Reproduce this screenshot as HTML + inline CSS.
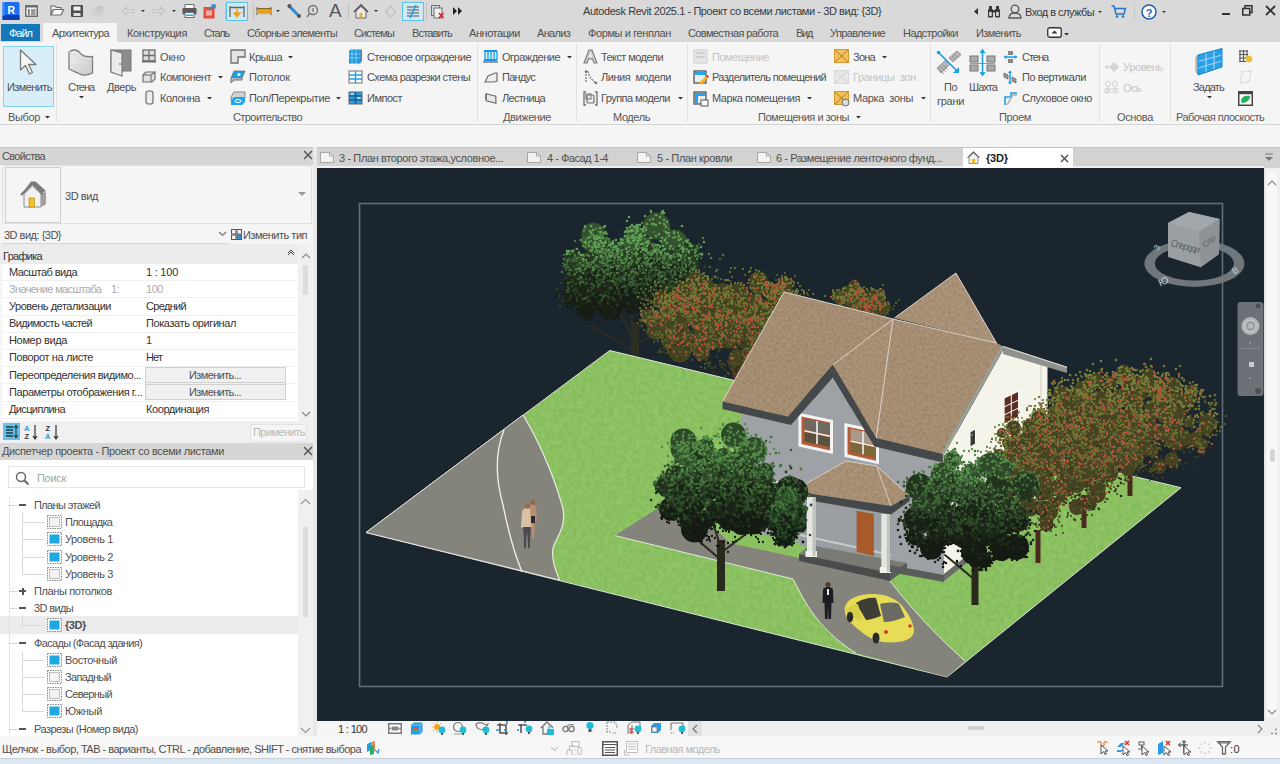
<!DOCTYPE html>
<html><head><meta charset="utf-8">
<style>
*{margin:0;padding:0;box-sizing:border-box}
html,body{width:1280px;height:764px;overflow:hidden;background:#f5f5f5;font-family:"Liberation Sans",sans-serif}
.a{position:absolute}
.t{position:absolute;white-space:pre;line-height:13px}
svg{position:absolute;overflow:visible}
</style></head><body>
<div class="a" style="left:0px;top:0px;width:1280px;height:23px;background:#d9d9d9;"></div>
<div class="a" style="left:0px;top:23px;width:1280px;height:19px;background:#d9d9d9;"></div>
<div class="a" style="left:0px;top:42px;width:1280px;height:82px;background:#f5f5f5;"></div>
<div class="a" style="left:0px;top:124px;width:1280px;height:1px;background:#d4d4d4;"></div>
<div class="a" style="left:0px;top:125px;width:1280px;height:23px;background:#f5f5f5;"></div>
<div class="t" style="left:583px;top:4.5px;font-size:11px;letter-spacing:-0.42px;color:#3a3a3a;font-weight:normal;">Autodesk Revit 2025.1 - Проект со всеми листами - 3D вид: {3D}</div>
<div class="t" style="left:1025px;top:5.5px;font-size:11px;letter-spacing:-0.54px;color:#3a3a3a;font-weight:normal;">Вход в службы</div>
<div class="a" style="left:1px;top:24px;width:39px;height:17px;background:#1278bb;"></div>
<div class="t" style="left:9px;top:26.5px;font-size:11px;letter-spacing:-1.01px;color:#ffffff;font-weight:normal;">Файл</div>
<div class="a" style="left:43px;top:23px;width:74px;height:19px;background:#f5f5f5;"></div>
<div class="t" style="left:52px;top:26.5px;font-size:11px;letter-spacing:-0.61px;color:#505050;font-weight:normal;">Архитектура</div>
<div class="t" style="left:127px;top:26.5px;font-size:11px;letter-spacing:-0.35px;color:#505050;font-weight:normal;">Конструкция</div>
<div class="t" style="left:204px;top:26.5px;font-size:11px;letter-spacing:-1.23px;color:#505050;font-weight:normal;">Сталь</div>
<div class="t" style="left:247px;top:26.5px;font-size:11px;letter-spacing:-0.64px;color:#505050;font-weight:normal;">Сборные элементы</div>
<div class="t" style="left:354px;top:26.5px;font-size:11px;letter-spacing:-0.87px;color:#505050;font-weight:normal;">Системы</div>
<div class="t" style="left:412px;top:26.5px;font-size:11px;letter-spacing:-0.83px;color:#505050;font-weight:normal;">Вставить</div>
<div class="t" style="left:469px;top:26.5px;font-size:11px;letter-spacing:-0.44px;color:#505050;font-weight:normal;">Аннотации</div>
<div class="t" style="left:537px;top:26.5px;font-size:11px;letter-spacing:-0.69px;color:#505050;font-weight:normal;">Анализ</div>
<div class="t" style="left:588px;top:26.5px;font-size:11px;letter-spacing:-0.39px;color:#505050;font-weight:normal;">Формы и генплан</div>
<div class="t" style="left:688px;top:26.5px;font-size:11px;letter-spacing:-0.63px;color:#505050;font-weight:normal;">Совместная работа</div>
<div class="t" style="left:796px;top:26.5px;font-size:11px;letter-spacing:-1.30px;color:#505050;font-weight:normal;">Вид</div>
<div class="t" style="left:830px;top:26.5px;font-size:11px;letter-spacing:-0.61px;color:#505050;font-weight:normal;">Управление</div>
<div class="t" style="left:903px;top:26.5px;font-size:11px;letter-spacing:-0.54px;color:#505050;font-weight:normal;">Надстройки</div>
<div class="t" style="left:976px;top:26.5px;font-size:11px;letter-spacing:-0.58px;color:#505050;font-weight:normal;">Изменить</div>
<div class="a" style="left:56px;top:44px;width:1px;height:78px;background:#e2e2e2;"></div>
<div class="a" style="left:477px;top:44px;width:1px;height:78px;background:#e2e2e2;"></div>
<div class="a" style="left:576px;top:44px;width:1px;height:78px;background:#e2e2e2;"></div>
<div class="a" style="left:687px;top:44px;width:1px;height:78px;background:#e2e2e2;"></div>
<div class="a" style="left:930px;top:44px;width:1px;height:78px;background:#e2e2e2;"></div>
<div class="a" style="left:1099px;top:44px;width:1px;height:78px;background:#e2e2e2;"></div>
<div class="a" style="left:1170px;top:44px;width:1px;height:78px;background:#e2e2e2;"></div>
<div class="a" style="left:3px;top:46px;width:51px;height:61px;background:#d8eef8;border:1px solid #86d3f0;"></div>
<div class="t" style="left:7px;top:80.5px;font-size:11px;letter-spacing:-0.58px;color:#505050;font-weight:normal;">Изменить</div>
<div class="t" style="left:8px;top:110.5px;font-size:11px;letter-spacing:-0.36px;color:#585858;font-weight:normal;">Выбор</div>
<div class="t" style="left:233px;top:110.5px;font-size:11px;letter-spacing:-0.58px;color:#585858;font-weight:normal;">Строительство</div>
<div class="t" style="left:503px;top:110.5px;font-size:11px;letter-spacing:-0.41px;color:#585858;font-weight:normal;">Движение</div>
<div class="t" style="left:613px;top:110.5px;font-size:11px;letter-spacing:-0.41px;color:#585858;font-weight:normal;">Модель</div>
<div class="t" style="left:758px;top:110.5px;font-size:11px;letter-spacing:-0.45px;color:#585858;font-weight:normal;">Помещения и зоны</div>
<div class="t" style="left:999px;top:110.5px;font-size:11px;letter-spacing:-0.36px;color:#585858;font-weight:normal;">Проем</div>
<div class="t" style="left:1117px;top:110.5px;font-size:11px;letter-spacing:-0.35px;color:#585858;font-weight:normal;">Основа</div>
<div class="t" style="left:1176px;top:110.5px;font-size:11px;letter-spacing:-0.56px;color:#585858;font-weight:normal;">Рабочая плоскость</div>
<div class="t" style="left:68px;top:80.5px;font-size:11px;letter-spacing:-1.03px;color:#505050;font-weight:normal;">Стена</div>
<div class="t" style="left:107px;top:80.5px;font-size:11px;letter-spacing:-0.43px;color:#505050;font-weight:normal;">Дверь</div>
<div class="t" style="left:944px;top:80.5px;font-size:11px;letter-spacing:-0.51px;color:#505050;font-weight:normal;">По</div>
<div class="t" style="left:937px;top:94.5px;font-size:11px;letter-spacing:-0.29px;color:#505050;font-weight:normal;">грани</div>
<div class="t" style="left:969px;top:80.5px;font-size:11px;letter-spacing:-0.92px;color:#505050;font-weight:normal;">Шахта</div>
<div class="t" style="left:1193px;top:80.5px;font-size:11px;letter-spacing:-0.80px;color:#505050;font-weight:normal;">Задать</div>
<div class="t" style="left:160px;top:50.5px;font-size:11px;letter-spacing:-0.14px;color:#505050;font-weight:normal;">Окно</div>
<div class="t" style="left:160px;top:70.5px;font-size:11px;letter-spacing:-0.50px;color:#505050;font-weight:normal;">Компонент</div>
<div class="t" style="left:160px;top:91.5px;font-size:11px;letter-spacing:-0.46px;color:#505050;font-weight:normal;">Колонна</div>
<div class="t" style="left:249px;top:50.5px;font-size:11px;letter-spacing:-0.47px;color:#505050;font-weight:normal;">Крыша</div>
<div class="t" style="left:249px;top:70.5px;font-size:11px;letter-spacing:-0.15px;color:#505050;font-weight:normal;">Потолок</div>
<div class="t" style="left:249px;top:91.5px;font-size:11px;letter-spacing:-0.33px;color:#505050;font-weight:normal;">Пол/Перекрытие</div>
<div class="t" style="left:367px;top:50.5px;font-size:11px;letter-spacing:-0.46px;color:#505050;font-weight:normal;">Стеновое ограждение</div>
<div class="t" style="left:367px;top:70.5px;font-size:11px;letter-spacing:-0.59px;color:#505050;font-weight:normal;">Схема разрезки стены</div>
<div class="t" style="left:367px;top:91.5px;font-size:11px;letter-spacing:-0.51px;color:#505050;font-weight:normal;">Импост</div>
<div class="t" style="left:502px;top:50.5px;font-size:11px;letter-spacing:-0.50px;color:#505050;font-weight:normal;">Ограждение</div>
<div class="t" style="left:502px;top:70.5px;font-size:11px;letter-spacing:-0.73px;color:#505050;font-weight:normal;">Пандус</div>
<div class="t" style="left:502px;top:91.5px;font-size:11px;letter-spacing:-0.69px;color:#505050;font-weight:normal;">Лестница</div>
<div class="t" style="left:601px;top:50.5px;font-size:11px;letter-spacing:-0.58px;color:#505050;font-weight:normal;">Текст модели</div>
<div class="t" style="left:601px;top:70.5px;font-size:11px;letter-spacing:-0.45px;color:#505050;font-weight:normal;">Линия  модели</div>
<div class="t" style="left:601px;top:91.5px;font-size:11px;letter-spacing:-0.55px;color:#505050;font-weight:normal;">Группа модели</div>
<div class="t" style="left:712px;top:70.5px;font-size:11px;letter-spacing:-0.64px;color:#505050;font-weight:normal;">Разделитель помещений</div>
<div class="t" style="left:712px;top:91.5px;font-size:11px;letter-spacing:-0.45px;color:#505050;font-weight:normal;">Марка помещения</div>
<div class="t" style="left:853px;top:50.5px;font-size:11px;letter-spacing:-0.74px;color:#505050;font-weight:normal;">Зона</div>
<div class="t" style="left:853px;top:91.5px;font-size:11px;letter-spacing:-0.35px;color:#505050;font-weight:normal;">Марка  зоны</div>
<div class="t" style="left:1022px;top:50.5px;font-size:11px;letter-spacing:-1.03px;color:#505050;font-weight:normal;">Стена</div>
<div class="t" style="left:1022px;top:70.5px;font-size:11px;letter-spacing:-0.48px;color:#505050;font-weight:normal;">По вертикали</div>
<div class="t" style="left:1022px;top:91.5px;font-size:11px;letter-spacing:-0.42px;color:#505050;font-weight:normal;">Слуховое окно</div>
<div class="t" style="left:712px;top:50.5px;font-size:11px;letter-spacing:-0.45px;color:#c4c4c4;font-weight:normal;">Помещение</div>
<div class="t" style="left:853px;top:70.5px;font-size:11px;letter-spacing:-0.35px;color:#c4c4c4;font-weight:normal;">Границы  зон</div>
<div class="t" style="left:1123px;top:60.5px;font-size:11px;letter-spacing:-0.34px;color:#c4c4c4;font-weight:normal;">Уровень</div>
<div class="t" style="left:1123px;top:81.5px;font-size:11px;letter-spacing:-0.60px;color:#c4c4c4;font-weight:normal;">Ось</div>
<svg style="left:44.5px;top:116px" width="5.0" height="2.5"><path d="M0 0H5.0L2.5 2.5Z" fill="#333"/></svg>
<svg style="left:217.5px;top:76px" width="5.0" height="2.5"><path d="M0 0H5.0L2.5 2.5Z" fill="#333"/></svg>
<svg style="left:206.5px;top:97px" width="5.0" height="2.5"><path d="M0 0H5.0L2.5 2.5Z" fill="#333"/></svg>
<svg style="left:287.5px;top:56px" width="5.0" height="2.5"><path d="M0 0H5.0L2.5 2.5Z" fill="#333"/></svg>
<svg style="left:335.5px;top:97px" width="5.0" height="2.5"><path d="M0 0H5.0L2.5 2.5Z" fill="#333"/></svg>
<svg style="left:566.5px;top:56px" width="5.0" height="2.5"><path d="M0 0H5.0L2.5 2.5Z" fill="#333"/></svg>
<svg style="left:677.5px;top:97px" width="5.0" height="2.5"><path d="M0 0H5.0L2.5 2.5Z" fill="#333"/></svg>
<svg style="left:806.5px;top:97px" width="5.0" height="2.5"><path d="M0 0H5.0L2.5 2.5Z" fill="#333"/></svg>
<svg style="left:855.5px;top:116px" width="5.0" height="2.5"><path d="M0 0H5.0L2.5 2.5Z" fill="#333"/></svg>
<svg style="left:881.5px;top:56px" width="5.0" height="2.5"><path d="M0 0H5.0L2.5 2.5Z" fill="#333"/></svg>
<svg style="left:920.5px;top:97px" width="5.0" height="2.5"><path d="M0 0H5.0L2.5 2.5Z" fill="#333"/></svg>
<svg style="left:78.5px;top:96px" width="5.0" height="2.5"><path d="M0 0H5.0L2.5 2.5Z" fill="#333"/></svg>
<svg style="left:1206.5px;top:96px" width="5.0" height="2.5"><path d="M0 0H5.0L2.5 2.5Z" fill="#333"/></svg>
<svg style="left:1098px;top:11px" width="4" height="2"><path d="M0 0H4L2 2Z" fill="#333"/></svg>
<svg style="left:1162px;top:11px" width="4" height="2"><path d="M0 0H4L2 2Z" fill="#333"/></svg>
<svg style="left:141px;top:10px" width="4" height="2"><path d="M0 0H4L2 2Z" fill="#333"/></svg>
<svg style="left:172px;top:10px" width="4" height="2"><path d="M0 0H4L2 2Z" fill="#333"/></svg>
<svg style="left:276px;top:10px" width="4" height="2"><path d="M0 0H4L2 2Z" fill="#333"/></svg>
<svg style="left:374px;top:10px" width="4" height="2"><path d="M0 0H4L2 2Z" fill="#333"/></svg>
<svg style="left:1063.5px;top:33px" width="5.0" height="2.5"><path d="M0 0H5.0L2.5 2.5Z" fill="#333"/></svg>
<div class="a" style="left:0px;top:147px;width:313px;height:18px;background:#d6d6d6;"></div>
<div class="a" style="left:0px;top:147px;width:313px;height:1px;background:#c8c8c8;"></div>
<div class="t" style="left:2px;top:149.5px;font-size:11px;letter-spacing:-0.66px;color:#505050;font-weight:normal;">Свойства</div>
<div class="a" style="left:313px;top:148px;width:4px;height:590px;background:#e8e8e8;"></div>
<div class="a" style="left:2px;top:165px;width:310px;height:59px;background:#f5f5f5;border:1px solid #e0e0e0;"></div>
<div class="a" style="left:5px;top:167px;width:56px;height:56px;background:#f5f5f5;border:1px solid #cfcfcf;"></div>
<div class="t" style="left:65px;top:189.5px;font-size:11px;letter-spacing:-0.42px;color:#505050;font-weight:normal;">3D вид</div>
<div class="t" style="left:4px;top:228.5px;font-size:11px;letter-spacing:-0.50px;color:#505050;font-weight:normal;">3D вид: {3D}</div>
<div class="t" style="left:243px;top:228.5px;font-size:11px;letter-spacing:-0.48px;color:#505050;font-weight:normal;">Изменить тип</div>
<div class="a" style="left:2px;top:243px;width:226px;height:1px;background:#d4d4d4;"></div>
<div class="a" style="left:0px;top:244px;width:298px;height:20px;background:#ececec;"></div>
<div class="t" style="left:3px;top:249.5px;font-size:11px;letter-spacing:-0.71px;color:#333;font-weight:normal;">Графика</div>
<div class="a" style="left:2px;top:264px;width:296px;height:157px;background:#ffffff;"></div>
<div class="a" style="left:2px;top:280px;width:296px;height:1px;background:#f0f0f0;"></div>
<div class="t" style="left:9px;top:265.5px;font-size:11px;letter-spacing:-0.55px;color:#333;font-weight:normal;">Масштаб вида</div>
<div class="t" style="left:146px;top:265.5px;font-size:11px;letter-spacing:-0.23px;color:#333;font-weight:normal;">1 : 100</div>
<div class="a" style="left:2px;top:297px;width:296px;height:1px;background:#f0f0f0;"></div>
<div class="t" style="left:9px;top:282.5px;font-size:11px;letter-spacing:-0.63px;color:#aaa;font-weight:normal;">Значение масштаба    1:</div>
<div class="t" style="left:146px;top:282.5px;font-size:11px;letter-spacing:-0.45px;color:#aaa;font-weight:normal;">100</div>
<div class="a" style="left:2px;top:315px;width:296px;height:1px;background:#f0f0f0;"></div>
<div class="t" style="left:9px;top:300.0px;font-size:11px;letter-spacing:-0.47px;color:#333;font-weight:normal;">Уровень детализации</div>
<div class="t" style="left:146px;top:300.0px;font-size:11px;letter-spacing:-0.67px;color:#333;font-weight:normal;">Средний</div>
<div class="a" style="left:2px;top:332px;width:296px;height:1px;background:#f0f0f0;"></div>
<div class="t" style="left:9px;top:317.0px;font-size:11px;letter-spacing:-0.66px;color:#333;font-weight:normal;">Видимость частей</div>
<div class="t" style="left:146px;top:317.0px;font-size:11px;letter-spacing:-0.41px;color:#333;font-weight:normal;">Показать оригинал</div>
<div class="a" style="left:2px;top:349px;width:296px;height:1px;background:#f0f0f0;"></div>
<div class="t" style="left:9px;top:334.0px;font-size:11px;letter-spacing:-0.34px;color:#333;font-weight:normal;">Номер вида</div>
<div class="t" style="left:146px;top:334.0px;font-size:11px;letter-spacing:-1.12px;color:#333;font-weight:normal;">1</div>
<div class="a" style="left:2px;top:366px;width:296px;height:1px;background:#f0f0f0;"></div>
<div class="t" style="left:9px;top:351.0px;font-size:11px;letter-spacing:-0.39px;color:#333;font-weight:normal;">Поворот на листе</div>
<div class="t" style="left:146px;top:351.0px;font-size:11px;letter-spacing:-0.91px;color:#333;font-weight:normal;">Нет</div>
<div class="a" style="left:2px;top:383px;width:296px;height:1px;background:#f0f0f0;"></div>
<div class="t" style="left:9px;top:368.5px;font-size:11px;letter-spacing:-0.47px;color:#333;font-weight:normal;">Переопределения видимо...</div>
<div class="a" style="left:2px;top:401px;width:296px;height:1px;background:#f0f0f0;"></div>
<div class="t" style="left:9px;top:386.0px;font-size:11px;letter-spacing:-0.41px;color:#333;font-weight:normal;">Параметры отображения г...</div>
<div class="a" style="left:2px;top:418px;width:296px;height:1px;background:#f0f0f0;"></div>
<div class="t" style="left:9px;top:403.0px;font-size:11px;letter-spacing:-0.63px;color:#333;font-weight:normal;">Дисциплина</div>
<div class="t" style="left:146px;top:403.0px;font-size:11px;letter-spacing:-0.42px;color:#333;font-weight:normal;">Координация</div>
<div class="a" style="left:145px;top:367px;width:141px;height:16px;background:#f0f0f0;border:1px solid #d0d0d0;"></div>
<div class="t" style="left:189px;top:368.5px;font-size:11px;letter-spacing:-0.62px;color:#505050;font-weight:normal;">Изменить...</div>
<div class="a" style="left:145px;top:384px;width:141px;height:16px;background:#f0f0f0;border:1px solid #d0d0d0;"></div>
<div class="t" style="left:189px;top:386.0px;font-size:11px;letter-spacing:-0.62px;color:#505050;font-weight:normal;">Изменить...</div>
<div class="a" style="left:298px;top:244px;width:14px;height:177px;background:#f0f0f0;"></div>
<div class="a" style="left:303px;top:265px;width:5px;height:30px;background:#dcdcdc;border-radius:2px;"></div>
<div class="a" style="left:0px;top:421px;width:313px;height:22px;background:#f0f0f0;"></div>
<div class="a" style="left:3px;top:423px;width:17px;height:17px;background:#5cc4ef;"></div>
<div class="a" style="left:250px;top:424px;width:57px;height:18px;background:#f5f5f5;border:1px solid #e3e3e3;"></div>
<div class="t" style="left:253px;top:425.5px;font-size:11px;letter-spacing:-0.54px;color:#b8b8b8;font-weight:normal;">Применить</div>
<div class="a" style="left:0px;top:443px;width:313px;height:17px;background:#d6d6d6;"></div>
<div class="t" style="left:2px;top:445.0px;font-size:11px;letter-spacing:-0.37px;color:#505050;font-weight:normal;">Диспетчер проекта - Проект со всеми листами</div>
<div class="a" style="left:0px;top:460px;width:313px;height:276px;background:#ffffff;"></div>
<div class="a" style="left:8px;top:466px;width:297px;height:22px;background:#ffffff;border:1px solid #e6e6e6;"></div>
<div class="t" style="left:37px;top:471.5px;font-size:11px;letter-spacing:-0.30px;color:#9aa8a8;font-weight:normal;">Поиск</div>
<div class="a" style="left:0px;top:616px;width:298px;height:18px;background:#ececec;"></div>
<div class="t" style="left:34px;top:499.0px;font-size:11px;letter-spacing:-0.63px;color:#505050;font-weight:normal;">Планы этажей</div>
<div class="t" style="left:65px;top:516.0px;font-size:11px;letter-spacing:-0.79px;color:#505050;font-weight:normal;">Площадка</div>
<div class="t" style="left:65px;top:533.0px;font-size:11px;letter-spacing:-0.39px;color:#505050;font-weight:normal;">Уровень 1</div>
<div class="t" style="left:65px;top:550.5px;font-size:11px;letter-spacing:-0.39px;color:#505050;font-weight:normal;">Уровень 2</div>
<div class="t" style="left:65px;top:567.5px;font-size:11px;letter-spacing:-0.39px;color:#505050;font-weight:normal;">Уровень 3</div>
<div class="t" style="left:34px;top:584.5px;font-size:11px;letter-spacing:-0.39px;color:#505050;font-weight:normal;">Планы потолков</div>
<div class="t" style="left:34px;top:601.5px;font-size:11px;letter-spacing:-0.63px;color:#505050;font-weight:normal;">3D виды</div>
<div class="t" style="left:65px;top:618.5px;font-size:11px;letter-spacing:-0.41px;color:#505050;font-weight:bold;">{3D}</div>
<div class="t" style="left:34px;top:636.5px;font-size:11px;letter-spacing:-0.66px;color:#505050;font-weight:normal;">Фасады (Фасад здания)</div>
<div class="t" style="left:65px;top:653.5px;font-size:11px;letter-spacing:-0.40px;color:#505050;font-weight:normal;">Восточный</div>
<div class="t" style="left:65px;top:670.5px;font-size:11px;letter-spacing:-0.67px;color:#505050;font-weight:normal;">Западный</div>
<div class="t" style="left:65px;top:687.5px;font-size:11px;letter-spacing:-0.64px;color:#505050;font-weight:normal;">Северный</div>
<div class="t" style="left:65px;top:704.5px;font-size:11px;letter-spacing:-0.32px;color:#505050;font-weight:normal;">Южный</div>
<div class="t" style="left:34px;top:722.5px;font-size:11px;letter-spacing:-0.54px;color:#505050;font-weight:normal;">Разрезы (Номер вида)</div>
<div class="a" style="left:298px;top:490px;width:15px;height:246px;background:#f0f0f0;"></div>
<div class="a" style="left:303px;top:527px;width:5px;height:90px;background:#dcdcdc;border-radius:2px;"></div>
<div class="a" style="left:317px;top:147px;width:963px;height:21px;background:#d2d2d2;"></div>
<div class="a" style="left:317px;top:147px;width:963px;height:1px;background:#c4c4c4;"></div>
<div class="a" style="left:317px;top:166px;width:947px;height:2px;background:#eeeeee;"></div>
<div class="t" style="left:339px;top:151.5px;font-size:11px;letter-spacing:-0.38px;color:#505050;font-weight:normal;">3 - План второго этажа,условное...</div>
<div class="t" style="left:547px;top:151.5px;font-size:11px;letter-spacing:-0.49px;color:#505050;font-weight:normal;">4 - Фасад 1-4</div>
<div class="t" style="left:657px;top:151.5px;font-size:11px;letter-spacing:-0.38px;color:#505050;font-weight:normal;">5 - План кровли</div>
<div class="t" style="left:776px;top:151.5px;font-size:11px;letter-spacing:-0.44px;color:#505050;font-weight:normal;">6 - Размещение ленточного фунд...</div>
<div class="a" style="left:963px;top:148px;width:110px;height:20px;background:#ffffff;"></div>
<div class="t" style="left:986px;top:151.5px;font-size:11px;letter-spacing:-0.16px;color:#222;font-weight:bold;">{3D}</div>
<div class="a" style="left:317px;top:168px;width:947px;height:553px;background:#1a252e;"></div>
<div class="a" style="left:1264px;top:168px;width:16px;height:553px;background:#f0f0f0;"></div>
<div class="a" style="left:317px;top:721px;width:963px;height:15px;background:#efefef;"></div>
<div class="a" style="left:317px;top:721px;width:371px;height:15px;background:#f5f5f5;"></div>
<div class="t" style="left:338px;top:722.5px;font-size:11px;letter-spacing:-0.66px;color:#333;font-weight:normal;">1 : 100</div>
<div class="a" style="left:0px;top:736px;width:1280px;height:23px;background:#f7f7f7;"></div>
<div class="a" style="left:0px;top:758px;width:1280px;height:1px;background:#c8d0d8;"></div>
<div class="a" style="left:0px;top:759px;width:1280px;height:5px;background:#dbe8f4;"></div>
<div class="t" style="left:2px;top:743.0px;font-size:11px;letter-spacing:-0.51px;color:#505050;font-weight:normal;">Щелчок - выбор, TAB - варианты, CTRL - добавление, SHIFT - снятие выбора</div>
<div class="t" style="left:645px;top:743.0px;font-size:11px;letter-spacing:-0.55px;color:#b8b8b8;font-weight:normal;">Главная модель</div>
<div class="t" style="left:1230px;top:743.0px;font-size:11px;letter-spacing:0.41px;color:#333;font-weight:normal;">:0</div>
<svg style="left:0;top:0" width="1280" height="764"><defs><clipPath id="vp"><rect x="317" y="168" width="947" height="553"/></clipPath><filter id="grain" x="0" y="0" width="100%" height="100%"><feTurbulence type="fractalNoise" baseFrequency="0.22" numOctaves="3" seed="3" result="n"/><feColorMatrix in="n" type="matrix" values="0.25 0 0 0 0.37  0.25 0 0 0 0.37  0.25 0 0 0 0.37  0 0 0 0 1" result="g"/><feBlend in="g" in2="SourceGraphic" mode="soft-light" result="b"/><feComposite in="b" in2="SourceGraphic" operator="in"/></filter><filter id="rough" x="0" y="0" width="100%" height="100%"><feTurbulence type="fractalNoise" baseFrequency="0.35" numOctaves="3" seed="5"/><feColorMatrix type="matrix" values="0 0 0 0 0.25  0 0 0 0 0.2  0 0 0 0 0.14  0 0 0 0.5 0"/><feComposite in2="SourceGraphic" operator="in"/><feBlend in2="SourceGraphic" mode="multiply"/></filter></defs><g clip-path="url(#vp)">
<rect x="359.5" y="203.5" width="863" height="483" fill="none" stroke="#5f6e76" stroke-width="1.6"/>
<path d="M635,381 L635,320" stroke="#2c2e22" stroke-width="8"/>
<path d="M635,352 L590,325 M636,345 L680,318 M634,340 L612,300 M635,335 L655,300" stroke="#2c2e22" stroke-width="2" fill="none" stroke-linecap="round"/>
<path d="M643 226a13 13 0 1 0 27 0a13 13 0 1 0 -27 0M582 238a12 12 0 1 0 23 0a12 12 0 1 0 -23 0M626 233a8 8 0 1 0 16 0a8 8 0 1 0 -16 0M593 245a8 8 0 1 0 17 0a8 8 0 1 0 -17 0M619 245a8 8 0 1 0 17 0a8 8 0 1 0 -17 0M634 245a9 9 0 1 0 18 0a9 9 0 1 0 -18 0M662 246a13 13 0 1 0 25 0a13 13 0 1 0 -25 0" fill="#34522e"/>
<path d="M598 251a11 11 0 1 0 22 0a11 11 0 1 0 -22 0M645 253a9 9 0 1 0 19 0a9 9 0 1 0 -19 0M563 262a10 10 0 1 0 21 0a10 10 0 1 0 -21 0M583 260a13 13 0 1 0 26 0a13 13 0 1 0 -26 0M589 257a13 13 0 1 0 25 0a13 13 0 1 0 -25 0M604 258a13 13 0 1 0 26 0a13 13 0 1 0 -26 0M620 265a11 11 0 1 0 22 0a11 11 0 1 0 -22 0M634 257a13 13 0 1 0 27 0a13 13 0 1 0 -27 0M647 263a13 13 0 1 0 25 0a13 13 0 1 0 -25 0M666 259a12 12 0 1 0 24 0a12 12 0 1 0 -24 0M674 258a13 13 0 1 0 25 0a13 13 0 1 0 -25 0M568 268a10 10 0 1 0 20 0a10 10 0 1 0 -20 0M580 269a13 13 0 1 0 26 0a13 13 0 1 0 -26 0M605 268a13 13 0 1 0 26 0a13 13 0 1 0 -26 0" fill="#263822"/>
<path d="M601 274a11 11 0 1 0 22 0a11 11 0 1 0 -22 0M626 278a11 11 0 1 0 23 0a11 11 0 1 0 -23 0M636 275a14 14 0 1 0 27 0a14 14 0 1 0 -27 0M647 273a13 13 0 1 0 26 0a13 13 0 1 0 -26 0M668 275a13 13 0 1 0 26 0a13 13 0 1 0 -26 0M563 286a11 11 0 1 0 22 0a11 11 0 1 0 -22 0M575 281a14 14 0 1 0 27 0a14 14 0 1 0 -27 0M594 287a12 12 0 1 0 24 0a12 12 0 1 0 -24 0M609 284a8 8 0 1 0 16 0a8 8 0 1 0 -16 0M623 280a11 11 0 1 0 21 0a11 11 0 1 0 -21 0M631 287a11 11 0 1 0 23 0a11 11 0 1 0 -23 0M654 283a9 9 0 1 0 19 0a9 9 0 1 0 -19 0M663 282a13 13 0 1 0 26 0a13 13 0 1 0 -26 0M691 287a10 10 0 1 0 20 0a10 10 0 1 0 -20 0M653 293a11 11 0 1 0 22 0a11 11 0 1 0 -22 0M689 294a11 11 0 1 0 23 0a11 11 0 1 0 -23 0" fill="#1b2619"/>
<path d="M564 298a8 8 0 1 0 17 0a8 8 0 1 0 -17 0M596 302a9 9 0 1 0 17 0a9 9 0 1 0 -17 0M606 295a10 10 0 1 0 20 0a10 10 0 1 0 -20 0M620 297a13 13 0 1 0 25 0a13 13 0 1 0 -25 0M643 297a8 8 0 1 0 16 0a8 8 0 1 0 -16 0M664 300a8 8 0 1 0 17 0a8 8 0 1 0 -17 0M578 307a9 9 0 1 0 17 0a9 9 0 1 0 -17 0M599 307a12 12 0 1 0 24 0a12 12 0 1 0 -24 0" fill="#171e15"/>
<path d="M676 300h0M657 264h0M616 284h0M647 290h0M585 315h0M626 311h0M581 314h0M578 309h0M604 314h0M667 314h0M657 287h0M671 310h0M579 313h0M647 298h0M663 270h0M589 307h0M589 311h0M640 286h0M593 303h0M614 288h0M665 304h0M592 312h0M656 294h0M589 311h0M567 299h0M696 280h0M609 298h0M615 288h0M612 308h0M596 303h0M648 291h0M684 270h0M708 303h0M674 292h0M612 309h0M621 291h0M693 301h0M672 292h0M668 288h0M558 296h0M689 298h0M659 274h0M658 285h0M567 311h0M621 285h0M639 317h0M572 307h0M670 275h0M685 307h0M664 302h0M577 314h0M581 303h0M572 298h0M652 273h0M601 315h0M598 308h0M638 289h0M610 308h0M636 290h0M641 289h0M694 284h0M614 305h0M615 289h0M642 280h0M647 291h0M628 280h0M583 314h0M620 283h0M658 305h0M578 291h0M614 319h0M625 288h0M567 294h0M660 291h0M613 309h0M679 297h0M570 289h0M670 292h0M647 300h0M632 307h0M617 295h0M653 290h0M616 296h0M613 290h0M661 281h0M704 301h0M590 274h0M604 315h0M578 291h0M592 311h0M649 300h0M586 289h0M677 315h0M604 312h0M619 294h0M596 305h0M673 303h0M582 306h0M637 288h0M617 294h0M590 317h0M575 299h0M647 289h0M669 290h0M671 309h0M647 289h0M587 320h0M657 291h0M615 288h0M600 298h0M612 276h0M604 300h0M702 288h0M636 299h0M640 299h0M643 300h0M633 278h0M647 304h0M592 287h0M610 294h0M623 295h0M583 313h0M638 278h0M609 300h0M664 284h0M667 299h0M601 311h0M675 307h0M611 315h0M679 283h0M590 283h0M675 306h0M607 288h0M680 303h0M626 302h0M682 289h0M655 304h0M618 298h0M628 283h0M580 307h0M590 312h0M612 292h0M667 296h0M583 305h0M600 299h0M646 305h0M585 309h0M576 302h0M644 282h0M608 284h0M612 310h0M682 280h0M585 309h0M652 329h0M660 281h0M643 295h0M614 295h0M600 293h0M625 295h0M607 309h0M593 292h0M606 304h0M649 299h0M653 286h0M675 316h0M616 307h0M646 286h0M654 303h0M622 320h0M582 298h0M619 316h0M610 322h0M623 301h0M617 302h0M608 296h0M702 302h0M661 284h0M656 300h0M644 293h0M653 306h0M570 307h0M589 314h0M593 314h0M602 312h0M570 308h0M586 311h0M679 296h0M649 305h0M651 305h0M660 285h0M584 306h0M618 294h0M626 298h0M638 291h0M676 278h0M606 289h0M630 292h0M691 292h0M575 317h0M622 298h0M576 290h0M662 282h0M698 285h0M686 316h0M572 306h0M581 314h0M637 283h0M606 298h0M612 284h0M591 299h0M582 305h0M713 297h0M692 298h0M626 283h0M608 294h0M573 296h0M598 303h0M623 297h0M577 289h0M568 304h0M652 301h0M654 326h0M566 300h0M663 292h0M687 296h0M704 292h0M657 298h0M681 304h0M652 294h0M664 304h0M601 305h0M572 292h0M658 289h0M709 292h0M628 294h0M677 319h0M579 302h0M669 304h0M684 288h0M589 312h0M670 288h0M618 315h0M675 278h0M652 296h0M599 309h0M604 280h0M593 299h0M624 303h0M580 311h0M612 309h0M709 300h0M610 289h0M565 299h0M579 309h0M613 304h0M593 297h0M611 310h0M570 275h0M604 296h0M603 312h0M660 282h0M594 310h0M565 295h0M667 288h0M562 292h0M675 303h0M571 296h0M618 288h0M663 299h0M638 321h0M592 306h0M577 289h0M612 301h0M587 316h0M610 305h0M580 314h0M613 290h0M667 303h0M676 292h0M599 275h0M674 292h0M687 273h0M612 304h0M676 273h0M711 286h0M691 281h0M576 304h0M558 293h0M582 324h0M670 306h0M665 285h0M613 317h0M591 315h0M567 294h0M699 293h0M601 311h0M637 292h0M711 290h0M595 303h0M705 289h0M625 306h0M581 310h0M598 321h0M573 293h0M638 281h0M692 297h0M628 299h0M633 286h0M695 306h0M639 298h0M663 294h0M604 297h0M569 306h0M605 298h0M580 296h0M599 293h0M578 305h0M582 300h0M672 296h0M687 296h0M605 305h0M623 303h0M619 286h0M653 293h0M601 316h0M663 301h0M650 295h0M566 289h0M628 268h0M666 293h0M576 303h0M601 309h0M594 299h0M703 300h0M610 294h0M624 295h0M620 319h0M568 290h0M592 278h0M691 288h0M573 300h0M621 327h0M706 291h0M611 298h0M647 293h0M607 290h0M588 303h0M573 271h0M572 300h0M577 309h0M647 299h0M664 306h0M556 296h0M663 303h0M689 298h0M570 291h0M685 269h0M645 285h0M605 307h0M594 307h0M674 294h0M610 297h0M626 330h0M636 291h0M605 297h0M670 308h0M607 292h0M605 320h0M582 303h0M660 287h0M641 306h0M610 300h0M647 287h0M598 307h0M607 293h0M643 298h0M563 294h0M580 303h0M667 301h0M657 277h0M667 296h0M669 300h0M599 310h0M661 291h0M584 291h0M638 281h0M615 298h0M646 302h0M620 310h0M654 288h0M577 315h0M638 280h0M635 321h0M611 289h0M662 294h0M589 324h0M648 289h0M628 285h0M591 320h0M586 311h0M617 290h0M613 299h0M693 284h0M669 289h0M615 320h0M642 299h0M642 297h0M604 304h0M701 288h0M654 281h0M674 301h0M567 307h0M605 304h0M669 310h0M594 286h0M608 301h0M617 306h0M578 311h0M610 300h0M602 309h0M588 300h0M664 293h0M701 291h0M582 276h0M684 284h0M654 299h0M562 301h0M679 296h0M653 319h0M646 321h0M624 326h0M646 292h0M671 309h0M568 289h0M591 310h0M607 309h0M652 294h0M633 317h0M634 286h0M635 286h0M578 305h0M582 320h0M665 301h0M619 287h0M639 294h0M668 286h0M650 285h0M638 306h0M596 296h0M676 280h0M617 277h0M594 304h0M615 292h0M626 307h0M613 297h0M594 300h0M657 289h0M584 308h0M706 287h0M662 289h0M611 303h0M657 287h0M610 312h0M616 269h0M678 306h0M620 290h0M609 293h0M632 281h0M578 299h0M614 300h0M626 301h0M568 306h0M601 297h0M579 306h0M630 305h0M594 309h0M633 318h0M688 292h0M665 299h0M636 320h0M622 300h0M581 289h0M618 311h0M598 299h0M701 286h0M639 281h0M597 324h0M614 316h0M629 306h0M620 309h0M620 284h0M647 300h0M619 319h0M621 273h0M577 285h0M580 299h0M682 301h0M598 314h0M612 296h0M615 302h0M705 283h0M666 304h0M578 276h0M609 289h0M566 288h0M634 298h0M693 286h0M635 312h0M641 296h0M678 298h0M587 291h0M573 270h0M667 296h0M613 306h0M598 287h0M577 323h0M622 277h0M639 298h0M564 302h0M623 307h0M608 317h0M651 285h0M583 311h0M573 300h0M677 309h0M610 309h0M606 296h0M640 283h0M606 292h0M603 304h0M681 289h0M601 305h0M605 297h0M583 277h0M628 297h0M608 303h0M579 295h0M584 310h0M655 301h0M623 289h0M611 278h0M621 296h0M613 313h0M614 318h0M597 307h0M573 290h0M649 305h0M586 320h0M646 305h0M661 283h0M613 286h0M623 298h0M685 317h0M694 306h0M577 306h0M647 300h0M626 283h0M618 317h0M611 287h0M615 283h0M659 300h0M627 275h0M582 279h0M614 287h0M656 280h0M696 287h0M593 293h0M703 301h0M674 299h0M663 291h0M613 287h0M639 293h0M609 286h0M611 304h0M677 291h0M709 295h0M583 306h0M640 307h0M622 289h0M607 320h0M570 303h0M579 296h0M651 304h0M639 292h0M572 273h0M646 282h0M584 316h0M594 311h0M675 297h0M703 285h0M579 303h0M699 301h0M655 308h0" stroke="#161c14" stroke-width="2.1" stroke-linecap="round"/>
<path d="M636 261h0M702 287h0M629 280h0M642 282h0M600 302h0M661 287h0M621 260h0M684 275h0M668 262h0M632 284h0M665 264h0M580 268h0M585 298h0M615 293h0M691 287h0M611 280h0M587 266h0M636 289h0M566 278h0M569 259h0M683 254h0M714 276h0M597 268h0M582 264h0M667 288h0M613 298h0M627 274h0M651 288h0M670 271h0M617 286h0M645 259h0M589 267h0M579 279h0M670 262h0M625 287h0M661 260h0M612 288h0M570 263h0M645 284h0M573 291h0M662 277h0M608 292h0M658 295h0M621 297h0M661 282h0M712 287h0M653 269h0M569 261h0M697 283h0M586 260h0M627 286h0M577 291h0M605 286h0M692 296h0M614 279h0M658 275h0M633 282h0M610 264h0M576 289h0M650 270h0M577 298h0M625 287h0M686 263h0M705 267h0M643 271h0M670 281h0M647 266h0M627 289h0M709 280h0M674 275h0M617 285h0M680 259h0M621 265h0M593 294h0M655 273h0M644 292h0M700 277h0M671 291h0M705 282h0M617 305h0M655 270h0M669 272h0M607 296h0M691 287h0M629 281h0M624 279h0M651 279h0M665 277h0M644 264h0M644 254h0M665 274h0M674 298h0M655 287h0M580 282h0M668 251h0M673 286h0M663 266h0M672 256h0M579 276h0M682 277h0M629 281h0M573 282h0M583 261h0M634 280h0M603 272h0M591 273h0M690 276h0M592 270h0M577 301h0M579 294h0M631 286h0M602 282h0M683 271h0M597 258h0M570 299h0M657 256h0M626 294h0M609 297h0M591 291h0M697 276h0M696 270h0M694 280h0M599 270h0M611 266h0M584 264h0M633 261h0M676 298h0M681 275h0M642 266h0M557 289h0M602 295h0M649 255h0M682 267h0M673 258h0M692 285h0M635 251h0M582 279h0M588 301h0M590 301h0M638 266h0M600 260h0M607 275h0M619 266h0M716 292h0M640 297h0M677 281h0M632 275h0M627 295h0M666 292h0M664 289h0M616 283h0M636 292h0M656 282h0M651 296h0M619 291h0M700 295h0M606 272h0M651 278h0M643 287h0M685 276h0M660 291h0M681 288h0M605 292h0M580 285h0M659 276h0M585 284h0M618 283h0M580 268h0M672 300h0M596 260h0M649 284h0M624 274h0M616 262h0M651 292h0M597 283h0M626 294h0M676 275h0M644 269h0M619 294h0M664 275h0M614 284h0M650 265h0M672 287h0M614 300h0M675 296h0M588 297h0M599 284h0M645 265h0M599 278h0M659 273h0M645 298h0M644 272h0M702 284h0M559 296h0M637 287h0M588 291h0M611 287h0M652 270h0M690 289h0M669 287h0M673 270h0M618 289h0M618 273h0M640 273h0M645 274h0M609 298h0M651 264h0M713 285h0M583 280h0M658 264h0M580 263h0M686 286h0M560 306h0M670 288h0M638 254h0M563 301h0M617 265h0M618 284h0M666 279h0M683 268h0M582 299h0M655 297h0M669 273h0M641 284h0M571 296h0M627 274h0M586 283h0M634 293h0M671 278h0M605 272h0M697 274h0M596 268h0M608 267h0M616 257h0M621 282h0M572 280h0M644 257h0M659 268h0M587 273h0M635 293h0M608 303h0M600 283h0M651 273h0M675 272h0M689 277h0M710 296h0M572 286h0M581 272h0M575 289h0M668 298h0M637 258h0M684 261h0M643 299h0M633 292h0M654 288h0M610 289h0M569 269h0M586 269h0M626 276h0M692 290h0M683 258h0M586 262h0M657 291h0M620 264h0M616 265h0M669 272h0M680 277h0M588 291h0M583 266h0M695 261h0M585 275h0M561 283h0M609 271h0M700 293h0M674 286h0M603 295h0M627 292h0M609 270h0M666 285h0M649 300h0M604 297h0M574 276h0M575 294h0M676 290h0M666 271h0M607 266h0M580 295h0M675 285h0" stroke="#2a4126" stroke-width="2.9" stroke-linecap="round"/>
<path d="M637 239h0M586 262h0M581 258h0M583 260h0M716 271h0M647 249h0M607 252h0M599 251h0M610 261h0M649 272h0M568 267h0M585 260h0M658 270h0M580 283h0M570 283h0M646 247h0M603 260h0M615 256h0M643 292h0M622 277h0M581 282h0M568 274h0M665 276h0M651 252h0M685 274h0M600 255h0M576 261h0M592 252h0M679 268h0M624 277h0M679 250h0M681 276h0M593 267h0M584 271h0M616 266h0M594 286h0M658 274h0M672 270h0M603 257h0M696 280h0M585 246h0M660 273h0M636 255h0M657 258h0M651 267h0M568 283h0M700 279h0M603 279h0M617 285h0M643 263h0M578 264h0M620 250h0M654 259h0M606 242h0M618 279h0M602 263h0M632 250h0M598 242h0M622 270h0M644 254h0M587 267h0M678 270h0M644 257h0M668 261h0M646 265h0M606 239h0M660 259h0M701 258h0M573 271h0M593 246h0M674 249h0M663 256h0M567 264h0M648 244h0M619 257h0M613 281h0M574 250h0M647 256h0M648 285h0M687 250h0M654 263h0M662 276h0M684 263h0M604 245h0M618 268h0M628 264h0M629 244h0M685 267h0M628 268h0M607 264h0M625 266h0M586 268h0M583 282h0M681 249h0M673 262h0M696 285h0M658 259h0M603 282h0M661 277h0M580 255h0M634 271h0M609 241h0M680 271h0M629 278h0M600 251h0M648 261h0M670 284h0M637 247h0M640 270h0M600 251h0M610 262h0M674 249h0M595 266h0M652 255h0M633 269h0M681 270h0M566 268h0M652 251h0M580 263h0M626 273h0M625 245h0M693 287h0M604 251h0M614 276h0M625 275h0M586 279h0M621 262h0M665 273h0M575 257h0M608 246h0M688 283h0M576 260h0M650 252h0M675 272h0M614 282h0M607 252h0M603 279h0M656 267h0M684 248h0M648 242h0M632 256h0M580 271h0M662 243h0M673 257h0M601 247h0M675 247h0M650 280h0M660 272h0M624 259h0M588 265h0M712 284h0M663 281h0M648 280h0M710 267h0M614 277h0M635 274h0M619 257h0M652 250h0M650 267h0M651 254h0M661 252h0M674 282h0M592 284h0M654 244h0M568 253h0M598 253h0M623 270h0M614 265h0M645 247h0M583 273h0M639 261h0M700 284h0M601 255h0M608 261h0M637 292h0M652 270h0M645 259h0M673 276h0M622 260h0M610 264h0M667 263h0M594 269h0M611 269h0M584 238h0M596 249h0M609 257h0M637 284h0M599 271h0M629 284h0M708 283h0M678 264h0M660 241h0M599 267h0M720 259h0M646 263h0M614 263h0M640 259h0M686 264h0M641 289h0M581 278h0M603 263h0M587 244h0M596 276h0M651 266h0M622 287h0M610 276h0M620 281h0M582 265h0M564 255h0M668 264h0M686 252h0M650 276h0M632 279h0M693 277h0M625 280h0M604 266h0M634 277h0M666 254h0M631 282h0M612 255h0M629 254h0M626 262h0M705 283h0M602 243h0M648 253h0M635 252h0M695 266h0M691 276h0M599 247h0M578 279h0M597 259h0M574 259h0M696 249h0M590 237h0M596 252h0M664 241h0M604 276h0M606 258h0M690 262h0M621 279h0M599 285h0M690 281h0M639 265h0M611 281h0M654 259h0M637 251h0M577 272h0M637 240h0M674 293h0M677 252h0M633 283h0M658 275h0M654 262h0M689 261h0M671 272h0M688 251h0M570 259h0M698 289h0M587 283h0M609 245h0M623 282h0M585 272h0M666 267h0M612 248h0M625 280h0M640 279h0M578 264h0M621 279h0" stroke="#3f6638" stroke-width="2.5" stroke-linecap="round"/>
<path d="M591 241h0M659 250h0M611 260h0M627 240h0M670 249h0M596 257h0M594 261h0M620 243h0M580 263h0M619 258h0M593 246h0M596 229h0M632 253h0M593 247h0M613 253h0M603 250h0M622 263h0M623 262h0M615 248h0M689 253h0M675 267h0M658 249h0M627 238h0M611 245h0M599 232h0M579 252h0M695 256h0M646 258h0M641 252h0M659 251h0M666 238h0M679 254h0M709 254h0M579 257h0M627 257h0M617 247h0M602 235h0M568 261h0M678 233h0M600 262h0M595 252h0M661 255h0M607 257h0M636 229h0M589 256h0M663 267h0M618 243h0M639 269h0M671 265h0M606 232h0M685 257h0M643 229h0M609 253h0M684 249h0M606 257h0M663 258h0M614 261h0M584 231h0M652 254h0M649 243h0M623 240h0M629 254h0M642 223h0M610 257h0M627 241h0M631 237h0M636 253h0M631 238h0M593 268h0M702 255h0M596 260h0M626 248h0M618 257h0M680 255h0M700 254h0M611 252h0M594 270h0M639 267h0M609 255h0M643 232h0M703 238h0M615 258h0M665 253h0M646 250h0M621 241h0M695 250h0M656 252h0M690 258h0M678 256h0M608 260h0M630 238h0M687 249h0M679 254h0M689 266h0M650 220h0M692 250h0M607 234h0M627 259h0M598 244h0M627 257h0M647 264h0M603 264h0M573 252h0M607 263h0M636 244h0M659 252h0M673 249h0M683 243h0M673 238h0M597 257h0M621 260h0M612 254h0M593 255h0M590 251h0M645 255h0M618 254h0M686 255h0M637 263h0M696 251h0M618 252h0M686 249h0M619 245h0M606 242h0M671 259h0M599 246h0M691 262h0M595 247h0M647 258h0M637 262h0M664 250h0M635 269h0M671 257h0M606 242h0M697 259h0M578 269h0M596 238h0M646 228h0M643 236h0M633 235h0M639 247h0M639 235h0M689 264h0M638 231h0M695 253h0M660 247h0M651 264h0M567 252h0M665 256h0M646 249h0M665 225h0M630 231h0M628 252h0M670 265h0M669 258h0M636 234h0M603 253h0M591 265h0M657 256h0M651 258h0M657 255h0M585 226h0M632 237h0M602 246h0M597 252h0M647 250h0M626 260h0M583 246h0M593 245h0M563 264h0M670 247h0M606 243h0M583 259h0M683 267h0M654 259h0M600 247h0M614 263h0M587 255h0M605 264h0M586 260h0M600 241h0M624 263h0" stroke="#548b4a" stroke-width="2.3" stroke-linecap="round"/>
<path d="M667 274h0M664 283h0M587 280h0M607 284h0M703 296h0M655 298h0M698 296h0M675 267h0M650 304h0M625 289h0M589 278h0M699 285h0M602 262h0M614 278h0M602 304h0M698 294h0M638 276h0M677 297h0M633 293h0M638 297h0M570 305h0M641 264h0M601 292h0M654 286h0M639 275h0M684 267h0M702 287h0M589 272h0M579 306h0M706 277h0M636 281h0M699 292h0M692 302h0M627 270h0M684 271h0M679 270h0M656 269h0M667 281h0M687 287h0M664 272h0M664 286h0M620 280h0M607 269h0M598 277h0M583 263h0M666 279h0M623 280h0M569 285h0M699 300h0M690 288h0M594 307h0M604 292h0M706 297h0M650 301h0M569 290h0M624 261h0M678 299h0M652 287h0M606 278h0M658 296h0M605 272h0M638 283h0M606 269h0M613 279h0M628 304h0M597 281h0M636 305h0M616 285h0M583 272h0M565 296h0M693 290h0M617 264h0M671 284h0M641 287h0M570 297h0M608 286h0M645 290h0M581 302h0M641 298h0M568 302h0M699 289h0M567 293h0M668 281h0M623 287h0M657 285h0M652 293h0M563 265h0M595 297h0M609 287h0M650 282h0M680 274h0M695 304h0M707 294h0M643 288h0M715 282h0M690 278h0M600 282h0M648 281h0M608 267h0M591 287h0M671 292h0M666 295h0M599 280h0M628 275h0M620 275h0M570 292h0M636 283h0M626 291h0M627 281h0M675 288h0M659 278h0M601 299h0M588 282h0M597 298h0M586 270h0M646 295h0M646 293h0M669 278h0M652 283h0M587 286h0M641 282h0M598 277h0M644 287h0M687 273h0M697 296h0M641 298h0M578 277h0M583 273h0M595 308h0M663 304h0M586 303h0M607 269h0M604 295h0M598 266h0M693 269h0M626 277h0M657 300h0M655 277h0M656 285h0M594 289h0M664 288h0M598 280h0M578 307h0M612 307h0M599 278h0M629 304h0M690 271h0M648 283h0M668 301h0M569 263h0M636 277h0M657 269h0M565 296h0M688 263h0M617 294h0M669 269h0M578 297h0M633 272h0M640 298h0M610 300h0M694 292h0M585 272h0M638 281h0M618 287h0M650 293h0M625 284h0M570 284h0M627 303h0M600 276h0M636 278h0M612 270h0M576 278h0M665 302h0M693 294h0M610 263h0M605 274h0M689 266h0M612 279h0M667 284h0M609 304h0M664 296h0M683 286h0M671 282h0M616 301h0M635 266h0M651 276h0M646 293h0M608 284h0M555 290h0M643 290h0M600 281h0M623 282h0M636 299h0M600 272h0M634 270h0M676 293h0M573 272h0M598 303h0M664 285h0M648 272h0M656 262h0M634 273h0M592 296h0M637 291h0M651 283h0M696 303h0M711 280h0M670 277h0M671 289h0M623 295h0M670 303h0M640 264h0M666 288h0M673 283h0M676 309h0M619 283h0M697 281h0M686 276h0M629 270h0M577 307h0M577 307h0M680 283h0M609 294h0M622 269h0M619 285h0M680 302h0M680 269h0M611 270h0M570 277h0M645 273h0M635 290h0M605 293h0M607 289h0M646 272h0M575 295h0M677 298h0M635 282h0M566 300h0M712 279h0M666 282h0M590 300h0M601 305h0M602 268h0M678 305h0M584 275h0M614 266h0M605 282h0M648 274h0M635 290h0M656 284h0M637 296h0M689 290h0M677 289h0M620 300h0M651 296h0M576 284h0M632 273h0M610 263h0M625 282h0M637 278h0M663 288h0M610 299h0M667 288h0M687 276h0M629 270h0M582 304h0M669 291h0M651 275h0M655 289h0M592 306h0M614 273h0M645 274h0M629 295h0M599 306h0M662 299h0M624 309h0M605 293h0M681 296h0M689 286h0M609 285h0M578 293h0M638 289h0M643 306h0M694 291h0M697 283h0M674 286h0M614 290h0" stroke="#202e1d" stroke-width="2.3" stroke-linecap="round"/>
<path d="M713 285h0M684 258h0M675 269h0M680 286h0M618 263h0M622 267h0M673 289h0M620 269h0M672 294h0M630 285h0M680 268h0M675 262h0M635 262h0M607 265h0M621 271h0M709 281h0M675 257h0M582 270h0M600 254h0M625 286h0M610 267h0M635 281h0M587 268h0M619 273h0M617 266h0M689 261h0M639 240h0M585 262h0M690 273h0M603 297h0M627 254h0M621 251h0M576 284h0M563 266h0M678 268h0M644 284h0M600 280h0M613 278h0M625 268h0M581 267h0M570 261h0M592 272h0M629 253h0M642 279h0M653 250h0M615 279h0M611 255h0M600 275h0M649 273h0M584 264h0M605 277h0M648 279h0M640 269h0M566 270h0M647 267h0M656 290h0M640 284h0M686 275h0M645 250h0M620 247h0M655 263h0M694 267h0M602 300h0M656 256h0M662 282h0M604 251h0M617 280h0M661 254h0M658 283h0M669 284h0M703 279h0M682 269h0M623 277h0M626 275h0M599 254h0M600 266h0M651 280h0M636 284h0M570 275h0M592 272h0M568 292h0M581 259h0M646 279h0M603 258h0M615 279h0M686 257h0M673 258h0M625 291h0M708 293h0M638 247h0M647 283h0M671 282h0M605 265h0M622 287h0M568 287h0M671 286h0M673 270h0M655 275h0M635 281h0M675 261h0M665 264h0M615 275h0M633 280h0M598 287h0M663 272h0M708 279h0M689 259h0M708 289h0M645 278h0M671 281h0M617 279h0M654 268h0M691 268h0M605 259h0M567 290h0M636 242h0M647 284h0M609 249h0M632 270h0M644 256h0M676 283h0M653 276h0M631 273h0M664 283h0M586 298h0M604 261h0M568 262h0M684 286h0M597 281h0M646 280h0M645 273h0M667 264h0M605 295h0M594 264h0M658 293h0M655 284h0M658 253h0M592 288h0M565 267h0M633 243h0M633 280h0M598 273h0M619 266h0M712 292h0M610 274h0M711 289h0M679 267h0M603 265h0M693 287h0M600 258h0M639 242h0M629 269h0M683 270h0M662 272h0M579 264h0M700 281h0M687 280h0M614 262h0M569 289h0M593 275h0M604 278h0M630 266h0M716 277h0M588 290h0M665 276h0M669 288h0M703 283h0M692 257h0M671 275h0M657 260h0M686 263h0M690 260h0M693 250h0M645 295h0M606 274h0M639 293h0M699 291h0M619 277h0M659 264h0M634 289h0M584 254h0M604 256h0M646 276h0M607 265h0M584 264h0M604 279h0M643 293h0M663 275h0M632 269h0M641 264h0M616 279h0M618 249h0M685 284h0M646 296h0M660 286h0M676 251h0M601 258h0M607 248h0M687 296h0M621 280h0M597 278h0M647 262h0M675 263h0M585 298h0M569 273h0M607 264h0M617 288h0M655 281h0M673 277h0M667 264h0M673 278h0M689 266h0M617 268h0M606 260h0M626 246h0M608 281h0M682 265h0M609 250h0M664 282h0M655 258h0M615 285h0M633 255h0M611 259h0M574 266h0M634 247h0M624 286h0M620 264h0M599 256h0M604 282h0M606 254h0M635 285h0M683 255h0M662 254h0M675 293h0M658 279h0M667 295h0M625 276h0M573 258h0M632 261h0M649 277h0M606 270h0M654 290h0M568 260h0M606 256h0M625 257h0M621 247h0M593 246h0M636 272h0M668 267h0M590 265h0M568 259h0M644 263h0M632 277h0M668 259h0M577 259h0M611 254h0M651 290h0M672 281h0M640 271h0M600 295h0M677 262h0M633 285h0M630 262h0M590 279h0M677 251h0M659 278h0M699 244h0M682 262h0M600 284h0M591 284h0M634 276h0M691 276h0M609 255h0M584 299h0M596 260h0M643 269h0M622 271h0M608 271h0M638 275h0M681 299h0M624 260h0M578 260h0M705 288h0M718 278h0M689 291h0M617 279h0M606 251h0M703 275h0M668 271h0M665 290h0M638 285h0M597 265h0M694 288h0M632 271h0M614 273h0M577 265h0M610 288h0M579 256h0M682 264h0M672 286h0M660 280h0M649 291h0" stroke="#35532f" stroke-width="2.4" stroke-linecap="round"/>
<path d="M628 233h0M634 249h0M606 265h0M692 269h0M664 231h0M612 243h0M623 250h0M664 260h0M646 243h0M723 255h0M621 254h0M669 256h0M692 273h0M711 258h0M605 253h0M652 263h0M598 250h0M675 274h0M661 254h0M636 256h0M634 272h0M593 270h0M617 273h0M665 241h0M674 254h0M683 246h0M604 253h0M610 254h0M631 272h0M602 237h0M650 255h0M601 243h0M694 278h0M633 271h0M583 273h0M652 246h0M617 255h0M608 252h0M644 248h0M584 230h0M580 268h0M636 237h0M583 242h0M581 255h0M634 243h0M617 266h0M575 241h0M693 270h0M685 260h0M567 261h0M686 265h0M650 266h0M650 252h0M568 253h0M637 227h0M565 265h0M631 264h0M584 266h0M603 259h0M628 266h0M629 251h0M604 272h0M681 257h0M570 254h0M664 256h0M697 255h0M658 259h0M694 268h0M597 238h0M635 240h0M586 240h0M645 239h0M657 248h0M661 276h0M609 245h0M621 250h0M593 249h0M589 263h0M606 255h0M597 266h0M684 269h0M657 261h0M564 259h0M594 268h0M616 249h0M598 244h0M641 235h0M651 265h0M617 269h0M591 232h0M577 258h0M620 251h0M660 272h0M625 259h0M689 243h0M602 251h0M573 261h0M634 254h0M602 258h0M596 245h0M654 232h0M678 238h0M594 262h0M604 271h0M697 246h0M629 232h0M598 275h0M584 256h0M587 263h0M589 264h0M649 241h0M602 246h0M562 272h0M656 270h0M696 277h0M611 267h0M675 257h0M585 247h0M602 262h0M680 276h0M601 262h0M698 248h0M690 259h0M580 271h0M645 255h0M602 250h0M592 235h0M589 245h0M657 253h0M643 243h0M632 262h0M637 273h0M717 270h0M681 273h0M593 234h0M620 257h0M634 238h0M613 256h0M707 276h0M632 260h0M619 266h0M603 257h0M601 237h0M666 263h0M602 248h0M634 249h0M624 279h0M655 249h0M643 273h0M638 242h0M576 269h0M627 255h0M686 271h0M662 262h0M598 250h0M606 240h0M665 258h0M629 275h0M613 255h0M583 261h0M677 254h0M646 270h0M608 269h0M617 252h0M616 254h0M606 251h0M607 258h0M644 245h0M579 268h0M664 268h0M645 255h0M638 245h0M648 261h0M686 267h0M618 260h0M686 249h0M640 258h0M596 250h0M597 253h0M608 266h0M611 273h0M652 244h0M595 259h0M665 258h0M613 241h0M647 261h0M663 263h0M583 265h0M602 269h0M625 236h0M663 258h0M642 239h0M609 255h0M590 267h0M654 247h0M649 264h0M654 248h0M694 263h0M673 256h0M668 265h0M681 259h0M644 262h0M698 256h0M642 266h0M635 234h0M608 274h0M581 277h0M575 274h0M596 259h0M600 234h0M628 231h0M624 269h0M629 263h0M669 268h0M646 263h0M621 252h0M644 232h0M654 245h0M568 251h0M609 239h0M592 263h0M605 249h0M665 279h0M584 256h0M686 255h0M607 250h0M609 242h0M613 267h0M593 248h0M654 246h0M619 259h0M660 258h0M649 259h0M675 267h0M607 238h0M596 243h0M641 235h0M698 280h0M600 247h0M592 262h0M622 253h0M586 247h0M570 270h0M629 241h0M587 266h0M682 247h0M650 238h0M611 247h0M575 255h0M621 244h0M669 229h0M580 269h0M585 269h0" stroke="#4a7841" stroke-width="2.5" stroke-linecap="round"/>
<path d="M612 243h0M637 230h0M600 238h0M687 242h0M567 251h0M579 253h0M662 212h0M613 250h0M633 238h0M610 256h0M689 251h0M661 241h0M644 249h0M654 252h0M661 253h0M591 250h0M627 252h0M641 234h0M572 251h0M663 211h0M638 243h0M664 220h0M660 223h0M599 238h0M604 246h0M683 252h0M592 250h0M591 233h0M669 236h0M641 244h0M616 240h0M671 256h0M667 233h0M639 237h0M617 251h0M595 245h0M638 241h0M704 242h0M669 233h0M674 233h0M652 224h0M595 246h0M681 256h0M641 237h0M601 232h0M593 230h0M590 231h0M596 239h0M666 227h0M631 230h0M648 244h0M648 253h0M639 238h0M586 243h0M631 231h0M638 249h0M623 243h0M605 242h0M597 236h0M633 241h0M637 254h0M664 224h0M652 254h0M626 231h0M640 235h0M599 245h0M583 255h0M674 232h0M629 217h0M622 255h0M665 240h0M629 247h0M701 247h0M630 231h0M664 213h0M643 250h0M647 224h0M627 221h0M661 252h0M646 242h0M667 222h0M656 245h0M628 231h0M611 244h0M628 239h0M598 247h0M636 232h0M628 236h0M634 227h0M601 241h0M626 249h0M646 230h0M627 228h0M651 211h0M577 249h0M636 226h0M661 253h0M683 250h0M569 251h0M651 238h0M654 224h0M645 235h0M647 242h0M630 258h0M638 228h0M656 215h0M618 249h0M637 232h0M605 233h0M594 236h0M667 254h0M614 247h0M604 243h0M643 244h0M682 248h0M641 236h0M601 256h0M660 223h0M595 242h0M631 243h0M659 234h0M591 226h0M638 259h0M621 243h0M602 243h0M658 245h0M617 251h0M645 216h0M616 246h0M686 241h0M667 243h0M604 227h0M681 239h0M628 231h0M692 246h0M613 244h0M621 239h0M632 236h0M583 259h0M596 247h0M637 244h0M663 250h0M679 246h0M604 246h0M682 226h0M600 228h0M611 256h0M629 241h0M671 246h0M679 236h0M641 229h0M643 230h0M632 225h0M630 227h0M665 249h0M688 240h0M662 238h0M638 238h0M675 237h0M690 246h0M663 246h0M679 240h0M639 225h0M647 246h0M609 245h0M628 242h0M625 236h0M599 237h0M604 233h0M656 236h0M585 227h0M656 250h0M638 231h0M666 232h0M679 260h0M680 245h0M585 242h0M589 246h0M600 252h0M609 250h0M651 212h0M656 225h0M592 247h0M581 240h0M637 228h0M702 254h0M656 245h0M648 241h0M590 237h0M594 238h0M690 244h0M594 243h0M668 254h0M689 258h0M588 238h0M605 226h0M581 255h0M642 248h0M660 246h0M603 238h0M633 231h0M653 219h0M644 227h0M596 239h0M635 237h0M646 251h0M660 217h0M599 244h0M637 225h0M589 242h0M635 240h0M636 246h0M637 227h0M633 230h0M597 239h0M628 241h0M640 225h0M613 242h0M602 249h0M662 213h0M621 244h0M595 239h0M654 251h0M567 254h0M643 231h0M636 248h0M625 232h0M640 240h0" stroke="#5f9e54" stroke-width="2.7" stroke-linecap="round"/>
<path d="M735,378 L735,350" stroke="#5a3222" stroke-width="5"/>
<path d="M685 283a11 11 0 1 0 22 0a11 11 0 1 0 -22 0M696 286a9 9 0 1 0 18 0a9 9 0 1 0 -18 0M750 283a9 9 0 1 0 17 0a9 9 0 1 0 -17 0M763 289a7 7 0 1 0 14 0a7 7 0 1 0 -14 0M777 286a8 8 0 1 0 16 0a8 8 0 1 0 -16 0M653 299a8 8 0 1 0 16 0a8 8 0 1 0 -16 0M667 299a9 9 0 1 0 18 0a9 9 0 1 0 -18 0M675 296a12 12 0 1 0 23 0a12 12 0 1 0 -23 0M691 302a12 12 0 1 0 23 0a12 12 0 1 0 -23 0M702 295a11 11 0 1 0 23 0a11 11 0 1 0 -23 0M715 295a9 9 0 1 0 17 0a9 9 0 1 0 -17 0M728 293a10 10 0 1 0 20 0a10 10 0 1 0 -20 0M750 302a7 7 0 1 0 14 0a7 7 0 1 0 -14 0M770 295a9 9 0 1 0 18 0a9 9 0 1 0 -18 0M658 306a10 10 0 1 0 21 0a10 10 0 1 0 -21 0M676 305a9 9 0 1 0 18 0a9 9 0 1 0 -18 0M684 308a10 10 0 1 0 19 0a10 10 0 1 0 -19 0M699 312a11 11 0 1 0 21 0a11 11 0 1 0 -21 0M710 309a11 11 0 1 0 22 0a11 11 0 1 0 -22 0M724 307a11 11 0 1 0 21 0a11 11 0 1 0 -21 0M736 304a11 11 0 1 0 23 0a11 11 0 1 0 -23 0M753 312a10 10 0 1 0 19 0a10 10 0 1 0 -19 0M766 307a9 9 0 1 0 17 0a9 9 0 1 0 -17 0M788 309a10 10 0 1 0 19 0a10 10 0 1 0 -19 0M641 317a8 8 0 1 0 17 0a8 8 0 1 0 -17 0M657 316a8 8 0 1 0 17 0a8 8 0 1 0 -17 0M666 321a12 12 0 1 0 23 0a12 12 0 1 0 -23 0M679 315a9 9 0 1 0 18 0a9 9 0 1 0 -18 0M691 320a8 8 0 1 0 16 0a8 8 0 1 0 -16 0M704 323a9 9 0 1 0 17 0a9 9 0 1 0 -17 0M717 316a8 8 0 1 0 16 0a8 8 0 1 0 -16 0M735 319a8 8 0 1 0 15 0a8 8 0 1 0 -15 0M744 320a8 8 0 1 0 16 0a8 8 0 1 0 -16 0M756 322a8 8 0 1 0 16 0a8 8 0 1 0 -16 0M767 321a10 10 0 1 0 20 0a10 10 0 1 0 -20 0M781 323a10 10 0 1 0 21 0a10 10 0 1 0 -21 0M647 327a10 10 0 1 0 19 0a10 10 0 1 0 -19 0M673 334a9 9 0 1 0 18 0a9 9 0 1 0 -18 0M693 333a7 7 0 1 0 15 0a7 7 0 1 0 -15 0M700 333a11 11 0 1 0 22 0a11 11 0 1 0 -22 0M712 331a9 9 0 1 0 18 0a9 9 0 1 0 -18 0M723 329a11 11 0 1 0 22 0a11 11 0 1 0 -22 0M733 327a12 12 0 1 0 24 0a12 12 0 1 0 -24 0M749 326a11 11 0 1 0 23 0a11 11 0 1 0 -23 0M767 329a8 8 0 1 0 17 0a8 8 0 1 0 -17 0M662 339a8 8 0 1 0 15 0a8 8 0 1 0 -15 0M680 342a9 9 0 1 0 18 0a9 9 0 1 0 -18 0M696 342a9 9 0 1 0 19 0a9 9 0 1 0 -19 0M711 340a9 9 0 1 0 18 0a9 9 0 1 0 -18 0M722 341a8 8 0 1 0 16 0a8 8 0 1 0 -16 0M737 340a10 10 0 1 0 21 0a10 10 0 1 0 -21 0M751 342a9 9 0 1 0 18 0a9 9 0 1 0 -18 0M771 337a7 7 0 1 0 14 0a7 7 0 1 0 -14 0M783 336a7 7 0 1 0 15 0a7 7 0 1 0 -15 0M668 347a12 12 0 1 0 23 0a12 12 0 1 0 -23 0M693 352a8 8 0 1 0 16 0a8 8 0 1 0 -16 0M745 353a8 8 0 1 0 16 0a8 8 0 1 0 -16 0M768 350a11 11 0 1 0 22 0a11 11 0 1 0 -22 0M729 361a9 9 0 1 0 17 0a9 9 0 1 0 -17 0M754 359a8 8 0 1 0 16 0a8 8 0 1 0 -16 0" fill="#434321"/>
<path d="M744 351h0M759 361h0M713 373h0M760 347h0M771 370h0M702 370h0M749 358h0M721 349h0M730 348h0M715 368h0M770 364h0M669 356h0M699 359h0M718 350h0M738 367h0M716 372h0M764 364h0M780 361h0M736 369h0M785 361h0M698 350h0M736 382h0M730 366h0M759 353h0M718 374h0M680 358h0M740 371h0M756 364h0M742 358h0M700 349h0M768 366h0M738 346h0M790 355h0M720 364h0M774 353h0M696 371h0M731 358h0M769 373h0M775 345h0M701 357h0M747 372h0M763 363h0M702 349h0M736 371h0M729 350h0M727 372h0M764 362h0M760 350h0" stroke="#2e2a18" stroke-width="2.5" stroke-linecap="round"/>
<path d="M713 340h0M776 340h0M699 350h0M772 361h0M656 333h0M745 358h0M764 331h0M674 343h0M696 349h0M705 347h0M772 359h0M767 357h0M792 342h0M708 352h0M740 341h0M761 329h0M772 359h0M680 358h0M743 343h0M681 340h0M681 341h0M708 340h0M767 364h0M785 339h0M676 345h0M771 367h0M704 347h0M711 333h0M702 348h0M755 338h0M690 351h0M755 326h0M707 358h0M771 327h0M718 336h0M736 364h0M751 356h0M710 344h0M751 345h0M769 345h0M771 356h0M707 352h0M731 345h0M722 344h0M696 345h0M747 364h0M725 345h0M680 331h0M739 367h0M686 363h0M765 356h0M731 367h0M790 343h0M715 345h0M792 348h0M724 333h0M698 339h0M782 350h0M710 345h0M709 352h0M764 365h0M687 347h0M741 361h0M757 346h0M663 348h0M743 349h0M665 337h0M733 345h0M788 347h0M683 340h0M739 340h0M724 345h0M729 340h0M745 356h0M777 364h0M766 345h0M670 346h0M673 351h0M690 350h0M701 361h0M800 333h0M742 344h0M725 337h0M724 369h0M767 355h0M698 354h0M755 348h0M784 341h0M674 345h0M744 337h0M763 355h0M786 337h0M751 353h0M792 341h0M740 338h0M747 345h0M718 341h0M734 342h0M668 345h0M724 343h0M721 344h0M763 353h0M727 340h0M761 330h0M712 331h0M712 340h0M670 350h0M693 342h0M780 328h0M672 358h0M745 341h0M670 346h0M683 345h0M690 349h0M729 361h0M649 333h0M746 347h0" stroke="#38361c" stroke-width="2.7" stroke-linecap="round"/>
<path d="M708 327h0M744 320h0M756 325h0M756 314h0M742 314h0M768 352h0M685 345h0M787 321h0M748 359h0M693 349h0M736 352h0M784 336h0M792 354h0M741 352h0M751 318h0M785 338h0M699 336h0M698 352h0M652 332h0M684 340h0M659 321h0M725 339h0M702 349h0M733 367h0M794 322h0M693 308h0M697 342h0M702 325h0M654 320h0M728 320h0M746 326h0M676 328h0M731 345h0M752 328h0M756 359h0M665 340h0M669 342h0M714 339h0M674 352h0M788 334h0M657 329h0M686 319h0M698 359h0M676 334h0M696 339h0M698 348h0M697 353h0M742 321h0M792 349h0M736 340h0M736 348h0M733 366h0M689 356h0M799 327h0M723 305h0M762 325h0M728 339h0M796 318h0M764 327h0M772 329h0M761 368h0M762 345h0M722 367h0M730 358h0M686 349h0M678 340h0M763 325h0M760 328h0M665 330h0M647 333h0M715 327h0M770 357h0M755 363h0M725 339h0M684 338h0M660 323h0M671 344h0M722 334h0M787 335h0M700 314h0M701 337h0M663 320h0M746 328h0M783 346h0M711 331h0M697 337h0M776 332h0M713 343h0M773 336h0M696 320h0M757 336h0M709 356h0M731 334h0M649 327h0M785 338h0M724 319h0M765 368h0M777 336h0M695 327h0M664 324h0M700 333h0M775 335h0M715 342h0M703 323h0M790 340h0M795 340h0M758 347h0M766 348h0M713 335h0M664 342h0M710 363h0M749 327h0M769 361h0M731 332h0M742 334h0M764 324h0M754 371h0M690 324h0M759 324h0M709 363h0M706 360h0M729 328h0M787 358h0M670 323h0M764 331h0M720 317h0M678 333h0M694 338h0M728 362h0M658 322h0M775 339h0M653 332h0M671 317h0M667 336h0M780 328h0M784 343h0M733 348h0M742 379h0M696 341h0M713 338h0M745 328h0M728 321h0M763 328h0M687 334h0M741 339h0M754 343h0M660 352h0M752 329h0M741 327h0M747 315h0M706 342h0M724 344h0M761 377h0M766 350h0M719 351h0M766 322h0M673 344h0M768 317h0M741 335h0M787 327h0M655 336h0M692 360h0M773 341h0M775 333h0M678 316h0M716 345h0M716 346h0M769 356h0M666 349h0M699 335h0M676 335h0M730 365h0M702 342h0M784 362h0M749 329h0M732 335h0M797 325h0M743 324h0M731 327h0M736 324h0M752 358h0M702 340h0M772 335h0M758 376h0M745 359h0M722 331h0M663 339h0M751 335h0M696 315h0M757 355h0M773 353h0M742 357h0M696 327h0M748 349h0M771 331h0M672 339h0M675 348h0M786 336h0M674 342h0M707 359h0M750 356h0M785 341h0M688 344h0M690 313h0M711 331h0M707 322h0M696 350h0M793 324h0M712 368h0M685 351h0M717 335h0M750 352h0M731 365h0M788 337h0M786 343h0M783 348h0M699 331h0M752 344h0M773 357h0M776 349h0M688 352h0M696 346h0M738 332h0M771 327h0M740 360h0M722 326h0M645 322h0M752 339h0M782 345h0M708 339h0M735 352h0M751 335h0M655 339h0M715 337h0M758 350h0M727 325h0M689 337h0M696 342h0M760 366h0M718 323h0M748 368h0M742 317h0" stroke="#424221" stroke-width="2.8" stroke-linecap="round"/>
<path d="M768 325h0M768 351h0M737 315h0M748 319h0M690 341h0M733 324h0M674 350h0M780 319h0M655 334h0M663 341h0M688 308h0M748 318h0M709 312h0M686 333h0M760 308h0M720 364h0M786 336h0M718 331h0M663 336h0M723 364h0M765 320h0M776 339h0M744 314h0M725 376h0M769 320h0M782 352h0M738 337h0M773 325h0M657 334h0M796 335h0M762 327h0M767 317h0M709 336h0M717 319h0M770 361h0M733 341h0M692 311h0M744 352h0M680 307h0M666 331h0M663 341h0M736 338h0M737 328h0M731 321h0M707 363h0M701 308h0M749 329h0M705 329h0M715 328h0M776 354h0M677 325h0M705 323h0M720 343h0M671 314h0M741 370h0M784 334h0M720 309h0M714 323h0M751 343h0M685 356h0M650 321h0M705 346h0M786 333h0M751 357h0M684 337h0M720 337h0M778 321h0M681 338h0M710 295h0M707 326h0M730 362h0M706 338h0M772 311h0M688 347h0M692 351h0M681 324h0M734 374h0M691 311h0M686 309h0M782 328h0M684 302h0M687 353h0M681 309h0M743 323h0M716 318h0M674 315h0M789 350h0M778 339h0M807 310h0M752 319h0M767 354h0M775 350h0M780 319h0M725 343h0M703 293h0M747 319h0M803 325h0M709 350h0M649 316h0M797 347h0M711 323h0M782 358h0M730 324h0M721 329h0M697 319h0M759 325h0M702 351h0M694 323h0M798 331h0M698 346h0M665 318h0M713 308h0M694 339h0M673 310h0M652 327h0M651 321h0M776 317h0M742 318h0M797 319h0M684 316h0M765 316h0M674 299h0M656 299h0M714 343h0M759 349h0M708 324h0M699 340h0M678 336h0M727 332h0M715 339h0M659 328h0M756 338h0M746 317h0M722 326h0M764 361h0M788 307h0M677 339h0M784 337h0M789 336h0M652 318h0M763 374h0M693 337h0M728 340h0M685 341h0M698 339h0M709 344h0M791 329h0M739 355h0M773 297h0M782 317h0M726 318h0M704 358h0M771 320h0M688 303h0M677 310h0M771 317h0M672 329h0M732 343h0M673 350h0M765 327h0M692 316h0M749 329h0M744 322h0M755 322h0M644 317h0M745 317h0M699 342h0M699 335h0M756 383h0M713 324h0M708 346h0M761 320h0M772 354h0M752 337h0M726 341h0M675 321h0M693 345h0M653 334h0M663 335h0M680 337h0M713 348h0M658 314h0M696 336h0M765 359h0M765 309h0M758 352h0M754 314h0M729 335h0M686 308h0M782 309h0M759 339h0M670 324h0M758 340h0M807 316h0M668 345h0M669 306h0M649 314h0M711 315h0M776 317h0M728 319h0M720 330h0M773 327h0M687 313h0M649 316h0M756 358h0M719 333h0M699 339h0M682 314h0M662 338h0M768 327h0M700 309h0M719 325h0M786 333h0M784 340h0M693 317h0M785 335h0M715 367h0M700 343h0M659 352h0M697 321h0M660 315h0M647 325h0M711 347h0M720 298h0M743 328h0M757 309h0M761 315h0M672 351h0M722 318h0M674 315h0M748 318h0M719 306h0M710 316h0M673 335h0M737 336h0M650 324h0M752 319h0M711 328h0M782 340h0M659 319h0M657 324h0M692 314h0M754 344h0M711 344h0M777 349h0M766 296h0M758 353h0M661 337h0M721 326h0M698 305h0M751 311h0M753 361h0M719 330h0M751 358h0M758 336h0M717 317h0M744 352h0M772 343h0M682 316h0M765 356h0M692 331h0M764 323h0M729 347h0M707 329h0M699 349h0M709 324h0M660 350h0M733 312h0M680 312h0M696 352h0M740 335h0M700 358h0M656 318h0M705 314h0M757 319h0M725 365h0M666 353h0M749 331h0M668 322h0M768 318h0M764 306h0M663 352h0M764 365h0M756 358h0M702 316h0M749 322h0M784 326h0M772 326h0M739 363h0M779 314h0M759 319h0M743 337h0M797 342h0M753 309h0M782 338h0M793 343h0M789 311h0M720 325h0M699 349h0M725 319h0M681 306h0M693 337h0M661 319h0M698 310h0M727 326h0M666 325h0M666 341h0M722 332h0M775 366h0M664 326h0M743 339h0M718 321h0M803 305h0M734 335h0M700 341h0M693 346h0M723 305h0M695 307h0M704 329h0M687 312h0M748 362h0M767 309h0M775 349h0M770 341h0M683 338h0M759 345h0M718 378h0M713 334h0M768 316h0M768 366h0M687 336h0M661 327h0M632 317h0M691 317h0M771 349h0M787 338h0M700 360h0M686 322h0M773 314h0M703 347h0M758 364h0M786 323h0M792 353h0M768 366h0M672 337h0M666 347h0M787 325h0M698 339h0M782 351h0M692 326h0M796 318h0M657 335h0M744 324h0M716 344h0M778 313h0M792 336h0M739 359h0M696 327h0M697 354h0M777 344h0M762 351h0M708 319h0M729 374h0M758 327h0M672 308h0M744 349h0M735 332h0M692 312h0M702 352h0M761 364h0M735 323h0M752 326h0M717 357h0M743 316h0M728 325h0M700 350h0M674 319h0" stroke="#4c4e25" stroke-width="2.1" stroke-linecap="round"/>
<path d="M671 317h0M756 337h0M673 332h0M710 314h0M690 352h0M680 302h0M785 328h0M788 291h0M644 311h0M709 349h0M706 356h0M641 321h0M759 362h0M674 310h0M688 343h0M703 328h0M779 338h0M669 309h0M662 342h0M699 336h0M729 302h0M742 331h0M681 312h0M715 321h0M791 328h0M728 311h0M672 340h0M668 345h0M740 317h0M707 349h0M696 346h0M754 331h0M728 373h0M732 300h0M781 324h0M783 319h0M799 306h0M701 367h0M666 320h0M712 333h0M777 286h0M787 330h0M762 364h0M687 316h0M727 311h0M808 295h0M711 347h0M746 322h0M746 351h0M766 346h0M729 344h0M760 322h0M723 334h0M731 301h0M743 324h0M785 359h0M790 319h0M766 342h0M779 345h0M694 308h0M666 296h0M769 356h0M688 344h0M648 332h0M743 321h0M705 293h0M769 336h0M676 307h0M660 334h0M733 320h0M711 341h0M657 312h0M794 305h0M754 285h0M711 315h0M654 296h0M779 345h0M791 337h0M706 317h0M733 296h0M765 344h0M674 332h0M767 305h0M717 304h0M717 308h0M739 317h0M687 301h0M788 303h0M761 336h0M746 314h0M775 344h0M667 337h0M761 347h0M657 311h0M711 306h0M800 299h0M696 309h0M744 359h0M672 302h0M742 323h0M704 337h0M674 328h0M752 332h0M792 334h0M654 323h0M683 300h0M747 291h0M679 330h0M703 327h0M743 327h0M737 327h0M756 317h0M716 295h0M782 328h0M751 346h0M792 312h0M662 341h0M660 337h0M764 290h0M694 310h0M699 343h0M783 303h0M703 332h0M714 296h0M713 334h0M676 306h0M677 301h0M691 344h0M667 318h0M677 294h0M790 317h0M779 321h0M774 354h0M694 320h0M712 288h0M754 303h0M786 337h0M767 343h0M787 335h0M726 326h0M694 328h0M727 331h0M715 307h0M703 314h0M651 316h0M737 319h0M768 339h0M762 327h0M784 334h0M690 343h0M695 347h0M764 318h0M654 319h0M771 304h0M663 336h0M781 292h0M679 308h0M704 339h0M771 297h0M748 325h0M708 301h0M703 320h0M760 365h0M720 330h0M727 314h0M747 349h0M784 323h0M706 307h0M666 327h0M740 326h0M760 354h0M696 296h0M732 337h0M642 312h0M680 344h0M708 353h0M739 313h0M771 336h0M745 314h0M767 323h0M799 313h0M762 312h0M718 296h0M738 311h0M721 305h0M662 304h0M785 341h0M746 361h0M658 341h0M708 336h0M783 330h0M690 305h0M746 321h0M778 311h0M773 313h0M771 307h0M752 340h0M698 310h0M712 320h0M648 301h0M763 284h0M700 334h0M705 364h0M761 325h0M763 308h0M757 292h0M756 350h0M705 368h0M753 306h0M757 362h0M695 348h0M671 339h0M746 339h0M734 321h0M750 286h0M731 303h0M728 326h0M748 362h0M684 339h0M666 333h0M763 318h0M781 302h0M708 317h0M762 327h0M785 336h0M717 346h0M765 320h0M707 319h0M713 335h0M711 307h0M756 297h0M668 352h0M748 327h0M757 319h0M710 330h0M666 320h0M719 304h0M732 327h0M781 328h0M743 355h0M725 292h0M698 326h0M699 290h0M738 353h0M752 307h0M683 312h0M648 299h0M655 326h0M692 350h0M739 322h0M753 358h0M722 317h0M654 342h0M699 290h0M756 345h0M766 358h0M736 306h0M736 364h0M670 310h0M764 351h0M651 318h0M754 306h0M714 335h0M789 334h0M737 315h0M657 338h0M793 331h0M732 303h0M660 332h0M761 352h0M716 324h0M804 294h0M746 357h0M708 316h0M769 310h0M714 296h0M778 346h0M721 332h0M743 361h0M750 305h0M719 315h0M695 346h0M715 340h0M718 323h0M794 324h0M761 356h0M766 287h0M644 304h0M715 347h0M770 338h0M670 308h0M779 341h0M775 361h0M758 347h0M722 342h0M722 335h0M800 307h0M779 359h0M785 315h0M674 319h0M774 289h0M734 363h0M697 296h0M670 318h0M689 324h0M692 293h0M700 336h0M694 294h0M708 320h0M791 320h0M782 344h0M754 291h0M749 334h0M772 321h0M745 295h0M709 366h0M788 303h0M760 350h0M691 315h0M662 308h0M754 349h0M769 365h0M700 349h0M746 351h0M645 305h0M739 303h0M740 304h0M724 331h0M701 356h0M756 291h0M731 319h0M667 335h0M790 328h0M657 315h0M741 312h0M672 303h0M652 332h0M666 303h0M748 361h0M722 297h0M687 291h0M685 313h0M710 343h0M654 301h0M794 344h0M732 302h0M781 333h0M709 347h0M705 299h0M758 353h0M659 331h0M791 291h0M800 314h0M711 330h0M799 336h0M764 306h0M670 317h0M756 322h0M727 310h0M665 303h0M713 347h0M670 301h0M684 305h0M712 328h0M785 295h0M713 323h0M790 329h0M771 334h0M727 333h0M762 289h0M737 332h0M770 343h0M743 351h0M691 300h0M693 351h0M764 336h0M716 324h0M638 323h0M749 314h0M739 321h0M641 311h0M776 322h0M758 327h0M776 328h0M780 348h0M796 300h0M658 312h0M777 302h0M755 303h0M706 310h0M783 285h0M733 298h0M739 311h0M729 343h0M771 326h0M671 293h0M737 347h0M750 312h0M652 311h0M653 302h0M772 361h0M789 297h0M677 357h0M683 325h0M710 295h0M699 298h0M784 290h0M682 342h0M717 296h0M676 301h0M738 326h0M666 346h0M704 286h0M773 296h0M715 321h0M760 302h0M685 323h0M761 361h0M765 333h0M712 336h0M680 329h0M710 307h0M736 306h0M703 303h0M737 318h0M772 325h0M656 286h0M755 318h0M745 319h0M715 313h0M654 305h0M774 292h0M778 326h0M753 337h0M680 304h0M729 343h0M701 327h0M722 343h0M747 371h0M771 322h0M756 312h0M785 344h0M792 329h0M730 294h0M722 342h0M720 361h0M729 330h0M767 358h0M758 350h0M708 288h0M721 312h0M740 336h0M715 348h0M691 303h0M772 367h0M745 318h0M674 337h0M763 323h0M740 324h0M724 305h0M698 346h0M712 331h0M675 343h0M779 345h0" stroke="#575b2a" stroke-width="2.2" stroke-linecap="round"/>
<path d="M715 326h0M672 293h0M705 325h0M791 334h0M704 289h0M795 303h0M758 355h0M676 324h0M723 332h0M779 281h0M773 312h0M771 329h0M666 340h0M692 320h0M774 311h0M760 292h0M718 307h0M689 343h0M787 333h0M682 342h0M750 298h0M699 340h0M734 342h0M714 296h0M778 286h0M727 309h0M743 354h0M734 336h0M711 338h0M767 330h0M678 308h0M767 349h0M676 322h0M795 308h0M768 296h0M675 307h0M668 300h0M752 307h0M676 296h0M665 298h0M782 334h0M747 290h0M735 334h0M758 323h0M753 324h0M718 339h0M708 339h0M787 340h0M767 314h0M774 337h0M757 297h0M748 320h0M667 297h0M694 291h0M698 308h0M680 352h0M683 304h0M720 293h0M697 289h0M797 289h0M757 319h0M707 288h0M662 338h0M660 302h0M722 318h0M754 346h0M686 339h0M772 326h0M652 318h0M682 300h0M778 291h0M719 343h0M715 298h0M667 302h0M784 332h0M691 349h0M754 308h0M690 317h0M719 325h0M742 307h0M790 314h0M782 288h0M757 300h0M706 334h0M706 335h0M774 337h0M757 288h0M683 306h0M698 305h0M697 355h0M757 283h0M697 298h0M798 324h0M800 316h0M672 337h0M796 290h0M739 342h0M721 316h0M784 325h0M704 320h0M766 286h0M735 317h0M661 298h0M807 293h0M795 308h0M708 302h0M742 322h0M713 339h0M771 347h0M790 322h0M708 287h0M782 322h0M752 337h0M774 344h0M709 295h0M682 312h0M712 279h0M741 318h0M692 317h0M769 317h0M785 287h0M787 312h0M706 333h0M688 307h0M805 304h0M687 290h0M768 327h0M703 284h0M764 352h0M713 297h0M743 288h0M758 322h0M766 289h0M759 319h0M786 323h0M750 304h0M800 321h0M785 331h0M794 314h0M777 275h0M801 320h0M758 298h0M709 305h0M770 328h0M771 311h0M768 327h0M757 333h0M723 312h0M791 329h0M763 308h0M773 325h0M674 336h0M755 292h0M766 284h0M733 318h0M769 324h0M754 316h0M759 342h0M734 331h0M683 309h0M678 340h0M642 326h0M762 290h0M667 279h0M695 316h0M670 345h0M739 344h0M714 292h0M750 328h0M711 336h0M675 292h0M731 298h0M668 306h0M707 321h0M784 323h0M735 341h0M751 313h0M703 303h0M658 307h0M749 320h0M714 344h0M758 322h0M714 300h0M723 292h0M687 313h0M811 310h0M779 306h0M717 309h0M792 315h0M690 286h0M741 331h0M686 317h0M790 292h0M693 289h0M704 320h0M731 329h0M752 317h0M767 309h0M738 341h0M700 297h0M697 328h0M677 338h0M734 322h0M784 331h0M777 335h0M655 335h0M784 320h0M775 292h0M701 324h0M686 311h0M776 311h0M755 335h0M774 333h0M696 313h0M731 354h0M681 296h0M690 292h0M785 273h0M759 350h0M672 316h0M662 313h0M759 339h0M790 336h0M703 339h0M740 319h0M786 343h0M783 339h0M666 346h0M775 304h0M723 320h0M776 301h0M759 317h0M663 317h0M736 335h0M749 332h0M747 327h0M674 340h0M788 347h0M757 351h0M683 311h0M696 338h0M708 347h0M709 297h0M661 322h0M751 356h0M745 315h0M667 345h0M711 306h0M784 342h0M779 282h0M754 302h0M770 325h0M801 300h0M705 333h0M731 345h0M792 309h0M803 305h0M708 343h0M694 285h0M716 336h0M658 297h0M666 308h0M744 318h0M756 336h0M746 293h0M767 353h0M794 284h0M644 330h0M691 294h0M690 319h0M735 303h0M782 292h0M747 357h0M666 314h0M707 325h0M694 307h0M760 324h0M769 300h0M669 347h0M667 329h0M678 291h0M785 333h0M740 324h0M794 332h0M783 337h0M662 314h0M791 294h0M747 316h0M754 350h0M662 326h0M752 319h0M760 334h0M755 350h0M666 313h0M808 315h0M642 299h0M754 311h0M766 344h0M699 328h0M654 316h0M758 301h0M640 320h0M705 301h0M707 320h0M751 344h0M776 297h0M656 323h0M682 324h0M690 322h0M722 322h0M688 330h0M726 331h0M671 320h0M728 294h0M777 335h0M707 345h0M658 335h0M667 305h0M773 297h0M688 343h0M750 288h0M644 305h0M692 286h0M807 306h0M773 297h0M787 335h0M768 327h0M776 280h0M716 340h0M651 325h0M704 315h0M787 293h0M738 326h0M794 311h0M774 312h0M748 321h0M745 314h0M776 306h0M695 303h0M696 297h0M691 303h0M669 293h0M656 319h0M666 304h0M764 308h0M769 313h0M699 324h0M716 285h0M646 314h0M689 302h0M658 334h0M772 288h0M765 326h0M750 313h0M664 313h0M753 338h0M670 333h0M677 310h0M709 316h0M717 310h0M789 324h0M656 332h0M757 276h0M797 309h0M654 314h0M691 346h0M743 298h0M745 275h0M734 317h0M775 294h0M719 299h0M742 322h0M816 305h0M711 327h0M795 292h0M707 347h0M772 295h0M703 352h0M671 313h0M730 281h0M707 334h0M719 318h0M702 354h0M642 310h0M721 320h0M782 276h0M778 294h0M808 305h0M685 311h0M647 317h0M743 313h0M792 307h0M657 317h0M764 293h0M769 289h0M655 306h0M766 345h0M802 305h0M770 341h0M728 308h0M732 302h0M651 303h0M717 311h0M772 285h0M774 336h0M712 291h0M691 334h0M686 355h0M738 305h0M683 337h0M764 356h0M772 352h0M768 327h0M693 305h0M682 289h0M756 274h0M755 312h0M784 294h0M673 311h0M762 288h0M781 311h0M806 313h0M675 312h0M790 306h0M735 294h0M669 330h0M739 314h0M773 330h0M766 321h0M797 294h0M722 315h0M719 304h0M667 332h0M648 320h0M666 321h0M792 310h0M760 340h0M758 306h0M653 318h0M748 326h0M671 311h0M693 335h0M641 303h0M745 349h0M789 310h0M741 283h0M696 343h0M703 326h0M745 294h0M755 343h0M685 311h0M693 327h0M751 283h0M780 328h0M760 317h0M790 301h0M732 324h0M747 348h0M759 343h0M720 314h0M649 329h0M684 346h0M708 284h0M714 345h0M746 298h0M643 319h0M743 303h0M727 291h0M759 336h0M709 302h0M738 295h0M756 332h0M686 326h0M765 337h0M753 327h0M760 330h0M772 297h0M668 349h0M775 325h0M662 308h0M699 285h0M698 282h0M682 310h0M667 290h0M696 294h0M665 323h0M778 328h0M749 349h0M756 310h0" stroke="#61672e" stroke-width="2.2" stroke-linecap="round"/>
<path d="M662 313h0M796 327h0M646 322h0M656 313h0M771 326h0M692 295h0M710 314h0M738 296h0M793 339h0M797 319h0M739 306h0M710 337h0M659 302h0M669 312h0M785 285h0M783 282h0M767 324h0M708 284h0M685 334h0M665 299h0M790 306h0M771 318h0M774 342h0M700 334h0M666 332h0M748 320h0M714 298h0M675 294h0M685 334h0M718 327h0M710 325h0M804 317h0M773 291h0M793 313h0M762 287h0M666 296h0M789 335h0M757 309h0M688 320h0M771 291h0M662 321h0M767 292h0M730 311h0M729 311h0M677 301h0M676 339h0M753 281h0M795 337h0M680 325h0M754 345h0M785 286h0M804 310h0M719 316h0M698 299h0M694 314h0M693 313h0M755 317h0M763 304h0M761 323h0M741 332h0M788 317h0M727 333h0M794 282h0M679 292h0M684 306h0M671 312h0M690 298h0M746 325h0M761 323h0M646 313h0M774 322h0M674 335h0M686 306h0M661 318h0M671 332h0M754 275h0M741 292h0M729 310h0M656 306h0M763 322h0M662 312h0M777 287h0M767 334h0M719 321h0M686 314h0M677 311h0M757 311h0M738 336h0M699 295h0M690 316h0M691 322h0M706 294h0M807 302h0M741 285h0M687 286h0M743 328h0M699 276h0M671 295h0M739 337h0M711 289h0M670 296h0M741 283h0M769 319h0M663 309h0M699 270h0M668 301h0M789 312h0M701 319h0M721 316h0M771 332h0M808 307h0M738 335h0M664 306h0M665 302h0M810 304h0M765 296h0M723 336h0M694 311h0M756 311h0M675 300h0M695 285h0M707 327h0M743 300h0M742 311h0M741 316h0M775 313h0M763 324h0M693 313h0M722 337h0M717 294h0M657 315h0M792 327h0M643 320h0M791 283h0M767 285h0M720 319h0M673 297h0M741 331h0M784 283h0M790 283h0M669 330h0M771 309h0M697 316h0M756 309h0M748 337h0M755 339h0M752 318h0M682 303h0M726 292h0M696 279h0M745 320h0M732 277h0M768 320h0M789 334h0M705 327h0M761 322h0M795 313h0M669 336h0M718 316h0M736 317h0M755 327h0M696 290h0M650 318h0M790 300h0M785 331h0M762 324h0M656 294h0M719 322h0M662 298h0M687 281h0M702 289h0M674 331h0M695 295h0M679 285h0M672 311h0M691 322h0M721 335h0M710 328h0M669 309h0M772 289h0M771 284h0M762 304h0M701 320h0M694 286h0M792 329h0M736 305h0M688 314h0M747 313h0M746 319h0M754 306h0M728 340h0M666 303h0M652 321h0M759 337h0M721 279h0M671 334h0M735 317h0M784 339h0M705 328h0M695 326h0M770 294h0M700 319h0M761 319h0M698 279h0M696 319h0M673 299h0M785 333h0M655 317h0M745 308h0M710 297h0M650 312h0M747 294h0M785 298h0M726 294h0M739 302h0M809 290h0M673 314h0M666 315h0M685 332h0M722 302h0M778 322h0M658 316h0M734 331h0M724 335h0M654 303h0M717 324h0M723 309h0M668 305h0M752 307h0M788 316h0M704 320h0M785 291h0M699 330h0M697 340h0M702 274h0M695 296h0M808 314h0M732 310h0M710 332h0M725 336h0M726 292h0M684 286h0M742 294h0M642 316h0M725 311h0M646 289h0M649 323h0M695 307h0M744 321h0M785 322h0M741 313h0M697 329h0M708 318h0M757 321h0M712 330h0M765 334h0M766 323h0M685 335h0M807 312h0M757 275h0M698 280h0M738 315h0M710 293h0M674 302h0M690 285h0M718 314h0M671 302h0M664 310h0M751 339h0M770 319h0M717 294h0M686 307h0M738 304h0M661 290h0M761 324h0M734 319h0M679 286h0M714 301h0M742 335h0M749 300h0M681 311h0M781 289h0M710 299h0M803 319h0M676 288h0M739 303h0M656 285h0M729 292h0M717 302h0M740 318h0M654 316h0M736 327h0M748 344h0M793 305h0M784 301h0M800 295h0M720 339h0M780 330h0M646 300h0M761 320h0M656 316h0M747 313h0M735 336h0M708 280h0M763 307h0M705 301h0M715 285h0M768 284h0M765 277h0M648 304h0M710 321h0M798 316h0M767 297h0M696 291h0M785 287h0M716 317h0M687 290h0M785 338h0M662 335h0M765 313h0M772 310h0M766 306h0M804 310h0M671 301h0M666 330h0M792 336h0M725 307h0M775 301h0M675 330h0M707 286h0M706 316h0M743 300h0M717 304h0M764 314h0M655 313h0M687 293h0M651 301h0M668 295h0M767 289h0M729 295h0M641 315h0M779 285h0M697 311h0M688 317h0M663 305h0M658 318h0M694 284h0M737 298h0M723 318h0M696 280h0M784 335h0M731 268h0M661 297h0M711 317h0M666 316h0M702 293h0M774 292h0M695 290h0M795 276h0M733 301h0M740 332h0M755 319h0M736 325h0M760 277h0M721 339h0M695 313h0M698 282h0M683 316h0M732 317h0M748 329h0M693 298h0M753 283h0M671 331h0M654 312h0M697 321h0M724 309h0M685 332h0M661 301h0M697 321h0M741 293h0M732 341h0M761 302h0M652 321h0M695 314h0M769 303h0M753 319h0M778 306h0M695 296h0M768 313h0M694 326h0M786 279h0M704 319h0M798 301h0M698 302h0M659 282h0M766 313h0M767 290h0M717 318h0M728 316h0M688 335h0M747 303h0M744 306h0M765 285h0M754 288h0M666 303h0M717 313h0M672 311h0M754 325h0M794 333h0M805 301h0M646 320h0M699 295h0M688 305h0M673 305h0M755 304h0M768 298h0M783 306h0" stroke="#6b7333" stroke-width="2.1" stroke-linecap="round"/>
<path d="M749 280h0M792 281h0M738 301h0M669 305h0M772 312h0M667 287h0M732 290h0M768 318h0M683 290h0M715 299h0M695 300h0M793 291h0M783 288h0M673 303h0M676 279h0M699 311h0M698 326h0M756 298h0M758 295h0M750 271h0M675 298h0M807 309h0M753 309h0M732 290h0M771 304h0M716 314h0M768 319h0M792 293h0M654 321h0M784 296h0M685 314h0M743 288h0M725 280h0M731 286h0M732 303h0M800 286h0M699 300h0M699 278h0M709 289h0M683 283h0M705 276h0M813 294h0M726 318h0M777 307h0M689 299h0M782 280h0M764 285h0M760 283h0M789 329h0M660 301h0M665 297h0M684 300h0M775 295h0M681 292h0M732 293h0M762 283h0M656 311h0M697 307h0M728 291h0M788 279h0M760 304h0M695 299h0M701 288h0M769 282h0M731 284h0M731 301h0M703 278h0M767 306h0M661 286h0M780 287h0M774 293h0M713 293h0M741 298h0M705 276h0M729 296h0M768 319h0M664 315h0M683 294h0M651 307h0M777 287h0M683 298h0M726 326h0M798 298h0M735 268h0M763 323h0M653 294h0M688 302h0M665 316h0M721 297h0M728 294h0M761 311h0M678 301h0M777 308h0M687 298h0M694 288h0M680 281h0M726 324h0M724 295h0M743 269h0M708 277h0M786 293h0M674 313h0M674 296h0M658 294h0M690 305h0M745 303h0M738 283h0M700 306h0M731 310h0M793 291h0M732 304h0M663 307h0M706 306h0M798 283h0M655 282h0M680 308h0M725 326h0M710 303h0M762 274h0M783 284h0M666 288h0M673 291h0M764 279h0M699 298h0M670 304h0M779 279h0M758 316h0M715 294h0M804 293h0M795 293h0M766 284h0M756 305h0M728 280h0M686 285h0M715 290h0M669 314h0M755 314h0M699 284h0M757 318h0M743 320h0M749 272h0M677 290h0M797 300h0M716 296h0M781 296h0M795 293h0M804 307h0M799 312h0M760 297h0M779 282h0M704 300h0M795 329h0M638 297h0M783 283h0M673 291h0M786 314h0M709 319h0M674 288h0M777 306h0M718 295h0M723 293h0M792 300h0M694 301h0M776 289h0M774 290h0M775 285h0M706 283h0M779 291h0M786 278h0M703 302h0M670 299h0M687 280h0M684 294h0M772 283h0M723 300h0M719 289h0M802 304h0M779 298h0M691 304h0M783 287h0M777 291h0M789 328h0M768 295h0M735 283h0M749 280h0M798 291h0M744 298h0M697 300h0M706 288h0M640 308h0M661 300h0M696 299h0M667 295h0M733 290h0M755 278h0M807 311h0M804 291h0M694 296h0M713 301h0M793 286h0M785 284h0M685 301h0M675 318h0M788 307h0M768 296h0M705 294h0M658 313h0M763 292h0M681 303h0M701 290h0M756 270h0M762 283h0M789 283h0M674 310h0M686 298h0M699 285h0M720 293h0M719 288h0M673 320h0M748 292h0M740 306h0M724 315h0M700 290h0M683 282h0M766 307h0M741 300h0M755 316h0M769 283h0M730 272h0M756 305h0M786 302h0M773 292h0M673 302h0M661 311h0M677 294h0M725 296h0M797 293h0M708 278h0M653 308h0M793 304h0M715 277h0M669 301h0M661 309h0M728 304h0M685 295h0M749 312h0M711 305h0M771 292h0M689 279h0M761 300h0M682 287h0M670 298h0M729 296h0M767 297h0M670 301h0M796 291h0M706 286h0M716 316h0M767 305h0M785 277h0M682 310h0M760 300h0M699 272h0M740 316h0M677 290h0M809 309h0M803 300h0M707 297h0M751 268h0M709 293h0M717 330h0M684 295h0M789 290h0M670 301h0M803 307h0M783 291h0M725 288h0M695 293h0M700 284h0M682 298h0M791 308h0M740 302h0M793 306h0M665 294h0M694 284h0M691 315h0M764 295h0M776 290h0M693 283h0M682 283h0M670 298h0M772 321h0M666 297h0M649 317h0M669 296h0M716 288h0M701 294h0M696 270h0M728 298h0M745 303h0M673 294h0M665 301h0M768 288h0M673 318h0M771 292h0M762 287h0M748 283h0M758 284h0M733 317h0M678 287h0M675 326h0M666 303h0M727 280h0M786 280h0M785 314h0M696 272h0M713 318h0M777 326h0M698 308h0M714 291h0M771 299h0M721 299h0M656 293h0M778 307h0M732 311h0M722 302h0M737 294h0M719 333h0M763 306h0M782 284h0M775 297h0M693 292h0M726 293h0M730 288h0M697 279h0M641 311h0M707 327h0M786 277h0M662 303h0M750 310h0M698 280h0M781 329h0M724 305h0M726 322h0M747 305h0M677 282h0M763 277h0M710 295h0M802 290h0M696 288h0M770 285h0M790 293h0M653 310h0M759 271h0M695 312h0M768 303h0M714 288h0M692 281h0M718 307h0M773 285h0M680 310h0M694 304h0M728 314h0M704 292h0M716 323h0M690 271h0M688 307h0M762 288h0M704 273h0M799 319h0M780 302h0M765 285h0M769 312h0M705 293h0M770 297h0M756 295h0M784 321h0M706 282h0M662 297h0M760 303h0M655 299h0M687 279h0M709 300h0M724 289h0M719 292h0M709 293h0M722 320h0M754 277h0M766 284h0M777 284h0M726 296h0M686 300h0M728 286h0M682 309h0M763 293h0M703 331h0M762 303h0M667 304h0M778 299h0M766 282h0M727 312h0M692 296h0M780 303h0M693 287h0M779 303h0M700 312h0M692 298h0M763 306h0M659 306h0M782 290h0M753 317h0M779 294h0M774 303h0M690 296h0M699 278h0M754 317h0M651 287h0M761 280h0M664 303h0M802 298h0M708 279h0M695 289h0M666 307h0M735 283h0M725 295h0M691 284h0M759 333h0M684 294h0M729 318h0M740 289h0M706 285h0M775 298h0M799 297h0M758 283h0M719 303h0M658 293h0M709 320h0M687 286h0M757 308h0M739 313h0M676 315h0M781 293h0M802 300h0M780 330h0M761 314h0M752 288h0" stroke="#768038" stroke-width="2.2" stroke-linecap="round"/>
<path d="M776 287h0M744 323h0M721 297h0M718 328h0M697 298h0M755 327h0M770 322h0M664 308h0M756 277h0M750 331h0M756 346h0M751 361h0M759 302h0M702 345h0M758 317h0M766 334h0M739 316h0M780 321h0M771 338h0M718 317h0M768 286h0M657 315h0M767 292h0M761 299h0M703 284h0M764 326h0M716 329h0M748 292h0M747 335h0M674 306h0M651 321h0M751 318h0M701 351h0M650 325h0M773 327h0M722 334h0M788 304h0M753 332h0M687 312h0M757 357h0M692 280h0M679 296h0M749 319h0M689 312h0M729 313h0M738 301h0M736 320h0M756 300h0M700 340h0M768 323h0M727 288h0M795 326h0M681 343h0M699 328h0M750 339h0M713 304h0M737 332h0M675 306h0M765 283h0M768 325h0M744 285h0M707 354h0M731 298h0M722 328h0M694 354h0M673 298h0M774 337h0M684 301h0M707 351h0M775 330h0M705 339h0M674 338h0M678 299h0M725 298h0M787 284h0M723 334h0M781 288h0M691 289h0M761 302h0M674 337h0M731 313h0M672 343h0M722 336h0M712 291h0M710 318h0M679 325h0M781 325h0M749 324h0M772 326h0M697 344h0M753 360h0M707 316h0M694 311h0M756 307h0M646 308h0M732 359h0M744 311h0M751 320h0M770 336h0M674 297h0M712 307h0M699 349h0M733 295h0M755 289h0M662 308h0M706 317h0M769 341h0M740 338h0M739 296h0M696 341h0M731 340h0M752 341h0M772 324h0M713 347h0M721 325h0M716 325h0M747 288h0M731 358h0M687 345h0M674 314h0M768 307h0M710 300h0M652 333h0M760 296h0M780 334h0M684 307h0M695 320h0M689 287h0M694 298h0M700 348h0M662 325h0M704 306h0M704 340h0M801 328h0M693 309h0M669 316h0M752 334h0M723 317h0M753 341h0M800 308h0M742 317h0M679 304h0M782 305h0M667 316h0M791 316h0M712 347h0M669 318h0M644 321h0M776 336h0M714 289h0M706 319h0M679 291h0M691 338h0M796 326h0M765 295h0M703 323h0M704 316h0M795 309h0M681 299h0M721 323h0M786 352h0M751 294h0M710 296h0M727 316h0M695 276h0M730 321h0M718 327h0M720 311h0M782 278h0M751 356h0M754 316h0M674 352h0M696 328h0M709 307h0M749 352h0M765 356h0M680 298h0M683 341h0M731 333h0M734 340h0M683 342h0M703 326h0M778 289h0M678 308h0M748 323h0M705 289h0M780 302h0M782 304h0M749 300h0M689 325h0M774 336h0M739 326h0M688 298h0M682 327h0M767 360h0M694 344h0M694 308h0M713 348h0M763 318h0M670 338h0M734 315h0M684 300h0M704 281h0M782 283h0M678 345h0M709 314h0M697 310h0M703 331h0M769 328h0M758 280h0M674 292h0M791 279h0M770 330h0M771 331h0M759 334h0M665 292h0M737 320h0M705 344h0M726 338h0M762 363h0M672 309h0M703 287h0M772 291h0M699 360h0M776 301h0M746 309h0M758 327h0M652 326h0M776 342h0M660 324h0M705 333h0M802 303h0M658 293h0M766 335h0M755 361h0M744 304h0M772 299h0M697 326h0M774 299h0M678 339h0M759 302h0M657 317h0M686 311h0M697 303h0M702 315h0M670 307h0M684 308h0M756 299h0M659 303h0M773 307h0M733 358h0M693 297h0M787 324h0M747 355h0M763 319h0M774 286h0M710 306h0M669 336h0M719 311h0M771 350h0M767 282h0M718 325h0M778 284h0M778 316h0M663 320h0M713 349h0M714 294h0M662 296h0M667 301h0M790 338h0M767 285h0M740 322h0M708 290h0M752 321h0M645 321h0M715 321h0M701 340h0M781 286h0M698 328h0M758 288h0M686 352h0M770 285h0M760 348h0M735 347h0M709 312h0M763 279h0M719 341h0M756 345h0M679 309h0M755 320h0M767 287h0M685 304h0M764 335h0M774 333h0M764 344h0M770 339h0M746 320h0M776 293h0M780 312h0M678 289h0M726 330h0M699 355h0M750 298h0M677 297h0M654 312h0M676 333h0M677 297h0M679 331h0M667 316h0M702 320h0M752 344h0M681 328h0M714 332h0M713 343h0M779 282h0M684 312h0M765 331h0M721 347h0M705 329h0M766 303h0M807 315h0M741 328h0M787 310h0M709 298h0M727 324h0M704 294h0M775 332h0M780 331h0M771 294h0M688 304h0M692 307h0M674 314h0M737 322h0M773 287h0M750 338h0M721 344h0M641 314h0M701 302h0M759 320h0M658 298h0M696 291h0M776 292h0M734 331h0M706 338h0M739 317h0M775 291h0M701 294h0M677 310h0M670 304h0M738 329h0M777 332h0M755 316h0M752 327h0M739 341h0M784 287h0M682 305h0M688 344h0M677 295h0M709 345h0M685 296h0M720 315h0M685 337h0M695 337h0M751 307h0M660 317h0M692 324h0M698 307h0M798 312h0M705 284h0M699 301h0M716 314h0M753 350h0M750 323h0M754 316h0M783 325h0M788 326h0M684 334h0M745 312h0M727 319h0M712 295h0M784 324h0M702 337h0M763 315h0M788 290h0M745 357h0M670 331h0M670 347h0M706 332h0M765 304h0M657 314h0" stroke="#b4503c" stroke-width="2.3" stroke-linecap="round"/>
<path d="M880,320 L880,320" stroke="#5a3222" stroke-width="3"/>
<polygon points="839,298 854,291 875,294 882,304 877,313 851,309" fill="#454322"/>
<path d="M849 288a6 6 0 1 0 11 0a6 6 0 1 0 -11 0M832 296a6 6 0 1 0 13 0a6 6 0 1 0 -13 0M841 295a7 7 0 1 0 13 0a7 7 0 1 0 -13 0M848 295a5 5 0 1 0 11 0a5 5 0 1 0 -11 0M856 293a4 4 0 1 0 9 0a4 4 0 1 0 -9 0M865 296a6 6 0 1 0 12 0a6 6 0 1 0 -12 0M871 295a6 6 0 1 0 12 0a6 6 0 1 0 -12 0M835 301a4 4 0 1 0 9 0a4 4 0 1 0 -9 0M843 299a5 5 0 1 0 9 0a5 5 0 1 0 -9 0M848 298a7 7 0 1 0 14 0a7 7 0 1 0 -14 0M859 302a4 4 0 1 0 8 0a4 4 0 1 0 -8 0M864 302a6 6 0 1 0 12 0a6 6 0 1 0 -12 0M871 300a7 7 0 1 0 14 0a7 7 0 1 0 -14 0M848 309a6 6 0 1 0 12 0a6 6 0 1 0 -12 0M855 308a6 6 0 1 0 13 0a6 6 0 1 0 -13 0M862 306a6 6 0 1 0 12 0a6 6 0 1 0 -12 0M869 306a6 6 0 1 0 12 0a6 6 0 1 0 -12 0M880 308a5 5 0 1 0 11 0a5 5 0 1 0 -11 0M852 312a5 5 0 1 0 10 0a5 5 0 1 0 -10 0M861 312a6 6 0 1 0 11 0a6 6 0 1 0 -11 0M870 314a6 6 0 1 0 12 0a6 6 0 1 0 -12 0M873 312a7 7 0 1 0 14 0a7 7 0 1 0 -14 0" fill="#454322"/>
<path d="M874 315h0M886 312h0M869 315h0M866 313h0M876 325h0M878 320h0M865 316h0M862 324h0M872 315h0M861 314h0M882 315h0M861 314h0M847 317h0M887 321h0" stroke="#302a19" stroke-width="2.1" stroke-linecap="round"/>
<path d="M856 312h0M898 313h0M870 317h0M872 312h0M874 308h0M864 306h0M888 309h0M852 321h0M872 313h0M870 310h0M878 309h0M862 310h0M876 306h0M886 311h0M831 311h0M879 307h0M879 310h0M881 324h0M866 318h0M880 309h0M849 308h0M871 312h0M889 309h0M850 320h0M856 307h0" stroke="#3a361d" stroke-width="2.0" stroke-linecap="round"/>
<path d="M868 312h0M884 317h0M846 311h0M863 313h0M859 310h0M880 306h0M875 303h0M845 303h0M882 310h0M897 316h0M858 310h0M876 308h0M868 312h0M867 305h0M872 312h0M870 312h0M878 316h0M859 309h0M850 309h0M873 308h0M866 301h0M862 314h0M833 299h0M870 305h0M834 301h0M885 309h0M874 306h0M868 314h0M860 310h0M863 306h0M868 312h0M874 318h0M861 305h0M875 315h0M875 309h0M868 303h0M882 309h0M868 310h0M859 308h0M862 306h0M859 311h0M880 314h0M859 308h0M887 310h0M861 316h0M856 301h0M877 307h0M882 306h0M870 306h0M857 310h0M852 309h0" stroke="#444221" stroke-width="1.9" stroke-linecap="round"/>
<path d="M867 302h0M883 309h0M871 303h0M879 307h0M865 308h0M861 309h0M875 304h0M836 299h0M862 315h0M865 304h0M876 308h0M869 311h0M876 307h0M867 310h0M879 321h0M876 302h0M866 305h0M838 306h0M849 310h0M871 312h0M848 298h0M854 315h0M867 305h0M868 312h0M856 304h0M886 312h0M881 314h0M860 314h0M864 301h0M877 310h0M859 304h0M885 316h0M867 307h0M839 305h0M849 313h0M858 313h0M871 311h0M843 306h0M854 296h0M858 306h0M847 298h0M851 311h0M855 302h0M865 305h0M884 299h0M851 298h0M888 314h0M853 304h0M866 303h0M854 309h0M840 306h0M886 318h0M852 304h0M865 306h0M839 303h0M834 299h0M870 301h0M852 295h0M856 301h0M888 305h0M877 303h0M856 303h0M872 312h0M855 294h0M862 316h0M864 309h0M874 304h0M868 317h0M870 312h0M862 314h0M859 307h0" stroke="#4e4e26" stroke-width="2.1" stroke-linecap="round"/>
<path d="M885 301h0M881 296h0M863 313h0M871 296h0M877 315h0M859 306h0M870 300h0M848 296h0M855 301h0M836 298h0M852 291h0M856 307h0M870 302h0M872 303h0M854 302h0M894 306h0M842 304h0M859 314h0M840 296h0M851 313h0M878 294h0M840 296h0M856 307h0M863 306h0M881 308h0M862 292h0M849 310h0M849 309h0M844 300h0M882 313h0M842 319h0M870 306h0M893 309h0M869 311h0M868 305h0M841 301h0M887 313h0M872 308h0M877 295h0M833 295h0M863 301h0M870 305h0M874 299h0M883 296h0M868 308h0M863 307h0M885 306h0M859 304h0M855 306h0M863 304h0M864 298h0M865 307h0M861 295h0M862 300h0M850 291h0M856 298h0M885 296h0M871 298h0M858 309h0M860 313h0M878 296h0M875 318h0M865 304h0M864 293h0M899 300h0M842 296h0M876 313h0M852 313h0M848 298h0M874 308h0M848 314h0M862 294h0M861 308h0M864 311h0M873 299h0M862 307h0M874 305h0M871 303h0M848 297h0M857 298h0M865 302h0M837 309h0M864 296h0M852 295h0" stroke="#585a2a" stroke-width="2.0" stroke-linecap="round"/>
<path d="M877 301h0M848 302h0M872 300h0M841 298h0M873 297h0M858 297h0M874 309h0M854 310h0M858 304h0M829 308h0M863 290h0M843 296h0M881 305h0M867 309h0M866 305h0M878 291h0M862 301h0M841 305h0M868 299h0M839 290h0M855 306h0M860 307h0M876 309h0M833 306h0M860 304h0M861 300h0M854 305h0M840 304h0M878 302h0M859 302h0M864 303h0M870 305h0M888 310h0M844 301h0M847 300h0M854 300h0M866 304h0M854 309h0M860 292h0M886 304h0M856 292h0M842 297h0M873 310h0M871 301h0M865 295h0M841 299h0M872 302h0M864 307h0M853 306h0M864 299h0M863 296h0M844 299h0M855 294h0M877 301h0M849 293h0M852 302h0M867 289h0M838 296h0M865 300h0M841 304h0M851 290h0M859 292h0M834 295h0M850 290h0M843 311h0M868 301h0" stroke="#62662f" stroke-width="2.3" stroke-linecap="round"/>
<path d="M856 308h0M880 301h0M857 298h0M845 300h0M851 286h0M867 290h0M851 300h0M880 307h0M896 303h0M859 287h0M865 304h0M876 296h0M855 284h0M843 297h0M865 306h0M862 302h0M860 299h0M867 305h0M860 302h0M875 290h0M876 299h0M868 300h0M879 305h0M857 306h0M840 293h0M851 298h0M857 297h0M875 298h0M877 301h0M867 307h0M859 287h0M868 298h0M855 294h0M837 290h0M837 298h0M850 292h0M884 306h0M875 299h0M849 296h0M873 297h0M856 287h0M844 300h0M856 294h0M861 303h0M872 305h0M834 293h0M861 295h0M841 297h0M833 299h0M848 296h0M854 301h0M856 299h0M844 303h0M866 295h0M845 297h0M848 295h0M883 285h0M843 301h0" stroke="#6c7233" stroke-width="2.1" stroke-linecap="round"/>
<path d="M874 295h0M845 288h0M857 295h0M848 300h0M860 288h0M842 297h0M859 293h0M857 295h0M871 288h0M870 294h0M876 299h0M861 291h0M880 295h0M885 297h0M889 304h0M862 289h0M852 286h0M875 297h0M859 291h0M885 298h0M882 294h0M881 293h0M850 290h0M853 291h0M858 298h0M846 294h0M834 295h0M844 288h0M851 289h0M833 292h0M863 291h0M883 295h0M837 297h0M838 298h0M854 291h0M840 297h0M850 294h0M850 286h0M888 302h0M850 285h0M858 285h0M872 290h0M865 298h0M850 285h0M851 290h0M858 284h0M852 298h0M859 290h0M874 296h0M878 294h0M861 292h0M881 289h0M885 305h0M873 289h0M843 292h0M857 296h0M884 292h0M853 289h0M864 287h0M834 297h0M851 295h0M880 289h0M883 299h0M850 298h0M854 294h0M856 295h0M844 299h0M843 289h0M861 288h0M850 290h0M825 296h0M860 299h0M860 295h0M846 293h0M833 290h0M842 299h0M864 291h0M855 293h0M877 303h0M849 294h0M884 294h0" stroke="#767e38" stroke-width="2.1" stroke-linecap="round"/>
<path d="M870 308h0M872 305h0M861 306h0M858 289h0M868 307h0M847 308h0M869 311h0M867 304h0M860 299h0M865 294h0M880 309h0M873 320h0M867 310h0M865 308h0M867 299h0M857 308h0M865 300h0M884 318h0M863 298h0M862 290h0M880 310h0M872 315h0M866 311h0M857 314h0M882 307h0M859 293h0M856 292h0M881 304h0M831 297h0M856 294h0M875 299h0M842 303h0M875 300h0M860 304h0M874 306h0M863 290h0M866 306h0M852 310h0M853 307h0M862 316h0M850 298h0M863 291h0M853 296h0M862 301h0M872 299h0M873 313h0M874 297h0M855 281h0M856 284h0M851 301h0M869 302h0M851 312h0M846 295h0M856 317h0M876 306h0M885 303h0M866 309h0M866 309h0M883 291h0M877 298h0M856 291h0M876 296h0M872 302h0M877 292h0M865 306h0M876 307h0M857 292h0M838 299h0M857 295h0M870 306h0M879 303h0M874 296h0" stroke="#b4503c" stroke-width="2.3" stroke-linecap="round"/>
<polygon points="366.0,532.5 609.7,350.5 1181.0,487.7 947.0,677.0" fill="#8bc160" filter="url(#grain)"/>
<polygon points="366.0,532.5 609.7,350.5 1181.0,487.7 947.0,677.0" fill="none" stroke="#d9e6d2" stroke-width="1" />
<path d="M366,532.5 L523,415 C536,436 552,470 562,505 C568,525 556,538 553,548 C551,560 556,572 559.5,580 Z" fill="#85847c" />
<path d="M366,532.5 L523,415 M366,532.5 L559.5,580" fill="none" stroke="#e0e0dc" stroke-width="1" />
<path d="M523,415 C536,436 552,470 562,505 C568,525 556,538 553,548 C551,560 556,572 559.5,580" fill="none" stroke="#e6eee0" stroke-width="1.2" />
<path d="M504,430 C494,455 496,480 503,505 C508,530 515,555 522,572" fill="none" stroke="#f2f2ee" stroke-width="1.3" />
<path d="M615,535.6 L680,494 L690,505 L730,543 L800,558 L907,564 L890,581 C905,600 925,625 965,661 L947,677 L856,653 C835,640 812,620 800,590 L793,579 Z" fill="#85847c" />
<path d="M615,535.6 L793,579 C812,620 835,640 856,653 M890,581 C905,600 925,625 965,661" fill="none" stroke="#e2e8dc" stroke-width="1" />
<polygon points="690.0,505.0 742.0,470.0 742.0,530.0 800.0,545.0 800.0,558.0 730.0,543.0" fill="#8bc160" />
<polygon points="1003.0,350.0 1047.5,361.0 1047.5,492.0 944.0,574.0 944.0,455.0" fill="#f4f4ea" />
<line x1="1041" y1="360" x2="1041" y2="440" stroke="#d8d8cc" stroke-width="1.5"/>
<polygon points="1003.0,346.4 1067.0,367.3 1067.0,373.0 1003.0,354.0" fill="#8e918e" />
<polygon points="1003.0,346.4 1067.0,367.3" fill="none" stroke="#d0d0c8" stroke-width="1" />
<polygon points="1004.0,398.0 1018.7,391.0 1018.7,417.0 1004.0,424.0" fill="#5a2e22" stroke="#ffffff" stroke-width="1.2" />
<path d="M1011.3,395 L1011.3,420 M1004,407 L1018.7,400 M1004,415 L1018.7,408" stroke="#ffffff" stroke-width="1"/>
<polygon points="970.0,432.0 975.5,429.0 975.5,444.0 970.0,447.0" fill="#3a3a3a" stroke="#ffffff" stroke-width="1" />
<polygon points="741.0,409.0 791.0,425.0 832.8,377.0 874.4,446.6 942.8,462.5 944.0,575.0 890.0,565.0 800.0,543.0 741.0,529.0" fill="#9ea2a6" />
<polygon points="771.0,480.0 792.0,485.0 792.0,505.0 771.0,500.0" fill="#ffffff" />
<polygon points="774.0,483.0 789.0,487.0 789.0,502.0 774.0,498.0" fill="#b86a3a" />
<polygon points="800.0,495.0 891.0,514.0 891.0,560.0 800.0,545.0" fill="#9a9ea2" />
<line x1="800" y1="535" x2="891" y2="555" stroke="#c8ccc8" stroke-width="2"/>
<polygon points="798.4,412.8 833.0,420.0 833.0,454.0 798.4,446.6" fill="#f4f4f4" />
<polygon points="801.5,416.5 830.0,422.5 830.0,450.5 801.5,444.0" fill="#b35a38" />
<polygon points="804.5,418.5 830.0,424.0 830.0,435.0 804.5,429.5" fill="#6e6a62" />
<polygon points="804.5,432.0 830.0,437.5 830.0,447.0 804.5,441.5" fill="#58523e" />
<path d="M817,421 L817,444 M804.5,430.8 L830,436.3" stroke="#f0f0f0" stroke-width="1.6"/>
<polygon points="844.4,423.0 879.0,430.2 879.0,464.2 844.4,456.8" fill="#f4f4f4" />
<polygon points="847.5,426.7 876.0,432.7 876.0,460.7 847.5,454.2" fill="#b35a38" />
<polygon points="850.5,428.7 876.0,434.2 876.0,445.2 850.5,439.7" fill="#a89a86" />
<polygon points="850.5,442.2 876.0,447.7 876.0,457.2 850.5,451.7" fill="#7a6838" />
<path d="M863,431.2 L863,454.2 M850.5,441.0 L876,446.5" stroke="#f0f0f0" stroke-width="1.6"/>
<polygon points="894.4,318.0 955.9,273.0 996.5,343.0" fill="#b8a084" filter="url(#rough)"/>
<polygon points="784.0,292.0 722.6,401.4 788.0,416.6 832.8,365.0 893.0,319.0" fill="#b59c80" filter="url(#rough)"/>
<polygon points="832.8,365.0 893.0,319.0 876.3,438.0" fill="#b79e82" filter="url(#rough)"/>
<polygon points="893.0,319.0 996.5,343.0 1003.0,346.4 942.8,454.0 876.3,438.0" fill="#b59c80" filter="url(#rough)"/>
<path d="M722.6,401.4 L784,292 L893,319 L996.5,343 M894.4,318 L955.9,273 L996.5,343 M893,319 L876.3,438 M832.8,365 L893,319" fill="none" stroke="#e8e0d6" stroke-width="0.9" />
<path d="M1003,346.4 L942.8,454" fill="none" stroke="#9aa098" stroke-width="3" />
<polygon points="722.5,401.6 788.0,416.6 832.8,365.0 876.3,438.0 942.8,454.0 942.8,462.5 874.4,446.6 832.8,377.2 791.0,425.0 722.5,409.0" fill="#45484a" />
<polygon points="846.0,461.0 876.6,466.0 909.6,496.0 891.0,506.0 793.0,491.0" fill="#b79e82" filter="url(#rough)"/>
<path d="M793,491 L846,461 L876.6,466 L909.6,496 M876.6,466 L891,506" fill="none" stroke="#e6ddd2" stroke-width="0.8" />
<polygon points="793.0,491.0 891.0,506.0 909.6,496.0 909.6,501.0 891.0,514.5 793.0,497.5" fill="#45484a" />
<polygon points="856.6,510.7 873.8,514.0 873.8,556.0 856.6,552.0" fill="#a95a2a" />
<polygon points="799.0,554.0 810.0,545.0 907.0,563.0 890.0,580.0" fill="#7a7a74" />
<polygon points="799.0,554.0 890.0,573.0 890.0,581.0 799.0,561.0" fill="#4a4c4c" />
<polygon points="890.0,573.0 907.0,563.0 907.0,568.0 890.0,581.0" fill="#5a5c5c" />
<rect x="807" y="497" width="8.5" height="59" fill="#e4e6e0"/>
<rect x="805.5" y="551" width="11.5" height="6" fill="#f0f0ea"/>
<rect x="812.5" y="497" width="3" height="59" fill="#c0c4be"/>
<rect x="881.3" y="514" width="8.5" height="58" fill="#e4e6e0"/>
<rect x="879.8" y="567" width="11.5" height="6" fill="#f0f0ea"/>
<rect x="886.8" y="514" width="3" height="58" fill="#c0c4be"/>
<polygon points="912.0,495.0 925.0,498.0 925.0,520.0 912.0,517.0" fill="#ffffff" />
<polygon points="944.0,574.0 1047.5,492.0 1047.5,498.0 944.0,581.0" fill="#6a6c6c" />
<polygon points="890.0,565.0 944.0,575.0 944.0,582.0 890.0,572.0" fill="#5a5c5c" />
<path d="M1130,496 L1130,470" stroke="#4a2a1e" stroke-width="5"/>
<path d="M1117 374a7 7 0 1 0 13 0a7 7 0 1 0 -13 0M1142 375a7 7 0 1 0 14 0a7 7 0 1 0 -14 0M1085 380a5 5 0 1 0 10 0a5 5 0 1 0 -10 0M1088 381a8 8 0 1 0 16 0a8 8 0 1 0 -16 0M1105 382a6 6 0 1 0 12 0a6 6 0 1 0 -12 0M1122 383a5 5 0 1 0 10 0a5 5 0 1 0 -10 0M1134 385a6 6 0 1 0 11 0a6 6 0 1 0 -11 0M1142 386a8 8 0 1 0 16 0a8 8 0 1 0 -16 0M1154 387a6 6 0 1 0 13 0a6 6 0 1 0 -13 0M1163 385a8 8 0 1 0 17 0a8 8 0 1 0 -17 0M1053 393a8 8 0 1 0 16 0a8 8 0 1 0 -16 0M1075 391a7 7 0 1 0 13 0a7 7 0 1 0 -13 0M1082 394a6 6 0 1 0 11 0a6 6 0 1 0 -11 0M1096 397a6 6 0 1 0 12 0a6 6 0 1 0 -12 0M1112 396a7 7 0 1 0 15 0a7 7 0 1 0 -15 0M1120 395a7 7 0 1 0 14 0a7 7 0 1 0 -14 0M1131 392a8 8 0 1 0 15 0a8 8 0 1 0 -15 0M1149 394a5 5 0 1 0 10 0a5 5 0 1 0 -10 0M1160 392a8 8 0 1 0 16 0a8 8 0 1 0 -16 0M1170 398a7 7 0 1 0 14 0a7 7 0 1 0 -14 0M1185 391a6 6 0 1 0 13 0a6 6 0 1 0 -13 0M1054 406a6 6 0 1 0 13 0a6 6 0 1 0 -13 0M1068 401a7 7 0 1 0 13 0a7 7 0 1 0 -13 0M1083 405a7 7 0 1 0 13 0a7 7 0 1 0 -13 0M1091 408a8 8 0 1 0 16 0a8 8 0 1 0 -16 0M1109 404a7 7 0 1 0 14 0a7 7 0 1 0 -14 0M1121 402a6 6 0 1 0 12 0a6 6 0 1 0 -12 0M1131 408a6 6 0 1 0 12 0a6 6 0 1 0 -12 0M1144 407a7 7 0 1 0 14 0a7 7 0 1 0 -14 0M1156 402a6 6 0 1 0 11 0a6 6 0 1 0 -11 0M1169 407a5 5 0 1 0 10 0a5 5 0 1 0 -10 0M1182 401a6 6 0 1 0 13 0a6 6 0 1 0 -13 0M1048 411a6 6 0 1 0 12 0a6 6 0 1 0 -12 0M1059 412a5 5 0 1 0 10 0a5 5 0 1 0 -10 0M1074 414a6 6 0 1 0 12 0a6 6 0 1 0 -12 0M1081 419a5 5 0 1 0 11 0a5 5 0 1 0 -11 0M1102 419a5 5 0 1 0 10 0a5 5 0 1 0 -10 0M1110 412a6 6 0 1 0 13 0a6 6 0 1 0 -13 0M1122 416a8 8 0 1 0 16 0a8 8 0 1 0 -16 0M1137 416a5 5 0 1 0 11 0a5 5 0 1 0 -11 0M1144 418a6 6 0 1 0 13 0a6 6 0 1 0 -13 0M1157 416a8 8 0 1 0 16 0a8 8 0 1 0 -16 0M1171 414a7 7 0 1 0 15 0a7 7 0 1 0 -15 0M1202 419a6 6 0 1 0 12 0a6 6 0 1 0 -12 0M1049 426a6 6 0 1 0 13 0a6 6 0 1 0 -13 0M1054 424a8 8 0 1 0 16 0a8 8 0 1 0 -16 0M1073 425a6 6 0 1 0 12 0a6 6 0 1 0 -12 0M1085 425a8 8 0 1 0 16 0a8 8 0 1 0 -16 0M1097 430a7 7 0 1 0 14 0a7 7 0 1 0 -14 0M1107 427a8 8 0 1 0 17 0a8 8 0 1 0 -17 0M1123 425a8 8 0 1 0 16 0a8 8 0 1 0 -16 0M1136 425a5 5 0 1 0 10 0a5 5 0 1 0 -10 0M1146 430a7 7 0 1 0 15 0a7 7 0 1 0 -15 0M1162 424a7 7 0 1 0 14 0a7 7 0 1 0 -14 0M1169 427a7 7 0 1 0 14 0a7 7 0 1 0 -14 0M1184 422a5 5 0 1 0 11 0a5 5 0 1 0 -11 0M1199 424a8 8 0 1 0 15 0a8 8 0 1 0 -15 0M1040 434a8 8 0 1 0 17 0a8 8 0 1 0 -17 0M1052 435a7 7 0 1 0 14 0a7 7 0 1 0 -14 0M1073 439a8 8 0 1 0 16 0a8 8 0 1 0 -16 0M1088 438a7 7 0 1 0 14 0a7 7 0 1 0 -14 0M1102 440a5 5 0 1 0 10 0a5 5 0 1 0 -10 0M1119 433a8 8 0 1 0 15 0a8 8 0 1 0 -15 0M1132 441a7 7 0 1 0 13 0a7 7 0 1 0 -13 0M1140 437a7 7 0 1 0 14 0a7 7 0 1 0 -14 0M1157 434a7 7 0 1 0 15 0a7 7 0 1 0 -15 0M1165 439a6 6 0 1 0 11 0a6 6 0 1 0 -11 0M1175 438a8 8 0 1 0 17 0a8 8 0 1 0 -17 0M1188 439a7 7 0 1 0 14 0a7 7 0 1 0 -14 0M1051 448a8 8 0 1 0 16 0a8 8 0 1 0 -16 0M1067 450a6 6 0 1 0 12 0a6 6 0 1 0 -12 0M1100 444a8 8 0 1 0 17 0a8 8 0 1 0 -17 0M1117 447a8 8 0 1 0 15 0a8 8 0 1 0 -15 0M1129 448a8 8 0 1 0 16 0a8 8 0 1 0 -16 0M1145 450a7 7 0 1 0 14 0a7 7 0 1 0 -14 0M1172 444a6 6 0 1 0 12 0a6 6 0 1 0 -12 0M1196 444a6 6 0 1 0 12 0a6 6 0 1 0 -12 0M1075 455a7 7 0 1 0 14 0a7 7 0 1 0 -14 0M1087 458a8 8 0 1 0 16 0a8 8 0 1 0 -16 0M1096 460a8 8 0 1 0 15 0a8 8 0 1 0 -15 0M1110 454a7 7 0 1 0 13 0a7 7 0 1 0 -13 0M1127 457a6 6 0 1 0 12 0a6 6 0 1 0 -12 0M1164 460a7 7 0 1 0 15 0a7 7 0 1 0 -15 0M1101 468a5 5 0 1 0 11 0a5 5 0 1 0 -11 0M1108 467a5 5 0 1 0 10 0a5 5 0 1 0 -10 0M1152 467a7 7 0 1 0 14 0a7 7 0 1 0 -14 0" fill="#454322"/>
<path d="M1091 468h0M1079 455h0M1117 468h0M1088 468h0M1151 456h0M1147 461h0M1134 463h0M1130 474h0M1101 458h0M1141 452h0M1085 446h0M1101 469h0M1100 473h0M1188 448h0M1111 475h0M1108 469h0M1149 473h0M1108 460h0M1067 460h0M1192 446h0M1158 462h0M1154 458h0M1172 466h0M1081 452h0M1103 473h0M1196 447h0M1180 464h0M1102 459h0M1096 463h0M1169 448h0M1173 469h0M1110 458h0M1106 467h0M1102 464h0M1161 471h0M1093 461h0M1118 472h0M1114 472h0M1112 462h0M1168 469h0M1128 451h0M1193 448h0M1102 477h0M1168 465h0M1180 462h0M1061 460h0M1121 468h0M1155 472h0M1153 447h0M1120 464h0M1172 471h0M1157 471h0M1187 448h0M1122 459h0M1149 468h0M1134 465h0M1169 456h0M1115 455h0M1173 470h0M1150 471h0M1165 475h0M1077 452h0M1141 469h0M1128 470h0M1154 467h0M1144 459h0M1156 471h0M1132 469h0M1111 472h0M1057 461h0M1150 466h0M1125 456h0M1153 477h0M1163 468h0" stroke="#302a19" stroke-width="1.9" stroke-linecap="round"/>
<path d="M1108 460h0M1161 458h0M1080 454h0M1187 443h0M1144 459h0M1061 436h0M1161 456h0M1100 454h0M1062 453h0M1095 466h0M1097 464h0M1146 455h0M1082 431h0M1067 442h0M1054 461h0M1065 437h0M1104 424h0M1143 440h0M1096 460h0M1082 460h0M1138 438h0M1179 439h0M1160 449h0M1111 467h0M1163 435h0M1098 450h0M1174 428h0M1065 447h0M1107 477h0M1196 439h0M1173 440h0M1101 459h0M1137 450h0M1133 466h0M1210 435h0M1039 437h0M1179 428h0M1110 451h0M1103 444h0M1074 453h0M1084 464h0M1100 451h0M1109 436h0M1080 455h0M1131 456h0M1043 447h0M1119 452h0M1057 451h0M1145 438h0M1150 480h0M1206 452h0M1113 451h0M1091 462h0M1108 465h0M1094 440h0M1139 457h0M1093 458h0M1077 446h0M1073 461h0M1114 470h0M1111 465h0M1188 444h0M1148 421h0M1186 447h0M1135 421h0M1078 430h0M1070 465h0M1171 442h0M1081 446h0M1128 432h0M1136 445h0M1093 471h0M1189 447h0M1176 468h0M1122 453h0M1157 427h0M1082 450h0M1150 472h0M1087 462h0M1118 444h0M1108 466h0M1160 442h0M1127 446h0M1140 461h0M1108 463h0M1183 469h0M1183 448h0M1105 445h0M1119 467h0M1206 443h0M1067 459h0M1113 467h0M1172 462h0M1056 446h0M1092 445h0M1213 429h0M1105 437h0M1194 469h0M1067 449h0M1114 465h0M1085 430h0M1126 458h0M1216 427h0M1176 453h0M1165 458h0M1099 443h0M1084 466h0M1157 452h0M1093 460h0M1111 443h0M1103 451h0M1074 462h0M1147 455h0M1177 469h0M1056 445h0M1168 443h0M1112 436h0M1104 460h0M1106 469h0M1164 442h0M1073 455h0M1075 458h0M1112 445h0M1054 435h0M1140 459h0M1057 454h0M1113 457h0M1123 467h0M1162 460h0M1102 461h0" stroke="#3a361d" stroke-width="2.0" stroke-linecap="round"/>
<path d="M1091 462h0M1202 428h0M1141 462h0M1087 419h0M1089 447h0M1123 420h0M1089 450h0M1202 434h0M1160 445h0M1061 428h0M1050 441h0M1194 442h0M1113 465h0M1175 452h0M1133 446h0M1077 430h0M1161 468h0M1184 453h0M1114 445h0M1178 422h0M1072 452h0M1114 419h0M1113 472h0M1102 434h0M1174 425h0M1162 445h0M1113 423h0M1131 451h0M1198 457h0M1113 447h0M1067 438h0M1036 446h0M1117 471h0M1089 428h0M1153 475h0M1099 464h0M1080 466h0M1056 442h0M1183 429h0M1174 454h0M1125 436h0M1045 424h0M1162 460h0M1110 439h0M1069 432h0M1196 447h0M1047 416h0M1057 424h0M1110 427h0M1109 430h0M1146 445h0M1122 419h0M1117 461h0M1082 422h0M1060 429h0M1180 464h0M1083 422h0M1184 451h0M1054 457h0M1148 428h0M1116 464h0M1097 468h0M1127 455h0M1216 419h0M1080 410h0M1174 406h0M1174 444h0M1053 433h0M1186 463h0M1073 454h0M1142 434h0M1191 426h0M1083 458h0M1051 421h0M1046 446h0M1068 455h0M1114 446h0M1058 453h0M1057 430h0M1098 452h0M1194 409h0M1053 444h0M1068 412h0M1192 429h0M1065 418h0M1099 430h0M1124 411h0M1153 471h0M1210 448h0M1151 433h0M1109 449h0M1113 470h0M1098 472h0M1141 452h0M1183 435h0M1185 437h0M1092 417h0M1126 474h0M1149 462h0M1051 419h0M1064 436h0M1216 428h0M1050 440h0M1073 441h0M1120 450h0M1104 423h0M1142 435h0M1060 429h0M1198 452h0M1161 463h0M1203 440h0M1159 464h0M1124 450h0M1082 428h0M1071 432h0M1121 426h0M1119 441h0M1126 450h0M1146 417h0M1128 453h0M1166 464h0M1088 461h0M1145 426h0M1095 446h0M1132 417h0M1171 443h0M1094 459h0M1173 444h0M1106 473h0M1087 431h0M1080 458h0M1173 451h0M1114 434h0M1122 406h0M1152 441h0M1146 446h0M1081 431h0M1130 444h0M1186 423h0M1107 470h0M1131 462h0M1124 428h0M1088 460h0M1135 420h0M1157 478h0M1215 426h0M1097 438h0M1084 465h0M1099 464h0M1108 447h0M1195 446h0M1151 472h0M1154 431h0M1181 450h0M1146 430h0M1199 448h0M1202 436h0M1077 458h0M1165 468h0M1126 453h0M1204 454h0M1129 431h0M1171 448h0M1195 457h0M1153 470h0M1110 442h0" stroke="#444221" stroke-width="2.1" stroke-linecap="round"/>
<path d="M1127 402h0M1083 422h0M1095 410h0M1185 424h0M1109 411h0M1120 417h0M1125 436h0M1147 421h0M1107 406h0M1161 403h0M1043 424h0M1200 433h0M1152 401h0M1155 431h0M1071 407h0M1199 432h0M1081 448h0M1130 407h0M1113 406h0M1169 446h0M1054 411h0M1147 425h0M1186 414h0M1042 444h0M1146 437h0M1170 447h0M1103 467h0M1124 484h0M1125 417h0M1081 419h0M1123 434h0M1070 431h0M1153 395h0M1090 457h0M1152 471h0M1118 407h0M1068 450h0M1162 426h0M1109 450h0M1163 478h0M1047 424h0M1152 438h0M1122 428h0M1156 463h0M1208 435h0M1055 439h0M1055 412h0M1171 398h0M1121 461h0M1164 403h0M1172 427h0M1134 426h0M1178 415h0M1115 408h0M1087 408h0M1062 445h0M1118 404h0M1039 435h0M1211 413h0M1130 411h0M1171 417h0M1034 424h0M1108 470h0M1158 396h0M1117 467h0M1141 441h0M1143 454h0M1093 438h0M1146 456h0M1148 391h0M1058 449h0M1167 402h0M1135 455h0M1210 430h0M1169 442h0M1064 409h0M1107 422h0M1130 442h0M1206 441h0M1111 465h0M1064 457h0M1188 412h0M1091 412h0M1222 405h0M1119 401h0M1127 410h0M1146 437h0M1138 455h0M1119 433h0M1215 420h0M1070 402h0M1152 433h0M1158 432h0M1119 451h0M1105 472h0M1098 469h0M1148 426h0M1171 423h0M1147 425h0M1098 420h0M1156 408h0M1110 469h0M1193 401h0M1068 458h0M1105 418h0M1162 469h0M1103 441h0M1147 454h0M1146 420h0M1179 427h0M1122 435h0M1106 453h0M1170 465h0M1053 418h0M1173 448h0M1187 431h0M1108 398h0M1120 465h0M1123 450h0M1115 438h0M1043 400h0M1182 404h0M1116 421h0M1161 450h0M1097 443h0M1144 415h0M1073 458h0M1108 441h0M1067 423h0M1206 426h0M1174 415h0M1140 437h0M1162 432h0M1085 458h0M1058 427h0M1056 449h0M1093 476h0M1190 452h0M1189 442h0M1158 428h0M1132 431h0M1152 397h0M1110 420h0M1058 437h0M1080 426h0M1129 449h0M1159 418h0M1095 433h0M1139 407h0M1193 443h0M1148 395h0M1127 448h0M1095 475h0M1183 430h0M1081 410h0M1162 408h0M1162 440h0M1107 455h0M1097 450h0M1166 425h0M1106 443h0M1071 449h0M1062 408h0M1074 436h0M1043 403h0M1142 433h0M1171 453h0M1078 456h0M1148 422h0M1214 428h0M1064 451h0M1182 438h0M1047 438h0M1104 454h0M1082 454h0M1069 459h0M1140 418h0M1049 440h0M1049 435h0M1061 454h0M1086 426h0M1046 411h0M1188 443h0M1147 432h0M1174 417h0M1149 471h0M1165 445h0M1113 458h0M1079 404h0M1055 422h0M1122 447h0M1162 435h0M1169 436h0M1102 460h0M1210 407h0M1090 443h0M1139 394h0M1144 430h0M1070 406h0M1210 416h0M1118 426h0M1089 431h0M1163 421h0M1058 445h0M1140 431h0M1160 415h0M1102 468h0M1069 444h0M1110 439h0M1147 397h0M1136 450h0M1147 426h0M1156 397h0M1080 429h0M1203 432h0M1125 422h0M1174 455h0M1171 445h0M1053 421h0M1094 415h0M1126 435h0M1130 447h0M1162 409h0M1100 438h0M1082 457h0M1159 411h0M1099 433h0M1093 391h0M1166 408h0M1090 415h0M1177 407h0M1061 416h0M1185 408h0M1199 400h0M1201 439h0M1204 417h0M1210 415h0M1124 438h0M1141 417h0M1187 448h0M1089 447h0M1052 421h0M1156 469h0M1059 442h0M1207 428h0M1216 405h0M1112 427h0M1201 424h0M1057 451h0M1173 458h0M1169 458h0M1097 471h0M1053 429h0M1112 405h0M1156 424h0M1097 434h0M1154 456h0M1090 453h0M1167 403h0M1131 429h0M1157 440h0M1165 431h0M1113 444h0M1081 421h0M1067 437h0M1113 461h0M1053 432h0M1087 465h0M1131 431h0M1155 442h0M1163 432h0M1067 408h0M1171 444h0M1208 436h0M1127 453h0M1153 399h0M1082 420h0M1038 421h0M1201 451h0M1090 459h0M1201 453h0M1133 419h0M1058 431h0M1172 417h0M1077 409h0M1053 412h0M1068 403h0M1095 443h0M1123 410h0M1170 433h0M1158 459h0M1131 443h0M1205 400h0M1057 432h0" stroke="#4e4e26" stroke-width="1.9" stroke-linecap="round"/>
<path d="M1156 463h0M1050 455h0M1205 442h0M1112 460h0M1109 417h0M1197 422h0M1078 442h0M1071 401h0M1144 411h0M1068 454h0M1210 415h0M1112 447h0M1063 439h0M1115 402h0M1183 418h0M1177 437h0M1051 446h0M1141 440h0M1163 396h0M1156 415h0M1143 421h0M1100 414h0M1138 423h0M1140 444h0M1097 430h0M1225 424h0M1060 454h0M1126 458h0M1165 406h0M1096 449h0M1193 446h0M1086 437h0M1117 405h0M1052 408h0M1146 441h0M1154 394h0M1139 415h0M1058 445h0M1168 409h0M1065 397h0M1132 428h0M1160 438h0M1091 398h0M1077 435h0M1166 407h0M1118 419h0M1138 435h0M1092 408h0M1157 457h0M1134 379h0M1067 408h0M1080 422h0M1059 419h0M1167 443h0M1200 434h0M1181 423h0M1068 443h0M1203 412h0M1034 409h0M1136 413h0M1131 396h0M1216 424h0M1160 397h0M1121 405h0M1175 431h0M1199 439h0M1166 393h0M1057 387h0M1113 440h0M1131 385h0M1220 431h0M1210 423h0M1169 439h0M1092 437h0M1147 446h0M1139 434h0M1125 412h0M1156 439h0M1109 401h0M1076 422h0M1074 461h0M1117 466h0M1214 425h0M1076 391h0M1100 423h0M1208 435h0M1059 459h0M1189 417h0M1054 445h0M1133 411h0M1053 400h0M1058 385h0M1109 461h0M1082 402h0M1115 454h0M1179 460h0M1161 417h0M1155 396h0M1071 403h0M1194 388h0M1171 402h0M1162 397h0M1111 410h0M1175 440h0M1168 446h0M1107 436h0M1077 416h0M1086 452h0M1110 387h0M1165 427h0M1147 392h0M1140 409h0M1053 403h0M1056 416h0M1158 408h0M1176 400h0M1054 427h0M1119 407h0M1176 409h0M1072 398h0M1203 451h0M1152 448h0M1170 446h0M1167 427h0M1159 431h0M1077 443h0M1040 446h0M1204 442h0M1148 441h0M1127 409h0M1115 446h0M1214 415h0M1172 444h0M1034 435h0M1144 388h0M1064 447h0M1080 462h0M1102 397h0M1160 448h0M1104 437h0M1168 407h0M1127 429h0M1087 435h0M1068 401h0M1081 423h0M1149 441h0M1099 435h0M1084 407h0M1052 441h0M1085 439h0M1085 423h0M1200 447h0M1137 425h0M1171 406h0M1128 430h0M1116 421h0M1148 450h0M1040 427h0M1142 403h0M1049 446h0M1075 388h0M1108 462h0M1131 410h0M1131 457h0M1096 398h0M1079 458h0M1211 405h0M1097 438h0M1082 421h0M1125 393h0M1090 426h0M1202 452h0M1086 408h0M1084 465h0M1086 430h0M1127 448h0M1129 420h0M1226 416h0M1187 406h0M1215 400h0M1090 415h0M1083 449h0M1095 473h0M1185 433h0M1172 419h0M1216 435h0M1177 467h0M1212 424h0M1218 422h0M1158 448h0M1142 431h0M1074 396h0M1097 434h0M1105 459h0M1210 412h0M1096 433h0M1119 434h0M1103 433h0M1093 429h0M1211 429h0M1174 437h0M1113 460h0M1201 396h0M1170 404h0M1133 403h0M1169 447h0M1209 442h0M1086 455h0M1177 465h0M1084 406h0M1039 425h0M1148 417h0M1043 430h0M1053 402h0M1096 392h0M1099 441h0M1123 422h0M1085 386h0M1059 404h0M1102 443h0M1077 407h0M1162 387h0M1109 447h0M1139 425h0M1099 435h0M1111 421h0M1193 449h0M1144 436h0M1094 459h0M1140 384h0M1212 418h0M1141 391h0M1079 398h0M1062 412h0M1146 388h0M1072 429h0M1168 431h0M1180 424h0M1158 400h0M1051 430h0M1143 427h0M1152 415h0M1132 445h0M1138 397h0M1190 409h0M1071 431h0M1217 431h0M1103 466h0M1093 427h0M1057 417h0M1112 414h0M1132 457h0M1209 404h0M1072 460h0M1053 403h0M1047 416h0M1062 436h0M1188 417h0M1193 392h0M1082 395h0M1092 385h0M1105 467h0M1043 443h0M1085 401h0M1200 449h0M1142 464h0M1050 445h0M1174 409h0M1050 421h0M1086 399h0M1206 435h0M1083 388h0M1104 388h0M1092 407h0M1105 423h0M1043 439h0M1115 451h0M1215 409h0M1176 408h0M1173 403h0M1173 437h0M1144 426h0M1186 426h0M1190 408h0M1104 433h0M1176 434h0M1179 381h0M1123 434h0M1109 443h0M1074 451h0M1107 461h0M1169 433h0M1157 443h0M1126 393h0M1109 447h0M1159 417h0M1174 411h0M1206 442h0M1059 444h0M1136 421h0M1152 457h0M1184 407h0M1198 441h0M1034 410h0M1200 443h0M1146 441h0M1059 437h0M1196 392h0M1110 422h0M1103 395h0M1165 446h0M1037 430h0M1126 471h0M1068 416h0M1172 396h0M1141 393h0M1102 416h0M1059 408h0M1127 442h0M1159 431h0M1056 451h0M1212 424h0M1102 396h0M1044 424h0M1089 442h0M1176 426h0M1078 384h0M1204 451h0M1157 426h0M1106 449h0M1142 426h0M1108 464h0M1115 405h0M1165 418h0M1148 396h0M1076 411h0" stroke="#585a2a" stroke-width="2.4" stroke-linecap="round"/>
<path d="M1160 392h0M1080 421h0M1119 403h0M1179 377h0M1139 376h0M1069 420h0M1126 433h0M1101 402h0M1078 379h0M1129 416h0M1131 442h0M1162 380h0M1104 419h0M1123 404h0M1096 380h0M1118 411h0M1136 434h0M1193 406h0M1057 437h0M1073 416h0M1119 399h0M1173 435h0M1149 424h0M1129 446h0M1162 396h0M1042 414h0M1040 436h0M1172 430h0M1190 446h0M1196 438h0M1158 413h0M1125 400h0M1139 399h0M1169 417h0M1091 429h0M1138 424h0M1100 394h0M1192 394h0M1179 443h0M1158 378h0M1046 431h0M1216 422h0M1087 391h0M1098 440h0M1085 397h0M1090 392h0M1067 427h0M1081 434h0M1156 452h0M1103 445h0M1086 434h0M1130 369h0M1119 395h0M1155 437h0M1065 438h0M1097 448h0M1071 445h0M1158 425h0M1107 386h0M1127 386h0M1083 419h0M1101 450h0M1185 394h0M1186 420h0M1199 444h0M1085 419h0M1084 404h0M1072 393h0M1092 377h0M1084 431h0M1149 415h0M1076 420h0M1189 397h0M1201 445h0M1070 428h0M1058 414h0M1171 436h0M1103 453h0M1127 396h0M1081 433h0M1137 370h0M1117 383h0M1079 433h0M1166 392h0M1140 372h0M1119 442h0M1180 403h0M1106 416h0M1060 431h0M1096 424h0M1084 403h0M1186 388h0M1170 394h0M1137 431h0M1137 418h0M1131 405h0M1171 399h0M1184 437h0M1115 393h0M1221 427h0M1129 379h0M1143 424h0M1114 446h0M1117 395h0M1105 435h0M1089 411h0M1070 445h0M1132 384h0M1156 413h0M1141 382h0M1135 429h0M1112 413h0M1201 424h0M1160 387h0M1091 381h0M1133 379h0M1136 413h0M1112 416h0M1101 370h0M1140 431h0M1160 409h0M1153 410h0M1102 453h0M1040 410h0M1123 434h0M1122 442h0M1097 400h0M1162 391h0M1109 400h0M1058 417h0M1180 402h0M1154 396h0M1176 443h0M1145 389h0M1094 383h0M1153 400h0M1082 377h0M1115 413h0M1118 414h0M1198 429h0M1081 433h0M1144 417h0M1120 383h0M1119 396h0M1190 416h0M1167 408h0M1133 388h0M1073 407h0M1116 440h0M1086 388h0M1177 402h0M1058 415h0M1119 380h0M1188 391h0M1084 391h0M1086 381h0M1201 448h0M1183 424h0M1120 407h0M1174 395h0M1094 383h0M1133 410h0M1085 393h0M1134 446h0M1068 433h0M1062 414h0M1171 410h0M1134 413h0M1117 378h0M1197 443h0M1174 406h0M1122 440h0M1125 442h0M1096 432h0M1146 381h0M1128 451h0M1121 380h0M1177 433h0M1168 401h0M1058 418h0M1112 439h0M1093 435h0M1121 414h0M1177 380h0M1160 401h0M1127 397h0M1207 429h0M1136 386h0M1058 413h0M1205 397h0M1189 419h0M1123 406h0M1143 390h0M1196 442h0M1151 391h0M1094 420h0M1126 411h0M1123 405h0M1093 453h0M1147 435h0M1141 426h0M1180 383h0M1166 434h0M1131 428h0M1099 400h0M1129 380h0M1196 432h0M1090 387h0M1122 425h0M1146 429h0M1056 406h0M1193 400h0M1147 411h0M1181 435h0M1081 443h0M1200 392h0M1114 421h0M1109 379h0M1099 418h0M1122 411h0M1092 455h0M1144 417h0M1060 420h0M1076 435h0M1112 434h0M1056 419h0M1087 382h0M1136 419h0M1138 421h0M1186 411h0M1210 437h0M1179 443h0M1097 394h0M1122 419h0M1138 430h0M1095 381h0M1102 420h0M1053 397h0M1146 379h0M1143 370h0M1107 379h0M1068 429h0M1154 399h0M1081 376h0M1088 376h0M1083 428h0M1044 409h0M1100 426h0M1142 427h0M1057 409h0M1201 414h0M1155 405h0M1139 392h0M1161 435h0M1058 422h0M1095 396h0M1200 425h0M1134 404h0M1033 419h0M1074 425h0M1164 390h0M1165 394h0M1055 436h0M1133 444h0M1138 420h0M1164 425h0M1098 424h0M1187 433h0M1052 401h0M1123 395h0M1081 429h0M1166 377h0M1070 425h0M1158 397h0M1196 399h0M1102 439h0M1120 396h0M1105 404h0M1130 415h0M1168 430h0M1135 416h0M1195 427h0M1054 420h0M1096 393h0M1188 394h0M1094 384h0M1184 381h0M1084 382h0M1098 455h0M1158 377h0M1193 382h0M1049 390h0M1134 430h0M1139 433h0M1070 406h0M1068 419h0M1123 395h0M1135 430h0M1094 436h0M1105 379h0M1154 398h0M1166 376h0M1120 392h0M1143 403h0M1072 423h0M1102 419h0M1093 434h0M1205 402h0M1119 439h0M1141 420h0M1195 401h0M1177 382h0M1113 435h0M1132 434h0M1180 423h0M1173 440h0M1165 393h0M1165 435h0M1161 417h0M1145 415h0M1133 399h0M1101 438h0M1135 390h0M1190 404h0M1166 413h0M1107 389h0M1175 411h0M1136 419h0M1077 432h0M1136 415h0M1152 402h0M1167 435h0M1196 396h0M1077 417h0M1134 441h0M1132 389h0M1166 400h0M1216 426h0M1160 392h0M1189 447h0M1106 413h0M1096 445h0M1070 390h0M1171 400h0M1077 434h0M1180 389h0M1121 403h0M1133 424h0M1081 406h0M1066 443h0M1100 439h0M1135 409h0M1066 438h0M1174 399h0" stroke="#62662f" stroke-width="2.4" stroke-linecap="round"/>
<path d="M1069 429h0M1140 418h0M1127 371h0M1095 380h0M1149 417h0M1195 385h0M1087 376h0M1096 427h0M1209 422h0M1099 430h0M1100 381h0M1157 415h0M1155 427h0M1160 383h0M1058 398h0M1193 423h0M1154 401h0M1200 428h0M1182 395h0M1190 383h0M1154 376h0M1078 391h0M1130 418h0M1129 405h0M1110 421h0M1120 406h0M1145 385h0M1065 421h0M1078 404h0M1163 401h0M1130 435h0M1212 409h0M1201 413h0M1171 402h0M1174 404h0M1182 421h0M1198 402h0M1088 402h0M1097 397h0M1112 380h0M1057 408h0M1071 386h0M1146 415h0M1145 444h0M1215 405h0M1138 415h0M1111 388h0M1186 401h0M1061 433h0M1203 397h0M1130 406h0M1062 378h0M1056 391h0M1062 407h0M1107 376h0M1079 400h0M1192 393h0M1095 389h0M1135 403h0M1157 399h0M1202 415h0M1161 434h0M1068 408h0M1149 386h0M1123 394h0M1073 380h0M1167 386h0M1184 380h0M1157 402h0M1212 403h0M1101 409h0M1197 391h0M1052 383h0M1215 395h0M1072 390h0M1065 447h0M1129 429h0M1083 395h0M1215 413h0M1098 385h0M1170 422h0M1147 431h0M1066 398h0M1176 430h0M1089 378h0M1110 392h0M1115 414h0M1104 437h0M1092 387h0M1164 392h0M1064 426h0M1113 421h0M1044 414h0M1070 391h0M1082 417h0M1191 397h0M1131 384h0M1172 399h0M1086 415h0M1133 384h0M1175 433h0M1171 413h0M1118 382h0M1134 418h0M1135 435h0M1173 390h0M1080 393h0M1110 422h0M1165 410h0M1114 399h0M1125 415h0M1170 397h0M1073 431h0M1145 434h0M1141 422h0M1082 409h0M1049 400h0M1168 413h0M1166 431h0M1162 391h0M1179 420h0M1059 413h0M1132 387h0M1159 392h0M1148 379h0M1096 448h0M1181 424h0M1052 399h0M1185 397h0M1106 397h0M1126 436h0M1078 419h0M1208 427h0M1133 412h0M1047 428h0M1170 388h0M1149 382h0M1052 421h0M1182 393h0M1177 396h0M1150 417h0M1132 390h0M1166 418h0M1170 400h0M1141 392h0M1103 377h0M1123 437h0M1118 381h0M1170 402h0M1093 364h0M1128 377h0M1146 428h0M1157 381h0M1091 424h0M1117 382h0M1095 382h0M1133 382h0M1163 401h0M1181 432h0M1085 374h0M1051 416h0M1113 427h0M1107 406h0M1124 397h0M1061 404h0M1182 386h0M1149 388h0M1176 387h0M1054 438h0M1084 405h0M1167 378h0M1131 412h0M1187 390h0M1081 429h0M1050 421h0M1132 410h0M1078 381h0M1179 422h0M1195 417h0M1142 383h0M1199 406h0M1142 388h0M1116 439h0M1114 420h0M1216 403h0M1170 419h0M1089 448h0M1083 382h0M1141 394h0M1137 419h0M1163 389h0M1141 388h0M1089 389h0M1170 425h0M1175 406h0M1075 409h0M1121 427h0M1196 393h0M1160 425h0M1055 388h0M1123 387h0M1115 390h0M1160 401h0M1062 386h0M1199 402h0M1165 425h0M1142 422h0M1173 434h0M1047 432h0M1097 419h0M1082 393h0M1157 416h0M1158 401h0M1092 402h0M1084 385h0M1174 409h0M1092 390h0M1120 403h0M1150 430h0M1151 387h0M1132 377h0M1163 374h0M1149 403h0M1059 383h0M1125 421h0M1159 391h0M1142 419h0M1091 400h0M1215 428h0M1142 415h0M1067 388h0M1113 421h0M1102 438h0M1180 403h0M1169 375h0M1083 396h0M1159 444h0M1132 420h0M1180 402h0M1194 420h0M1176 433h0M1078 418h0M1183 386h0M1171 390h0M1091 397h0M1196 409h0M1047 408h0M1138 385h0M1144 444h0M1134 378h0M1182 406h0M1147 411h0M1080 417h0M1135 406h0M1172 415h0M1092 378h0M1213 409h0M1194 427h0M1142 399h0M1137 421h0M1079 423h0M1179 401h0M1199 409h0M1062 424h0M1158 388h0M1123 394h0M1076 397h0M1168 373h0M1173 399h0M1052 401h0M1182 420h0M1147 428h0M1088 446h0M1128 431h0M1146 425h0M1154 398h0M1209 403h0M1182 403h0M1101 425h0M1081 394h0M1142 426h0M1047 423h0M1095 395h0M1079 418h0M1123 434h0M1164 386h0M1078 419h0M1108 389h0M1041 404h0M1093 399h0M1112 433h0M1180 366h0" stroke="#6c7233" stroke-width="2.6" stroke-linecap="round"/>
<path d="M1092 391h0M1082 410h0M1132 378h0M1142 412h0M1085 388h0M1203 390h0M1085 386h0M1190 405h0M1092 391h0M1150 392h0M1056 417h0M1191 390h0M1094 386h0M1088 411h0M1129 392h0M1142 380h0M1161 394h0M1107 373h0M1186 386h0M1147 378h0M1150 391h0M1148 370h0M1133 389h0M1141 415h0M1074 398h0M1120 371h0M1094 394h0M1067 405h0M1076 408h0M1101 361h0M1107 382h0M1139 431h0M1088 399h0M1166 373h0M1129 375h0M1109 400h0M1151 366h0M1138 416h0M1115 388h0M1085 395h0M1150 395h0M1057 409h0M1073 383h0M1179 401h0M1090 371h0M1065 393h0M1127 368h0M1079 396h0M1165 388h0M1155 376h0M1169 407h0M1181 389h0M1130 372h0M1087 370h0M1153 390h0M1160 398h0M1148 427h0M1126 409h0M1217 414h0M1192 406h0M1142 377h0M1132 384h0M1122 385h0M1137 418h0M1112 395h0M1076 375h0M1124 393h0M1123 398h0M1119 419h0M1195 395h0M1140 377h0M1050 390h0M1122 418h0M1128 371h0M1072 387h0M1059 400h0M1138 383h0M1197 385h0M1145 364h0M1144 383h0M1107 376h0M1147 371h0M1061 382h0M1162 395h0M1091 384h0M1054 398h0M1163 412h0M1147 391h0M1135 370h0M1110 398h0M1155 381h0M1075 400h0M1143 375h0M1135 376h0M1156 388h0M1178 388h0M1086 375h0M1166 375h0M1181 385h0M1094 378h0M1052 425h0M1142 405h0M1110 394h0M1051 395h0M1081 392h0M1109 381h0M1124 397h0M1076 393h0M1090 371h0M1155 389h0M1064 398h0M1199 399h0M1111 395h0M1087 397h0M1108 390h0M1089 375h0M1070 375h0M1170 406h0M1168 395h0M1091 385h0M1214 416h0M1131 375h0M1159 400h0M1148 402h0M1141 406h0M1092 391h0M1120 396h0M1042 413h0M1096 385h0M1057 388h0M1151 359h0M1137 388h0M1148 379h0M1125 374h0M1135 383h0M1104 384h0M1137 375h0M1127 388h0M1176 369h0M1124 389h0M1094 404h0M1141 371h0M1100 388h0M1077 407h0M1091 382h0M1086 416h0M1107 402h0M1112 388h0M1165 422h0M1110 402h0M1054 381h0M1159 387h0M1119 383h0M1125 389h0M1122 367h0M1064 409h0M1120 378h0M1167 402h0M1164 384h0M1164 418h0M1115 374h0M1077 390h0M1139 397h0M1166 422h0M1122 400h0M1194 401h0M1116 373h0M1035 406h0M1105 396h0M1085 412h0M1105 402h0M1210 411h0M1144 384h0M1145 425h0M1125 403h0M1115 398h0M1145 379h0M1133 381h0M1146 425h0M1147 419h0M1078 379h0M1088 382h0M1129 379h0M1193 391h0M1140 377h0M1039 397h0M1137 418h0M1121 367h0M1082 411h0M1068 380h0M1140 387h0M1050 393h0M1113 375h0M1105 375h0M1048 393h0M1047 400h0M1104 407h0M1084 410h0M1146 377h0M1184 406h0M1156 386h0M1142 418h0M1079 394h0M1157 396h0M1127 385h0M1113 372h0M1148 384h0M1156 387h0M1112 401h0M1160 379h0M1090 382h0M1084 385h0M1179 374h0M1094 378h0M1077 391h0M1160 381h0M1087 394h0M1159 399h0M1057 392h0M1119 368h0M1127 408h0M1084 398h0M1091 375h0M1185 398h0M1168 380h0M1127 389h0M1181 389h0M1120 407h0M1050 403h0M1182 378h0M1094 373h0M1130 372h0M1196 388h0M1099 373h0M1162 376h0M1210 396h0M1122 380h0M1133 369h0M1053 405h0M1148 411h0M1110 391h0M1046 405h0M1088 397h0M1156 377h0M1154 414h0M1155 388h0M1189 406h0M1086 376h0M1057 400h0M1156 377h0M1127 371h0M1065 380h0M1084 405h0M1053 384h0M1040 412h0M1068 401h0M1108 398h0M1176 391h0M1121 382h0M1132 433h0M1073 389h0M1058 396h0M1122 375h0M1118 375h0M1103 385h0M1115 403h0M1118 397h0M1186 392h0M1091 417h0M1077 417h0M1188 393h0M1126 379h0M1146 410h0M1126 415h0M1095 377h0M1159 410h0M1180 402h0M1198 417h0M1197 415h0M1062 393h0M1087 390h0M1159 389h0M1062 381h0M1120 375h0M1163 397h0M1146 418h0M1052 417h0M1200 394h0M1116 360h0M1092 395h0M1157 382h0M1079 390h0M1147 381h0M1102 369h0M1158 373h0M1160 382h0M1135 383h0M1057 405h0M1164 366h0M1159 391h0M1183 407h0M1157 411h0M1138 402h0M1106 411h0M1099 414h0M1158 404h0M1113 414h0M1202 391h0M1116 375h0M1080 372h0M1128 402h0M1146 367h0M1181 405h0M1209 414h0M1128 389h0M1080 390h0M1185 389h0M1121 384h0M1168 407h0M1132 399h0M1136 424h0M1124 379h0M1083 405h0M1159 396h0M1145 382h0M1134 381h0M1068 390h0M1133 390h0M1178 391h0M1188 417h0M1132 368h0M1155 384h0M1202 423h0M1117 386h0M1133 374h0M1049 395h0M1201 393h0M1072 402h0M1145 379h0M1088 391h0M1135 380h0M1195 389h0M1121 400h0M1123 383h0M1110 393h0M1170 381h0M1141 410h0M1065 411h0M1158 385h0M1126 369h0M1145 417h0M1110 385h0M1132 388h0M1121 406h0" stroke="#767e38" stroke-width="2.6" stroke-linecap="round"/>
<path d="M1105 408h0M1084 388h0M1168 431h0M1133 370h0M1154 421h0M1086 402h0M1155 407h0M1171 467h0M1132 416h0M1133 435h0M1127 401h0M1111 415h0M1132 398h0M1073 457h0M1062 403h0M1148 414h0M1105 375h0M1127 380h0M1148 416h0M1050 452h0M1174 449h0M1199 451h0M1159 393h0M1076 394h0M1180 445h0M1135 418h0M1204 424h0M1167 427h0M1172 418h0M1172 423h0M1146 414h0M1083 432h0M1128 428h0M1157 410h0M1119 431h0M1199 398h0M1119 420h0M1157 398h0M1089 385h0M1169 391h0M1172 379h0M1185 397h0M1085 419h0M1104 470h0M1141 443h0M1080 437h0M1131 408h0M1070 413h0M1140 406h0M1190 392h0M1080 438h0M1121 437h0M1144 424h0M1121 464h0M1086 421h0M1184 414h0M1105 387h0M1128 439h0M1088 464h0M1111 404h0M1108 470h0M1127 377h0M1212 444h0M1058 452h0M1110 414h0M1195 416h0M1144 391h0M1064 451h0M1149 449h0M1118 401h0M1092 438h0M1084 396h0M1135 442h0M1124 379h0M1088 398h0M1056 424h0M1203 452h0M1175 420h0M1190 400h0M1165 399h0M1147 420h0M1088 434h0M1143 443h0M1111 469h0M1055 383h0M1098 438h0M1156 427h0M1156 415h0M1059 403h0M1060 433h0M1172 438h0M1084 398h0M1107 424h0M1056 409h0M1155 443h0M1062 417h0M1152 367h0M1100 419h0M1111 384h0M1054 414h0M1174 440h0M1087 420h0M1090 383h0M1139 435h0M1165 409h0M1124 394h0M1164 427h0M1132 434h0M1109 434h0M1060 445h0M1115 415h0M1182 391h0M1161 414h0M1123 454h0M1157 381h0M1099 400h0M1108 450h0M1085 418h0M1103 443h0M1162 464h0M1181 446h0M1168 383h0M1091 459h0M1138 383h0M1111 428h0M1166 409h0M1124 461h0M1107 433h0M1079 446h0M1129 394h0M1100 421h0M1109 382h0M1115 405h0M1097 432h0M1119 406h0M1102 421h0M1172 458h0M1141 402h0M1142 417h0M1159 434h0M1131 379h0M1092 459h0M1089 383h0M1109 440h0M1099 442h0M1165 401h0M1088 459h0M1113 377h0M1057 404h0M1070 418h0M1161 393h0M1158 390h0M1163 441h0M1161 397h0M1175 405h0M1055 456h0M1154 391h0M1122 377h0M1160 378h0M1163 465h0M1136 464h0M1086 413h0M1100 454h0M1085 418h0M1155 374h0M1067 405h0M1200 452h0M1068 418h0M1155 435h0M1165 386h0M1134 443h0M1162 382h0M1053 427h0M1136 447h0M1188 410h0M1074 417h0M1089 407h0M1182 429h0M1137 425h0M1123 433h0M1137 418h0M1086 423h0M1159 464h0M1112 472h0M1137 442h0M1163 382h0M1141 398h0M1125 443h0M1153 388h0M1159 399h0M1109 469h0M1148 387h0M1091 398h0M1097 393h0M1101 405h0M1121 410h0M1102 465h0M1054 419h0M1123 441h0M1121 401h0M1099 464h0M1213 435h0M1150 462h0M1109 424h0M1116 430h0M1084 416h0M1047 440h0M1064 393h0M1140 417h0M1158 439h0M1160 388h0M1154 372h0M1151 425h0M1053 435h0M1058 409h0M1087 394h0M1126 460h0M1112 463h0M1073 400h0M1081 451h0M1161 390h0M1061 406h0M1097 403h0M1121 413h0M1170 420h0M1204 423h0M1157 425h0M1179 375h0M1156 410h0M1148 426h0M1197 431h0M1056 425h0M1102 372h0M1093 462h0M1138 433h0M1070 444h0M1080 429h0M1121 420h0M1122 386h0M1144 449h0M1127 410h0M1192 446h0M1103 439h0M1072 435h0M1194 439h0M1082 432h0M1201 390h0M1110 446h0M1074 427h0M1114 374h0M1056 461h0M1047 434h0M1067 406h0M1104 458h0M1138 441h0M1169 429h0M1118 407h0M1063 435h0M1190 400h0M1156 430h0M1130 450h0M1156 457h0M1166 398h0M1158 390h0M1120 402h0M1156 437h0M1122 389h0M1132 390h0M1173 421h0M1166 430h0M1146 451h0M1105 417h0M1177 423h0M1134 416h0M1137 425h0M1059 437h0M1144 364h0M1114 419h0M1122 435h0M1166 379h0M1098 430h0M1133 425h0M1102 431h0M1106 409h0M1172 439h0M1158 394h0M1160 393h0M1165 387h0M1115 377h0M1180 460h0M1165 378h0M1161 401h0M1140 454h0M1200 431h0M1111 437h0M1178 422h0M1160 387h0M1160 469h0M1095 453h0M1192 387h0M1123 380h0M1136 437h0M1124 462h0M1127 456h0M1111 380h0M1140 422h0M1125 380h0M1154 429h0M1210 414h0M1136 399h0M1102 381h0M1089 382h0M1170 395h0M1142 444h0M1139 381h0M1165 419h0M1140 419h0M1203 448h0M1134 427h0M1089 441h0" stroke="#b4503c" stroke-width="2.3" stroke-linecap="round"/>
<path d="M1084,528 L1084,495" stroke="#4a2a1e" stroke-width="5"/>
<path d="M1096 399a7 7 0 1 0 13 0a7 7 0 1 0 -13 0M1064 402a8 8 0 1 0 15 0a8 8 0 1 0 -15 0M1104 406a5 5 0 1 0 11 0a5 5 0 1 0 -11 0M1031 418a7 7 0 1 0 14 0a7 7 0 1 0 -14 0M1048 416a6 6 0 1 0 13 0a6 6 0 1 0 -13 0M1060 419a5 5 0 1 0 11 0a5 5 0 1 0 -11 0M1073 416a6 6 0 1 0 11 0a6 6 0 1 0 -11 0M1084 413a6 6 0 1 0 12 0a6 6 0 1 0 -12 0M1095 419a8 8 0 1 0 17 0a8 8 0 1 0 -17 0M1111 419a7 7 0 1 0 14 0a7 7 0 1 0 -14 0M1122 416a6 6 0 1 0 12 0a6 6 0 1 0 -12 0M1029 428a6 6 0 1 0 13 0a6 6 0 1 0 -13 0M1045 431a6 6 0 1 0 12 0a6 6 0 1 0 -12 0M1059 426a6 6 0 1 0 12 0a6 6 0 1 0 -12 0M1064 427a8 8 0 1 0 15 0a8 8 0 1 0 -15 0M1086 428a6 6 0 1 0 11 0a6 6 0 1 0 -11 0M1093 424a8 8 0 1 0 16 0a8 8 0 1 0 -16 0M1102 431a7 7 0 1 0 15 0a7 7 0 1 0 -15 0M1117 431a5 5 0 1 0 10 0a5 5 0 1 0 -10 0M1131 424a5 5 0 1 0 10 0a5 5 0 1 0 -10 0M1018 440a7 7 0 1 0 14 0a7 7 0 1 0 -14 0M1029 439a8 8 0 1 0 17 0a8 8 0 1 0 -17 0M1048 441a5 5 0 1 0 11 0a5 5 0 1 0 -11 0M1054 435a6 6 0 1 0 12 0a6 6 0 1 0 -12 0M1073 436a6 6 0 1 0 11 0a6 6 0 1 0 -11 0M1078 440a8 8 0 1 0 16 0a8 8 0 1 0 -16 0M1093 436a6 6 0 1 0 11 0a6 6 0 1 0 -11 0M1112 439a6 6 0 1 0 12 0a6 6 0 1 0 -12 0M1124 440a5 5 0 1 0 10 0a5 5 0 1 0 -10 0M1130 441a6 6 0 1 0 11 0a6 6 0 1 0 -11 0M1011 450a6 6 0 1 0 11 0a6 6 0 1 0 -11 0M1037 453a7 7 0 1 0 14 0a7 7 0 1 0 -14 0M1051 453a6 6 0 1 0 11 0a6 6 0 1 0 -11 0M1065 453a6 6 0 1 0 12 0a6 6 0 1 0 -12 0M1071 448a6 6 0 1 0 12 0a6 6 0 1 0 -12 0M1088 449a5 5 0 1 0 10 0a5 5 0 1 0 -10 0M1101 453a6 6 0 1 0 12 0a6 6 0 1 0 -12 0M1116 452a6 6 0 1 0 12 0a6 6 0 1 0 -12 0M1124 451a6 6 0 1 0 11 0a6 6 0 1 0 -11 0M1133 445a8 8 0 1 0 16 0a8 8 0 1 0 -16 0M1016 461a7 7 0 1 0 13 0a7 7 0 1 0 -13 0M1026 463a8 8 0 1 0 16 0a8 8 0 1 0 -16 0M1049 459a7 7 0 1 0 13 0a7 7 0 1 0 -13 0M1064 464a8 8 0 1 0 16 0a8 8 0 1 0 -16 0M1082 463a5 5 0 1 0 10 0a5 5 0 1 0 -10 0M1093 456a5 5 0 1 0 11 0a5 5 0 1 0 -11 0M1105 462a6 6 0 1 0 11 0a6 6 0 1 0 -11 0M1114 459a6 6 0 1 0 11 0a6 6 0 1 0 -11 0M1128 458a7 7 0 1 0 13 0a7 7 0 1 0 -13 0M1019 468a7 7 0 1 0 13 0a7 7 0 1 0 -13 0M1032 466a7 7 0 1 0 14 0a7 7 0 1 0 -14 0M1043 470a7 7 0 1 0 14 0a7 7 0 1 0 -14 0M1056 473a8 8 0 1 0 16 0a8 8 0 1 0 -16 0M1068 467a8 8 0 1 0 16 0a8 8 0 1 0 -16 0M1085 471a5 5 0 1 0 11 0a5 5 0 1 0 -11 0M1093 470a8 8 0 1 0 17 0a8 8 0 1 0 -17 0M1102 474a8 8 0 1 0 16 0a8 8 0 1 0 -16 0M1120 468a8 8 0 1 0 16 0a8 8 0 1 0 -16 0M1067 481a5 5 0 1 0 11 0a5 5 0 1 0 -11 0M1078 477a8 8 0 1 0 15 0a8 8 0 1 0 -15 0M1098 478a5 5 0 1 0 10 0a5 5 0 1 0 -10 0M1063 491a5 5 0 1 0 11 0a5 5 0 1 0 -11 0" fill="#454322"/>
<path d="M1129 492h0M1088 482h0M1100 465h0M1073 482h0M1085 469h0M1070 492h0M1090 489h0M1022 483h0M1079 495h0M1043 492h0M1059 481h0M1056 492h0M1105 485h0M1091 496h0M1024 479h0M1110 481h0M1024 479h0M1079 499h0M1072 490h0M1090 479h0M1137 473h0M1066 479h0M1034 472h0M1050 480h0M1083 476h0M1095 482h0M1113 471h0M1130 481h0M1108 467h0M1066 492h0M1064 472h0M1065 480h0M1051 475h0M1115 491h0M1033 473h0M1095 479h0M1060 494h0M1058 481h0M1057 470h0M1040 493h0M1114 464h0M1121 483h0M1092 495h0M1088 493h0M1077 495h0M1063 490h0M1103 480h0M1014 469h0M1027 471h0M1086 490h0M1121 496h0M1118 486h0M1104 485h0" stroke="#302a19" stroke-width="2.6" stroke-linecap="round"/>
<path d="M1074 453h0M1063 482h0M1064 480h0M1071 486h0M1102 486h0M1101 485h0M1140 472h0M1096 478h0M1017 472h0M1032 476h0M1084 462h0M1107 484h0M1047 467h0M1080 494h0M1076 465h0M1086 470h0M1019 465h0M1081 468h0M1076 460h0M1019 484h0M1035 474h0M1067 470h0M1084 465h0M1091 470h0M1039 469h0M1082 472h0M1021 458h0M1050 464h0M1015 462h0M1115 454h0M1069 475h0M1098 464h0M1098 485h0M1108 481h0M1087 486h0M1081 475h0M1026 473h0M1075 484h0M1143 471h0M1068 489h0M1051 455h0M1076 488h0M1070 476h0M1061 475h0M1079 482h0M1061 456h0M1073 491h0M1079 474h0M1103 467h0M1094 466h0M1039 455h0M1078 477h0M1025 469h0M1036 475h0M1023 472h0M1127 458h0M1034 474h0M1092 462h0M1054 462h0M1084 472h0M1121 479h0M1045 470h0M1125 480h0M1131 486h0M1030 485h0M1067 500h0M1106 474h0M1103 478h0M1098 479h0M1090 487h0M1068 486h0M1091 467h0M1143 456h0M1119 478h0M1034 492h0M1133 464h0M1067 480h0M1134 472h0M1045 449h0M1103 482h0M1105 494h0M1086 463h0M1098 476h0M1096 461h0M1024 459h0M1085 477h0M1048 461h0M1040 487h0M1062 485h0M1036 477h0" stroke="#3a361d" stroke-width="2.4" stroke-linecap="round"/>
<path d="M1054 457h0M1018 470h0M1077 477h0M1073 500h0M1102 464h0M1125 461h0M1036 467h0M1086 457h0M1067 462h0M1063 471h0M1045 455h0M1129 479h0M1136 460h0M1082 502h0M1064 456h0M1068 450h0M1052 455h0M1088 453h0M1121 443h0M1099 492h0M1127 454h0M1136 476h0M1131 472h0M1105 459h0M1126 457h0M1046 440h0M1065 428h0M1070 484h0M1098 469h0M1143 462h0M1100 480h0M1104 485h0M1089 432h0M1026 461h0M1029 466h0M1107 466h0M1095 443h0M1076 472h0M1057 479h0M1125 446h0M1125 458h0M1042 457h0M1104 455h0M1038 466h0M1032 458h0M1099 449h0M1146 469h0M1110 478h0M1061 462h0M1083 482h0M1048 460h0M1096 491h0M1128 481h0M1045 436h0M1152 460h0M1030 470h0M1126 478h0M1112 480h0M1140 457h0M1070 452h0M1146 448h0M1100 440h0M1065 456h0M1092 450h0M1038 439h0M1064 484h0M1047 479h0M1099 436h0M1046 467h0M1028 474h0M1097 480h0M1083 474h0M1112 444h0M1080 459h0M1075 468h0M1104 437h0M1040 475h0M1126 451h0M1067 487h0M1106 437h0M1040 487h0M1119 464h0M1069 458h0M1108 473h0M1016 455h0M1142 459h0M1062 427h0M1012 463h0M1033 427h0M1095 434h0M1093 463h0M1078 476h0M1073 477h0M1107 483h0M1087 488h0M1044 465h0M1152 456h0M1072 497h0M1069 487h0M1107 456h0M1071 470h0M1107 471h0M1052 446h0M1139 446h0M1020 458h0M1089 436h0M1031 477h0M1102 458h0M1092 474h0M1106 456h0M1129 457h0M1028 451h0M1107 432h0M1050 463h0M1073 455h0M1079 459h0M1072 481h0M1043 471h0M1075 490h0M1059 501h0M1132 459h0M1071 498h0M1075 472h0M1062 465h0M1132 430h0M1097 444h0M1147 446h0M1066 465h0M1149 451h0M1073 494h0M1142 429h0M1047 465h0M1016 452h0M1033 450h0M1095 473h0M1047 463h0M1014 467h0M1038 460h0M1133 445h0M1118 464h0M1034 447h0M1037 462h0M1049 476h0M1068 472h0M1063 491h0M1122 442h0M1076 475h0M1139 459h0M1122 466h0M1066 495h0M1110 459h0M1045 467h0M1113 478h0M1101 452h0M1129 463h0M1019 454h0M1074 457h0M1077 478h0M1080 470h0M1125 456h0M1043 455h0M1073 478h0M1036 467h0M1117 457h0M1052 439h0M1111 456h0M1112 467h0M1039 472h0M1054 480h0M1145 452h0M1070 484h0M1098 454h0M1122 463h0M1078 474h0M1057 447h0M1083 478h0M1032 465h0M1087 455h0M1093 464h0M1028 446h0M1090 467h0M1066 487h0M1037 471h0M1090 448h0M1141 457h0M1073 494h0M1131 468h0M1090 489h0M1114 468h0M1087 466h0M1082 474h0M1133 440h0M1119 466h0M1141 468h0M1016 458h0M1080 453h0M1082 462h0M1143 460h0M1133 443h0M1076 487h0M1108 431h0M1103 461h0M1129 458h0M1091 432h0M1115 454h0M1100 449h0M1126 440h0M1132 466h0M1102 479h0M1116 446h0M1076 474h0M1108 470h0M1045 463h0M1114 487h0M1082 465h0M1039 485h0M1066 428h0M1066 458h0" stroke="#444221" stroke-width="1.8" stroke-linecap="round"/>
<path d="M1058 465h0M1075 496h0M1104 436h0M1026 457h0M1118 439h0M1084 439h0M1034 465h0M1101 437h0M1029 471h0M1123 443h0M1047 462h0M1129 453h0M1128 434h0M1018 469h0M1074 453h0M1000 440h0M1056 472h0M1048 467h0M1146 440h0M1038 430h0M1096 448h0M1065 433h0M1071 445h0M1064 447h0M1130 455h0M1065 462h0M1124 455h0M1127 458h0M1115 451h0M1084 439h0M1097 433h0M1095 418h0M1073 480h0M1017 469h0M1127 434h0M1039 497h0M1113 463h0M1127 453h0M1023 454h0M1079 448h0M1075 447h0M1073 419h0M1112 461h0M1095 451h0M1020 451h0M1109 449h0M1054 457h0M1107 458h0M1136 449h0M1099 465h0M1030 437h0M1090 454h0M1031 473h0M1051 451h0M1048 448h0M1091 438h0M1049 482h0M1055 453h0M1138 438h0M1134 455h0M1019 476h0M1030 443h0M1067 415h0M1106 485h0M1086 445h0M1090 467h0M1022 469h0M1114 461h0M1146 465h0M1025 468h0M1127 448h0M1039 452h0M1060 427h0M1138 470h0M1032 493h0M1104 486h0M1013 440h0M1099 479h0M1066 460h0M1082 465h0M1036 468h0M1077 453h0M1089 483h0M1089 420h0M1111 467h0M1104 454h0M1135 449h0M1108 477h0M1066 481h0M1093 452h0M1062 495h0M1078 463h0M1051 435h0M1060 446h0M1111 459h0M1075 432h0M1104 454h0M1116 489h0M1099 433h0M1031 466h0M1113 426h0M1087 480h0M1106 471h0M1009 452h0M1097 477h0M1105 487h0M1062 465h0M1134 450h0M1041 473h0M1030 448h0M1109 441h0M1145 436h0M1141 447h0M1014 466h0M1077 473h0M1080 454h0M1110 445h0M1113 428h0M1110 471h0M1038 433h0M1099 434h0M1055 469h0M1083 457h0M1105 458h0M1076 437h0M1152 445h0M1089 471h0M1058 463h0M1018 481h0M1090 430h0M1093 476h0M1088 470h0M1125 430h0M1058 444h0M1036 463h0M1055 425h0M1072 488h0M1133 427h0M1022 466h0M1110 481h0M1076 477h0M1088 451h0M1030 480h0M1026 485h0M1129 446h0M1123 461h0M1065 453h0M1085 449h0M1120 436h0M1015 471h0M1066 483h0M1127 447h0M1023 451h0M1120 455h0M1029 444h0M1018 443h0M1144 466h0M1057 457h0M1017 451h0M1123 436h0M1105 469h0M1039 445h0M1123 453h0M1083 482h0M1041 455h0M1078 434h0M1104 442h0M1069 479h0M1022 472h0M1124 444h0M1050 468h0M1046 431h0M1076 460h0M1053 431h0M1107 433h0M1021 436h0M1086 444h0M1013 459h0M1087 434h0M1040 429h0M1047 457h0M1107 460h0M1147 444h0M1102 456h0M1076 444h0M1050 430h0M1033 464h0M1048 442h0M1085 452h0M1079 455h0M1126 420h0M1151 469h0M1131 456h0M1025 452h0M1077 458h0M1026 439h0M1130 459h0M1111 456h0M1080 443h0M1028 468h0M1111 455h0M1088 456h0M1130 426h0M1036 443h0M1057 473h0M1052 460h0M1040 488h0M1038 469h0M1101 455h0M1095 465h0M1139 448h0M1066 462h0M1038 467h0M1093 450h0M1010 451h0M1039 467h0M1110 434h0M1068 474h0M1106 433h0M1071 439h0M1063 462h0M1087 463h0M1067 475h0M1055 495h0M1030 440h0M1048 461h0M1014 443h0M1126 435h0M1103 462h0M1104 437h0M1040 460h0M1090 431h0M1127 481h0M1124 453h0M1053 455h0M1057 419h0M1037 438h0M1113 461h0M1043 463h0M1099 437h0M1037 477h0M1136 466h0M1094 448h0M1067 478h0M1146 440h0M1097 476h0M1089 456h0M1071 455h0M1124 443h0M1072 434h0M1067 474h0M1048 462h0M1123 436h0M1078 477h0M1123 458h0M1028 472h0M1032 463h0M1074 446h0M1060 472h0M1075 471h0M1048 460h0M1099 439h0M1070 488h0M1026 465h0M1127 448h0M1110 451h0M1077 438h0M1083 468h0M1096 430h0M1045 432h0M1124 455h0M1110 422h0M1073 437h0M1073 429h0M1042 466h0M1138 451h0M1037 464h0M1112 483h0M1074 453h0M1134 448h0M1125 440h0M1131 421h0M1100 428h0M1140 438h0M1067 428h0M1081 469h0M1094 430h0M1111 429h0M1128 458h0M1041 450h0M1097 452h0" stroke="#4e4e26" stroke-width="2.4" stroke-linecap="round"/>
<path d="M1092 442h0M1133 432h0M1128 430h0M1128 459h0M1051 448h0M1101 433h0M1085 452h0M1075 473h0M1011 479h0M1141 461h0M1078 420h0M1064 493h0M1070 420h0M1097 411h0M1063 421h0M1114 466h0M1058 426h0M1076 406h0M1032 460h0M1112 447h0M1118 468h0M1015 458h0M1084 474h0M1105 465h0M1104 450h0M1123 448h0M1073 402h0M1070 448h0M1110 488h0M1027 465h0M1072 434h0M1036 452h0M1081 440h0M1046 415h0M1124 439h0M1100 474h0M1098 427h0M1044 489h0M1106 482h0M1117 435h0M1117 441h0M1081 440h0M1036 437h0M1115 457h0M1055 432h0M1137 428h0M1097 475h0M1102 431h0M1104 437h0M1028 423h0M1124 417h0M1101 414h0M1015 449h0M1124 436h0M1120 457h0M1024 465h0M1081 482h0M1040 426h0M1106 466h0M1097 477h0M1074 428h0M1129 435h0M1094 476h0M1027 410h0M1088 466h0M1039 434h0M1094 443h0M1090 468h0M1125 476h0M1098 456h0M1008 437h0M1129 435h0M1044 432h0M1118 448h0M1066 486h0M1078 458h0M1144 454h0M1097 443h0M1093 405h0M1014 442h0M1103 409h0M1088 469h0M1114 457h0M1036 474h0M1075 443h0M1084 476h0M1095 477h0M1135 436h0M1055 442h0M1115 433h0M1090 435h0M1073 490h0M1149 441h0M1088 431h0M1095 463h0M1117 458h0M1095 474h0M1108 409h0M1088 444h0M1133 445h0M1114 433h0M1051 436h0M1042 424h0M1056 413h0M1070 477h0M1087 419h0M1094 426h0M1007 435h0M1105 448h0M1140 461h0M1092 464h0M1098 407h0M1077 451h0M1048 432h0M1100 470h0M1053 451h0M1121 413h0M1103 433h0M1103 451h0M1126 459h0M1102 473h0M1138 455h0M1086 444h0M1088 447h0M1053 435h0M1083 437h0M1034 479h0M1017 467h0M1106 463h0M1020 459h0M1097 427h0M1022 430h0M1051 469h0M1151 437h0M1055 453h0M1098 424h0M1050 446h0M1144 441h0M1017 479h0M1058 454h0M1146 418h0M1019 451h0M1097 430h0M1052 450h0M1140 468h0M1039 472h0M1069 473h0M1117 441h0M1053 478h0M1105 456h0M1050 412h0M1055 413h0M1136 454h0M1136 454h0M1081 436h0M1085 462h0M1091 434h0M1031 435h0M1055 413h0M1099 428h0M1068 445h0M1127 453h0M1119 452h0M1083 473h0M1095 437h0M1063 425h0M1105 468h0M1095 424h0M1107 431h0M1095 413h0M1064 466h0M1059 466h0M1065 457h0M1062 488h0M1068 431h0M1079 436h0M1091 438h0M1017 483h0M1100 424h0M1133 440h0M1063 442h0M1122 411h0M1135 446h0M1065 491h0M1107 473h0M1131 444h0M1117 494h0M1107 456h0M1034 490h0M1033 457h0M1065 464h0M1112 459h0M1054 447h0M1037 474h0M1019 427h0M1026 469h0M1092 442h0M1037 461h0M1029 469h0M1124 463h0M1100 456h0M1120 403h0M1107 462h0M1048 465h0M1080 453h0M1025 442h0M1097 432h0M1037 432h0M1103 465h0M1101 470h0M1142 461h0M1082 464h0M1017 480h0M1099 475h0M1102 460h0M1115 447h0M1110 419h0M1090 465h0M1087 422h0M1082 443h0M1056 442h0M1056 454h0M1140 418h0M1128 447h0M1060 450h0M1012 463h0M1047 443h0M1043 465h0M1089 458h0M1098 449h0M1136 464h0M1118 420h0M1048 456h0M1117 434h0M1140 437h0M1117 459h0M1040 462h0M1134 440h0M1111 445h0M1034 444h0M1065 428h0M1047 422h0M1132 464h0M1029 464h0M1093 458h0M1131 444h0M1129 443h0M1119 437h0M1131 423h0M1124 455h0M1060 434h0M1129 441h0M1048 462h0M1049 453h0M1045 441h0M1033 476h0M1045 414h0M1040 431h0M1090 435h0M1123 448h0M1107 469h0M1069 426h0M1073 476h0M1050 448h0M1091 421h0M1086 417h0M1082 432h0M1072 412h0M1030 446h0M1044 428h0M1035 432h0M1107 475h0M1063 422h0M1045 477h0M1018 465h0M1073 453h0M1107 456h0M1077 422h0M1049 440h0M1134 446h0M1124 443h0M1106 431h0M1118 426h0M1135 430h0M1115 413h0M1104 480h0M1106 412h0M1142 467h0M1051 419h0M1094 449h0M1041 457h0M1136 467h0M1061 431h0M1029 463h0M1103 436h0M1107 413h0M1030 469h0M1044 431h0M1038 418h0M1130 452h0M1087 428h0M1038 470h0M1101 456h0M1063 472h0M1108 459h0M1094 417h0M1095 447h0M1063 467h0M1044 419h0M1110 419h0" stroke="#585a2a" stroke-width="2.3" stroke-linecap="round"/>
<path d="M1094 453h0M1095 439h0M1034 429h0M1079 437h0M1049 463h0M1148 448h0M1017 435h0M1143 458h0M1098 408h0M1139 462h0M1016 444h0M1141 438h0M1074 433h0M1105 429h0M1131 449h0M1043 427h0M1069 432h0M1087 471h0M1089 421h0M1057 423h0M1115 432h0M1085 446h0M1107 403h0M1113 434h0M1082 420h0M1020 444h0M1112 401h0M1083 442h0M1072 414h0M1133 440h0M1141 431h0M1110 441h0M1118 406h0M1017 443h0M1137 419h0M1104 429h0M1110 446h0M1099 455h0M1071 441h0M1036 411h0M1046 460h0M1132 447h0M1120 465h0M1081 426h0M1131 413h0M1081 436h0M1053 410h0M1102 431h0M1034 435h0M1062 434h0M1117 458h0M1134 452h0M1059 410h0M1042 465h0M1132 450h0M1110 463h0M1063 419h0M1058 448h0M1128 438h0M1059 468h0M1121 450h0M1128 448h0M1108 421h0M1115 420h0M1070 455h0M1028 433h0M1056 455h0M1094 428h0M1104 473h0M1137 431h0M1040 454h0M1073 466h0M1126 446h0M1104 471h0M1102 451h0M1133 447h0M1126 455h0M1051 450h0M1091 420h0M1127 439h0M1085 455h0M1111 469h0M1150 454h0M1055 466h0M1106 453h0M1110 458h0M1131 439h0M1029 461h0M1019 456h0M1122 443h0M1081 417h0M1104 471h0M1068 447h0M1032 467h0M1051 466h0M1107 470h0M1016 472h0M1058 419h0M1024 442h0M1023 463h0M1053 408h0M1103 405h0M1061 445h0M1085 415h0M1135 418h0M1131 433h0M1106 448h0M1073 482h0M1055 437h0M1068 428h0M999 432h0M1072 422h0M1088 418h0M1087 401h0M1035 399h0M1033 431h0M1068 451h0M1065 434h0M1112 454h0M1084 408h0M1120 472h0M1099 431h0M1056 462h0M1123 443h0M1054 472h0M1035 420h0M1055 456h0M1036 456h0M1102 431h0M1120 462h0M1088 457h0M1112 430h0M1029 421h0M1123 423h0M1112 421h0M1095 449h0M1038 429h0M1071 463h0M1085 465h0M1067 440h0M1056 452h0M1079 407h0M1085 443h0M1063 468h0M1111 476h0M1012 449h0M1125 436h0M1090 438h0M1040 456h0M1108 408h0M1079 475h0M1143 416h0M1058 463h0M1110 433h0M1058 469h0M1059 434h0M1093 445h0M1064 455h0M1113 462h0M1061 456h0M1111 452h0M1062 453h0M1055 443h0M1041 472h0M1130 443h0M1087 467h0M1047 436h0M1060 444h0M1075 445h0M1021 459h0M1133 415h0M1136 396h0M1117 452h0M1027 433h0M1100 436h0M1070 447h0M1088 426h0M1102 435h0M1055 433h0M1124 444h0M1095 466h0M1026 430h0M1124 425h0M1035 420h0M1082 446h0M1035 410h0M1106 400h0M1026 465h0M1014 454h0M1107 444h0M1046 411h0M1139 462h0M1081 467h0M1092 422h0M1138 416h0M1053 446h0M1035 419h0M1087 474h0M1084 413h0M1058 402h0M1136 422h0M1074 465h0M1119 423h0M1073 434h0M1122 467h0M1104 444h0M1032 459h0M1127 458h0M1032 424h0M1015 453h0M1118 421h0M1075 429h0M1134 434h0M1097 433h0M1077 406h0M1102 473h0M1091 457h0M1132 440h0M1099 471h0M1083 473h0M1082 397h0M1075 418h0M1047 462h0M1081 432h0M1117 457h0M1133 422h0M1091 441h0M1078 403h0M1025 431h0M1059 411h0M1097 470h0M1014 456h0M1034 420h0M1072 441h0M1066 437h0M1114 411h0M1083 456h0M1150 441h0M1093 429h0M1097 452h0M1084 461h0M1027 450h0M1059 425h0M1069 470h0M1050 425h0M1076 458h0M1069 398h0M1097 414h0M1027 442h0M1126 446h0M1094 461h0M1078 429h0M1088 456h0M1107 470h0M1123 474h0M1030 446h0M1096 437h0M1042 446h0M1090 457h0M1108 449h0M1062 443h0M1104 432h0M1112 402h0M1157 437h0M1012 423h0M1071 450h0M1022 466h0M1093 443h0M1118 452h0M1125 433h0M1114 411h0M1024 437h0M1077 418h0M1085 402h0M1061 440h0M1018 454h0M1117 430h0M1082 443h0M1142 421h0M1125 447h0M1088 434h0M1051 429h0M1079 428h0M1075 457h0M1052 470h0M1050 454h0M1069 413h0M1102 436h0M1067 453h0M1095 452h0M1039 470h0M1092 476h0M1015 472h0M1136 427h0M1124 417h0M1062 418h0M1038 458h0M1041 454h0M1087 427h0M1071 463h0M1041 408h0M1117 456h0M1136 475h0M1143 466h0M1105 451h0M1132 422h0M1110 403h0M1061 398h0" stroke="#62662f" stroke-width="1.9" stroke-linecap="round"/>
<path d="M1121 411h0M1018 444h0M1096 412h0M1113 456h0M1126 453h0M1038 459h0M1136 447h0M1099 447h0M1101 399h0M1041 453h0M1110 428h0M1041 447h0M1034 461h0M1012 452h0M1055 423h0M1010 452h0M1093 452h0M1084 464h0M1100 415h0M1122 445h0M1099 403h0M1104 445h0M1126 417h0M1064 450h0M1023 458h0M1119 418h0M1069 428h0M1006 443h0M1110 425h0M1100 430h0M1071 393h0M1049 454h0M1092 447h0M1107 423h0M1102 457h0M1040 448h0M1095 414h0M1114 393h0M1136 450h0M1118 419h0M1052 417h0M1029 459h0M1104 422h0M1009 449h0M1127 417h0M1022 438h0M1026 458h0M1142 426h0M1084 444h0M1100 412h0M1049 455h0M1080 417h0M1124 435h0M1123 433h0M1117 440h0M1032 422h0M1147 441h0M1018 421h0M1067 431h0M1077 422h0M1093 413h0M1067 469h0M1037 455h0M1023 437h0M1136 443h0M1041 407h0M1127 418h0M1111 430h0M1018 453h0M1064 451h0M1120 417h0M1131 433h0M1061 453h0M1136 460h0M1061 419h0M1072 421h0M1118 431h0M1046 411h0M1040 464h0M1077 436h0M1087 426h0M1037 459h0M1048 439h0M1115 447h0M1135 459h0M1033 450h0M1105 461h0M1054 435h0M1066 428h0M1125 433h0M1028 456h0M1045 447h0M1032 431h0M1138 437h0M1151 446h0M1086 402h0M1059 418h0M1049 416h0M1133 443h0M1026 431h0M1093 453h0M1042 457h0M1128 428h0M1102 389h0M1063 412h0M1034 450h0M1049 443h0M1018 433h0M1032 428h0M1127 406h0M1060 415h0M1018 446h0M1057 403h0M1052 422h0M1046 458h0M1064 457h0M1116 411h0M1107 414h0M1111 412h0M1097 419h0M1037 456h0M1058 434h0M1041 431h0M1054 433h0M1096 426h0M1103 424h0M1125 431h0M1136 457h0M1089 452h0M1109 426h0M1123 428h0M1086 465h0M1036 435h0M1009 443h0M1019 446h0M1056 433h0M1083 434h0M1059 420h0M1128 443h0M1103 461h0M1128 420h0M1052 434h0M1044 417h0M1113 407h0M1110 427h0M1120 439h0M1078 393h0M1093 447h0M1100 403h0M1104 432h0M1027 455h0M1075 397h0M1066 390h0M1046 442h0M1091 443h0M1080 452h0M1061 423h0M1096 407h0M1101 424h0M1033 426h0M1062 423h0M1112 411h0M1036 420h0M1041 410h0M1048 442h0M1114 438h0M1042 406h0M1079 418h0M1131 456h0M1067 399h0M1015 456h0M1058 411h0M1075 449h0M1042 434h0M1141 455h0M1121 453h0M1101 431h0M1061 401h0M1105 437h0M1051 449h0M1104 420h0M1122 452h0M1079 423h0M1112 409h0M1037 413h0M1110 414h0M1151 452h0M1083 414h0M1140 440h0M1035 415h0M1077 394h0M1095 439h0M1112 459h0M1115 402h0M1109 420h0M1106 425h0M1033 460h0M1087 454h0M1039 428h0M1110 439h0M1067 434h0M1120 436h0M1022 450h0M1070 451h0M1099 427h0M1111 460h0M1138 441h0M1106 424h0M1041 411h0M1072 430h0M1136 440h0M1110 407h0M1062 427h0M1120 450h0M1050 441h0M1077 420h0M1091 425h0M1049 421h0M1077 396h0M1084 429h0M1128 444h0M1082 459h0M1129 454h0M1138 449h0M1015 452h0M1085 403h0M1086 418h0M1094 415h0M1083 434h0M1024 448h0M1095 448h0M1098 443h0M1076 412h0M1073 450h0M1087 410h0M1134 437h0M1085 438h0M1121 420h0M1056 426h0M1056 398h0M1122 443h0M1077 448h0M1059 427h0M1088 435h0M1129 421h0M1056 411h0M1136 444h0M1113 436h0M1087 434h0M1073 418h0M1018 413h0M1142 451h0M1121 442h0M1061 424h0M1049 440h0M1061 418h0" stroke="#6c7233" stroke-width="1.8" stroke-linecap="round"/>
<path d="M1083 409h0M1093 411h0M1068 414h0M1100 444h0M1075 407h0M1131 405h0M1107 434h0M1096 411h0M1026 431h0M1053 415h0M1075 411h0M1127 427h0M1080 430h0M1083 394h0M1108 405h0M1140 406h0M1059 395h0M1036 438h0M1101 413h0M1092 408h0M1041 417h0M1120 402h0M1093 422h0M1072 413h0M1036 434h0M1132 406h0M1053 430h0M1126 408h0M1038 409h0M1071 415h0M1071 428h0M1112 406h0M1113 394h0M1035 440h0M1106 395h0M1135 421h0M1070 391h0M1066 417h0M1078 417h0M1130 441h0M1111 400h0M1030 415h0M1056 444h0M1066 427h0M1141 418h0M1076 439h0M1099 408h0M1095 399h0M1108 422h0M1056 429h0M1059 422h0M1124 412h0M1110 401h0M1091 422h0M1078 399h0M1095 422h0M1071 420h0M1072 426h0M1107 393h0M1057 427h0M1110 396h0M1118 416h0M1071 441h0M1044 413h0M1070 410h0M1025 449h0M1058 420h0M1093 422h0M1045 417h0M1074 396h0M1101 427h0M1090 407h0M1135 411h0M1059 435h0M1102 390h0M1092 432h0M1074 419h0M1128 444h0M1034 446h0M1117 429h0M1123 433h0M1102 437h0M1017 438h0M1111 437h0M1099 415h0M1134 395h0M1071 395h0M1050 452h0M1142 419h0M1109 399h0M1069 400h0M1073 391h0M1052 428h0M1056 424h0M1131 409h0M1064 416h0M1039 431h0M1104 432h0M1075 400h0M1055 422h0M1108 396h0M1055 410h0M1121 420h0M1091 413h0M1055 401h0M1021 444h0M1083 407h0M1108 407h0M1048 421h0M1104 413h0M1044 425h0M1087 444h0M1086 455h0M1091 419h0M1069 421h0M1114 401h0M1099 414h0M1079 436h0M1069 407h0M1101 403h0M1096 394h0M1059 396h0M1071 414h0M1023 438h0M1058 430h0M1138 447h0M1111 396h0M1054 426h0M1099 457h0M1063 420h0M1035 421h0M1094 426h0M1080 394h0M1120 426h0M1055 422h0M1103 405h0M1066 422h0M1141 419h0M1123 406h0M1045 455h0M1096 406h0M1066 429h0M1054 439h0M1093 444h0M1144 432h0M1024 425h0M1120 405h0M1037 414h0M1059 415h0M1104 399h0M1108 392h0M1115 427h0M1068 429h0M1103 406h0M1061 426h0M1130 434h0M1111 453h0M1096 419h0M1109 408h0M1062 395h0M1031 432h0M1097 411h0M1109 402h0M1065 414h0M1101 400h0M1113 412h0M1109 401h0M1077 456h0M1112 409h0M1061 415h0M1071 447h0M1100 424h0M1056 430h0M1039 409h0M1063 417h0M1133 453h0M1108 400h0M1103 391h0M1063 397h0M1122 438h0M1110 395h0M1078 426h0M1074 434h0M1075 438h0M1066 397h0M1057 425h0M1071 445h0M1047 425h0M1121 425h0M1109 408h0M1129 423h0M1113 401h0M1058 416h0M1117 409h0M1076 448h0M1096 441h0M1052 425h0M1096 416h0M1032 414h0M1137 412h0M1035 409h0M1068 429h0M1086 430h0M1100 439h0M1059 414h0M1115 435h0M1091 409h0M1123 444h0M1100 420h0M1124 438h0M1079 408h0M1069 407h0M1123 412h0M1101 429h0M1116 425h0M1090 426h0M1124 413h0M1073 399h0M1123 424h0M1102 403h0M1130 425h0M1128 447h0M1033 435h0M1103 410h0M1067 420h0M1061 412h0M1044 430h0M1033 424h0M1089 412h0M1103 426h0M1104 399h0M1045 423h0M1061 420h0M1083 398h0M1126 421h0M1073 418h0M1120 430h0M1154 441h0M1107 396h0M1040 428h0M1067 399h0M1092 433h0M1049 410h0M1128 427h0M1047 415h0M1109 410h0M1144 437h0M1086 444h0M1035 445h0M1050 424h0M1091 422h0M1091 411h0M1117 422h0M1086 395h0M1097 420h0M1115 410h0M1088 406h0M1047 421h0M1140 420h0M1062 431h0M1020 434h0M1135 441h0M1092 450h0M1103 414h0M1120 422h0M1030 431h0M1105 408h0M1052 434h0M1086 414h0M1132 444h0M1059 425h0M1050 435h0M1019 434h0M1133 410h0" stroke="#767e38" stroke-width="1.9" stroke-linecap="round"/>
<path d="M1070 412h0M1126 465h0M1086 467h0M1070 456h0M1089 425h0M1091 446h0M1072 418h0M1093 419h0M1129 425h0M1081 444h0M1113 447h0M1020 467h0M1142 457h0M1075 474h0M1060 436h0M1031 464h0M1148 435h0M1134 414h0M1074 412h0M1076 437h0M1083 412h0M1135 436h0M1070 466h0M1129 462h0M1052 450h0M1120 436h0M1125 443h0M1070 415h0M1036 475h0M1068 426h0M1105 455h0M1122 416h0M1083 408h0M1079 423h0M1127 456h0M1092 469h0M1096 427h0M1084 428h0M1090 418h0M1071 448h0M1122 441h0M1033 471h0M1091 488h0M1129 433h0M1120 466h0M1040 449h0M1107 433h0M1017 451h0M1018 443h0M1043 467h0M1069 463h0M1089 470h0M1102 435h0M1057 442h0M1101 455h0M1122 411h0M1097 462h0M1029 469h0M1103 428h0M1104 424h0M1037 418h0M1082 488h0M1109 403h0M1082 404h0M1079 411h0M1120 448h0M1030 474h0M1104 408h0M1014 455h0M1065 478h0M1037 434h0M1072 449h0M1121 411h0M1143 438h0M1102 450h0M1028 453h0M1133 458h0M1086 458h0M1008 448h0M1045 432h0M1102 471h0M1046 429h0M1065 413h0M1118 442h0M1059 461h0M1071 471h0M1055 433h0M1070 424h0M1109 467h0M1113 452h0M1099 439h0M1071 413h0M1030 423h0M1024 456h0M1134 440h0M1069 451h0M1069 475h0M1107 435h0M1125 427h0M1122 467h0M1094 463h0M1095 470h0M1051 468h0M1097 451h0M1073 487h0M1065 462h0M1118 450h0M1067 428h0M1069 397h0M1055 416h0M1097 408h0M1104 406h0M1056 427h0M1127 453h0M1060 454h0M1058 474h0M1078 453h0M1095 442h0M1091 422h0M1030 469h0M1060 425h0M1139 422h0M1027 458h0M1096 441h0M1106 464h0M1071 417h0M1135 455h0M1066 410h0M1013 453h0M1049 415h0M1123 468h0M1079 484h0M1133 420h0M1028 431h0M1127 464h0M1140 430h0M1066 417h0M1111 479h0M1055 443h0M1033 433h0M1056 408h0M1024 461h0M1059 426h0M1028 464h0M1034 452h0M1048 435h0M1019 436h0M1112 422h0M1073 484h0M1095 460h0M1101 407h0M1045 460h0M1137 459h0M1028 428h0M1021 463h0M1112 437h0M1118 467h0M1072 454h0M1025 438h0M1074 443h0M1100 401h0M1074 451h0M1125 433h0M1095 451h0M1092 456h0M1111 393h0M1111 486h0M1128 421h0M1069 475h0M1051 440h0M1130 425h0M1103 461h0M1139 425h0M1138 447h0M1030 467h0M1091 452h0M1056 460h0M1076 443h0M1065 428h0M1128 461h0M1099 479h0M1086 437h0M1061 445h0M1045 440h0M1045 438h0M1056 466h0M1113 451h0M1142 445h0M1035 467h0M1104 410h0M1127 415h0M1062 493h0M1076 446h0M1091 458h0M1058 455h0M1063 420h0M1129 480h0M1123 442h0M1035 449h0M1055 475h0M1077 471h0M1101 470h0M1016 449h0M1044 477h0M1042 459h0M1107 444h0M1088 461h0M1127 444h0M1113 456h0M1110 425h0M1125 421h0M1121 460h0M1127 433h0M1036 452h0M1021 464h0M1107 469h0M1057 428h0M1098 422h0M1079 432h0M1117 460h0M1107 460h0M1055 422h0M1044 423h0M1114 424h0M1064 428h0M1054 429h0M1073 465h0M1133 446h0M1026 459h0M1067 427h0M1101 472h0M1120 416h0M1112 414h0M1066 398h0M1036 456h0M1109 457h0M1111 405h0M1098 436h0M1068 431h0M1104 461h0M1035 415h0M1110 443h0M1080 478h0M1126 458h0M1046 470h0M1027 461h0M1085 427h0M1103 405h0M1043 470h0M1045 451h0M1131 445h0M1051 450h0M1116 439h0M1107 479h0M1073 417h0M1069 483h0M1061 436h0M1087 480h0M1091 434h0M1030 438h0M1055 433h0M1115 456h0M1075 446h0M1086 437h0M1063 470h0M1043 471h0M1123 435h0M1058 428h0M1026 463h0M1042 422h0M1069 416h0M1091 410h0M1111 410h0M1071 414h0M1071 418h0M1025 467h0M1058 439h0M1048 444h0M1030 458h0M1038 454h0M1064 452h0M1066 464h0M1081 480h0M1035 473h0M1020 462h0M1104 421h0M1068 474h0M1123 411h0" stroke="#b4503c" stroke-width="2.3" stroke-linecap="round"/>
<path d="M1038,563 L1038,530" stroke="#4a2a1e" stroke-width="5"/>
<path d="M1032 418a6 6 0 1 0 13 0a6 6 0 1 0 -13 0M1043 424a5 5 0 1 0 11 0a5 5 0 1 0 -11 0M1059 419a6 6 0 1 0 13 0a6 6 0 1 0 -13 0M1068 421a6 6 0 1 0 12 0a6 6 0 1 0 -12 0M1079 424a5 5 0 1 0 10 0a5 5 0 1 0 -10 0M997 433a5 5 0 1 0 10 0a5 5 0 1 0 -10 0M1006 428a7 7 0 1 0 15 0a7 7 0 1 0 -15 0M1023 429a8 8 0 1 0 15 0a8 8 0 1 0 -15 0M1033 429a7 7 0 1 0 13 0a7 7 0 1 0 -13 0M1047 431a6 6 0 1 0 13 0a6 6 0 1 0 -13 0M1059 433a6 6 0 1 0 12 0a6 6 0 1 0 -12 0M1075 428a6 6 0 1 0 12 0a6 6 0 1 0 -12 0M1085 433a7 7 0 1 0 13 0a7 7 0 1 0 -13 0M1002 443a6 6 0 1 0 13 0a6 6 0 1 0 -13 0M1008 445a8 8 0 1 0 15 0a8 8 0 1 0 -15 0M1023 438a8 8 0 1 0 15 0a8 8 0 1 0 -15 0M1038 439a6 6 0 1 0 11 0a6 6 0 1 0 -11 0M1046 443a5 5 0 1 0 11 0a5 5 0 1 0 -11 0M1062 445a5 5 0 1 0 11 0a5 5 0 1 0 -11 0M1070 445a5 5 0 1 0 11 0a5 5 0 1 0 -11 0M1086 440a7 7 0 1 0 14 0a7 7 0 1 0 -14 0M993 455a6 6 0 1 0 12 0a6 6 0 1 0 -12 0M1006 448a7 7 0 1 0 14 0a7 7 0 1 0 -14 0M1024 451a5 5 0 1 0 10 0a5 5 0 1 0 -10 0M1031 451a6 6 0 1 0 11 0a6 6 0 1 0 -11 0M1041 456a6 6 0 1 0 12 0a6 6 0 1 0 -12 0M1052 448a5 5 0 1 0 10 0a5 5 0 1 0 -10 0M1066 452a7 7 0 1 0 15 0a7 7 0 1 0 -15 0M1003 458a7 7 0 1 0 14 0a7 7 0 1 0 -14 0M1017 459a5 5 0 1 0 10 0a5 5 0 1 0 -10 0M1023 466a5 5 0 1 0 11 0a5 5 0 1 0 -11 0M1035 463a8 8 0 1 0 15 0a8 8 0 1 0 -15 0M1052 461a5 5 0 1 0 10 0a5 5 0 1 0 -10 0M1065 461a6 6 0 1 0 13 0a6 6 0 1 0 -13 0M1075 460a5 5 0 1 0 10 0a5 5 0 1 0 -10 0M1096 460a5 5 0 1 0 10 0a5 5 0 1 0 -10 0M991 476a5 5 0 1 0 10 0a5 5 0 1 0 -10 0M1003 476a6 6 0 1 0 12 0a6 6 0 1 0 -12 0M1013 472a7 7 0 1 0 14 0a7 7 0 1 0 -14 0M1027 472a7 7 0 1 0 15 0a7 7 0 1 0 -15 0M1041 469a6 6 0 1 0 12 0a6 6 0 1 0 -12 0M1054 469a5 5 0 1 0 10 0a5 5 0 1 0 -10 0M1067 471a5 5 0 1 0 10 0a5 5 0 1 0 -10 0M1078 469a8 8 0 1 0 15 0a8 8 0 1 0 -15 0M1087 471a7 7 0 1 0 15 0a7 7 0 1 0 -15 0M1102 470a6 6 0 1 0 11 0a6 6 0 1 0 -11 0M990 479a5 5 0 1 0 10 0a5 5 0 1 0 -10 0M1003 479a7 7 0 1 0 13 0a7 7 0 1 0 -13 0M1009 484a8 8 0 1 0 15 0a8 8 0 1 0 -15 0M1029 487a6 6 0 1 0 13 0a6 6 0 1 0 -13 0M1036 480a8 8 0 1 0 16 0a8 8 0 1 0 -16 0M1050 486a6 6 0 1 0 12 0a6 6 0 1 0 -12 0M1060 487a7 7 0 1 0 14 0a7 7 0 1 0 -14 0M1069 485a8 8 0 1 0 16 0a8 8 0 1 0 -16 0M988 493a5 5 0 1 0 10 0a5 5 0 1 0 -10 0M998 497a8 8 0 1 0 16 0a8 8 0 1 0 -16 0M1021 489a6 6 0 1 0 12 0a6 6 0 1 0 -12 0M1035 491a7 7 0 1 0 13 0a7 7 0 1 0 -13 0M1040 493a7 7 0 1 0 14 0a7 7 0 1 0 -14 0M1056 497a5 5 0 1 0 10 0a5 5 0 1 0 -10 0M1090 492a8 8 0 1 0 15 0a8 8 0 1 0 -15 0M999 505a7 7 0 1 0 15 0a7 7 0 1 0 -15 0M1014 504a8 8 0 1 0 15 0a8 8 0 1 0 -15 0M1024 507a7 7 0 1 0 13 0a7 7 0 1 0 -13 0M1039 507a6 6 0 1 0 13 0a6 6 0 1 0 -13 0M1049 503a5 5 0 1 0 11 0a5 5 0 1 0 -11 0M1069 507a8 8 0 1 0 16 0a8 8 0 1 0 -16 0M1085 502a6 6 0 1 0 11 0a6 6 0 1 0 -11 0M997 516a7 7 0 1 0 15 0a7 7 0 1 0 -15 0M1001 515a7 7 0 1 0 15 0a7 7 0 1 0 -15 0M1033 510a5 5 0 1 0 10 0a5 5 0 1 0 -10 0M1045 513a6 6 0 1 0 13 0a6 6 0 1 0 -13 0M1040 522a7 7 0 1 0 13 0a7 7 0 1 0 -13 0" fill="#454322"/>
<path d="M1005 515h0M1089 506h0M1002 506h0M992 519h0M1020 512h0M1087 515h0M1077 492h0M1051 522h0M1049 511h0M1011 515h0M1045 510h0M1041 530h0M1053 512h0M1039 525h0M1025 511h0M1068 515h0M1028 516h0M1020 493h0M1007 513h0M994 498h0M1036 525h0M1034 524h0M1039 520h0M1038 513h0M1033 496h0M1083 506h0M1052 527h0M1040 515h0M1051 531h0M1013 515h0M1069 495h0M1051 528h0M996 488h0M1035 513h0M1054 495h0M997 513h0M1054 499h0M1043 516h0M1000 523h0M1051 511h0M1007 521h0M1009 527h0M995 516h0M1059 517h0M1025 506h0M993 501h0M993 505h0" stroke="#302a19" stroke-width="1.9" stroke-linecap="round"/>
<path d="M1020 516h0M1060 492h0M1024 499h0M1066 499h0M1084 511h0M1029 506h0M1004 505h0M1062 493h0M1085 496h0M1075 497h0M1010 502h0M1038 487h0M1077 489h0M1039 503h0M1046 531h0M1049 526h0M1003 524h0M992 489h0M1028 512h0M1042 505h0M1109 492h0M1102 475h0M993 510h0M1064 491h0M1052 502h0M1019 521h0M1045 503h0M1066 503h0M1005 507h0M1054 501h0M1005 504h0M1006 523h0M1015 477h0M1018 499h0M1006 518h0M1037 504h0M1049 509h0M1064 502h0M1082 496h0M1042 517h0M998 511h0M1064 490h0M1092 509h0M1059 497h0M1090 509h0M1043 499h0M1094 509h0M982 492h0M1097 499h0M1026 519h0M1057 499h0M1008 518h0M1039 514h0M1031 523h0M1023 493h0M1015 518h0M1015 495h0M1075 520h0M1003 497h0M1099 509h0M1070 468h0M1075 471h0M1043 522h0M989 486h0M1034 505h0M1093 494h0M1093 483h0M1068 491h0M1094 506h0M1016 508h0M1054 525h0M1070 503h0M1079 504h0M984 499h0M1087 503h0M986 508h0M1008 485h0M1049 492h0M1009 507h0M991 486h0M1108 486h0M1053 514h0M1031 489h0M1023 498h0M1020 515h0M1002 519h0M1010 468h0M1073 489h0M1013 501h0M1057 510h0M1086 502h0M1037 494h0M1027 497h0M1006 529h0M1051 499h0M1051 527h0M1092 503h0M1041 515h0M1026 490h0M988 500h0M1033 484h0" stroke="#3a361d" stroke-width="2.6" stroke-linecap="round"/>
<path d="M1016 524h0M1107 472h0M1095 485h0M1053 471h0M1000 515h0M1024 505h0M1016 486h0M1015 475h0M1050 498h0M1062 526h0M1057 502h0M1005 509h0M1032 471h0M1012 507h0M1001 475h0M1049 482h0M1031 473h0M1051 508h0M1089 507h0M1003 481h0M1016 465h0M997 494h0M995 521h0M1082 475h0M1007 494h0M980 508h0M1060 451h0M1074 477h0M1032 523h0M1098 502h0M1047 515h0M1035 470h0M993 485h0M1074 519h0M1066 470h0M996 463h0M1078 465h0M1052 512h0M1024 511h0M1029 507h0M1030 488h0M1038 499h0M1019 511h0M1101 461h0M1111 489h0M1030 468h0M1056 489h0M1052 473h0M1040 515h0M1053 493h0M990 498h0M995 487h0M1044 517h0M1069 495h0M1048 499h0M1000 491h0M1044 479h0M1074 482h0M1091 482h0M1019 484h0M1066 485h0M1059 522h0M1078 474h0M1005 498h0M995 497h0M1088 490h0M1058 478h0M1045 505h0M1007 451h0M1059 488h0M1039 484h0M1035 500h0M1083 503h0M1106 466h0M1099 468h0M1092 515h0M1056 506h0M1103 491h0M1032 472h0M1052 487h0M1013 472h0M1105 502h0M1082 506h0M1094 491h0M1017 465h0M1067 517h0M1073 472h0M1049 503h0M990 510h0M1014 515h0M1003 504h0M986 498h0M1061 501h0M1063 533h0M1037 506h0M1044 521h0M1063 466h0M999 514h0M1013 472h0M998 500h0M1040 502h0M991 502h0M1044 480h0M994 472h0M1041 509h0M1010 530h0M1049 482h0M1034 505h0M997 486h0M1024 493h0M1093 468h0M997 494h0M1020 517h0M1028 493h0M1071 516h0M1036 502h0M1100 463h0M1000 508h0M1071 480h0M1070 477h0M1081 519h0M1001 474h0M1076 463h0M1057 480h0M1062 500h0M1032 523h0M1044 506h0M1107 471h0M1010 517h0M1014 512h0M1063 505h0M1050 498h0M1090 480h0M1006 505h0M1051 511h0M976 480h0M1060 490h0M1033 505h0M1103 485h0M1026 485h0M1079 500h0M1048 492h0M1077 476h0M1074 502h0M1008 475h0M1027 487h0M1048 497h0M1056 535h0M1082 463h0M994 476h0M1060 468h0M1096 505h0" stroke="#444221" stroke-width="2.1" stroke-linecap="round"/>
<path d="M1107 462h0M1029 474h0M1060 464h0M1005 473h0M1021 466h0M1020 478h0M992 497h0M1000 477h0M1055 504h0M1071 437h0M1103 460h0M989 455h0M1055 527h0M1051 516h0M1026 460h0M1104 465h0M1050 514h0M1009 477h0M1050 459h0M1016 508h0M992 498h0M994 460h0M1087 480h0M1012 490h0M1068 463h0M1036 503h0M1041 521h0M1082 512h0M1037 512h0M1049 499h0M1090 475h0M1049 461h0M1039 512h0M1048 449h0M1042 490h0M1030 481h0M1027 451h0M1000 488h0M1028 440h0M1015 524h0M1015 523h0M1087 491h0M1003 522h0M1057 488h0M1003 454h0M1084 457h0M994 489h0M1021 505h0M1057 451h0M1036 453h0M1091 509h0M1108 499h0M1011 482h0M1034 470h0M1101 466h0M1057 490h0M1013 453h0M1072 504h0M1060 468h0M1088 466h0M1037 502h0M1078 475h0M1068 464h0M1042 470h0M997 452h0M1056 443h0M1021 487h0M1108 479h0M1106 476h0M1026 482h0M998 513h0M1022 455h0M1049 496h0M1043 475h0M1048 483h0M1058 455h0M1003 497h0M992 490h0M1013 517h0M1038 503h0M1016 499h0M1020 512h0M1000 494h0M1055 512h0M1039 504h0M996 491h0M1092 475h0M1092 497h0M1076 464h0M1094 496h0M1059 469h0M1010 468h0M1060 471h0M1010 505h0M997 501h0M1000 516h0M1039 501h0M1036 480h0M1059 505h0M1042 441h0M1074 453h0M1001 486h0M1036 524h0M1041 509h0M1044 455h0M1079 446h0M1004 452h0M1067 466h0M1008 507h0M1037 463h0M1025 472h0M1036 444h0M1071 455h0M1008 523h0M1061 494h0M998 459h0M994 460h0M1035 512h0M1110 465h0M1054 495h0M999 476h0M1098 508h0M1024 472h0M1036 499h0M1028 496h0M1098 496h0M1104 452h0M1052 498h0M1050 510h0M1051 477h0M1032 503h0M1009 486h0M1101 481h0M1058 491h0M1045 460h0M1014 471h0M1051 525h0M1085 503h0M1064 438h0M1077 480h0M1047 486h0M1018 508h0M1076 464h0M1038 486h0M1075 475h0M1074 471h0M1002 509h0M1034 440h0M1066 490h0M1006 497h0M1053 498h0M1044 466h0M1016 453h0M1015 477h0M1006 501h0M1087 462h0M1036 523h0M1032 484h0M1034 507h0M1063 451h0M1049 515h0M1054 488h0M1062 461h0M1114 464h0M1053 495h0M1030 484h0M1030 459h0M992 485h0M1057 504h0M1018 479h0M1080 497h0M1051 452h0M1032 489h0M1075 446h0M1080 454h0M1025 451h0M1017 507h0M1075 453h0M1020 525h0M1021 464h0M1030 507h0M1058 492h0M1000 472h0M1016 483h0M1010 469h0M996 457h0M1109 463h0M1089 469h0M1048 499h0M1049 446h0M1057 494h0M1028 450h0M1042 481h0M1057 507h0M1074 457h0M1041 483h0M1093 469h0M1051 508h0M1004 479h0M999 511h0M1083 460h0M1018 484h0M1034 469h0M1028 499h0M1029 515h0M1003 510h0M1002 509h0M995 491h0M1012 513h0M1000 507h0M1059 489h0M1051 505h0M1004 475h0M1023 476h0M1058 469h0M1097 463h0M996 500h0M1041 509h0M1096 465h0M1037 527h0M1015 500h0M1038 518h0M1061 503h0M1053 494h0M1008 439h0M1046 514h0M1033 494h0M1060 516h0M1007 498h0M1063 470h0M1049 453h0M1035 483h0M1031 437h0M1027 464h0M1056 527h0" stroke="#4e4e26" stroke-width="1.9" stroke-linecap="round"/>
<path d="M1051 460h0M1000 443h0M1024 469h0M1052 468h0M1058 477h0M984 471h0M1003 489h0M1084 433h0M1072 465h0M1105 468h0M1020 460h0M997 506h0M989 482h0M1065 466h0M1110 474h0M1035 501h0M1079 465h0M1059 477h0M1086 511h0M1097 483h0M1087 462h0M998 493h0M996 462h0M1076 427h0M1013 448h0M1053 509h0M1067 500h0M1029 482h0M1038 492h0M1052 513h0M1048 436h0M1008 448h0M1039 502h0M1046 474h0M1095 461h0M1074 509h0M1063 446h0M1079 472h0M1038 432h0M1105 452h0M1051 498h0M1060 461h0M1037 467h0M999 476h0M1038 442h0M991 454h0M1100 435h0M1045 432h0M1054 427h0M1051 503h0M1063 466h0M1106 465h0M1044 505h0M1051 494h0M1006 452h0M1082 468h0M1089 510h0M1037 475h0M1063 483h0M1028 442h0M1015 479h0M1008 475h0M1031 481h0M1064 505h0M1032 496h0M1093 461h0M1033 490h0M1029 474h0M995 450h0M1017 449h0M1008 459h0M994 490h0M1010 490h0M1032 474h0M1009 476h0M1049 505h0M1006 442h0M1060 425h0M1090 504h0M1009 485h0M1081 479h0M994 514h0M1066 491h0M1077 495h0M1040 497h0M993 515h0M1041 490h0M999 500h0M1036 441h0M1013 459h0M1000 472h0M1068 457h0M1042 429h0M1061 464h0M1100 435h0M1028 445h0M992 439h0M1053 519h0M1060 511h0M1059 432h0M999 512h0M1014 504h0M1055 440h0M1006 483h0M1058 520h0M1019 471h0M1006 445h0M1050 428h0M1025 451h0M1082 446h0M1101 479h0M1001 446h0M1027 471h0M1080 498h0M1043 468h0M1099 499h0M1052 458h0M1055 455h0M991 491h0M1063 465h0M999 453h0M1097 448h0M995 514h0M1038 455h0M1074 430h0M1055 431h0M1020 429h0M1069 467h0M1023 467h0M1059 478h0M1082 508h0M1029 492h0M1004 513h0M1036 513h0M1049 501h0M1014 521h0M1076 452h0M1063 433h0M992 477h0M1012 477h0M1043 446h0M1044 495h0M1050 432h0M1081 434h0M1098 459h0M1007 478h0M1004 459h0M1087 448h0M1087 456h0M1084 438h0M1027 497h0M993 468h0M1010 447h0M1103 491h0M1062 494h0M1103 447h0M1046 451h0M1105 462h0M1066 440h0M1042 425h0M1014 490h0M1077 491h0M1049 511h0M1041 514h0M1017 462h0M985 501h0M1032 455h0M1017 449h0M1106 499h0M1027 459h0M1020 440h0M1037 507h0M1027 508h0M1020 463h0M1083 481h0M1047 440h0M1102 451h0M1009 489h0M1037 467h0M998 500h0M1066 471h0M996 478h0M1082 459h0M1007 431h0M1002 508h0M1088 502h0M1029 464h0M1038 448h0M1052 460h0M1066 479h0M1093 497h0M1002 429h0M1006 459h0M993 454h0M1068 513h0M1073 459h0M1074 432h0M1092 462h0M1026 450h0M1047 516h0M1055 442h0M1082 439h0M991 472h0M1051 502h0M1018 438h0M1069 476h0M998 435h0M1060 489h0M1040 424h0M1101 461h0M1027 457h0M1029 487h0M1099 482h0M1037 424h0M1105 488h0M1053 458h0M1058 509h0M1058 460h0M992 499h0M1089 493h0M1045 489h0M1049 487h0M1060 496h0M1107 499h0M1014 469h0M998 513h0M1089 483h0M1030 468h0M1055 456h0M1031 456h0M1028 486h0M1056 444h0M1009 504h0M1060 492h0M1049 483h0M1107 479h0M1070 449h0M1041 476h0M1025 432h0M989 495h0M1040 459h0M1059 446h0M1038 438h0M989 459h0M1043 521h0M1018 495h0M1026 457h0M988 493h0M1074 439h0M1059 509h0M1117 470h0M1014 466h0M1057 460h0M1007 485h0M1041 445h0M1083 459h0M1064 483h0M1040 461h0M1045 489h0M1005 439h0M1068 424h0M998 487h0M1012 453h0M990 490h0M999 498h0M1037 456h0M1084 429h0" stroke="#585a2a" stroke-width="2.3" stroke-linecap="round"/>
<path d="M1066 484h0M1045 447h0M1045 412h0M1096 472h0M1083 472h0M1052 466h0M977 500h0M1042 433h0M1054 452h0M1065 472h0M1048 443h0M1024 447h0M996 438h0M1082 481h0M1007 476h0M1090 494h0M1055 504h0M1098 436h0M1088 492h0M1079 430h0M1015 478h0M1052 437h0M1077 487h0M1039 421h0M1097 497h0M1055 474h0M1050 434h0M1060 475h0M1065 485h0M1117 471h0M1106 466h0M1056 490h0M1001 440h0M1082 419h0M988 452h0M1037 465h0M1081 435h0M1017 444h0M1092 440h0M995 496h0M991 442h0M1022 454h0M1092 459h0M1082 456h0M1069 467h0M1017 486h0M1063 460h0M1014 476h0M1098 492h0M1013 425h0M1001 476h0M1035 450h0M995 489h0M1085 432h0M1052 467h0M1075 431h0M1106 468h0M1099 470h0M1067 450h0M1058 445h0M1053 464h0M1045 421h0M1066 425h0M1072 441h0M1070 429h0M1103 438h0M1067 434h0M1101 463h0M1059 486h0M1078 462h0M1119 467h0M997 480h0M1031 478h0M1031 471h0M1104 461h0M1051 408h0M1035 429h0M1035 480h0M1000 456h0M994 490h0M1068 438h0M1018 439h0M1004 445h0M1011 471h0M1048 423h0M1068 446h0M1066 487h0M1106 472h0M997 495h0M1005 489h0M1022 506h0M1043 474h0M985 488h0M1062 435h0M1004 460h0M1092 478h0M1051 478h0M1052 448h0M1012 496h0M1102 468h0M1106 461h0M1062 482h0M1070 482h0M996 492h0M1072 429h0M1069 449h0M1010 444h0M1014 478h0M1114 478h0M1017 464h0M998 473h0M1091 445h0M1080 429h0M1105 473h0M1005 450h0M1044 475h0M996 494h0M1028 488h0M993 483h0M1085 435h0M990 459h0M1003 443h0M1099 439h0M1057 481h0M1094 440h0M1107 467h0M1042 463h0M1072 427h0M1034 471h0M994 486h0M1030 485h0M1067 450h0M1027 477h0M1006 454h0M1036 470h0M1080 480h0M1022 434h0M1103 477h0M1007 479h0M1087 467h0M1073 465h0M1081 473h0M1006 487h0M1025 428h0M1106 457h0M1058 443h0M1030 416h0M1014 457h0M998 471h0M1033 498h0M1008 435h0M1048 467h0M1048 436h0M1073 444h0M1041 463h0M1066 468h0M1115 472h0M1067 431h0M1088 502h0M1016 457h0M1074 422h0M1077 440h0M1028 493h0M1064 455h0M1009 506h0M1002 486h0M1002 470h0M1041 472h0M1051 471h0M1098 480h0M1015 431h0M1030 444h0M1105 460h0M1019 487h0M1082 464h0M1046 459h0M1034 491h0M1067 493h0M988 476h0M1090 478h0M1099 458h0M1015 453h0M1079 469h0M1000 439h0M1017 487h0M1000 443h0M978 482h0M1050 460h0M1109 468h0M998 475h0M1030 463h0M1017 465h0M1074 424h0M1006 438h0M1048 434h0M1042 445h0M1039 439h0M1086 433h0M1003 477h0M1067 496h0M1072 479h0M1078 451h0M1039 475h0M1053 487h0M1000 507h0M999 425h0M1062 494h0M1085 433h0M1066 500h0M1020 456h0M1076 434h0M1038 482h0M1053 471h0M989 457h0M1081 510h0M1106 462h0M1034 465h0M1051 432h0M1100 458h0M1078 481h0M1004 458h0M1054 466h0M1040 459h0M1093 431h0M1017 443h0M1034 486h0M1076 446h0M1037 416h0M1001 499h0M994 449h0M1062 451h0M1033 496h0M1038 448h0M1100 432h0M1081 446h0M1020 461h0M1072 477h0M1083 443h0M1050 478h0M1067 461h0M1002 472h0M1083 418h0M1072 418h0M1074 477h0M1010 483h0M1019 465h0M1016 461h0M1083 458h0M1063 459h0M995 482h0M1064 438h0M1066 494h0M1069 440h0M1068 452h0M998 510h0M1031 458h0M1048 486h0M1080 458h0" stroke="#62662f" stroke-width="2.1" stroke-linecap="round"/>
<path d="M1075 470h0M1094 448h0M995 427h0M1064 451h0M1055 425h0M1004 474h0M1087 426h0M1051 466h0M990 477h0M1074 454h0M1088 459h0M1080 471h0M1045 443h0M1092 446h0M1089 431h0M1057 444h0M1032 455h0M1068 414h0M1022 479h0M1092 468h0M1079 429h0M1019 476h0M988 475h0M1092 484h0M1035 464h0M1074 462h0M1024 421h0M1056 453h0M990 453h0M1097 459h0M1007 434h0M1057 417h0M1116 467h0M1075 467h0M997 434h0M1098 474h0M1001 481h0M1043 459h0M1098 449h0M1036 490h0M1057 410h0M1040 454h0M1013 499h0M1034 464h0M1030 445h0M1050 440h0M1023 423h0M1061 489h0M1000 470h0M1098 474h0M1054 467h0M1051 464h0M1038 477h0M1076 469h0M1039 446h0M1027 462h0M1110 459h0M1021 454h0M1040 405h0M1037 423h0M1081 434h0M1081 477h0M1106 485h0M1075 427h0M1009 429h0M1024 452h0M1023 438h0M1069 456h0M1009 432h0M1065 475h0M1037 483h0M1079 427h0M1058 426h0M1027 408h0M1025 482h0M1082 460h0M1045 432h0M1031 406h0M1038 415h0M1020 456h0M1042 429h0M1035 423h0M1010 434h0M1054 468h0M1048 426h0M1005 441h0M1031 419h0M1072 445h0M1092 470h0M1035 488h0M1080 456h0M1086 440h0M1027 439h0M1018 467h0M1013 466h0M1025 439h0M1070 451h0M1091 437h0M1075 458h0M1042 409h0M1108 459h0M1047 440h0M1076 453h0M1080 455h0M1105 470h0M1063 439h0M1053 470h0M1029 498h0M1052 461h0M1084 456h0M1030 432h0M1038 433h0M1082 472h0M1054 437h0M1000 491h0M1084 412h0M1006 417h0M1020 432h0M1011 453h0M993 463h0M1026 463h0M1053 419h0M1063 443h0M1078 453h0M1084 417h0M1015 464h0M1036 464h0M1035 443h0M1088 458h0M1007 447h0M1024 431h0M1030 453h0M1091 465h0M1043 431h0M1044 440h0M1090 420h0M1025 451h0M1049 431h0M1108 475h0M1019 460h0M1016 466h0M1094 455h0M1058 409h0M1032 461h0M1062 482h0M1062 442h0M1024 466h0M1035 449h0M1084 437h0M1056 444h0M1066 449h0M1043 434h0M1039 411h0M1032 430h0M1039 431h0M1042 430h0M1064 456h0M1004 443h0M1071 448h0M1038 428h0M1045 471h0M1104 466h0M1014 462h0M1005 439h0M1076 445h0M1078 456h0M1083 427h0M1005 448h0M1005 437h0M1071 439h0M1069 441h0M1014 465h0M1042 452h0M1003 483h0M1024 430h0M1078 432h0M1039 419h0M1087 493h0M1080 475h0M1016 464h0M1055 472h0M1052 424h0M1046 430h0M1005 433h0M1014 476h0M1074 458h0M1020 427h0M1037 437h0M1009 478h0M1062 416h0M1020 471h0M1091 447h0M1028 480h0M1103 474h0M1051 424h0M1064 421h0M1027 463h0M1075 418h0M1098 464h0M1085 473h0M1101 473h0M1063 467h0M1030 439h0M1010 497h0M1010 473h0M1034 477h0M1028 456h0M1013 454h0M1069 441h0M1027 453h0M1045 430h0M999 451h0M1039 403h0M1055 451h0M1021 467h0M1077 437h0M1049 416h0M1038 409h0M1098 438h0M1042 439h0M995 456h0M1059 454h0M1053 453h0M1098 467h0M1058 444h0M1014 448h0M1054 437h0M1019 468h0M1009 476h0M1009 431h0M1064 423h0M1003 443h0M1087 429h0M1060 411h0M1035 453h0M1018 418h0M1087 426h0" stroke="#6c7233" stroke-width="2.2" stroke-linecap="round"/>
<path d="M1026 421h0M1069 436h0M1070 413h0M1005 435h0M1042 420h0M1053 424h0M1010 441h0M1052 440h0M1076 418h0M1051 433h0M1071 413h0M1092 423h0M1076 417h0M1007 431h0M1086 430h0M1038 420h0M1037 440h0M1026 430h0M1090 441h0M1071 460h0M1007 452h0M1005 451h0M1089 424h0M1015 425h0M1005 426h0M1055 467h0M1033 427h0M1106 461h0M1088 426h0M1053 431h0M1037 421h0M1070 425h0M1034 454h0M1016 429h0M1083 448h0M1070 420h0M1068 435h0M1082 421h0M1085 438h0M1048 422h0M1059 423h0M1032 447h0M1030 421h0M1101 414h0M1047 429h0M1065 443h0M1063 428h0M1065 421h0M1042 417h0M990 448h0M1040 419h0M1003 456h0M1086 440h0M1095 454h0M1046 439h0M1077 467h0M1094 435h0M1011 450h0M1036 448h0M1036 431h0M1018 439h0M1053 430h0M1073 456h0M1055 449h0M1043 434h0M1038 435h0M1052 465h0M1028 424h0M1050 432h0M1007 439h0M1027 419h0M1034 432h0M996 440h0M1058 443h0M1022 418h0M1019 451h0M1015 447h0M1044 410h0M1041 422h0M1013 430h0M1094 468h0M1063 407h0M1109 461h0M1044 424h0M1029 448h0M1090 448h0M1062 425h0M1010 440h0M1041 417h0M1006 431h0M1064 463h0M1041 425h0M1068 447h0M1065 418h0M1045 425h0M1073 432h0M986 451h0M1044 429h0M1045 461h0M1022 428h0M1003 424h0M1050 414h0M1011 439h0M1043 464h0M1052 441h0M1025 476h0M1066 446h0M1007 425h0M1079 445h0M996 446h0M1049 416h0M993 467h0M1082 422h0M1022 445h0M1045 420h0M1073 420h0M1014 437h0M1079 420h0M1088 423h0M1072 428h0M1082 428h0M1037 460h0M1046 431h0M1045 436h0M1038 410h0M1003 435h0M1084 431h0M1024 446h0M1051 469h0M1054 441h0M1076 429h0M1023 461h0M1033 421h0M1039 413h0M998 436h0M1048 434h0M1017 437h0M1063 430h0M1084 456h0M1024 449h0M1036 427h0M1008 417h0M1034 426h0M1066 436h0M1062 460h0M1047 427h0M1039 427h0M1079 430h0M1007 422h0M1038 465h0M1068 441h0M1041 466h0M1017 437h0M1052 442h0M1025 428h0M1062 441h0M1072 460h0M1030 443h0M1088 460h0M1005 422h0M1040 420h0M1073 452h0M1039 467h0M1054 440h0M1082 432h0M1099 451h0M1047 445h0M1025 449h0M1070 450h0M1033 453h0M1013 426h0M1007 439h0M994 457h0M1079 454h0M1049 442h0M1040 416h0M1017 443h0M1065 416h0M1062 416h0M1087 421h0M998 442h0M1076 435h0M1015 436h0M1014 418h0M1019 412h0M1034 419h0M1064 422h0M1101 432h0M1055 437h0M1062 430h0M1008 450h0M1024 454h0M1067 439h0M1042 467h0M1072 425h0M1039 424h0M1077 421h0M1051 437h0M1033 412h0M1043 411h0M1014 440h0M1043 412h0M1013 426h0M1074 436h0M1011 437h0M1079 417h0M1003 425h0M1073 456h0M1042 409h0M1072 424h0M1100 469h0M1012 421h0M1038 454h0M1033 445h0M1061 442h0M1087 423h0M1092 466h0M1074 426h0M1006 442h0M1008 469h0M995 434h0M1047 465h0M1030 429h0M1029 448h0M1045 429h0M1007 429h0M1068 466h0M1063 415h0M1000 433h0M1069 453h0M1057 429h0M1038 423h0M1096 449h0M1013 419h0M1027 476h0M1082 442h0M1022 422h0M1049 447h0M1059 425h0M1069 442h0M1009 438h0M1077 420h0M1028 464h0M1018 434h0M1046 423h0M1011 438h0M1083 415h0M1045 440h0M1052 453h0M1058 441h0M1057 413h0M1082 414h0M1086 463h0M1037 430h0M1005 427h0M1006 447h0M1017 439h0M1005 443h0M1052 452h0M999 443h0M1082 438h0M1070 438h0M1020 439h0M1088 429h0M1030 427h0M1011 469h0M1062 461h0M1076 426h0M1006 445h0M1078 420h0M1035 460h0M1105 437h0M1026 442h0M1044 438h0M1034 417h0M1096 439h0M1097 426h0M989 452h0M1044 412h0M1038 441h0M1001 430h0M1088 422h0M1078 416h0M1024 457h0M1086 444h0M1032 426h0M1081 423h0M1078 430h0M1006 434h0M1079 426h0M1043 424h0M1024 426h0M1036 422h0M1059 476h0M1060 410h0M1031 459h0M1029 406h0M1063 442h0M1037 429h0M1045 420h0M1048 438h0M1024 448h0M1075 414h0" stroke="#767e38" stroke-width="2.0" stroke-linecap="round"/>
<path d="M1079 467h0M1001 481h0M1052 453h0M1019 436h0M1050 438h0M1019 520h0M1042 462h0M1099 460h0M1023 509h0M1091 442h0M1035 438h0M1048 420h0M1036 489h0M1040 497h0M1068 461h0M1040 416h0M1085 418h0M1010 434h0M1059 431h0M1050 432h0M1091 465h0M1062 427h0M1058 485h0M1097 467h0M1098 440h0M1081 458h0M1041 444h0M1033 463h0M1071 440h0M1083 499h0M1047 478h0M1036 454h0M1036 468h0M1047 462h0M1023 491h0M1009 432h0M1082 428h0M1043 468h0M1067 462h0M1062 488h0M1024 463h0M1098 498h0M1102 476h0M1013 519h0M1038 428h0M1051 444h0M1090 428h0M1049 469h0M996 498h0M1029 461h0M1068 453h0M1084 428h0M1077 450h0M1067 461h0M1026 480h0M1037 483h0M1011 417h0M1074 422h0M1085 503h0M1041 425h0M1058 470h0M1061 481h0M1093 484h0M1001 482h0M1070 425h0M1041 419h0M1029 474h0M1088 480h0M1021 445h0M1073 448h0M1061 461h0M1037 489h0M1062 415h0M992 472h0M1115 469h0M1063 466h0M1032 430h0M1071 493h0M1047 510h0M1073 418h0M1019 451h0M1038 428h0M1000 482h0M1059 471h0M1044 430h0M1014 491h0M1085 509h0M1018 441h0M1045 431h0M997 517h0M1077 434h0M1017 461h0M1049 521h0M1051 517h0M1011 451h0M1048 481h0M1049 446h0M1020 483h0M1056 430h0M1015 500h0M1026 459h0M1066 497h0M1064 442h0M1085 480h0M1007 467h0M1072 427h0M1085 467h0M1034 495h0M1080 419h0M1058 446h0M1053 500h0M1012 440h0M1039 415h0M1081 464h0M1064 463h0M1006 457h0M1027 433h0M1017 458h0M1046 432h0M1025 493h0M1083 424h0M1050 455h0M1019 447h0M1009 458h0M1003 494h0M1010 469h0M1050 427h0M1002 440h0M1065 432h0M1009 480h0M1090 447h0M1081 420h0M1030 443h0M1037 509h0M1002 522h0M1104 464h0M1011 498h0M1019 519h0M1032 462h0M1037 478h0M1010 510h0M1052 469h0M1030 453h0M1003 507h0M1106 462h0M1092 482h0M1044 409h0M1105 475h0M1055 474h0M1063 493h0M1003 463h0M1028 448h0M1036 427h0M1016 458h0M1039 486h0M1000 479h0M1079 454h0M1043 420h0M1059 490h0M1006 457h0M1087 439h0M1004 476h0M1047 467h0M1063 453h0M1037 417h0M1071 440h0M1029 448h0M1051 451h0M1101 466h0M988 490h0M1000 503h0M1112 462h0M1045 447h0M1094 479h0M1047 430h0M1002 520h0M1104 457h0M1058 508h0M1036 458h0M1040 435h0M1013 507h0M1077 427h0M1057 493h0M1039 412h0M1046 436h0M1015 507h0M1004 475h0M1038 506h0M1058 502h0M1065 413h0M1050 433h0M1046 507h0M1084 457h0M1029 472h0M998 456h0M1098 499h0M1017 455h0M1106 493h0M1005 432h0M1040 436h0M1022 448h0M1055 463h0M992 461h0M1045 483h0M1005 519h0M1065 423h0M1069 506h0M1054 474h0M997 490h0M1034 460h0M1043 512h0M1034 511h0M1065 485h0M1025 490h0M1045 445h0M1009 453h0M1046 418h0M1021 482h0M1064 491h0M1039 483h0M1076 425h0M1008 484h0M1007 481h0M1062 458h0M1097 467h0M1015 438h0M1070 450h0M1074 473h0M1066 429h0M1000 431h0M1054 487h0M1001 492h0M1031 446h0M986 497h0M1000 464h0M1102 462h0M992 484h0M1048 527h0M1007 478h0M1044 528h0M1088 480h0M1077 477h0M994 510h0M1085 464h0M1037 481h0M1068 440h0M1050 441h0M1052 452h0M1087 499h0M1079 463h0M1003 431h0M1031 419h0M1080 439h0M1001 450h0M1061 504h0M1032 466h0" stroke="#b4503c" stroke-width="2.3" stroke-linecap="round"/>
<path d="M721,591 L721,540" stroke="#2a2a1c" stroke-width="8"/>
<path d="M721,560 L680,525 M722,552 L762,522 M721,548 L712,520 M700,540 L660,505" stroke="#2a2a1c" stroke-width="2" fill="none" stroke-linecap="round"/>
<path d="M721 435a12 12 0 1 0 25 0a12 12 0 1 0 -25 0M671 445a13 13 0 1 0 25 0a13 13 0 1 0 -25 0M679 451a11 11 0 1 0 22 0a11 11 0 1 0 -22 0M698 446a8 8 0 1 0 16 0a8 8 0 1 0 -16 0M742 449a12 12 0 1 0 24 0a12 12 0 1 0 -24 0M676 457a8 8 0 1 0 16 0a8 8 0 1 0 -16 0M698 461a11 11 0 1 0 23 0a11 11 0 1 0 -23 0M715 460a9 9 0 1 0 17 0a9 9 0 1 0 -17 0M737 454a12 12 0 1 0 25 0a12 12 0 1 0 -25 0" fill="#2e4928"/>
<path d="M686 463a11 11 0 1 0 21 0a11 11 0 1 0 -21 0M724 463a11 11 0 1 0 22 0a11 11 0 1 0 -22 0M665 475a10 10 0 1 0 20 0a10 10 0 1 0 -20 0M678 474a8 8 0 1 0 16 0a8 8 0 1 0 -16 0M693 473a13 13 0 1 0 25 0a13 13 0 1 0 -25 0M702 468a10 10 0 1 0 20 0a10 10 0 1 0 -20 0M715 466a13 13 0 1 0 26 0a13 13 0 1 0 -26 0M741 473a9 9 0 1 0 18 0a9 9 0 1 0 -18 0M757 471a8 8 0 1 0 16 0a8 8 0 1 0 -16 0M656 486a11 11 0 1 0 22 0a11 11 0 1 0 -22 0M667 486a12 12 0 1 0 23 0a12 12 0 1 0 -23 0M688 478a11 11 0 1 0 23 0a11 11 0 1 0 -23 0M703 484a10 10 0 1 0 20 0a10 10 0 1 0 -20 0M720 487a8 8 0 1 0 16 0a8 8 0 1 0 -16 0M725 478a8 8 0 1 0 17 0a8 8 0 1 0 -17 0M745 484a11 11 0 1 0 22 0a11 11 0 1 0 -22 0M756 483a9 9 0 1 0 17 0a9 9 0 1 0 -17 0" fill="#21321d"/>
<path d="M667 495a12 12 0 1 0 24 0a12 12 0 1 0 -24 0M684 497a12 12 0 1 0 24 0a12 12 0 1 0 -24 0M702 490a9 9 0 1 0 19 0a9 9 0 1 0 -19 0M721 493a11 11 0 1 0 22 0a11 11 0 1 0 -22 0M736 491a11 11 0 1 0 21 0a11 11 0 1 0 -21 0M747 500a12 12 0 1 0 24 0a12 12 0 1 0 -24 0M759 496a12 12 0 1 0 25 0a12 12 0 1 0 -25 0M776 494a14 14 0 1 0 27 0a14 14 0 1 0 -27 0M783 491a12 12 0 1 0 25 0a12 12 0 1 0 -25 0M659 509a11 11 0 1 0 23 0a11 11 0 1 0 -23 0M675 507a10 10 0 1 0 20 0a10 10 0 1 0 -20 0M688 503a9 9 0 1 0 18 0a9 9 0 1 0 -18 0M706 511a10 10 0 1 0 21 0a10 10 0 1 0 -21 0M714 506a11 11 0 1 0 23 0a11 11 0 1 0 -23 0M737 503a11 11 0 1 0 21 0a11 11 0 1 0 -21 0M748 511a11 11 0 1 0 23 0a11 11 0 1 0 -23 0M775 509a13 13 0 1 0 26 0a13 13 0 1 0 -26 0" fill="#182216"/>
<path d="M679 518a10 10 0 1 0 20 0a10 10 0 1 0 -20 0M696 520a9 9 0 1 0 19 0a9 9 0 1 0 -19 0M719 522a8 8 0 1 0 17 0a8 8 0 1 0 -17 0M732 522a10 10 0 1 0 19 0a10 10 0 1 0 -19 0M740 521a13 13 0 1 0 27 0a13 13 0 1 0 -27 0M766 521a11 11 0 1 0 22 0a11 11 0 1 0 -22 0M681 529a13 13 0 1 0 27 0a13 13 0 1 0 -27 0M773 530a12 12 0 1 0 25 0a12 12 0 1 0 -25 0" fill="#151c13"/>
<path d="M776 541h0M756 500h0M791 520h0M662 519h0M732 518h0M744 511h0M761 518h0M743 532h0M662 517h0M794 540h0M691 497h0M701 510h0M752 497h0M790 539h0M685 507h0M695 510h0M796 524h0M704 527h0M741 511h0M794 543h0M706 522h0M732 530h0M794 520h0M701 491h0M791 542h0M718 494h0M773 535h0M785 520h0M770 510h0M778 521h0M726 528h0M755 519h0M744 520h0M685 515h0M796 517h0M735 520h0M787 516h0M752 519h0M728 519h0M699 521h0M723 492h0M701 510h0M764 499h0M731 517h0M746 510h0M683 516h0M692 516h0M728 515h0M700 512h0M685 520h0M696 511h0M759 499h0M745 528h0M705 501h0M662 495h0M699 524h0M793 506h0M688 519h0M805 495h0M696 509h0M674 504h0M734 490h0M679 512h0M732 520h0M719 516h0M726 531h0M740 499h0M690 525h0M722 495h0M759 509h0M745 535h0M683 519h0M718 493h0M726 529h0M773 521h0M690 507h0M717 519h0M743 525h0M699 491h0M666 511h0M759 542h0M766 513h0M721 518h0M683 520h0M682 505h0M761 506h0M688 520h0M749 520h0M676 506h0M685 528h0M751 526h0M712 536h0M746 506h0M749 509h0M754 499h0M742 518h0M797 538h0M724 499h0M769 513h0M734 516h0M714 489h0M702 490h0M706 518h0M746 528h0M763 542h0M674 520h0M663 495h0M782 537h0M687 524h0M796 501h0M710 501h0M759 508h0M717 520h0M728 500h0M719 546h0M742 516h0M671 508h0M776 513h0M706 518h0M759 524h0M662 517h0M711 524h0M792 533h0M750 512h0M725 517h0M740 495h0M693 501h0M738 514h0M789 523h0M699 536h0M782 514h0M702 538h0M790 537h0M661 518h0M789 541h0M703 497h0M774 530h0M732 525h0M714 520h0M758 522h0M724 518h0M766 516h0M736 487h0M702 527h0M796 519h0M710 518h0M770 514h0M737 499h0M670 509h0M726 518h0M728 519h0M701 524h0M782 504h0M765 506h0M692 531h0M773 538h0M741 497h0M721 499h0M688 519h0M733 521h0M686 492h0M709 539h0M794 523h0M683 534h0M759 491h0M750 497h0M721 508h0M699 530h0M702 525h0M735 517h0M682 519h0M736 499h0M670 509h0M662 516h0M758 505h0M688 516h0M704 506h0M799 530h0M727 499h0M712 529h0M691 529h0M760 511h0M762 524h0M745 488h0M781 494h0M733 499h0M778 517h0M783 530h0M751 518h0M715 538h0M723 542h0M771 506h0M767 513h0M678 522h0M736 524h0M796 522h0M776 501h0M761 507h0M733 514h0M791 511h0M703 495h0M794 532h0M684 505h0M735 509h0M753 520h0M739 530h0M780 527h0M748 528h0M710 541h0M687 500h0M661 505h0M729 530h0M718 521h0M715 527h0M750 508h0M684 522h0M734 494h0M682 503h0M751 535h0M740 505h0M687 497h0M683 515h0M717 546h0M759 504h0M719 498h0M759 530h0M681 507h0M682 514h0M669 511h0M733 524h0M748 533h0M751 515h0M780 540h0M728 552h0M711 522h0M729 500h0M675 505h0M663 516h0M693 526h0M706 501h0M668 498h0M673 511h0M733 524h0M689 506h0M748 496h0M746 496h0M729 502h0M753 519h0M714 519h0M761 522h0M767 510h0M693 539h0M756 505h0M758 512h0M788 544h0M772 528h0M711 529h0M775 507h0M782 526h0M788 518h0M754 522h0M708 507h0M702 528h0M765 521h0M740 492h0M686 524h0M758 539h0M723 525h0M751 529h0M756 537h0M702 523h0M683 521h0M747 530h0M777 532h0M747 529h0M718 532h0M784 499h0M756 529h0M793 496h0M789 523h0M719 523h0M733 542h0M779 522h0M746 506h0M772 514h0M695 503h0M704 526h0M760 523h0M765 517h0M736 529h0M702 508h0M762 512h0M766 515h0M776 524h0M683 504h0M758 487h0M697 503h0M749 505h0M779 520h0M692 517h0M755 498h0M723 509h0M692 517h0M685 506h0M671 519h0M705 529h0M709 527h0M800 512h0M720 528h0M757 522h0M689 507h0M796 507h0M749 516h0M742 509h0M749 494h0M696 509h0M712 513h0M729 532h0M774 540h0M741 518h0M724 525h0M766 525h0M688 523h0M682 515h0M696 510h0M779 510h0M764 504h0M710 521h0M761 510h0M786 530h0M705 534h0M778 531h0M750 527h0M707 540h0M671 510h0M727 528h0M747 523h0M724 502h0M668 499h0M781 509h0M697 517h0M765 504h0M774 522h0M700 521h0M699 516h0M676 508h0M750 496h0M698 510h0M792 522h0M715 526h0M669 498h0M697 507h0M764 521h0M759 533h0M694 523h0M656 493h0M798 523h0M697 519h0M770 515h0M764 531h0M698 525h0M699 509h0M786 537h0M695 505h0M704 523h0M751 489h0M695 511h0M767 520h0M748 525h0M725 526h0M760 531h0M697 532h0M780 519h0M699 534h0M801 506h0M775 532h0M769 510h0M673 497h0M788 531h0M751 501h0M667 495h0M718 494h0M676 508h0M727 513h0M657 492h0M678 516h0M747 530h0M752 527h0M743 514h0M694 515h0M740 513h0M718 499h0M764 507h0M693 513h0M675 485h0M771 529h0M791 501h0M699 513h0M790 508h0M695 532h0M674 501h0M669 520h0M741 500h0M681 521h0M724 517h0M742 524h0M746 511h0M796 504h0M781 519h0M760 496h0M762 528h0M735 524h0M786 525h0M730 528h0M684 523h0M719 523h0M742 531h0M719 504h0M684 522h0M784 521h0M800 513h0M704 511h0M664 516h0M793 530h0M676 515h0M675 508h0M667 507h0M716 510h0M707 536h0M721 497h0M669 489h0M767 519h0M762 512h0M688 527h0M699 522h0M700 541h0M744 519h0M703 497h0M755 514h0M687 522h0M712 522h0M735 518h0M694 511h0M729 492h0M761 508h0M752 509h0M683 498h0M793 506h0M723 521h0M687 523h0M666 499h0M668 519h0M750 504h0M736 541h0M693 507h0M773 534h0M700 503h0M749 519h0M720 499h0M685 519h0M787 536h0M778 534h0M686 531h0M735 537h0M755 497h0M736 524h0M669 523h0M686 531h0M791 500h0M708 509h0M776 526h0M795 523h0M702 530h0M766 492h0M682 501h0M723 531h0M732 519h0M783 527h0M729 524h0M758 519h0M765 529h0M733 513h0M712 519h0M789 541h0M785 502h0M746 526h0M684 521h0M697 492h0M673 493h0M782 533h0M702 544h0M720 514h0M702 500h0M781 534h0M733 530h0M693 526h0M721 489h0M766 499h0M694 514h0M787 509h0M706 500h0M699 490h0M761 534h0M735 492h0M751 531h0M688 517h0M699 529h0M699 533h0M789 532h0M695 514h0M698 523h0M702 541h0M688 504h0M761 523h0M767 479h0M703 530h0M717 520h0M700 499h0M666 500h0M748 517h0M749 528h0M683 501h0M782 517h0M690 507h0M790 528h0M779 537h0M794 535h0M708 509h0M801 517h0M747 524h0M751 501h0M728 543h0M685 505h0M706 530h0M667 519h0M684 533h0M696 520h0M763 503h0M695 526h0M689 526h0M743 519h0M785 527h0M748 512h0M681 525h0M742 527h0M744 513h0M722 513h0M804 520h0M698 523h0M720 516h0M740 528h0M720 516h0M748 522h0M720 495h0M709 510h0M717 522h0M679 516h0M667 522h0M746 526h0M709 537h0M745 506h0M701 524h0M767 527h0M684 527h0M724 527h0M751 522h0M757 513h0M748 529h0" stroke="#141a12" stroke-width="2.3" stroke-linecap="round"/>
<path d="M757 513h0M743 478h0M745 502h0M786 472h0M725 473h0M699 513h0M738 483h0M759 482h0M673 485h0M695 488h0M688 516h0M681 504h0M755 511h0M692 503h0M790 487h0M764 486h0M684 466h0M747 496h0M714 482h0M707 493h0M785 521h0M680 518h0M694 471h0M706 490h0M697 464h0M799 526h0M713 464h0M734 487h0M715 493h0M693 490h0M690 477h0M792 502h0M719 473h0M703 489h0M719 517h0M743 486h0M792 485h0M726 492h0M684 517h0M798 485h0M760 490h0M718 491h0M774 481h0M674 482h0M742 483h0M763 493h0M760 508h0M684 506h0M764 476h0M735 493h0M729 467h0M770 507h0M785 510h0M678 476h0M768 487h0M710 505h0M677 507h0M785 495h0M742 497h0M685 476h0M718 490h0M692 474h0M760 509h0M691 499h0M678 499h0M685 473h0M789 482h0M661 476h0M765 519h0M766 472h0M709 464h0M753 485h0M669 493h0M677 481h0M778 494h0M794 496h0M762 502h0M726 504h0M762 500h0M754 487h0M740 495h0M765 481h0M716 491h0M727 479h0M695 516h0M681 461h0M755 489h0M733 487h0M768 477h0M716 475h0M752 496h0M765 470h0M713 493h0M764 489h0M681 492h0M696 510h0M690 495h0M700 472h0M703 491h0M771 514h0M784 509h0M736 474h0M665 490h0M760 490h0M771 475h0M685 489h0M789 505h0M790 494h0M717 479h0M759 473h0M714 502h0M668 501h0M684 470h0M715 479h0M757 497h0M723 517h0M674 503h0M749 526h0M731 490h0M730 500h0M739 464h0M696 474h0M716 486h0M728 513h0M745 495h0M744 507h0M736 480h0M704 489h0M771 476h0M678 494h0M690 490h0M740 483h0M688 477h0M664 494h0M725 470h0M740 491h0M764 473h0M677 509h0M673 478h0M687 491h0M748 519h0M738 517h0M762 482h0M704 493h0M707 467h0M769 491h0M705 486h0M732 494h0M683 506h0M738 474h0M708 500h0M759 490h0M781 501h0M753 481h0M691 478h0M751 464h0M748 521h0M674 485h0M687 486h0M679 511h0M759 491h0M734 497h0M756 487h0M675 483h0M692 479h0M735 481h0M688 470h0M717 507h0M741 484h0M687 507h0M724 488h0M763 484h0M738 501h0M673 493h0M753 494h0M769 493h0M764 476h0M750 482h0M765 518h0M724 476h0M675 502h0M783 481h0M705 485h0M700 472h0M713 513h0M747 510h0M808 494h0M767 516h0M672 514h0M698 470h0M782 499h0M691 523h0M709 478h0M769 521h0M769 507h0M720 510h0M709 489h0M709 515h0M759 517h0M758 478h0M723 484h0M675 496h0M670 483h0M788 520h0M675 514h0M735 490h0M787 505h0M678 489h0M709 484h0M706 464h0M744 484h0M800 513h0M728 502h0M730 468h0M722 514h0M805 490h0M697 472h0M697 502h0M731 521h0M709 487h0M753 495h0M692 496h0M721 505h0M726 465h0M672 498h0M690 471h0M722 487h0M686 519h0M673 475h0M664 479h0M661 477h0M683 477h0M735 467h0M726 494h0M744 471h0M770 517h0M799 488h0M663 495h0M691 499h0M678 514h0M759 488h0M714 516h0M773 490h0M693 481h0M692 477h0M757 493h0M730 485h0M807 493h0M687 499h0M767 479h0M733 473h0M701 471h0M784 517h0M788 516h0M701 517h0M706 491h0M701 491h0M711 477h0M729 494h0M757 482h0M687 481h0M792 503h0M734 477h0M671 472h0M691 499h0M772 507h0M689 520h0M673 506h0M709 474h0M767 479h0M722 487h0M721 492h0M746 511h0M764 490h0M704 498h0M721 494h0M676 498h0M684 493h0M755 508h0M712 502h0M684 519h0M692 494h0M785 491h0M744 510h0M736 509h0M758 516h0M682 503h0M767 511h0M689 498h0M710 493h0M674 485h0M759 472h0M758 462h0M782 490h0M754 497h0M710 518h0M665 505h0M775 499h0M699 513h0M782 502h0M728 500h0M763 497h0M696 485h0M727 468h0M697 484h0M777 506h0M719 475h0M795 497h0M668 472h0M723 470h0M795 489h0M759 499h0M793 509h0M667 474h0M739 515h0M799 490h0M764 488h0M748 479h0M672 500h0M767 475h0M725 469h0M715 465h0M715 490h0M718 510h0M732 520h0M729 473h0M797 525h0M670 504h0M730 501h0M806 496h0M727 494h0M762 493h0M704 492h0M675 507h0M709 513h0M757 485h0M685 516h0M766 492h0M775 502h0M695 475h0M720 509h0M750 496h0M703 521h0M768 475h0M742 485h0M733 513h0M690 510h0M695 491h0M787 495h0M771 493h0M726 491h0M681 512h0M716 522h0M658 505h0M753 517h0M768 501h0" stroke="#253a21" stroke-width="2.8" stroke-linecap="round"/>
<path d="M786 491h0M715 482h0M747 464h0M674 489h0M662 476h0M752 490h0M682 502h0M704 482h0M715 465h0M676 478h0M765 470h0M781 491h0M683 453h0M761 497h0M684 497h0M744 479h0M733 491h0M735 458h0M702 494h0M725 456h0M686 481h0M752 444h0M730 496h0M769 486h0M721 460h0M681 473h0M717 458h0M775 485h0M765 475h0M681 450h0M733 486h0M721 485h0M756 476h0M716 490h0M807 495h0M667 481h0M713 456h0M684 492h0M742 447h0M744 479h0M771 471h0M711 500h0M666 495h0M699 488h0M777 494h0M683 464h0M667 499h0M727 445h0M675 457h0M700 494h0M698 484h0M741 458h0M751 474h0M736 484h0M707 458h0M747 493h0M694 476h0M710 460h0M668 505h0M743 472h0M689 458h0M766 470h0M725 479h0M702 462h0M722 461h0M759 466h0M732 463h0M722 488h0M681 479h0M758 474h0M711 485h0M679 454h0M662 478h0M743 474h0M717 497h0M804 494h0M769 465h0M683 464h0M723 463h0M703 450h0M767 503h0M764 481h0M697 479h0M691 472h0M718 463h0M744 495h0M677 461h0M699 452h0M754 494h0M701 472h0M701 487h0M677 462h0M724 473h0M692 497h0M783 488h0M797 480h0M672 485h0M746 497h0M682 477h0M713 474h0M765 475h0M806 490h0M710 481h0M696 466h0M692 461h0M717 495h0M722 463h0M686 449h0M718 491h0M706 500h0M794 480h0M723 490h0M677 499h0M696 464h0M805 488h0M738 486h0M691 489h0M687 500h0M749 466h0M735 451h0M723 465h0M678 472h0M706 473h0M717 503h0M735 463h0M702 471h0M784 489h0M692 469h0M738 456h0M752 492h0M745 490h0M772 483h0M726 459h0M751 509h0M668 485h0M720 480h0M730 498h0M766 441h0M806 488h0M711 489h0M768 496h0M764 488h0M711 486h0M734 501h0M671 470h0M673 485h0M754 470h0M732 455h0M747 488h0M736 468h0M695 497h0M746 459h0M709 469h0M762 485h0M756 481h0M716 480h0M710 454h0M680 472h0M676 490h0M748 484h0M713 473h0M740 462h0M757 459h0M727 484h0M676 490h0M759 486h0M763 487h0M706 465h0M717 498h0M680 452h0M754 468h0M693 464h0M764 469h0M691 482h0M694 474h0M706 492h0M675 505h0M798 489h0M747 456h0M774 480h0M728 473h0M786 479h0M698 476h0M780 490h0M701 496h0M700 453h0M741 463h0M720 503h0M769 500h0M735 488h0M685 490h0M768 491h0M730 459h0M693 467h0M711 456h0M683 460h0M666 479h0M749 463h0M674 477h0M795 496h0M691 465h0M715 472h0M674 503h0M681 464h0M715 481h0M661 504h0M699 499h0M676 499h0M710 451h0M686 456h0M680 446h0M790 466h0M747 500h0M785 493h0M709 476h0M707 458h0M759 476h0M723 461h0M769 492h0M697 468h0M731 493h0M672 478h0M683 453h0M761 472h0M695 496h0M720 488h0M669 494h0M748 464h0M766 454h0M759 492h0M715 491h0M665 466h0M758 461h0M683 454h0M743 479h0M677 478h0M742 453h0M734 472h0M703 473h0M768 474h0M687 508h0M680 461h0M712 480h0M754 499h0M742 440h0M691 467h0M726 467h0M739 486h0M692 491h0M716 476h0M743 457h0M702 454h0M707 463h0M761 473h0M693 452h0M691 461h0M748 477h0M748 506h0M700 467h0M791 493h0M738 495h0M702 469h0M675 463h0M696 468h0M749 496h0M704 459h0M707 463h0M755 455h0M675 490h0M680 453h0M759 487h0M706 486h0M682 510h0M693 468h0M730 467h0M764 457h0M704 482h0M698 476h0M682 495h0M791 450h0M722 460h0M779 492h0M682 472h0M733 497h0M765 492h0M742 480h0M738 480h0M739 462h0M703 455h0M758 449h0M793 478h0M694 484h0M700 462h0M724 497h0M665 480h0M753 492h0M735 490h0M700 480h0M681 477h0M726 499h0M732 484h0M705 463h0M754 487h0M674 496h0M710 479h0M689 471h0M656 490h0M712 500h0M724 493h0M738 483h0M743 476h0M712 472h0M684 462h0M701 480h0M688 484h0M724 483h0M756 493h0M682 455h0M790 494h0M798 490h0M741 500h0M730 463h0M727 469h0M719 464h0M706 480h0M710 484h0M729 482h0M687 475h0M760 493h0" stroke="#375a30" stroke-width="2.5" stroke-linecap="round"/>
<path d="M721 456h0M788 481h0M766 475h0M686 452h0M761 465h0M750 448h0M735 480h0M702 468h0M727 468h0M698 449h0M705 463h0M766 451h0M683 456h0M751 449h0M738 461h0M756 474h0M703 472h0M730 456h0M737 468h0M658 478h0M672 479h0M731 461h0M684 460h0M735 468h0M702 479h0M712 445h0M713 462h0M704 438h0M755 446h0M704 477h0M746 444h0M766 465h0M680 449h0M674 439h0M677 445h0M763 462h0M771 477h0M780 466h0M743 473h0M728 468h0M711 469h0M759 454h0M703 454h0M704 437h0M724 479h0M685 452h0M743 461h0M735 440h0M755 448h0M705 470h0M704 462h0M716 478h0M766 471h0M714 467h0M687 457h0M683 435h0M763 459h0M741 465h0M801 469h0M693 443h0M698 463h0M687 452h0M691 470h0M718 462h0M727 476h0M689 448h0M746 456h0M708 473h0M735 481h0M664 475h0M726 481h0M754 476h0M724 459h0M709 472h0M768 468h0M760 468h0M712 453h0M698 468h0M729 437h0M719 462h0M662 475h0M682 448h0M744 438h0M739 465h0M719 470h0M674 465h0M708 456h0M717 464h0M684 460h0M682 456h0M709 463h0M739 450h0M741 445h0M769 474h0M689 459h0M689 438h0M697 445h0M707 465h0M680 457h0M721 457h0M764 459h0M719 457h0M788 481h0M672 446h0M702 468h0M704 470h0M678 448h0M747 470h0M750 476h0M695 459h0M691 480h0M760 459h0M766 487h0M710 476h0M732 476h0M693 464h0M709 470h0M736 461h0M738 470h0M754 465h0M672 446h0M663 475h0M763 469h0M718 458h0M784 484h0M721 461h0M748 457h0M700 450h0M704 482h0M769 472h0M716 455h0M726 464h0M761 447h0M704 453h0M763 475h0M686 474h0M742 444h0M740 474h0M766 474h0M755 443h0M729 447h0M752 471h0M681 471h0M718 455h0M756 467h0M715 459h0M695 443h0M774 474h0M771 474h0M711 454h0M690 467h0M687 474h0M723 457h0M693 456h0M692 482h0M752 477h0M717 466h0M769 475h0M698 461h0M759 461h0M731 453h0M761 450h0M704 455h0M685 443h0M689 443h0M754 455h0M732 465h0M682 442h0M687 468h0M766 448h0M729 454h0M689 458h0M702 464h0M699 441h0M749 442h0M756 435h0M697 446h0M694 460h0M767 478h0M695 450h0M754 473h0M715 471h0M754 443h0" stroke="#497a40" stroke-width="3.0" stroke-linecap="round"/>
<path d="M788 523h0M743 526h0M710 523h0M720 476h0M692 500h0M723 491h0M724 487h0M709 495h0M710 508h0M683 526h0M684 482h0M767 480h0M773 522h0M671 490h0M762 529h0M682 524h0M696 497h0M720 491h0M678 522h0M778 504h0M730 481h0M694 487h0M730 497h0M788 501h0M707 516h0M765 517h0M793 494h0M742 498h0M778 491h0M683 512h0M691 510h0M675 514h0M683 483h0M720 497h0M796 490h0M714 514h0M721 515h0M681 507h0M686 490h0M807 508h0M674 502h0M794 491h0M692 522h0M739 496h0M668 488h0M766 504h0M692 511h0M724 515h0M691 495h0M705 501h0M772 501h0M748 489h0M667 515h0M791 486h0M685 506h0M679 525h0M706 498h0M702 488h0M802 485h0M671 506h0M706 497h0M660 485h0M679 492h0M761 513h0M732 499h0M716 494h0M666 512h0M735 496h0M795 496h0M728 505h0M713 480h0M777 519h0M790 523h0M739 526h0M722 502h0M807 495h0M804 501h0M774 503h0M739 499h0M788 519h0M792 527h0M719 485h0M689 524h0M767 485h0M762 492h0M690 506h0M781 505h0M717 499h0M747 520h0M751 492h0M755 496h0M735 525h0M714 524h0M695 503h0M682 513h0M677 484h0M686 526h0M710 510h0M692 505h0M755 504h0M722 515h0M689 532h0M722 493h0M793 506h0M763 476h0M748 478h0M739 510h0M752 477h0M730 475h0M778 531h0M762 511h0M760 476h0M762 505h0M728 482h0M722 485h0M781 526h0M700 493h0M678 488h0M705 513h0M767 475h0M769 508h0M704 500h0M797 497h0M742 480h0M787 532h0M691 521h0M722 483h0M710 527h0M719 495h0M700 478h0M677 479h0M719 488h0M696 485h0M697 480h0M708 518h0M673 501h0M691 515h0M687 522h0M783 526h0M701 516h0M802 487h0M759 489h0M701 513h0M717 489h0M756 509h0M724 489h0M753 492h0M702 472h0M739 495h0M732 484h0M769 517h0M705 491h0M726 516h0M772 484h0M716 517h0M718 506h0M692 499h0M779 519h0M651 500h0M789 486h0M675 496h0M691 518h0M726 480h0M704 501h0M712 499h0M783 503h0M762 505h0M756 518h0M686 489h0M754 506h0M775 520h0M749 531h0M710 501h0M708 491h0M777 518h0M772 505h0M741 502h0M728 528h0M703 477h0M656 507h0M716 495h0M733 523h0M765 528h0M750 495h0M777 515h0M732 520h0M695 482h0M744 493h0M676 486h0M804 492h0M773 498h0M784 494h0M675 502h0M732 514h0M698 516h0M656 488h0M772 519h0M727 513h0M710 487h0M765 477h0M702 513h0M706 488h0M749 481h0M790 492h0M746 509h0M720 477h0M697 494h0M801 498h0M687 491h0M728 500h0M688 506h0M698 525h0M739 499h0M683 480h0M713 494h0M732 502h0M785 484h0M740 482h0M748 481h0M729 482h0M790 488h0M757 507h0M699 501h0M666 498h0M743 510h0M704 529h0M709 472h0M745 482h0M677 505h0M724 486h0M689 485h0M735 484h0M800 529h0M715 506h0M755 493h0M759 485h0M704 487h0M764 482h0M733 515h0M764 494h0M702 490h0M741 523h0M680 506h0M724 478h0M760 490h0M777 528h0M689 502h0M735 501h0M769 475h0M791 518h0M777 510h0M751 514h0M752 525h0M714 489h0M707 470h0M762 499h0M715 492h0M735 497h0M714 484h0M734 494h0M759 504h0M714 514h0M796 505h0M788 503h0M794 513h0M725 488h0M756 485h0M694 516h0M675 489h0M724 489h0M758 509h0M761 497h0M691 492h0M765 494h0M784 522h0M752 508h0M663 488h0M678 497h0M698 509h0M784 519h0M755 508h0M696 512h0M721 485h0M794 526h0M752 503h0M720 473h0M764 494h0M721 510h0M782 511h0M799 497h0M677 504h0M778 501h0M720 492h0M796 488h0M665 517h0M680 484h0M771 502h0M780 524h0M736 512h0M686 497h0M786 503h0M736 527h0M720 485h0M712 502h0M759 513h0M778 499h0M690 496h0" stroke="#1c2a19" stroke-width="2.6" stroke-linecap="round"/>
<path d="M768 475h0M730 488h0M706 508h0M717 459h0M669 475h0M781 489h0M702 512h0M734 476h0M691 456h0M759 469h0M749 483h0M682 483h0M755 481h0M705 478h0M748 496h0M777 488h0M777 499h0M741 496h0M766 513h0M686 459h0M728 470h0M681 478h0M736 479h0M755 505h0M681 504h0M748 504h0M656 487h0M680 470h0M762 492h0M733 489h0M748 477h0M774 493h0M690 506h0M691 485h0M731 483h0M694 475h0M707 499h0M669 492h0M744 490h0M705 487h0M693 459h0M738 471h0M690 462h0M728 469h0M708 477h0M752 465h0M748 457h0M750 457h0M677 479h0M769 493h0M668 501h0M676 461h0M800 483h0M669 485h0M744 486h0M746 480h0M721 456h0M721 492h0M710 473h0M739 486h0M749 498h0M716 473h0M767 479h0M696 495h0M685 473h0M763 496h0M787 512h0M756 488h0M764 507h0M705 506h0M690 463h0M725 477h0M756 468h0M686 485h0M720 466h0M774 513h0M682 497h0M717 472h0M723 488h0M674 480h0M703 453h0M764 490h0M670 500h0M686 518h0M742 483h0M752 498h0M770 476h0M728 461h0M736 462h0M662 490h0M735 491h0M759 480h0M729 463h0M776 500h0M673 501h0M761 474h0M704 495h0M670 484h0M721 489h0M763 475h0M750 510h0M768 488h0M677 491h0M722 494h0M734 499h0M684 462h0M702 467h0M707 512h0M776 484h0M740 494h0M686 492h0M758 512h0M747 502h0M684 502h0M663 472h0M689 470h0M718 468h0M711 454h0M706 474h0M791 487h0M788 497h0M752 494h0M688 497h0M690 504h0M770 487h0M722 465h0M748 495h0M786 509h0M789 500h0M772 476h0M702 501h0M721 490h0M728 464h0M712 472h0M689 464h0M713 484h0M733 476h0M728 470h0M690 506h0M705 503h0M735 515h0M724 482h0M685 481h0M758 482h0M682 502h0M709 503h0M703 470h0M714 458h0M730 470h0M738 505h0M744 483h0M705 492h0M780 504h0M710 465h0M679 498h0M763 474h0M739 478h0M694 500h0M684 477h0M716 463h0M675 475h0M715 474h0M761 513h0M704 464h0M743 512h0M716 475h0M763 507h0M673 499h0M693 501h0M655 482h0M763 473h0M790 493h0M684 460h0M679 472h0M655 485h0M707 500h0M722 495h0M758 484h0M791 468h0M688 484h0M764 455h0M716 463h0M728 475h0M671 484h0M754 509h0M736 468h0M712 477h0M759 503h0M667 495h0M704 476h0M725 499h0M758 491h0M667 485h0M794 505h0M709 499h0M741 506h0M701 454h0M713 489h0M710 502h0M791 493h0M760 501h0M678 503h0M746 509h0M670 473h0M784 514h0M773 473h0M708 473h0M782 504h0M678 480h0M782 480h0M682 504h0M809 495h0M668 495h0M683 502h0M690 507h0M693 498h0M744 502h0M751 478h0M750 460h0M789 503h0M771 474h0M742 480h0M740 446h0M758 498h0M687 491h0M679 501h0M753 501h0M755 464h0M752 492h0M669 490h0M704 472h0M769 476h0M659 508h0M726 505h0M728 476h0M688 462h0M700 490h0M681 460h0M711 489h0M697 498h0M680 511h0M717 457h0M763 475h0M733 470h0M668 465h0M693 475h0M728 495h0M739 478h0M777 500h0M731 478h0M686 485h0M672 496h0M695 507h0M681 497h0M685 488h0M726 512h0M737 506h0M684 515h0M679 478h0M794 484h0M689 486h0M758 473h0M746 502h0M714 474h0M728 469h0M708 472h0M680 479h0M678 509h0M733 488h0M698 504h0M759 465h0M760 467h0M725 460h0M707 505h0M673 482h0M756 471h0M796 521h0M707 479h0M801 511h0M705 464h0M784 502h0M789 477h0M719 498h0M731 470h0M672 490h0M668 507h0M722 487h0M671 497h0M712 487h0M770 512h0M749 508h0M678 485h0M708 505h0M729 480h0M726 469h0M718 478h0M724 480h0M703 519h0M712 488h0M716 461h0M750 499h0M749 501h0M725 465h0M713 479h0M678 496h0M765 484h0M706 474h0M668 476h0M670 498h0M694 493h0M680 508h0M755 500h0M703 503h0M750 500h0M746 506h0M713 495h0M757 474h0M800 497h0M760 474h0M782 504h0M708 465h0M790 481h0M725 477h0M678 490h0M742 459h0M747 473h0M755 458h0M718 505h0M747 509h0M721 477h0M788 491h0M663 510h0M706 486h0M760 478h0M721 485h0M727 470h0" stroke="#2e4a29" stroke-width="3.0" stroke-linecap="round"/>
<path d="M692 442h0M682 462h0M685 465h0M683 470h0M785 479h0M707 456h0M718 451h0M773 480h0M691 470h0M722 457h0M781 488h0M754 466h0M751 477h0M688 466h0M762 491h0M733 457h0M739 444h0M694 471h0M720 455h0M745 467h0M675 460h0M740 451h0M741 484h0M757 444h0M751 491h0M673 480h0M760 486h0M765 486h0M757 478h0M664 477h0M768 477h0M691 464h0M749 469h0M771 472h0M696 457h0M675 477h0M791 494h0M707 448h0M712 480h0M740 448h0M701 446h0M670 497h0M677 454h0M758 484h0M689 475h0M716 458h0M722 462h0M709 455h0M774 466h0M677 488h0M680 475h0M702 485h0M761 485h0M739 464h0M752 492h0M728 474h0M723 469h0M783 486h0M680 458h0M700 470h0M717 485h0M688 452h0M720 463h0M708 468h0M753 470h0M707 469h0M724 483h0M734 456h0M743 489h0M693 438h0M719 468h0M757 472h0M773 463h0M768 466h0M760 475h0M747 445h0M746 492h0M738 485h0M745 455h0M752 501h0M759 478h0M755 439h0M689 451h0M707 481h0M696 495h0M760 452h0M725 495h0M730 433h0M735 449h0M776 453h0M684 472h0M796 482h0M682 459h0M725 480h0M703 484h0M743 480h0M734 481h0M708 475h0M773 481h0M703 481h0M755 472h0M772 464h0M745 460h0M731 446h0M755 490h0M730 460h0M749 482h0M702 477h0M654 484h0M710 480h0M690 486h0M727 465h0M677 442h0M690 454h0M680 477h0M721 481h0M729 461h0M698 476h0M790 476h0M689 452h0M664 474h0M716 436h0M783 487h0M756 484h0M668 476h0M730 477h0M671 480h0M769 475h0M745 486h0M734 456h0M686 474h0M689 456h0M787 494h0M692 457h0M701 482h0M728 464h0M688 445h0M728 480h0M680 446h0M703 441h0M681 450h0M739 465h0M674 455h0M761 466h0M723 484h0M693 478h0M727 480h0M702 470h0M759 486h0M678 478h0M746 488h0M744 462h0M656 482h0M684 466h0M746 482h0M781 465h0M714 454h0M721 487h0M733 468h0M759 487h0M751 482h0M674 469h0M712 452h0M708 468h0M686 482h0M700 484h0M672 462h0M734 475h0M756 474h0M742 461h0M718 463h0M725 481h0M760 447h0M683 449h0M671 447h0M681 472h0M685 463h0M672 485h0M679 465h0M733 467h0M700 466h0M675 473h0M723 454h0M773 467h0M725 489h0M719 460h0M658 487h0M681 474h0M740 446h0M757 473h0M679 449h0M708 486h0M687 460h0M703 460h0M672 476h0M713 460h0M768 479h0M694 455h0M720 443h0M775 481h0M715 449h0M711 478h0M697 488h0M734 467h0M740 471h0M750 443h0M700 453h0M714 467h0M696 484h0M747 484h0M700 443h0M690 460h0M688 485h0M701 460h0M722 450h0M739 472h0M780 496h0M675 483h0M690 484h0M705 464h0M769 487h0M699 491h0M691 477h0M685 463h0M720 453h0M670 490h0M714 452h0M750 476h0M747 458h0M795 489h0M741 465h0M670 486h0M703 470h0M730 475h0M750 489h0M760 491h0M746 464h0M692 487h0M726 480h0M757 473h0M680 473h0M762 460h0M759 476h0M679 459h0M739 455h0M750 473h0M695 463h0M750 489h0M762 481h0M754 487h0M701 486h0M710 478h0M771 437h0M760 472h0M674 476h0M702 472h0M758 487h0M687 472h0M745 485h0M663 483h0M732 488h0M785 479h0M704 447h0M682 446h0M690 455h0M704 463h0M734 484h0M737 470h0M678 459h0M702 447h0M744 468h0M737 461h0" stroke="#406a38" stroke-width="2.6" stroke-linecap="round"/>
<path d="M684 432h0M714 436h0M736 449h0M735 440h0M723 425h0M770 442h0M707 447h0M678 451h0M756 441h0M662 447h0M704 459h0M715 452h0M746 444h0M707 438h0M758 455h0M744 442h0M692 435h0M700 444h0M733 460h0M732 455h0M695 451h0M707 444h0M720 459h0M762 472h0M721 458h0M718 467h0M744 439h0M698 442h0M675 448h0M767 476h0M743 459h0M695 465h0M761 452h0M712 439h0M772 466h0M680 451h0M693 445h0M721 452h0M682 471h0M704 438h0M689 435h0M684 457h0M683 440h0M729 452h0M750 466h0M725 440h0M745 432h0M738 422h0M670 466h0M747 446h0M699 453h0M755 453h0M742 470h0M699 453h0M693 447h0M687 446h0M708 448h0M703 449h0M744 444h0M736 456h0M748 442h0M741 437h0M748 433h0M696 447h0M690 460h0M683 437h0M708 449h0M705 461h0M748 443h0M728 457h0M738 431h0M712 458h0M745 424h0M684 447h0M698 442h0M729 441h0M688 442h0M669 472h0M693 444h0M732 471h0M706 439h0M755 464h0M673 434h0M761 438h0M726 456h0M709 459h0M705 454h0M677 442h0M674 436h0M702 447h0M740 436h0M713 455h0M691 460h0M753 454h0M699 441h0M682 450h0M682 443h0M738 455h0M740 461h0M754 447h0M742 450h0M731 428h0M770 454h0M710 463h0M705 464h0M708 438h0M686 456h0M690 438h0M695 465h0M696 446h0M747 429h0M724 447h0M749 461h0M747 437h0M671 468h0M684 443h0M686 450h0M706 450h0M753 456h0M725 465h0M700 461h0M683 448h0M702 446h0M712 461h0M746 440h0M765 455h0M743 432h0M737 433h0M684 456h0M724 441h0M741 459h0M703 468h0M668 443h0M685 451h0M734 435h0M731 432h0M699 444h0M677 435h0M707 446h0M701 443h0M698 443h0M774 449h0M746 434h0M670 468h0M694 448h0M727 455h0M730 427h0M707 436h0M736 465h0M728 431h0M762 448h0M728 440h0M762 441h0M699 470h0M751 457h0M747 445h0M695 471h0M711 446h0M740 472h0M728 461h0M681 449h0M737 452h0M762 444h0M682 469h0M719 459h0M692 453h0M709 438h0M716 453h0M709 449h0M735 443h0M687 449h0M738 423h0M736 454h0M718 434h0M759 459h0M678 445h0M740 447h0M699 443h0M779 453h0M730 460h0M704 445h0M725 437h0M679 451h0M746 450h0M688 455h0M701 465h0M685 445h0M680 445h0M683 448h0M723 424h0M701 450h0M709 440h0M705 454h0M765 446h0M720 429h0M729 453h0M755 458h0M704 453h0M724 438h0M756 455h0M681 451h0M741 464h0M698 463h0M688 449h0M744 445h0M701 454h0M759 452h0M736 454h0M744 438h0M728 451h0M725 457h0M753 449h0M687 470h0M729 468h0M711 475h0M693 452h0M741 443h0M671 447h0M735 446h0M700 451h0M758 453h0M747 455h0M765 443h0M718 461h0M753 455h0M701 428h0M697 449h0M748 455h0M679 476h0M708 447h0M719 437h0M751 436h0M730 438h0M720 460h0M707 437h0M728 448h0M699 462h0M681 442h0M705 461h0M734 455h0M716 452h0M725 460h0M716 460h0M668 456h0M696 438h0M670 468h0M718 451h0M738 451h0M746 441h0" stroke="#528a48" stroke-width="2.5" stroke-linecap="round"/>
<path d="M787,546 L787,535" stroke="#2a2a1c" stroke-width="3"/>
<polygon points="776,519 779,503 789,497 799,508 797,532 783,537" fill="#142115"/>
<path d="M775 499a7 7 0 1 0 14 0a7 7 0 1 0 -14 0M784 494a6 6 0 1 0 12 0a6 6 0 1 0 -12 0M789 503a7 7 0 1 0 14 0a7 7 0 1 0 -14 0" fill="#264124"/>
<path d="M771 506a7 7 0 1 0 14 0a7 7 0 1 0 -14 0M781 505a5 5 0 1 0 10 0a5 5 0 1 0 -10 0M773 509a6 6 0 1 0 11 0a6 6 0 1 0 -11 0M777 513a6 6 0 1 0 11 0a6 6 0 1 0 -11 0M788 511a5 5 0 1 0 10 0a5 5 0 1 0 -10 0M795 511a6 6 0 1 0 12 0a6 6 0 1 0 -12 0M781 517a5 5 0 1 0 11 0a5 5 0 1 0 -11 0" fill="#1b2e1b"/>
<path d="M771 518a4 4 0 1 0 9 0a4 4 0 1 0 -9 0M789 520a5 5 0 1 0 11 0a5 5 0 1 0 -11 0M791 520a6 6 0 1 0 11 0a6 6 0 1 0 -11 0M769 523a4 4 0 1 0 8 0a4 4 0 1 0 -8 0M777 526a5 5 0 1 0 9 0a5 5 0 1 0 -9 0M784 522a7 7 0 1 0 13 0a7 7 0 1 0 -13 0M795 524a6 6 0 1 0 11 0a6 6 0 1 0 -11 0M779 531a6 6 0 1 0 12 0a6 6 0 1 0 -12 0" fill="#142115"/>
<path d="M785 533a6 6 0 1 0 12 0a6 6 0 1 0 -12 0M776 539a5 5 0 1 0 10 0a5 5 0 1 0 -10 0M784 541a4 4 0 1 0 9 0a4 4 0 1 0 -9 0" fill="#111b12"/>
<path d="M780 545h0M778 538h0M795 528h0M789 533h0M785 539h0M778 521h0M790 531h0M784 541h0M796 537h0M792 545h0M776 540h0M790 537h0M778 541h0M781 544h0M785 544h0M787 526h0M781 544h0M790 537h0M788 533h0M784 543h0M791 541h0M797 526h0M796 529h0M773 523h0M781 533h0M786 537h0M768 533h0M781 542h0M788 540h0M785 547h0M786 540h0M788 530h0M775 544h0M793 537h0M803 542h0M786 544h0M803 531h0M793 535h0M778 544h0M789 539h0M786 546h0M776 526h0M776 543h0M792 541h0M783 535h0M785 531h0M779 545h0" stroke="#101a12" stroke-width="2.9" stroke-linecap="round"/>
<path d="M788 514h0M798 513h0M787 510h0M801 507h0M778 528h0M800 510h0M794 516h0M796 520h0M774 517h0M791 514h0M792 543h0M796 511h0M780 517h0M785 538h0M791 522h0M785 537h0M787 536h0M787 537h0M777 541h0M789 500h0M794 529h0M795 523h0M795 520h0M799 517h0M790 520h0M783 539h0M803 522h0M795 528h0M788 535h0M770 523h0M788 516h0M774 523h0M802 507h0M805 515h0M793 520h0M796 503h0M798 522h0M786 529h0M791 530h0M773 516h0M782 535h0M793 540h0M782 518h0M771 522h0M777 521h0M781 533h0M796 534h0M789 509h0M783 520h0M806 520h0M773 524h0M793 518h0M785 518h0M783 536h0M793 518h0M792 529h0M769 525h0M788 536h0M796 510h0M784 535h0M796 514h0M801 531h0M787 507h0M788 505h0M787 527h0M797 528h0M786 536h0M786 539h0M793 537h0M800 527h0M800 526h0M784 518h0M803 526h0M780 537h0M776 521h0M778 535h0" stroke="#1f341e" stroke-width="2.7" stroke-linecap="round"/>
<path d="M783 507h0M793 525h0M801 527h0M797 516h0M780 528h0M777 524h0M798 524h0M785 493h0M796 513h0M796 507h0M796 507h0M801 505h0M801 503h0M783 495h0M787 514h0M793 491h0M778 531h0M792 514h0M796 511h0M787 526h0M788 525h0M790 501h0M800 521h0M799 495h0M794 513h0M783 505h0M783 533h0M772 511h0M785 503h0M794 512h0M811 505h0M780 496h0M798 528h0M786 503h0M778 502h0M793 498h0M772 514h0M793 520h0M778 534h0M772 504h0M777 489h0M805 517h0M786 532h0M796 525h0M776 504h0M769 516h0M790 494h0M803 502h0M785 497h0M792 523h0M784 509h0M793 515h0M806 510h0M784 520h0M794 518h0M783 502h0M779 521h0M771 522h0M780 504h0" stroke="#2e4f2b" stroke-width="2.9" stroke-linecap="round"/>
<path d="M786 504h0M780 508h0M788 489h0M776 509h0M792 515h0M776 510h0M793 516h0M788 493h0M804 512h0M779 502h0M787 505h0M777 510h0M796 497h0M787 488h0M787 505h0M789 497h0M777 498h0M793 493h0M791 502h0M807 509h0M794 518h0M798 507h0M789 495h0M784 507h0M787 493h0M772 509h0M796 512h0M804 506h0M783 508h0M797 494h0M790 489h0M775 487h0M795 515h0M785 500h0M784 508h0M776 505h0" stroke="#3e6a37" stroke-width="2.4" stroke-linecap="round"/>
<path d="M798 530h0M798 516h0M784 522h0M791 522h0M779 525h0M772 527h0M801 523h0M797 517h0M769 529h0M777 522h0M782 516h0M803 529h0M796 524h0M800 509h0M770 518h0M774 524h0M781 525h0M786 526h0M772 527h0M788 542h0M795 528h0M796 524h0M789 536h0M775 512h0M791 521h0M787 534h0M771 533h0M788 537h0M785 518h0M788 509h0M787 536h0M793 526h0M804 530h0M802 513h0M776 516h0M783 545h0M797 525h0M793 529h0M791 524h0M778 538h0M789 510h0M795 522h0M778 523h0M782 540h0M770 522h0M796 514h0" stroke="#172718" stroke-width="2.8" stroke-linecap="round"/>
<path d="M780 525h0M783 518h0M790 514h0M793 497h0M790 527h0M786 537h0M792 513h0M788 500h0M801 506h0M776 525h0M777 527h0M790 535h0M798 518h0M795 523h0M797 517h0M781 528h0M794 524h0M790 502h0M793 538h0M783 510h0M804 525h0M801 503h0M786 523h0M805 510h0M800 522h0M765 516h0M775 514h0M776 499h0M777 516h0M790 520h0M801 518h0M781 507h0M787 508h0M792 500h0M797 517h0M798 513h0M777 512h0M767 499h0M778 524h0M775 519h0M784 524h0M805 507h0M780 516h0M769 527h0M777 542h0M784 506h0M782 521h0M786 507h0M783 521h0M781 537h0M778 536h0M797 508h0M798 534h0M777 521h0M773 526h0M785 538h0M810 535h0M776 521h0M771 515h0M775 517h0M785 534h0M776 517h0M787 528h0M783 507h0M793 501h0M803 509h0M772 521h0M794 506h0M771 535h0M802 520h0M803 516h0M794 520h0M769 527h0M772 504h0M782 530h0" stroke="#274224" stroke-width="2.6" stroke-linecap="round"/>
<path d="M790 507h0M786 495h0M771 517h0M778 503h0M796 515h0M794 514h0M795 507h0M779 514h0M806 508h0M778 501h0M785 495h0M775 522h0M804 522h0M780 506h0M803 519h0M805 522h0M768 511h0M786 513h0M772 508h0M794 503h0M784 498h0M797 506h0M777 506h0M777 519h0M781 500h0M781 503h0M787 500h0M790 499h0M789 527h0M774 520h0M779 506h0M795 505h0M793 501h0M796 491h0M788 488h0M771 519h0M801 495h0M806 510h0M778 515h0M788 515h0M792 495h0M778 511h0M803 508h0M796 511h0M783 509h0M790 513h0M785 510h0M776 497h0M802 519h0M793 518h0M787 492h0M776 520h0M786 500h0M788 510h0M782 512h0" stroke="#365d31" stroke-width="2.8" stroke-linecap="round"/>
<path d="M790 488h0M783 505h0M779 492h0M784 487h0M780 490h0M776 502h0M791 491h0M782 504h0M778 492h0M771 496h0M780 495h0M789 502h0M794 496h0M774 506h0M790 488h0M772 506h0M784 508h0M790 490h0M795 489h0M789 488h0M796 500h0M780 502h0M809 496h0M793 493h0M794 499h0M780 507h0" stroke="#46783e" stroke-width="2.9" stroke-linecap="round"/>
<path d="M975,605 L975,550" stroke="#2a2a1c" stroke-width="7"/>
<path d="M975,580 L945,555 M975,572 L1008,548" stroke="#2a2a1c" stroke-width="2" fill="none" stroke-linecap="round"/>
<path d="M944 460a8 8 0 1 0 17 0a8 8 0 1 0 -17 0M977 466a13 13 0 1 0 26 0a13 13 0 1 0 -26 0M993 467a10 10 0 1 0 20 0a10 10 0 1 0 -20 0M931 475a12 12 0 1 0 25 0a12 12 0 1 0 -25 0M958 477a8 8 0 1 0 16 0a8 8 0 1 0 -16 0M963 472a8 8 0 1 0 17 0a8 8 0 1 0 -17 0" fill="#2e4929"/>
<path d="M906 487a13 13 0 1 0 27 0a13 13 0 1 0 -27 0M929 490a11 11 0 1 0 22 0a11 11 0 1 0 -22 0M946 482a10 10 0 1 0 20 0a10 10 0 1 0 -20 0M957 486a9 9 0 1 0 17 0a9 9 0 1 0 -17 0M970 488a8 8 0 1 0 16 0a8 8 0 1 0 -16 0M985 486a13 13 0 1 0 26 0a13 13 0 1 0 -26 0M1012 486a13 13 0 1 0 27 0a13 13 0 1 0 -27 0M912 504a12 12 0 1 0 25 0a12 12 0 1 0 -25 0M928 499a12 12 0 1 0 24 0a12 12 0 1 0 -24 0M948 494a9 9 0 1 0 18 0a9 9 0 1 0 -18 0M954 497a9 9 0 1 0 18 0a9 9 0 1 0 -18 0M969 494a12 12 0 1 0 24 0a12 12 0 1 0 -24 0M983 496a8 8 0 1 0 17 0a8 8 0 1 0 -17 0M913 507a8 8 0 1 0 17 0a8 8 0 1 0 -17 0M996 507a11 11 0 1 0 22 0a11 11 0 1 0 -22 0" fill="#22331e"/>
<path d="M925 508a8 8 0 1 0 16 0a8 8 0 1 0 -16 0M930 509a11 11 0 1 0 22 0a11 11 0 1 0 -22 0M954 513a9 9 0 1 0 18 0a9 9 0 1 0 -18 0M963 509a13 13 0 1 0 27 0a13 13 0 1 0 -27 0M980 511a9 9 0 1 0 18 0a9 9 0 1 0 -18 0M1006 512a9 9 0 1 0 18 0a9 9 0 1 0 -18 0M904 519a13 13 0 1 0 27 0a13 13 0 1 0 -27 0M915 518a13 13 0 1 0 26 0a13 13 0 1 0 -26 0M939 526a12 12 0 1 0 25 0a12 12 0 1 0 -25 0M945 522a12 12 0 1 0 23 0a12 12 0 1 0 -23 0M968 525a10 10 0 1 0 20 0a10 10 0 1 0 -20 0M984 525a10 10 0 1 0 20 0a10 10 0 1 0 -20 0M996 521a12 12 0 1 0 25 0a12 12 0 1 0 -25 0M1011 522a9 9 0 1 0 18 0a9 9 0 1 0 -18 0M928 535a12 12 0 1 0 24 0a12 12 0 1 0 -24 0M945 535a8 8 0 1 0 16 0a8 8 0 1 0 -16 0M953 533a12 12 0 1 0 23 0a12 12 0 1 0 -23 0M968 531a12 12 0 1 0 23 0a12 12 0 1 0 -23 0M982 535a12 12 0 1 0 25 0a12 12 0 1 0 -25 0" fill="#192316"/>
<path d="M907 537a8 8 0 1 0 17 0a8 8 0 1 0 -17 0M920 548a11 11 0 1 0 23 0a11 11 0 1 0 -23 0M961 552a13 13 0 1 0 26 0a13 13 0 1 0 -26 0M992 548a10 10 0 1 0 19 0a10 10 0 1 0 -19 0M1003 547a13 13 0 1 0 26 0a13 13 0 1 0 -26 0M975 560a8 8 0 1 0 17 0a8 8 0 1 0 -17 0" fill="#151c13"/>
<path d="M995 549h0M991 535h0M981 563h0M945 534h0M913 526h0M926 547h0M953 543h0M926 527h0M994 556h0M960 536h0M1013 523h0M919 533h0M1004 541h0M1013 528h0M955 535h0M926 520h0M971 565h0M926 550h0M990 553h0M974 549h0M991 547h0M990 566h0M939 525h0M941 546h0M925 516h0M949 529h0M1009 520h0M1031 544h0M979 564h0M966 527h0M994 545h0M1008 531h0M939 536h0M987 545h0M959 524h0M992 529h0M929 515h0M958 527h0M956 532h0M969 538h0M924 542h0M1008 509h0M951 541h0M923 530h0M961 551h0M996 529h0M979 542h0M964 534h0M961 540h0M967 509h0M996 545h0M993 546h0M982 544h0M914 544h0M1024 547h0M1031 543h0M1025 543h0M935 542h0M1002 528h0M997 521h0M938 555h0M995 545h0M1005 541h0M1035 531h0M986 532h0M1011 520h0M961 566h0M944 548h0M978 565h0M977 567h0M967 551h0M942 546h0M1012 554h0M998 555h0M1006 545h0M985 539h0M972 561h0M957 540h0M926 527h0M942 518h0M974 519h0M971 527h0M967 526h0M905 527h0M978 540h0M955 535h0M1002 547h0M912 542h0M991 546h0M990 537h0M982 511h0M1026 540h0M960 542h0M981 530h0M943 543h0M939 548h0M933 532h0M1004 551h0M910 540h0M1001 557h0M955 543h0M985 545h0M1030 520h0M944 548h0M966 522h0M971 525h0M919 546h0M910 531h0M965 519h0M923 530h0M973 559h0M906 538h0M1027 547h0M925 553h0M920 513h0M1011 518h0M986 560h0M933 500h0M966 552h0M1003 556h0M985 564h0M1017 525h0M1006 551h0M955 505h0M985 557h0M1010 552h0M931 514h0M1018 532h0M992 554h0M1017 518h0M932 515h0M1010 539h0M1014 524h0M946 535h0M1016 520h0M993 560h0M977 556h0M929 541h0M989 502h0M948 545h0M988 557h0M927 549h0M994 560h0M986 555h0M1006 531h0M927 543h0M977 531h0M1027 550h0M1014 544h0M931 536h0M1030 525h0M954 535h0M920 515h0M970 532h0M1013 554h0M1015 554h0M903 521h0M915 543h0M990 562h0M1005 556h0M905 515h0M908 535h0M973 570h0M985 526h0M988 521h0M1022 552h0M939 530h0M978 518h0M985 531h0M959 532h0M931 547h0M935 562h0M984 543h0M1023 522h0M970 503h0M951 529h0M920 556h0M1015 521h0M942 544h0M968 521h0M969 513h0M982 570h0M955 517h0M951 526h0M953 543h0M983 529h0M997 516h0M967 528h0M991 549h0M933 540h0M938 554h0M984 519h0M931 511h0M960 524h0M1026 548h0M955 534h0M972 554h0M962 546h0M939 522h0M924 541h0M913 547h0M981 566h0M1033 540h0M959 528h0M1004 557h0M975 534h0M937 527h0M923 539h0M1018 533h0M922 525h0M993 541h0M1004 557h0M935 555h0M951 544h0M954 537h0M963 528h0M1025 557h0M936 523h0M922 511h0M1019 555h0M975 566h0M993 546h0M1017 537h0M976 539h0M911 523h0M967 551h0M1001 532h0M1022 527h0M944 536h0M935 547h0M1004 555h0M1002 543h0M995 547h0M986 550h0M974 533h0M952 539h0M991 517h0M1012 512h0M919 516h0M1004 537h0M922 556h0M996 559h0M1011 557h0M962 530h0M956 533h0M957 528h0M948 539h0M910 535h0M1003 549h0M1007 554h0M988 520h0M965 527h0M979 542h0M975 565h0M1012 524h0M1016 529h0M1013 552h0M938 520h0M998 542h0M974 515h0M1001 558h0M986 569h0M1011 543h0M984 518h0M1027 557h0M988 503h0M964 546h0M934 546h0M982 562h0M999 516h0M1020 515h0M1005 547h0M932 515h0M924 542h0M1002 516h0M899 519h0M977 566h0M918 547h0M1007 533h0M943 567h0M993 548h0M920 544h0M963 536h0M964 531h0M966 538h0M977 540h0M980 563h0M965 528h0M985 552h0M983 550h0M973 556h0M978 533h0M945 518h0M905 526h0M991 541h0M991 519h0M1004 547h0M971 530h0M984 530h0M942 511h0M982 520h0M915 539h0M1009 540h0M957 527h0M969 536h0M977 554h0M1005 531h0M949 535h0M1026 529h0M923 540h0M991 550h0M922 528h0M962 539h0M991 562h0M929 517h0M975 556h0M930 534h0M1021 528h0M956 543h0M1006 543h0M961 524h0M981 551h0M1019 531h0M959 541h0M927 556h0M948 538h0M986 556h0M1007 540h0M924 532h0M962 539h0M1012 530h0M959 534h0M1014 525h0M994 551h0M939 542h0M976 537h0M987 541h0M978 557h0M947 534h0M945 536h0M967 515h0M999 514h0M992 542h0M1013 522h0M1010 556h0M936 533h0M1012 558h0M969 558h0M922 527h0M967 530h0M1004 523h0M1023 525h0M938 560h0M925 549h0M1012 527h0M986 561h0M938 531h0M959 520h0M1017 529h0M984 561h0M992 563h0M978 505h0M907 527h0M973 523h0M1011 517h0M992 536h0M1001 533h0M973 566h0M1010 550h0M1026 544h0M972 503h0M982 541h0M976 559h0M981 551h0M967 535h0M978 532h0M933 514h0M930 516h0M998 550h0M987 558h0M907 531h0M945 548h0M970 549h0M1029 523h0M999 554h0M926 531h0M1010 548h0M984 532h0M966 536h0M965 530h0M963 553h0M923 542h0M1022 530h0M974 518h0M936 546h0M1000 537h0M957 562h0M1000 558h0M994 528h0M1020 529h0M983 515h0M981 549h0M964 548h0M1013 527h0M945 542h0M953 534h0M998 528h0M939 555h0M1005 527h0M938 542h0M990 520h0M928 523h0M988 536h0M1025 514h0M938 531h0M985 554h0M936 509h0M898 530h0M954 542h0M956 531h0M976 562h0M929 555h0M933 515h0M917 550h0M989 553h0M944 552h0M938 546h0M923 516h0M965 506h0M1006 553h0M970 538h0M1002 537h0M959 543h0M988 529h0M927 555h0M985 565h0M974 525h0M960 506h0M1009 538h0M975 525h0M986 525h0M976 532h0M935 544h0M931 516h0M928 540h0M929 545h0M946 538h0M972 545h0M913 547h0M987 563h0M940 558h0M1004 529h0M1019 525h0M927 525h0M929 540h0M1004 557h0M1004 559h0M931 540h0M968 529h0M921 531h0M944 562h0M992 543h0M980 562h0M944 525h0M960 521h0M963 544h0M927 537h0M991 533h0M907 539h0M913 512h0M939 551h0M980 570h0M959 530h0M922 540h0M993 540h0M928 559h0M1003 560h0M910 531h0M935 517h0M984 544h0M1005 543h0M1024 537h0M1001 542h0M1003 551h0M928 551h0M999 532h0M941 537h0M974 549h0M983 553h0M1007 555h0M1022 515h0M1002 552h0M981 517h0M944 545h0M976 537h0M1019 540h0M935 519h0M910 551h0M966 547h0M914 535h0M981 568h0M1011 550h0M911 517h0M938 537h0M978 560h0M935 521h0M966 541h0M978 565h0M917 530h0M930 522h0M965 529h0M901 544h0M981 545h0M976 524h0M980 537h0M940 528h0M1002 542h0M996 552h0M958 536h0M951 530h0M983 557h0M1003 559h0M933 543h0M921 545h0M958 535h0M1022 521h0M1012 513h0M1002 539h0M968 550h0M929 552h0M963 519h0M934 556h0M1003 526h0M946 563h0M954 535h0M942 549h0M940 501h0M1013 535h0M986 526h0M944 541h0M961 540h0M914 542h0M911 532h0M940 558h0M982 565h0M1010 533h0M979 556h0M988 560h0M940 545h0M962 556h0M1004 530h0M983 565h0M1017 523h0M993 558h0M986 570h0M935 540h0M946 541h0M1008 551h0M1000 512h0M1006 518h0M1013 551h0M1010 524h0M934 526h0M996 549h0M1015 550h0M989 548h0M919 519h0M1005 516h0M1008 533h0M994 532h0M976 557h0M982 534h0M928 533h0M952 534h0M943 552h0M1023 522h0M957 561h0M995 555h0M951 526h0M912 547h0M912 546h0M949 544h0M957 517h0M927 511h0M967 558h0M924 515h0M1002 545h0M921 545h0M975 566h0M1010 551h0M1011 547h0M948 540h0M960 539h0M953 520h0M948 536h0M1004 549h0M1010 540h0M948 538h0M953 537h0M987 554h0M943 564h0M989 523h0M940 523h0M942 515h0M1025 520h0M1006 549h0M954 533h0M978 542h0M1011 542h0M976 535h0M953 536h0M1031 511h0M986 543h0M962 543h0M1003 557h0M995 550h0M1030 501h0M951 543h0M1017 560h0M966 530h0M1008 556h0M1028 551h0M962 536h0M999 556h0M1012 560h0M956 544h0M975 533h0M1015 530h0M971 546h0M1002 518h0M991 554h0M1016 532h0M931 528h0M1002 516h0M927 548h0M937 500h0M924 541h0M907 541h0M917 542h0" stroke="#141a12" stroke-width="2.6" stroke-linecap="round"/>
<path d="M980 532h0M1014 506h0M989 499h0M935 512h0M1003 504h0M960 524h0M998 529h0M952 483h0M1000 540h0M1009 542h0M911 538h0M971 492h0M1022 517h0M985 527h0M956 522h0M917 538h0M1030 535h0M925 495h0M951 511h0M945 536h0M960 513h0M951 491h0M954 528h0M967 522h0M939 526h0M963 494h0M927 499h0M957 526h0M941 523h0M927 503h0M987 519h0M931 509h0M904 512h0M978 528h0M920 495h0M1027 519h0M994 498h0M901 517h0M973 549h0M920 490h0M945 497h0M1012 516h0M959 525h0M1001 524h0M1015 512h0M916 485h0M940 524h0M966 478h0M1022 530h0M922 517h0M986 520h0M964 491h0M1001 525h0M1000 506h0M995 527h0M939 518h0M930 511h0M960 531h0M912 492h0M991 523h0M961 502h0M1019 504h0M929 499h0M1024 516h0M966 506h0M1000 531h0M914 519h0M928 503h0M928 527h0M938 512h0M1014 524h0M992 506h0M916 500h0M993 503h0M941 478h0M952 501h0M942 523h0M965 491h0M978 485h0M1014 510h0M965 490h0M1003 538h0M1033 496h0M990 499h0M1022 523h0M938 503h0M946 505h0M929 511h0M919 505h0M994 502h0M959 502h0M956 524h0M965 500h0M962 531h0M898 524h0M1005 503h0M959 527h0M997 530h0M976 522h0M1003 510h0M910 505h0M942 517h0M954 528h0M956 531h0M937 512h0M987 499h0M922 505h0M976 525h0M982 530h0M946 529h0M937 528h0M1018 514h0M952 529h0M939 502h0M925 512h0M999 520h0M1016 528h0M919 498h0M989 536h0M935 489h0M963 505h0M961 505h0M1022 495h0M976 538h0M956 531h0M974 520h0M948 530h0M960 537h0M1026 528h0M953 528h0M994 518h0M930 498h0M945 512h0M1013 508h0M958 492h0M989 526h0M937 536h0M954 493h0M991 531h0M938 510h0M942 520h0M994 505h0M986 532h0M1021 523h0M957 531h0M936 502h0M922 534h0M954 519h0M956 513h0M901 520h0M989 512h0M969 525h0M906 496h0M929 495h0M929 534h0M998 526h0M1029 500h0M942 523h0M942 494h0M904 525h0M942 511h0M940 527h0M1028 519h0M904 520h0M996 499h0M915 511h0M947 496h0M928 487h0M923 504h0M1017 503h0M921 497h0M911 537h0M1021 519h0M924 543h0M1009 518h0M998 528h0M940 528h0M989 498h0M966 521h0M1006 507h0M937 529h0M929 508h0M948 518h0M1018 509h0M973 495h0M1003 519h0M1011 523h0M991 533h0M934 530h0M962 530h0M913 500h0M1000 498h0M926 499h0M928 516h0M1019 531h0M968 512h0M925 513h0M969 495h0M930 504h0M988 530h0M933 513h0M939 510h0M990 526h0M979 496h0M938 497h0M1003 496h0M912 508h0M935 515h0M988 529h0M921 497h0M944 484h0M955 500h0M981 507h0M995 515h0M1031 542h0M914 488h0M923 531h0M929 492h0M975 493h0M980 511h0M935 488h0M951 531h0M911 539h0M979 512h0M1011 526h0M927 528h0M939 514h0M973 504h0M998 508h0M920 516h0M973 508h0M927 505h0M952 525h0M974 533h0M1011 506h0M943 504h0M945 500h0M992 496h0M959 536h0M980 512h0M1030 493h0M962 492h0M943 509h0M988 504h0M1021 500h0M973 481h0M959 486h0M916 538h0M942 531h0M1019 519h0M1003 517h0M1004 506h0M972 490h0M1012 525h0M979 519h0M1024 516h0M957 515h0M991 528h0M927 538h0M1013 503h0M930 503h0M959 492h0M997 510h0M1025 497h0M929 507h0M968 504h0M947 529h0M977 530h0M989 516h0M1016 513h0M995 516h0M994 494h0M1011 534h0M937 511h0M988 523h0M1015 513h0M983 492h0M967 519h0M998 527h0M994 508h0M970 485h0M959 488h0M924 527h0M997 495h0M1007 544h0M928 508h0M970 523h0M931 516h0M1021 512h0M971 533h0M1004 517h0M944 518h0M1005 510h0M976 494h0M963 517h0M971 492h0M920 517h0M962 489h0M930 537h0M1014 524h0M983 518h0M1020 527h0M995 520h0M997 503h0M985 506h0M932 499h0M975 523h0M928 535h0M953 497h0M938 518h0M930 513h0M980 532h0M914 493h0M945 534h0M958 532h0M1029 528h0M935 508h0M908 534h0M992 500h0M1008 489h0M931 504h0M962 503h0M913 506h0M935 496h0M1008 536h0M1037 503h0M971 487h0M1012 516h0M930 479h0M955 516h0" stroke="#263a22" stroke-width="2.6" stroke-linecap="round"/>
<path d="M970 521h0M954 511h0M992 490h0M1027 519h0M926 507h0M938 486h0M950 502h0M931 482h0M944 502h0M962 489h0M949 489h0M986 521h0M992 501h0M936 503h0M971 510h0M970 490h0M950 479h0M964 491h0M958 492h0M966 478h0M939 511h0M959 471h0M1007 509h0M947 480h0M990 516h0M929 497h0M928 513h0M940 509h0M964 474h0M949 489h0M918 507h0M1011 514h0M977 490h0M937 515h0M973 495h0M928 478h0M974 498h0M965 493h0M969 499h0M944 479h0M1007 493h0M938 494h0M961 500h0M956 483h0M948 467h0M993 505h0M981 485h0M1003 510h0M994 503h0M1002 475h0M959 476h0M953 513h0M999 496h0M952 499h0M937 522h0M1012 483h0M938 502h0M949 492h0M998 468h0M948 507h0M951 509h0M971 492h0M981 490h0M928 500h0M957 474h0M998 463h0M925 510h0M928 513h0M962 491h0M988 480h0M1015 511h0M912 506h0M916 509h0M991 491h0M966 492h0M913 504h0M1018 522h0M973 489h0M999 495h0M929 483h0M932 477h0M1034 491h0M964 476h0M939 506h0M963 511h0M1009 509h0M954 501h0M958 489h0M969 494h0M960 508h0M1006 473h0M986 523h0M930 511h0M924 498h0M992 497h0M982 491h0M1017 516h0M929 504h0M971 524h0M1004 476h0M953 496h0M909 497h0M1008 478h0M961 463h0M920 505h0M974 487h0M1014 513h0M997 515h0M936 487h0M929 483h0M956 480h0M969 512h0M977 468h0M996 469h0M1014 512h0M1004 501h0M973 487h0M939 491h0M999 474h0M934 474h0M1011 509h0M952 493h0M989 491h0M970 493h0M975 473h0M989 509h0M1005 515h0M993 501h0M964 487h0M935 478h0M929 512h0M932 476h0M961 491h0M958 474h0M934 491h0M971 490h0M938 503h0M1013 509h0M932 510h0M922 506h0M937 487h0M971 503h0M943 494h0M985 516h0M960 474h0M965 501h0M954 504h0M921 501h0M922 510h0M936 500h0M986 503h0M955 513h0M997 521h0M1006 513h0M985 483h0M920 482h0M952 493h0M1016 513h0M927 517h0M1011 474h0M952 465h0M914 501h0M987 524h0M936 497h0M965 490h0M945 486h0M984 483h0M984 502h0M936 497h0M1008 520h0M936 504h0M973 497h0M1008 496h0M949 480h0M953 501h0M973 495h0M995 469h0M917 494h0M996 500h0M1021 497h0M975 485h0M973 490h0M950 473h0M1008 493h0M972 477h0M978 470h0M931 516h0M1028 477h0M992 509h0M988 512h0M946 499h0M990 505h0M939 522h0M908 496h0M916 475h0M938 473h0M939 500h0M975 493h0M941 508h0M991 502h0M1005 477h0M943 518h0M1007 519h0M961 489h0M982 519h0M943 486h0M993 504h0M953 496h0M981 509h0M925 486h0M929 495h0M943 505h0M996 501h0M1015 511h0M984 483h0M1020 496h0M907 479h0M958 481h0M1001 522h0M955 498h0M930 477h0M1016 512h0M929 495h0M927 494h0M959 473h0M969 511h0M1029 510h0M1013 466h0M915 507h0M1026 501h0M975 500h0M1010 475h0M945 501h0M932 500h0M962 491h0M1011 462h0M1030 479h0M912 492h0M951 492h0M1015 510h0M973 470h0M963 500h0M1017 514h0M991 493h0M966 509h0M932 505h0M962 462h0M958 480h0M983 501h0M921 516h0M957 498h0M935 471h0M967 473h0M1012 477h0M954 477h0M926 508h0M984 488h0M995 475h0M1017 508h0M937 460h0M1001 505h0M1001 500h0M996 516h0M929 507h0M962 488h0M961 507h0M937 501h0M974 479h0M945 493h0M950 474h0M939 491h0M983 481h0M942 500h0M946 511h0M983 518h0M985 487h0M982 504h0M1015 517h0M1016 513h0M975 481h0M958 500h0M985 486h0M985 488h0M1003 471h0M926 506h0M988 499h0M978 517h0M918 504h0M975 467h0M963 475h0M961 485h0M935 471h0M1025 510h0M1012 516h0M930 489h0M979 497h0M963 476h0M979 497h0M990 500h0M1018 488h0M960 479h0M911 509h0M917 499h0M952 511h0M963 489h0M1015 513h0M930 498h0M959 487h0M932 503h0M944 523h0M964 475h0M961 475h0M1018 474h0M911 491h0M1002 508h0M935 484h0M925 505h0M972 484h0M963 505h0" stroke="#385b32" stroke-width="2.1" stroke-linecap="round"/>
<path d="M950 490h0M947 474h0M1013 484h0M949 465h0M926 492h0M961 486h0M957 490h0M1018 499h0M1005 460h0M961 478h0M1003 489h0M1006 474h0M969 492h0M970 476h0M1005 459h0M1013 464h0M993 461h0M988 464h0M979 480h0M1027 485h0M958 481h0M935 492h0M963 471h0M970 484h0M962 481h0M967 472h0M1028 478h0M957 457h0M944 489h0M961 478h0M970 495h0M972 472h0M970 477h0M932 479h0M954 496h0M944 490h0M967 475h0M1015 502h0M994 490h0M961 458h0M952 492h0M961 478h0M1029 472h0M986 492h0M950 488h0M965 491h0M1035 481h0M963 491h0M968 472h0M970 470h0M927 499h0M941 469h0M948 484h0M989 486h0M937 491h0M971 463h0M1005 462h0M1020 503h0M1023 477h0M966 485h0M1005 476h0M959 464h0M1015 498h0M953 471h0M980 468h0M966 479h0M1009 490h0M960 490h0M987 460h0M961 463h0M940 476h0M982 485h0M966 481h0M968 481h0M951 464h0M983 476h0M962 475h0M1026 474h0M986 477h0M957 483h0M991 484h0M965 494h0M998 490h0M942 491h0M964 477h0M950 490h0M941 484h0M983 476h0M977 468h0M944 498h0M951 478h0M995 454h0M971 483h0M931 480h0M924 472h0M948 469h0M944 481h0M1002 501h0M997 465h0M939 476h0M930 478h0M974 475h0M933 498h0M972 481h0M955 477h0M934 501h0M959 487h0M1035 487h0M1016 501h0M990 486h0M1039 484h0M970 479h0M1016 476h0M993 501h0M952 486h0M936 466h0M955 478h0M926 502h0M969 470h0M929 467h0M951 486h0M967 485h0M915 501h0M947 455h0M996 455h0M1016 481h0M946 465h0M936 502h0M1001 495h0M968 490h0M954 470h0M933 485h0M963 471h0M984 457h0M915 485h0M1001 478h0M985 484h0M969 480h0M958 492h0M945 472h0M957 490h0M968 474h0M942 490h0M976 479h0M972 482h0M954 472h0M967 475h0M1015 503h0M942 479h0M950 478h0M923 486h0M982 482h0M936 478h0M919 498h0M934 477h0M946 482h0M1007 472h0M958 482h0M954 458h0M926 495h0M979 479h0M1004 487h0M1016 489h0M992 487h0M1012 490h0M999 455h0M982 479h0M961 493h0M915 487h0" stroke="#4a7b42" stroke-width="2.5" stroke-linecap="round"/>
<path d="M918 500h0M975 522h0M970 512h0M951 536h0M1002 543h0M953 530h0M962 519h0M957 520h0M928 505h0M1015 516h0M915 516h0M1008 549h0M972 534h0M911 528h0M962 534h0M919 544h0M957 511h0M992 527h0M942 530h0M993 533h0M929 514h0M994 524h0M1014 547h0M994 532h0M991 533h0M970 524h0M938 541h0M980 558h0M918 520h0M1013 495h0M940 508h0M1013 550h0M974 523h0M968 512h0M1022 497h0M982 507h0M907 491h0M927 528h0M960 539h0M995 513h0M981 524h0M957 530h0M988 500h0M988 505h0M933 514h0M973 536h0M998 533h0M980 513h0M997 503h0M915 553h0M992 537h0M1018 518h0M939 509h0M990 513h0M913 511h0M991 544h0M1020 525h0M1023 492h0M934 509h0M984 518h0M962 507h0M1025 512h0M1003 515h0M929 505h0M976 501h0M990 506h0M919 536h0M944 526h0M960 536h0M997 498h0M935 508h0M926 531h0M956 538h0M932 510h0M1036 512h0M995 515h0M940 536h0M937 543h0M989 505h0M998 521h0M1001 523h0M976 534h0M925 527h0M949 505h0M963 501h0M953 534h0M959 505h0M932 513h0M1022 493h0M981 523h0M918 513h0M937 511h0M970 511h0M945 501h0M966 498h0M923 540h0M989 521h0M921 541h0M1001 522h0M1004 544h0M941 512h0M986 522h0M958 538h0M965 520h0M929 514h0M921 508h0M990 530h0M1011 533h0M973 530h0M976 554h0M957 521h0M917 512h0M970 517h0M1016 505h0M994 520h0M1012 513h0M906 508h0M932 519h0M960 504h0M967 520h0M945 521h0M974 526h0M1024 510h0M1027 524h0M959 507h0M998 532h0M925 508h0M1017 517h0M930 508h0M952 511h0M965 504h0M923 538h0M943 515h0M967 522h0M951 542h0M905 535h0M967 532h0M928 545h0M940 528h0M1022 519h0M969 524h0M1006 531h0M958 501h0M1021 524h0M956 539h0M984 554h0M978 528h0M942 504h0M993 528h0M1018 513h0M935 502h0M1030 512h0M971 517h0M937 508h0M935 508h0M901 502h0M974 537h0M1002 497h0M934 501h0M1013 507h0M916 540h0M1027 492h0M927 498h0M930 537h0M961 496h0M952 493h0M949 513h0M913 490h0M979 528h0M913 539h0M973 492h0M935 511h0M1026 535h0M984 534h0M930 508h0M962 523h0M987 530h0M908 535h0M953 506h0M927 550h0M985 528h0M963 550h0M936 516h0M960 517h0M912 539h0M968 505h0M929 525h0M905 529h0M1005 538h0M922 506h0M914 527h0M995 502h0M953 534h0M1012 528h0M999 518h0M983 530h0M1022 537h0M1021 518h0M954 500h0M942 517h0M965 542h0M973 552h0M950 493h0M1020 523h0M932 498h0M938 505h0M1021 509h0M935 510h0M929 493h0M938 499h0M989 502h0M976 507h0M934 499h0M900 537h0M984 504h0M977 506h0M1015 518h0M978 517h0M963 537h0M966 503h0M955 499h0M951 531h0M929 509h0M1000 520h0M971 526h0M915 532h0M928 505h0M955 535h0M971 497h0M899 521h0M948 500h0M917 510h0M989 553h0M986 531h0M973 531h0M975 541h0M976 529h0M955 513h0M929 496h0M998 540h0M1022 548h0M986 512h0M935 539h0M984 540h0M937 523h0M948 506h0M975 522h0M1015 530h0M966 552h0M1012 535h0M990 519h0M914 522h0M927 511h0M911 529h0M945 515h0M905 528h0M911 533h0M1028 533h0M919 518h0M961 508h0M939 513h0M935 507h0M986 519h0M945 511h0M949 535h0M907 533h0M909 544h0M999 542h0M1040 493h0M936 538h0M1016 530h0M1024 517h0M967 534h0M986 519h0M962 515h0M994 544h0M958 551h0M1001 545h0M987 556h0M986 495h0M941 499h0M995 522h0M977 534h0M961 517h0M961 516h0M918 543h0M1003 541h0M973 544h0M1021 523h0M927 527h0M971 535h0M960 503h0M958 514h0M1011 513h0M1006 528h0M931 538h0M927 515h0M981 555h0M948 539h0M945 539h0M1008 543h0M918 546h0M931 513h0M992 506h0M953 511h0M1000 499h0M945 518h0M953 495h0M938 530h0M916 526h0M1018 531h0M990 512h0M933 517h0M928 498h0M979 518h0M933 519h0M926 512h0M999 501h0M966 503h0M985 526h0M944 505h0M941 516h0M1045 514h0M1004 531h0M932 523h0M991 510h0" stroke="#1d2a1a" stroke-width="2.9" stroke-linecap="round"/>
<path d="M959 505h0M994 475h0M939 503h0M998 489h0M949 533h0M991 515h0M1000 516h0M941 495h0M935 530h0M965 487h0M928 512h0M991 488h0M958 468h0M946 518h0M944 498h0M953 494h0M983 499h0M962 534h0M1001 532h0M967 504h0M993 488h0M1002 531h0M926 503h0M946 498h0M1007 477h0M955 504h0M930 507h0M935 496h0M991 491h0M959 490h0M967 495h0M963 475h0M912 509h0M959 488h0M1016 514h0M1000 523h0M958 523h0M945 474h0M928 503h0M999 516h0M916 485h0M983 486h0M914 528h0M1014 484h0M935 493h0M1020 506h0M991 482h0M1019 511h0M946 514h0M962 502h0M973 524h0M1019 490h0M979 486h0M1011 506h0M1030 514h0M929 500h0M970 493h0M963 495h0M1000 518h0M938 504h0M932 485h0M985 485h0M939 488h0M941 486h0M914 517h0M941 477h0M981 525h0M988 526h0M980 483h0M989 504h0M964 481h0M958 528h0M1031 480h0M1020 482h0M932 505h0M931 517h0M976 528h0M1009 514h0M912 520h0M1001 476h0M954 499h0M937 500h0M966 515h0M913 508h0M957 530h0M1015 491h0M946 490h0M970 491h0M982 492h0M966 524h0M1017 518h0M984 493h0M1020 506h0M923 508h0M960 529h0M958 522h0M956 474h0M921 510h0M937 531h0M967 493h0M928 510h0M978 518h0M976 482h0M1004 531h0M916 507h0M934 508h0M925 494h0M962 490h0M946 492h0M998 501h0M1021 524h0M969 496h0M961 493h0M980 485h0M961 496h0M906 526h0M993 497h0M963 481h0M936 504h0M1003 524h0M924 507h0M957 497h0M961 504h0M979 508h0M966 492h0M942 502h0M961 506h0M1005 513h0M983 488h0M964 485h0M990 518h0M921 497h0M916 510h0M973 530h0M920 517h0M930 512h0M956 520h0M916 499h0M926 499h0M970 524h0M919 505h0M930 506h0M975 476h0M952 487h0M960 492h0M990 502h0M914 496h0M953 513h0M936 497h0M956 530h0M977 520h0M963 502h0M933 514h0M1007 507h0M995 519h0M917 514h0M967 494h0M963 521h0M1003 523h0M937 505h0M915 489h0M931 525h0M974 483h0M915 527h0M922 493h0M1018 502h0M1002 525h0M1019 536h0M914 508h0M999 489h0M908 491h0M1020 518h0M961 529h0M975 486h0M992 493h0M911 514h0M982 474h0M976 523h0M1020 490h0M999 478h0M923 514h0M929 503h0M925 538h0M962 511h0M959 497h0M957 495h0M951 531h0M935 485h0M1004 498h0M927 512h0M925 499h0M1011 518h0M957 495h0M939 496h0M1004 499h0M949 484h0M904 523h0M944 525h0M955 475h0M920 532h0M921 501h0M1010 515h0M965 483h0M974 475h0M961 523h0M1011 476h0M991 527h0M1014 528h0M947 510h0M936 498h0M924 537h0M997 511h0M979 512h0M969 490h0M913 513h0M1029 523h0M917 510h0M953 520h0M1017 521h0M949 529h0M964 503h0M935 517h0M942 509h0M934 510h0M924 508h0M930 484h0M965 514h0M987 490h0M953 464h0M991 488h0M915 529h0M938 502h0M949 478h0M965 491h0M933 488h0M980 477h0M1036 491h0M955 514h0M977 523h0M937 479h0M922 507h0M961 520h0M967 507h0M954 484h0M983 525h0M1012 500h0M1036 509h0M963 491h0M904 486h0M968 522h0M988 531h0M945 489h0M940 504h0M926 506h0M1034 480h0M983 498h0M990 502h0M944 487h0M994 469h0M971 481h0M924 518h0M972 519h0M1027 517h0M1012 510h0M970 488h0M979 540h0M1011 506h0M926 495h0M974 486h0M997 507h0M940 499h0M963 506h0M967 494h0M1015 517h0M934 511h0M965 483h0M965 496h0M977 490h0M986 498h0M994 506h0M978 474h0M972 514h0M947 522h0M1022 511h0M984 491h0M958 513h0M1007 490h0M1034 495h0M959 516h0M945 497h0M922 496h0M975 483h0M980 519h0M957 522h0M916 503h0M942 517h0M968 479h0M964 497h0M948 484h0M962 495h0M970 501h0M990 520h0M969 519h0M1020 507h0M1011 506h0M989 512h0M1014 505h0M938 500h0M936 488h0M1023 518h0M989 524h0M1000 470h0M946 512h0M995 497h0M994 510h0M1020 516h0M953 515h0M979 476h0M1033 491h0M934 504h0M1002 514h0M1001 524h0M969 504h0M917 514h0M941 502h0M924 509h0M993 526h0M963 503h0M952 533h0M943 482h0M1006 479h0M982 504h0M916 534h0M977 504h0M1010 515h0M985 503h0M939 480h0M970 525h0M1003 518h0M964 488h0M1018 474h0M932 474h0M935 515h0M994 510h0M1025 481h0M923 513h0M1004 476h0M945 525h0M1024 514h0M978 476h0M965 490h0M931 516h0M985 504h0M969 517h0M958 512h0M1006 528h0M972 522h0" stroke="#2f4a2a" stroke-width="2.8" stroke-linecap="round"/>
<path d="M935 501h0M1016 501h0M971 484h0M1014 503h0M972 479h0M994 502h0M1025 476h0M966 475h0M955 449h0M917 492h0M985 505h0M1012 502h0M955 500h0M959 497h0M1009 488h0M921 479h0M1006 506h0M989 473h0M947 474h0M940 486h0M1034 488h0M990 485h0M999 511h0M1036 476h0M953 487h0M936 477h0M998 476h0M935 507h0M985 497h0M937 499h0M1013 508h0M999 502h0M987 490h0M949 511h0M945 487h0M976 461h0M898 482h0M1010 462h0M963 480h0M983 506h0M1007 460h0M973 499h0M982 509h0M964 462h0M991 492h0M1000 470h0M943 479h0M959 480h0M963 480h0M954 486h0M926 503h0M1001 501h0M976 489h0M907 478h0M979 465h0M995 496h0M957 488h0M968 468h0M912 482h0M999 477h0M970 473h0M1001 467h0M1031 473h0M975 465h0M1008 473h0M975 471h0M954 509h0M1036 489h0M971 473h0M1038 493h0M929 510h0M990 474h0M948 498h0M1016 468h0M947 454h0M980 494h0M1005 461h0M1018 493h0M949 494h0M928 485h0M948 475h0M986 497h0M976 470h0M967 478h0M927 501h0M939 498h0M978 491h0M964 493h0M1002 479h0M904 482h0M1016 496h0M982 474h0M1021 470h0M1002 470h0M945 457h0M939 477h0M987 473h0M1017 496h0M950 504h0M966 477h0M948 485h0M998 506h0M973 494h0M928 481h0M990 472h0M999 515h0M923 494h0M935 466h0M922 506h0M958 472h0M967 504h0M971 486h0M945 461h0M982 496h0M996 513h0M962 498h0M946 465h0M911 505h0M940 513h0M977 493h0M1011 508h0M1003 495h0M1017 507h0M1000 470h0M978 515h0M965 465h0M944 489h0M965 490h0M950 490h0M917 501h0M914 472h0M906 492h0M926 486h0M982 491h0M954 497h0M924 486h0M949 473h0M945 496h0M926 488h0M973 494h0M916 488h0M980 459h0M919 505h0M975 451h0M965 485h0M1000 511h0M955 480h0M960 490h0M977 499h0M1004 478h0M973 467h0M917 485h0M989 502h0M933 484h0M968 480h0M996 465h0M1013 506h0M980 481h0M932 492h0M976 497h0M980 474h0M1008 498h0M961 480h0M977 501h0M953 458h0M939 501h0M957 471h0M1008 481h0M1000 463h0M934 503h0M960 484h0M946 465h0M931 487h0M947 455h0M925 491h0M956 491h0M986 471h0M939 503h0M1024 490h0M957 478h0M948 474h0M924 506h0M1012 503h0M971 464h0M998 456h0M977 480h0M983 502h0M954 474h0M969 498h0M959 489h0M925 504h0M919 473h0M986 472h0M907 482h0M1019 480h0M914 485h0M927 489h0M965 519h0M952 485h0M964 503h0M1003 511h0M945 462h0M966 492h0M963 474h0M946 464h0M998 494h0M991 476h0M936 497h0M963 468h0M953 499h0M939 488h0M938 496h0M974 465h0M929 491h0M933 508h0M955 486h0M949 492h0M971 497h0M968 482h0M965 477h0M956 460h0M1000 478h0M920 507h0M988 508h0M979 488h0M933 489h0M962 477h0M920 501h0M968 481h0M950 457h0M995 468h0M994 470h0M974 485h0M964 490h0M970 496h0M966 469h0M928 488h0M975 479h0M965 501h0M961 482h0M979 459h0M1005 498h0M937 480h0M1015 488h0M975 471h0M996 462h0M964 481h0M959 485h0M961 474h0M963 470h0M965 491h0M967 478h0M945 467h0M960 505h0M1027 486h0M959 458h0M922 483h0M926 496h0M957 500h0M1031 481h0M977 505h0M1013 503h0M983 502h0M909 494h0M929 491h0M985 483h0M947 488h0M982 500h0M913 493h0M1023 485h0M997 495h0M944 503h0M979 468h0M951 453h0M978 458h0M976 498h0M1022 476h0M968 465h0" stroke="#416b3a" stroke-width="2.7" stroke-linecap="round"/>
<path d="M955 472h0M965 477h0M969 468h0M921 477h0M1011 482h0M945 456h0M1034 472h0M933 471h0M977 466h0M937 473h0M977 461h0M954 467h0M1014 464h0M947 475h0M955 459h0M977 483h0M1006 461h0M975 477h0M983 456h0M944 483h0M964 469h0M940 471h0M991 456h0M957 443h0M962 471h0M1002 459h0M955 460h0M1001 459h0M954 451h0M1008 461h0M975 481h0M952 452h0M969 473h0M932 470h0M944 447h0M938 466h0M981 452h0M967 471h0M960 463h0M948 464h0M948 461h0M946 458h0M958 474h0M944 468h0M955 473h0M936 467h0M978 472h0M929 483h0M1006 478h0M998 457h0M962 464h0M969 473h0M976 463h0M938 466h0M991 452h0M1005 458h0M953 459h0M963 480h0M931 480h0M1004 455h0M975 455h0M969 462h0M992 462h0M962 475h0M1024 475h0M957 462h0M955 469h0M1011 464h0M931 467h0M967 469h0M958 459h0M1001 459h0M914 474h0M1039 476h0M975 486h0M953 450h0M964 451h0M1021 475h0M970 483h0M934 475h0M951 470h0M972 483h0M978 460h0M973 466h0M931 480h0M996 454h0M935 465h0M986 475h0M962 476h0M964 477h0M1038 480h0M974 465h0M1011 477h0M952 467h0M930 484h0M993 468h0M961 473h0M952 451h0M953 461h0M947 475h0M1007 460h0M968 468h0M949 457h0M920 476h0M969 451h0M1010 467h0M958 473h0M972 449h0M1007 477h0M960 457h0M963 471h0M968 474h0M1005 461h0M951 473h0M966 477h0M995 475h0M1000 455h0M977 482h0M962 469h0M955 460h0M998 477h0M955 452h0M964 468h0M935 477h0M956 457h0M995 448h0M959 460h0M949 467h0M984 480h0M994 472h0M987 447h0M931 479h0M946 477h0M939 477h0M957 457h0M962 456h0M959 478h0M999 466h0M930 483h0M994 461h0M984 457h0M948 466h0M961 479h0M972 435h0M967 484h0M956 452h0M967 468h0M951 461h0M936 464h0M946 475h0M1003 455h0M922 471h0M957 466h0M971 477h0M978 451h0M949 466h0M982 463h0M951 452h0M940 475h0M948 451h0M961 477h0M980 463h0M1000 452h0M1020 478h0M960 458h0M954 454h0M966 476h0M1018 461h0M1003 462h0M1017 460h0M934 493h0M983 473h0M957 459h0M972 479h0M960 462h0M968 472h0M987 464h0M956 454h0M1023 470h0M988 487h0M1001 463h0M951 481h0" stroke="#548c4a" stroke-width="2.3" stroke-linecap="round"/>
<path d="M522,513 C522,509 525,508 527,508 C530,508 532,510 532,514 L533,527 L531,528 L530,548 L528,549 L527,532 L526,549 L524,548 L523,528 L521,527 Z" fill="#d9c1a6"/>
<path d="M523,527 L531,527 L530,548 L528,549 L527,532 L526,549 L524,548 Z" fill="#4a4a52"/><circle cx="527" cy="506" r="2.6" fill="#9a6a4a"/>
<path d="M530,507 C530,504 536,504 536,508 L537,522 L535,522 L534,538 L532,538 L531,522 Z" fill="#b89070"/><circle cx="533" cy="502.5" r="2.3" fill="#a0603a"/><rect x="531" y="516" width="4" height="7" fill="#2a2a30"/>
<path d="M823,590 C823,586 833,586 833,590 L833.5,603 L831.5,603 L831,619 L828.5,619 L828,606 L827.5,619 L825,619 L824.5,603 L822.5,603 Z" fill="#1c1c20"/><circle cx="828" cy="584.5" r="2.6" fill="#5a3a2a"/><rect x="827" y="589" width="2" height="6" fill="#e8e8e8"/>
<path d="M845,607 C847,599 858,594 872,594 C886,594 896,598 903,607 C909,614 913,622 914,630 C914,637 908,641 898,642 C888,643 880,642 874,640 C866,636 856,628 850,622 C846,618 844,612 845,607 Z" fill="#e6dc56" />
<path d="M880,604 C888,602 896,602 899,604 L905,617 C898,620 890,622 884,622 Z" fill="#6a6a62" />
<path d="M856,603 C862,599 870,597 876,598 L881,616 C875,618 869,620 866,620 Z" fill="#3e3e34" />
<path d="M846,610 C850,606 855,604 858,604 L862,620 C856,620 850,616 846,612 Z" fill="#d8ce4a" />
<ellipse cx="850" cy="617" rx="3.2" ry="5.2" fill="#2a2a2a"/><ellipse cx="876" cy="638" rx="3.5" ry="5.5" fill="#2a2a2a"/>
<circle cx="886" cy="632" r="2" fill="#d03a30"/><circle cx="910" cy="626" r="1.8" fill="#d03a30"/>
</g>
<path fill-rule="evenodd" d="M1144.4,263.4a50,23.5 0 1 0 100,0a50,23.5 0 1 0 -100,0ZM1154.8,263.4a39.6,17 0 1 0 79.2,0a39.6,17 0 1 0 -79.2,0Z" fill="#6f777d"/>
<polygon points="1168.0,223.0 1189.0,212.0 1219.5,219.0 1219.0,254.0 1200.7,267.2 1168.0,257.0" fill="#9a9fa3" />
<polygon points="1168.0,223.0 1189.0,212.0 1219.5,219.0 1199.0,232.0" fill="#a2a7ab" />
<polygon points="1199.0,232.0 1219.5,219.0 1219.0,254.0 1200.7,267.2" fill="#8e9397" />
<text x="1170" y="246" font-size="10" fill="#60666a" font-family="Liberation Sans" transform="rotate(14 1170 246)" textLength="30">Спереди</text>
<text x="1205" y="248" font-size="8" fill="#60666a" font-family="Liberation Sans" transform="rotate(-40 1205 248)">Спр</text>
<text x="1154" y="250" font-size="8" fill="#c8ccd0" font-family="Liberation Sans" transform="rotate(-60 1157 247)">З</text><text x="1232" y="273" font-size="9" fill="#c8ccd0" font-family="Liberation Sans" transform="rotate(-30 1236 270)">В</text><text x="1158" y="284" font-size="10" fill="#c8ccd0" font-family="Liberation Sans" transform="rotate(-25 1165 280)">Ю</text>
<rect x="1237.5" y="302" width="26" height="94" rx="3" fill="#6b7176"/>
<circle cx="1250.5" cy="326" r="9" fill="#b4b8bc"/><circle cx="1250.5" cy="326" r="5.5" fill="#9a9ea2" stroke="#d0d4d8" stroke-width="1"/><circle cx="1250.5" cy="326" r="2.5" fill="#b8bcc0"/>
<circle cx="1258" cy="306" r="2.5" fill="#4a4e52"/><circle cx="1258" cy="391" r="3" fill="#4a4e52"/>
<rect x="1241" y="348" width="18" height="1" fill="#80868a"/><rect x="1249" y="362" width="5" height="5" fill="#c8ccd0"/><circle cx="1250" cy="343" r="1" fill="#9a9ea2"/><circle cx="1250" cy="378" r="1" fill="#9a9ea2"/>
</svg>
<svg style="left:2px;top:2px" width="18" height="18" viewBox="0 0 18 18"><rect x="0.5" y="0" width="17" height="18" rx="1.5" fill="#1b6ef3"/><rect x="0.5" y="13" width="17" height="5" fill="#0b3eb2"/><rect x="0.5" y="0" width="2" height="14" fill="#3b8cff"/><text x="5.5" y="11.5" font-family="Liberation Sans" font-weight="bold" font-size="10.5" fill="#fff">R</text></svg>
<svg style="left:25px;top:5px" width="13" height="12" viewBox="0 0 13 12"><rect x="0.75" y="0.75" width="11.5" height="10.5" fill="#f2f2f2" stroke="#6e6e6e" stroke-width="1.5"/><rect x="0" y="0" width="13" height="2.5" fill="#6e6e6e"/><rect x="3" y="4" width="1.6" height="6" fill="#6e6e6e"/><rect x="6" y="4" width="4.5" height="6" fill="#9a9a9a"/></svg>
<svg style="left:50px;top:5px" width="14" height="11" viewBox="0 0 14 11"><path d="M1 1H5L6.5 2.5H11V4.5H3.5L1 10Z" fill="#f0f0f0" stroke="#6e6e6e" stroke-width="1.2"/><path d="M3.5 4.5H13.5L11 10H1Z" fill="#fafafa" stroke="#6e6e6e" stroke-width="1.2"/></svg>
<svg style="left:71px;top:5px" width="12" height="12" viewBox="0 0 12 12"><rect x="0" y="0" width="12" height="12" rx="1" fill="#4e4e4e"/><rect x="2.5" y="1.5" width="7" height="4" fill="#f4f4f4"/><rect x="2.5" y="8" width="7" height="3" fill="#dedede"/></svg>
<svg style="left:91px;top:4px" width="14" height="14" viewBox="0 0 14 14"><circle cx="5" cy="8" r="4" fill="#d0d0d0"/><circle cx="9" cy="5" r="3.5" fill="#c8c8c8"/><circle cx="9.5" cy="10" r="3" fill="#cfcfcf"/></svg>
<svg style="left:121px;top:6px" width="14" height="10" viewBox="0 0 14 10"><path d="M1 5L5.5 1V3.5H13V6.5H5.5V9Z" fill="none" stroke="#c4c4c4" stroke-width="1.2"/></svg>
<svg style="left:152px;top:6px" width="14" height="10" viewBox="0 0 14 10"><path d="M13 5L8.5 1V3.5H1V6.5H8.5V9Z" fill="none" stroke="#c4c4c4" stroke-width="1.2"/></svg>
<svg style="left:182px;top:4px" width="15" height="14" viewBox="0 0 15 14"><rect x="3" y="0.5" width="9" height="4" fill="#fff" stroke="#6e6e6e"/><rect x="0.5" y="4" width="14" height="6.5" rx="1" fill="#5a5a5a"/><rect x="3" y="8.5" width="9" height="5" fill="#fff" stroke="#6e6e6e"/><rect x="4" y="10.5" width="7" height="1.5" fill="#2ba6e8"/></svg>
<svg style="left:203px;top:4px" width="15" height="15" viewBox="0 0 15 15"><rect x="0.5" y="3" width="11" height="11.5" fill="#e84a3c"/><rect x="3" y="6.5" width="6" height="5" fill="#f7b0a8"/><path d="M6 5L11 1.5M8.5 1H12V4.5" stroke="#2a8fd8" stroke-width="1.6" fill="none"/></svg>
<div class="a" style="left:225px;top:3px;width:1px;height:17px;background:#c2c2c2"></div>
<svg style="left:226px;top:2px" width="22" height="19" viewBox="0 0 22 19"><rect x="0.5" y="0.5" width="21" height="18" fill="#cfe9f5" stroke="#5ec2ec"/><path d="M4 4V15M4 5.5H18M18 4V15" stroke="#666" stroke-width="1.3" fill="none"/><path d="M11 6V11M8 11H14L11 15Z" fill="#f2a31c" stroke="#f2a31c" stroke-width="1.5"/></svg>
<div class="a" style="left:253px;top:3px;width:1px;height:17px;background:#c2c2c2"></div>
<svg style="left:256px;top:6px" width="16" height="10" viewBox="0 0 16 10"><path d="M1 1V9M15 1V9" stroke="#6e6e6e" stroke-width="1.2"/><rect x="1" y="4" width="14" height="4" fill="#f0a020"/><rect x="1" y="2" width="14" height="1.5" fill="#8a6a20"/></svg>
<svg style="left:287px;top:3px" width="14" height="16" viewBox="0 0 14 16"><path d="M2 3L12 13" stroke="#2a8fd8" stroke-width="3" stroke-linecap="round"/><circle cx="2.5" cy="3" r="2" fill="#555"/><circle cx="12" cy="13" r="2" fill="#555"/></svg>
<svg style="left:306px;top:4px" width="12" height="14" viewBox="0 0 12 14"><circle cx="7" cy="6" r="4.5" fill="none" stroke="#6e6e6e" stroke-width="1.3"/><path d="M7 4V8" stroke="#6e6e6e" stroke-width="1.2"/><path d="M3.5 9.5L1 13" stroke="#6e6e6e" stroke-width="1.3"/></svg>
<div class="a t" style="left:329px;top:1px;font-size:19px;line-height:20px;color:#555;font-family:Liberation Sans">A</div>
<div class="a" style="left:348px;top:3px;width:1px;height:17px;background:#c2c2c2"></div>
<svg style="left:353px;top:4px" width="16" height="15" viewBox="0 0 16 15"><path d="M1 8L8 1L15 8" fill="none" stroke="#555" stroke-width="1.6"/><path d="M3 7V14H13V7L8 2.5Z" fill="#eaeaea" stroke="#666" stroke-width="1"/><rect x="6.5" y="9" width="3" height="5" fill="#f0b020"/></svg>
<svg style="left:384px;top:5px" width="13" height="13" viewBox="0 0 13 13"><path d="M6.5 1L11.5 6.5L6.5 12L1.5 6.5Z" fill="none" stroke="#c0c0c0" stroke-width="1.3"/><path d="M6.5 12V14" stroke="#c0c0c0"/></svg>
<svg style="left:402px;top:2px" width="22" height="19" viewBox="0 0 22 19"><rect x="0.5" y="0.5" width="21" height="18" fill="#cfe9f5" stroke="#5ec2ec"/><path d="M5 5H17M5 8H17M5 11H17M5 14H17" stroke="#555" stroke-width="1.2"/><path d="M14 3L8 16" stroke="#2a9ae0" stroke-width="1.6"/></svg>
<div class="a" style="left:426px;top:3px;width:1px;height:17px;background:#c2c2c2"></div>
<svg style="left:431px;top:5px" width="14" height="14" viewBox="0 0 14 14"><rect x="0.5" y="0.5" width="8" height="10" fill="none" stroke="#6e6e6e"/><rect x="3" y="3" width="8" height="10" fill="#eee" stroke="#6e6e6e"/><path d="M8 8L12.5 13M12.5 8L8 13" stroke="#e02020" stroke-width="1.6"/></svg>
<svg style="left:453px;top:7px" width="9" height="8" viewBox="0 0 9 8"><path d="M0 0L4 4L0 8ZM5 0L9 4L5 8Z" fill="#222"/></svg>
<svg style="left:974px;top:8px" width="5" height="7" viewBox="0 0 5 7"><path d="M4 0V7L0 3.5Z" fill="#333"/></svg>
<svg style="left:987px;top:5px" width="14" height="13" viewBox="0 0 14 13"><rect x="1" y="4" width="5" height="8.5" rx="1" fill="#3a3a3a"/><rect x="8" y="4" width="5" height="8.5" rx="1" fill="#3a3a3a"/><rect x="2" y="1" width="3" height="4" fill="#3a3a3a"/><rect x="9" y="1" width="3" height="4" fill="#3a3a3a"/><rect x="5" y="5" width="4" height="2.5" fill="#3a3a3a"/><rect x="2.2" y="7" width="2.5" height="4" fill="#ddd"/><rect x="9.2" y="7" width="2.5" height="4" fill="#ddd"/></svg>
<svg style="left:1008px;top:4px" width="14" height="15" viewBox="0 0 14 15"><circle cx="7" cy="5" r="3.8" fill="none" stroke="#555" stroke-width="1.3"/><path d="M1 14C1 10 4 9 7 9C10 9 13 10 13 14Z" fill="none" stroke="#555" stroke-width="1.3"/></svg>
<svg style="left:1111px;top:5px" width="16" height="13" viewBox="0 0 16 13"><path d="M0.5 1H3L5 9H13L14.5 3.5H4" fill="none" stroke="#2a78c8" stroke-width="1.5"/><circle cx="6" cy="11.5" r="1.3" fill="#2a78c8"/><circle cx="12" cy="11.5" r="1.3" fill="#2a78c8"/></svg>
<div class="a" style="left:1134px;top:3px;width:1px;height:17px;background:#c8c8c8"></div>
<svg style="left:1141px;top:4px" width="16" height="16" viewBox="0 0 16 16"><circle cx="8" cy="8" r="7" fill="#fff" stroke="#1e5fb0" stroke-width="1.5"/><text x="4.8" y="12.5" font-family="Liberation Sans" font-weight="bold" font-size="11" fill="#1e5fb0">?</text></svg>
<svg style="left:1222px;top:13px" width="9" height="3" viewBox="0 0 9 3"><rect width="8" height="2" fill="#333"/></svg>
<svg style="left:1242px;top:5px" width="11" height="11" viewBox="0 0 11 11"><rect x="0.75" y="3.5" width="7" height="6.5" fill="none" stroke="#333" stroke-width="1.5"/><path d="M3 3.5V0.75H10V7.5H7.5" fill="none" stroke="#333" stroke-width="1.5"/></svg>
<svg style="left:1265px;top:5px" width="11" height="11" viewBox="0 0 11 11"><path d="M1 1L10 10M10 1L1 10" stroke="#333" stroke-width="1.8"/></svg>
<svg style="left:18px;top:48px" width="22" height="30" viewBox="0 0 22 30"><path d="M2.5 2V22L7.5 17.5L11.5 26L14.5 24.5L10.5 16.5H18Z" fill="#f6f6f6" stroke="#7a7a7a" stroke-width="1.3" stroke-linejoin="round"/></svg>
<svg style="left:68px;top:49px" width="26" height="28" viewBox="0 0 26 28"><defs><linearGradient id="wg" x1="0" y1="0" x2="1" y2="1"><stop offset="0" stop-color="#f2f2f2"/><stop offset="1" stop-color="#c8c8c8"/></linearGradient></defs><path d="M1 3C5 0 9 0 13 5C16 8 20 8 24.5 7.5V24C20 26 15 27 12 25C8 23 4 22 1 20Z" fill="url(#wg)" stroke="#7d7d7d" stroke-width="1.3"/><path d="M1 3C4 6 9 6 13 10C16 12 20 11.5 24.5 10.5" fill="none" stroke="#d8d8d8"/></svg>
<svg style="left:110px;top:49px" width="22" height="28" viewBox="0 0 22 28"><rect x="1" y="1" width="20" height="21" fill="#8c8c8c" stroke="#777"/><path d="M1 1L12 4V27L1 23Z" fill="#ececec" stroke="#777" stroke-width="1.2"/><circle cx="10" cy="15" r="0.9" fill="#777"/></svg>
<svg style="left:142px;top:49px" width="14" height="14" viewBox="0 0 14 14"><rect x="1" y="1" width="12" height="11" fill="#ddd" stroke="#6e6e6e" stroke-width="1.3"/><path d="M7 1V12M1 6.5H13" stroke="#6e6e6e" stroke-width="1.3"/><rect x="0" y="11.5" width="14" height="2" fill="#6e6e6e"/></svg>
<svg style="left:142px;top:70px" width="14" height="14" viewBox="0 0 14 14"><path d="M1 5L4 2H13V9L10 12H1Z" fill="#e2e2e2" stroke="#6e6e6e" stroke-width="1.2"/><path d="M1 5H9V12M9 5L13 2" fill="none" stroke="#6e6e6e" stroke-width="1.1"/></svg>
<svg style="left:145px;top:90px" width="9" height="15" viewBox="0 0 9 15"><rect x="1" y="1" width="7" height="13" rx="2.5" fill="#ececec" stroke="#6e6e6e" stroke-width="1.2"/></svg>
<svg style="left:230px;top:49px" width="16" height="15" viewBox="0 0 16 15"><path d="M1 1H15V8H8V14H1Z" fill="#e4e4e4" stroke="#6e6e6e" stroke-width="1.3"/></svg>
<svg style="left:230px;top:70px" width="16" height="14" viewBox="0 0 16 14"><path d="M1 8L4 1H15L12 8Z" fill="#1ea0e6" stroke="#6e6e6e" stroke-width="0.8"/><path d="M1 8V13L4 10H12V8" fill="#bbb" stroke="#6e6e6e" stroke-width="1"/><circle cx="9" cy="4.5" r="1.5" fill="#fff"/></svg>
<svg style="left:230px;top:91px" width="16" height="15" viewBox="0 0 16 15"><path d="M1 6L4 1H15V7L12 10H1Z" fill="#d0d0d0" stroke="#888" stroke-width="1"/><path d="M1 9L4 6H15V11L12 14H1Z" fill="#1ea6ee"/><ellipse cx="8" cy="10" rx="3" ry="1.5" fill="none" stroke="#fff" stroke-width="1"/></svg>
<svg style="left:348px;top:49px" width="15" height="15" viewBox="0 0 15 15"><path d="M1 2L3 0.5H14V12L12 14.5H1Z" fill="#1b98e0"/><path d="M4 1V14M8 1V14M1 5H12M1 9H12" stroke="#8fd3f7" stroke-width="0.9"/><path d="M12 1V14.5" stroke="#888" stroke-width="1"/></svg>
<svg style="left:348px;top:70px" width="15" height="14" viewBox="0 0 15 14"><rect x="1" y="1" width="13" height="12" fill="#fff" stroke="#888" stroke-width="1.2"/><path d="M7.5 1V13M1 5H14M1 9H14" stroke="#1ea0e6" stroke-width="1.4"/></svg>
<svg style="left:348px;top:91px" width="15" height="14" viewBox="0 0 15 14"><rect x="1" y="1" width="13" height="12" fill="#2f9fde" stroke="#666" stroke-width="1"/><path d="M7.5 1V13M1 5H14M1 9H14" stroke="#1a5f90" stroke-width="1.6"/><rect x="2.5" y="2" width="3.5" height="2" fill="#9bd6f7"/><rect x="9" y="6" width="3.5" height="2" fill="#9bd6f7"/></svg>
<svg style="left:483px;top:49px" width="15" height="14" viewBox="0 0 15 14"><path d="M1 2H14M1 11H14" stroke="#1e8fd8" stroke-width="2"/><path d="M2 2V11M5 2V11M8 2V11M11 2V11M14 2V11" stroke="#1ea6ee" stroke-width="1.5"/><path d="M1 7H14" stroke="#7fd0f7"/><rect x="0" y="12" width="15" height="2" fill="#999"/></svg>
<svg style="left:484px;top:72px" width="14" height="11" viewBox="0 0 14 11"><path d="M1 10L4 4L11 1H13V9L10 10Z" fill="#ececec" stroke="#6e6e6e" stroke-width="1.2"/></svg>
<svg style="left:484px;top:91px" width="14" height="14" viewBox="0 0 14 14"><path d="M3 2L12 6L11 13L2 9Z" fill="#e8e8e8" stroke="#6e6e6e" stroke-width="1.2" transform="rotate(-10 7 7)"/><path d="M3 2C1 4 1 7 2 9" fill="none" stroke="#6e6e6e"/></svg>
<svg style="left:583px;top:49px" width="15" height="15" viewBox="0 0 15 15"><path d="M1 14L6 1H9L14 14H11L9.5 10H5.5L4 14Z" fill="#cfcfcf" stroke="#7a7a7a" stroke-width="1.1"/><path d="M6 8L7.5 3.5L9 8Z" fill="#f2f2f2"/></svg>
<svg style="left:583px;top:70px" width="15" height="15" viewBox="0 0 15 15"><path d="M3 1V13M5 1C6 7 9 10 13 13" fill="none" stroke="#6e6e6e" stroke-width="1.2" stroke-dasharray="2 1"/><circle cx="3" cy="1.5" r="1.2" fill="#6e6e6e"/><circle cx="13" cy="13" r="1.2" fill="#6e6e6e"/></svg>
<svg style="left:583px;top:91px" width="15" height="15" viewBox="0 0 15 15"><path d="M3 1H1V14H3M12 1H14V14H12" fill="none" stroke="#6e6e6e" stroke-width="1.3"/><rect x="4" y="4" width="7" height="8" rx="1" fill="#eee" stroke="#6e6e6e" stroke-width="1.2"/><rect x="3" y="3" width="5" height="5" fill="none" stroke="#6e6e6e" stroke-width="1"/></svg>
<svg style="left:693px;top:49px" width="15" height="15" viewBox="0 0 15 15"><rect x="1" y="1" width="13" height="13" fill="#e6e6e6" stroke="#d4d4d4" stroke-width="1.2"/><path d="M3 4H12M3 8H12" stroke="#d0d0d0" stroke-width="2"/></svg>
<svg style="left:693px;top:70px" width="16" height="15" viewBox="0 0 16 15"><rect x="1" y="1" width="12" height="12" fill="#ececec" stroke="#555" stroke-width="1.3"/><rect x="2" y="2" width="10" height="3" fill="#1ea6ee"/><path d="M6 13L13 6L15 8L8 15Z" fill="#f2b41c"/><path d="M13 6L15 8L16 6.5L14.5 5Z" fill="#e8302a"/></svg>
<svg style="left:693px;top:91px" width="16" height="15" viewBox="0 0 16 15"><rect x="1" y="1" width="12" height="12" fill="#ececec" stroke="#555" stroke-width="1.3"/><rect x="2" y="2" width="10" height="3" fill="#1ea6ee"/><rect x="2" y="5" width="3" height="8" fill="#1ea6ee"/><rect x="8" y="9" width="7" height="6" fill="#fff" stroke="#555"/></svg>
<svg style="left:834px;top:49px" width="15" height="14" viewBox="0 0 15 14"><rect x="0.5" y="0.5" width="14" height="13" fill="#f3c15c" stroke="#d49a30"/><path d="M1 1L14 13M14 1L1 13" stroke="#b07820" stroke-width="1"/></svg>
<svg style="left:834px;top:70px" width="15" height="14" viewBox="0 0 15 14"><rect x="0.5" y="0.5" width="14" height="13" fill="#e8e8e8" stroke="#d8d8d8"/><path d="M1 1L14 13M14 1L1 13" stroke="#d0d0d0"/></svg>
<svg style="left:834px;top:91px" width="16" height="15" viewBox="0 0 16 15"><rect x="0.5" y="0.5" width="14" height="13" fill="#f3c15c" stroke="#d49a30"/><path d="M1 1L14 13M14 1L1 13" stroke="#b07820" stroke-width="1"/><circle cx="11.5" cy="11.5" r="3.5" fill="#ddd" stroke="#666"/></svg>
<svg style="left:936px;top:50px" width="26" height="26" viewBox="0 0 26 26"><path d="M1 18L10 10L14 14L5 23Z" fill="#b4b4b4" stroke="#8a8a8a" stroke-width="0.9"/><path d="M3 19L8 24M5 17L10 22M7 15L12 20" stroke="#888" stroke-width="0.7"/><path d="M13 8L21 1L25 4.5L17 12Z" fill="#b4b4b4" stroke="#8a8a8a" stroke-width="0.9"/><path d="M16 6L20 10M18 4L22 8" stroke="#888" stroke-width="0.7"/><path d="M2.5 2.5L21 21" stroke="#1ea0e6" stroke-width="1.7"/><circle cx="2.5" cy="2.5" r="1.8" fill="#1ea0e6"/><path d="M17 23H23V17Z" fill="#1ea0e6"/></svg>
<svg style="left:969px;top:48px" width="27" height="29" viewBox="0 0 27 29"><rect x="1" y="8" width="8" height="6" fill="#aaa" stroke="#777"/><rect x="18" y="8" width="8" height="6" fill="#aaa" stroke="#777"/><rect x="1" y="17" width="8" height="6" fill="#aaa" stroke="#777"/><rect x="18" y="17" width="8" height="6" fill="#aaa" stroke="#777"/><path d="M1 15.5H26" stroke="#999"/><path d="M13.5 3V26" stroke="#1ea0e6" stroke-width="1.6"/><path d="M10.5 5L13.5 0.5L16.5 5ZM10.5 24L13.5 28.5L16.5 24Z" fill="#1ea0e6"/></svg>
<svg style="left:1003px;top:50px" width="15" height="14" viewBox="0 0 15 14"><path d="M1 7H14" stroke="#1ea0e6" stroke-width="1.5"/><path d="M1 7L3.5 5V9ZM14 7L11.5 5V9Z" fill="#1ea0e6"/><rect x="5" y="1" width="5" height="4" fill="#888"/><rect x="5" y="9" width="5" height="4" fill="#888"/></svg>
<svg style="left:1003px;top:70px" width="15" height="15" viewBox="0 0 15 15"><path d="M1 3L5 5V9L1 7ZM9 7L13 9V13L9 11Z" fill="#999" stroke="#666" stroke-width="0.8"/><path d="M7 1V14" stroke="#1ea0e6" stroke-width="1.5"/><path d="M5 3L7 0.5L9 3ZM5 12L7 14.5L9 12Z" fill="#1ea0e6"/></svg>
<svg style="left:1003px;top:91px" width="15" height="15" viewBox="0 0 15 15"><path d="M2 14V6H8V2H14" fill="none" stroke="#1ea0e6" stroke-width="1.6"/><path d="M4 14L10 4H14" fill="none" stroke="#bbb" stroke-width="2"/></svg>
<svg style="left:1104px;top:61px" width="16" height="12" viewBox="0 0 16 12"><path d="M1 6H5M3 4V8" stroke="#ccc" stroke-width="1.2"/><path d="M10 1L15 6L10 11L5 6Z" fill="#d4d4d4"/></svg>
<svg style="left:1104px;top:81px" width="15" height="13" viewBox="0 0 15 13"><circle cx="4" cy="3" r="2.5" fill="none" stroke="#d0d0d0"/><circle cx="11" cy="3" r="2.5" fill="none" stroke="#d0d0d0"/><circle cx="2.5" cy="10" r="2" fill="none" stroke="#d0d0d0"/><path d="M4 5V13M11 5V13M1 8H15M1 11H15" stroke="#d0d0d0"/></svg>
<svg style="left:1195px;top:48px" width="28" height="28" viewBox="0 0 28 28"><path d="M1 9L3 7V26L1 24Z" fill="#ddd" stroke="#888" stroke-width="0.8"/><path d="M3 7L27 0.5V19L3 27Z" fill="#2aa0e6"/><path d="M3 13.5L27 7M3 20L27 13M11 5V25M19 3V22" stroke="#9bd6f7" stroke-width="1.2"/><path d="M3 7L27 0.5V19L3 27Z" fill="none" stroke="#1588d0" stroke-width="1"/></svg>
<svg style="left:1238px;top:49px" width="15" height="15" viewBox="0 0 15 15"><path d="M1 2H10M1 5.5H10M1 9H10M1 12.5H8M2 1V13M5.5 1V13M9 1V9" stroke="#555" stroke-width="1.1"/><circle cx="11" cy="10" r="3.2" fill="#f5b82a"/></svg>
<svg style="left:1238px;top:70px" width="15" height="15" viewBox="0 0 15 15"><path d="M4 2L13 1L11 12L2 13Z" fill="none" stroke="#d0d0d0" stroke-width="1.2" stroke-dasharray="2 1"/></svg>
<svg style="left:1238px;top:91px" width="15" height="15" viewBox="0 0 15 15"><rect x="0.75" y="0.75" width="13.5" height="13.5" fill="#fff" stroke="#444" stroke-width="1.5"/><rect x="0.75" y="0.75" width="13.5" height="2.5" fill="#444"/><path d="M3 10C3 6 7 4 12 5C12 9 9 12 4 12Z" fill="#21b35a"/></svg>
<svg style="left:1047px;top:27px" width="15" height="11" viewBox="0 0 15 11"><rect x="0.75" y="0.75" width="13.5" height="9.5" rx="2" fill="#fff" stroke="#333" stroke-width="1.3"/><path d="M4.5 6.5L7.5 3.5L10.5 6.5Z" fill="#333"/></svg>
<svg style="left:20px;top:181px" width="27" height="28" viewBox="0 0 27 28"><path d="M4 13V26H21V13L12.5 5Z" fill="#f2f2f2" stroke="#8a8a8a" stroke-width="1"/><path d="M21 13L26 10.5V23.5L21 26Z" fill="#a0a0a0"/><path d="M1 14L12.5 2L22 11.5L26 10L15.5 0.5H11Z" fill="#7a7a7a"/><path d="M1 14L12.5 2.5L23 13" fill="none" stroke="#7a7a7a" stroke-width="2.2"/><rect x="9" y="17" width="5.5" height="9" fill="#f5c02a" stroke="#a88610" stroke-width="0.6"/></svg>
<svg style="left:298px;top:192px" width="9" height="6" viewBox="0 0 9 6"><path d="M0 0H8L4 4Z" fill="#999"/></svg>
<svg style="left:218px;top:231px" width="9" height="6" viewBox="0 0 9 6"><path d="M1 1L4.5 4.5L8 1" fill="none" stroke="#777" stroke-width="1.2"/></svg>
<svg style="left:231px;top:229px" width="11" height="11" viewBox="0 0 11 11"><rect x="0.5" y="0.5" width="4.5" height="4.5" fill="none" stroke="#555"/><rect x="6" y="0.5" width="4.5" height="4.5" fill="none" stroke="#555"/><rect x="0.5" y="6" width="4.5" height="4.5" fill="none" stroke="#555"/><rect x="6" y="6" width="4.5" height="4.5" fill="#2a9ae0" stroke="#555"/></svg>
<svg style="left:288px;top:251px" width="6" height="5" viewBox="0 0 6 5"><path d="M0 4L3 1L6 4M0 2L3 -1L6 2" fill="none" stroke="#444" stroke-width="1"/></svg>
<svg style="left:301px;top:253px" width="10" height="6" viewBox="0 0 10 6"><path d="M1 5L5 1L9 5" fill="none" stroke="#888" stroke-width="1.2"/></svg>
<svg style="left:301px;top:411px" width="10" height="6" viewBox="0 0 10 6"><path d="M1 1L5 5L9 1" fill="none" stroke="#888" stroke-width="1.2"/></svg>
<svg style="left:5px;top:425px" width="13" height="13" viewBox="0 0 13 13"><path d="M1 2H8M1 5H8M1 8H8M1 11H8" stroke="#333" stroke-width="1.3"/><path d="M11 1V12M9 3L11 0.5L13 3M9 10L11 12.5L13 10" fill="none" stroke="#333" stroke-width="1.1"/></svg>
<svg style="left:24px;top:424px" width="14" height="16" viewBox="0 0 14 16"><text x="0" y="7" font-family="Liberation Sans" font-weight="bold" font-size="7.5" fill="#1ea0e6">A</text><text x="0.5" y="15" font-family="Liberation Sans" font-weight="bold" font-size="7.5" fill="#333">Z</text><path d="M11 1V14M9 12L11 15L13 12" fill="none" stroke="#333" stroke-width="1.2"/></svg>
<svg style="left:45px;top:424px" width="14" height="16" viewBox="0 0 14 16"><text x="0.5" y="7" font-family="Liberation Sans" font-weight="bold" font-size="7.5" fill="#333">Z</text><text x="0" y="15" font-family="Liberation Sans" font-weight="bold" font-size="7.5" fill="#1ea0e6">A</text><path d="M11 1V14M9 12L11 15L13 12" fill="none" stroke="#333" stroke-width="1.2"/></svg>
<svg style="left:303px;top:150px" width="10" height="10" viewBox="0 0 10 10"><path d="M1 1L9 9M9 1L1 9" stroke="#555" stroke-width="1.5"/></svg>
<svg style="left:303px;top:446px" width="10" height="10" viewBox="0 0 10 10"><path d="M1 1L9 9M9 1L1 9" stroke="#555" stroke-width="1.5"/></svg>
<svg style="left:15px;top:471px" width="15" height="15" viewBox="0 0 15 15"><circle cx="6" cy="6" r="4.5" fill="none" stroke="#666" stroke-width="1.5"/><path d="M9.5 9.5L13.5 13.5" stroke="#666" stroke-width="2"/></svg>
<div class="a" style="left:1264px;top:168px;width:16px;height:553px;background:#f0f0f0;border-left:1px solid #e2e2e2"></div>
<svg style="left:320px;top:152px" width="14" height="11" viewBox="0 0 14 11"><path d="M0.5 0.5H9.5L13.5 4V10.5H0.5Z" fill="#f2f2f2" stroke="#a8a8a8"/><path d="M9.5 0.5V4H13.5" fill="none" stroke="#a8a8a8"/></svg>
<svg style="left:527px;top:152px" width="14" height="11" viewBox="0 0 14 11"><path d="M0.5 0.5H9.5L13.5 4V10.5H0.5Z" fill="#f2f2f2" stroke="#a8a8a8"/><path d="M9.5 0.5V4H13.5" fill="none" stroke="#a8a8a8"/></svg>
<svg style="left:637px;top:152px" width="14" height="11" viewBox="0 0 14 11"><path d="M0.5 0.5H9.5L13.5 4V10.5H0.5Z" fill="#f2f2f2" stroke="#a8a8a8"/><path d="M9.5 0.5V4H13.5" fill="none" stroke="#a8a8a8"/></svg>
<svg style="left:757px;top:152px" width="14" height="11" viewBox="0 0 14 11"><path d="M0.5 0.5H9.5L13.5 4V10.5H0.5Z" fill="#f2f2f2" stroke="#a8a8a8"/><path d="M9.5 0.5V4H13.5" fill="none" stroke="#a8a8a8"/></svg>
<svg style="left:967px;top:151px" width="13" height="13" viewBox="0 0 13 13"><path d="M0.5 6.5L6.5 0.5L12.5 6.5" fill="#777" stroke="#666"/><path d="M2 6V12.5H11V6L6.5 2Z" fill="#f2f2f2" stroke="#777" stroke-width="0.8"/><rect x="5" y="8" width="3" height="4.5" fill="#f2b71a"/></svg>
<svg style="left:1060px;top:154px" width="9" height="9" viewBox="0 0 9 9"><path d="M1 1L8 8M8 1L1 8" stroke="#555" stroke-width="1.5"/></svg>
<svg style="left:1264px;top:153px" width="10" height="9" viewBox="0 0 10 9"><path d="M1 1H9" stroke="#777"/><path d="M1 4H9L5 8Z" fill="#777"/></svg>
<div class="a" style="left:1267px;top:172px;width:10px;height:545px;background:#f8f8f8"></div><div class="a" style="left:1270px;top:449px;width:5px;height:13px;background:#d4d4d4;border-radius:2px"></div>
<svg style="left:1267px;top:180px" width="10" height="6" viewBox="0 0 10 6"><path d="M1 5L5 1L9 5" fill="none" stroke="#888" stroke-width="1.2"/></svg>
<svg style="left:1267px;top:709px" width="10" height="6" viewBox="0 0 10 6"><path d="M1 1L5 5L9 1" fill="none" stroke="#888" stroke-width="1.2"/></svg>
<svg style="left:1257px;top:724px" width="6" height="10" viewBox="0 0 6 10"><path d="M1 1L5 5L1 9" fill="none" stroke="#888" stroke-width="1.2"/></svg>
<svg style="left:1270px;top:728px" width="8" height="7" viewBox="0 0 8 7"><circle cx="6" cy="1.5" r="1" fill="#888"/><circle cx="2" cy="5.5" r="1" fill="#888"/><circle cx="6" cy="5.5" r="1" fill="#888"/></svg>
<div class="a" style="left:9px;top:497px;width:0;height:236px;border-left:1px dotted #cfcfcf"></div>
<div class="a" style="left:9px;top:505px;width:9px;height:1px;background:#d8d8d8"></div>
<div class="a" style="left:19px;top:504px;width:7px;height:2px;background:#555"></div>
<div class="a" style="left:9px;top:591px;width:9px;height:1px;background:#d8d8d8"></div>
<div class="a" style="left:19px;top:590px;width:7px;height:2px;background:#555"></div><div class="a" style="left:21.5px;top:587.5px;width:2px;height:7px;background:#555"></div>
<div class="a" style="left:9px;top:608px;width:9px;height:1px;background:#d8d8d8"></div>
<div class="a" style="left:19px;top:607px;width:7px;height:2px;background:#555"></div>
<div class="a" style="left:9px;top:643px;width:9px;height:1px;background:#d8d8d8"></div>
<div class="a" style="left:19px;top:642px;width:7px;height:2px;background:#555"></div>
<div class="a" style="left:9px;top:729px;width:9px;height:1px;background:#d8d8d8"></div>
<div class="a" style="left:19px;top:728px;width:7px;height:2px;background:#555"></div>
<div class="a" style="left:22px;top:513px;width:1px;height:61px;background:#d8d8d8"></div>
<div class="a" style="left:22px;top:616px;width:1px;height:9px;background:#d8d8d8"></div>
<div class="a" style="left:22px;top:651px;width:1px;height:60px;background:#d8d8d8"></div>
<div class="a" style="left:22px;top:522px;width:22px;height:1px;background:#d8d8d8"></div>
<svg style="left:47px;top:515px" width="15" height="14" viewBox="0 0 15 14"><rect x="0.5" y="0.5" width="14" height="13" fill="#fff" stroke="#888" stroke-dasharray="1.5 1"/><rect x="2.5" y="2.5" width="10" height="9" fill="#f4f4f4" stroke="#9a9a9a" stroke-width="0.6"/></svg>
<div class="a" style="left:22px;top:539px;width:22px;height:1px;background:#d8d8d8"></div>
<svg style="left:47px;top:532px" width="15" height="14" viewBox="0 0 15 14"><rect x="0.5" y="0.5" width="14" height="13" fill="#fff" stroke="#888" stroke-dasharray="1.5 1"/><rect x="2.5" y="2.5" width="10" height="9" fill="#1ea8e2" stroke="#9a9a9a" stroke-width="0"/></svg>
<div class="a" style="left:22px;top:557px;width:22px;height:1px;background:#d8d8d8"></div>
<svg style="left:47px;top:550px" width="15" height="14" viewBox="0 0 15 14"><rect x="0.5" y="0.5" width="14" height="13" fill="#fff" stroke="#888" stroke-dasharray="1.5 1"/><rect x="2.5" y="2.5" width="10" height="9" fill="#1ea8e2" stroke="#9a9a9a" stroke-width="0"/></svg>
<div class="a" style="left:22px;top:574px;width:22px;height:1px;background:#d8d8d8"></div>
<svg style="left:47px;top:567px" width="15" height="14" viewBox="0 0 15 14"><rect x="0.5" y="0.5" width="14" height="13" fill="#fff" stroke="#888" stroke-dasharray="1.5 1"/><rect x="2.5" y="2.5" width="10" height="9" fill="#f4f4f4" stroke="#9a9a9a" stroke-width="0.6"/></svg>
<div class="a" style="left:22px;top:625px;width:22px;height:1px;background:#d8d8d8"></div>
<svg style="left:47px;top:618px" width="15" height="14" viewBox="0 0 15 14"><rect x="0.5" y="0.5" width="14" height="13" fill="#fff" stroke="#888" stroke-dasharray="1.5 1"/><rect x="2.5" y="2.5" width="10" height="9" fill="#1ea8e2" stroke="#9a9a9a" stroke-width="0"/></svg>
<div class="a" style="left:22px;top:660px;width:22px;height:1px;background:#d8d8d8"></div>
<svg style="left:47px;top:653px" width="15" height="14" viewBox="0 0 15 14"><rect x="0.5" y="0.5" width="14" height="13" fill="#fff" stroke="#888" stroke-dasharray="1.5 1"/><rect x="2.5" y="2.5" width="10" height="9" fill="#1ea8e2" stroke="#9a9a9a" stroke-width="0"/></svg>
<div class="a" style="left:22px;top:677px;width:22px;height:1px;background:#d8d8d8"></div>
<svg style="left:47px;top:670px" width="15" height="14" viewBox="0 0 15 14"><rect x="0.5" y="0.5" width="14" height="13" fill="#fff" stroke="#888" stroke-dasharray="1.5 1"/><rect x="2.5" y="2.5" width="10" height="9" fill="#f4f4f4" stroke="#9a9a9a" stroke-width="0.6"/></svg>
<div class="a" style="left:22px;top:694px;width:22px;height:1px;background:#d8d8d8"></div>
<svg style="left:47px;top:687px" width="15" height="14" viewBox="0 0 15 14"><rect x="0.5" y="0.5" width="14" height="13" fill="#fff" stroke="#888" stroke-dasharray="1.5 1"/><rect x="2.5" y="2.5" width="10" height="9" fill="#f4f4f4" stroke="#9a9a9a" stroke-width="0.6"/></svg>
<div class="a" style="left:22px;top:711px;width:22px;height:1px;background:#d8d8d8"></div>
<svg style="left:47px;top:704px" width="15" height="14" viewBox="0 0 15 14"><rect x="0.5" y="0.5" width="14" height="13" fill="#fff" stroke="#888" stroke-dasharray="1.5 1"/><rect x="2.5" y="2.5" width="10" height="9" fill="#1ea8e2" stroke="#9a9a9a" stroke-width="0"/></svg>
<svg style="left:300px;top:498px" width="11" height="7" viewBox="0 0 11 7"><path d="M1 6L5.5 1.5L10 6" fill="none" stroke="#999" stroke-width="1.2"/></svg>
<svg style="left:300px;top:727px" width="11" height="7" viewBox="0 0 11 7"><path d="M1 1L5.5 5.5L10 1" fill="none" stroke="#999" stroke-width="1.2"/></svg>
<svg style="left:388px;top:723px" width="14" height="11" viewBox="0 0 14 11"><rect x="0.75" y="0.75" width="12.5" height="9.5" fill="#fff" stroke="#777" stroke-width="1.5"/><rect x="3.5" y="3.5" width="7" height="4" fill="#888"/><path d="M0 5.5H3M11 5.5H14" stroke="#888" stroke-width="1.5"/></svg>
<svg style="left:410px;top:722px" width="13" height="13" viewBox="0 0 13 13"><path d="M1 3L4 0.5H12.5V10L10 12.5H1Z" fill="#2a9be6"/><rect x="3" y="5" width="5" height="2" fill="#e84a4a"/><rect x="3" y="8" width="5" height="2" fill="#3ab85a"/><path d="M1 3H10V12.5M10 3L12.5 0.5" fill="none" stroke="#7fd0f7" stroke-width="0.8"/></svg>
<svg style="left:431px;top:721px" width="16" height="15" viewBox="0 0 16 15"><circle cx="6" cy="6" r="3" fill="#f5a21c"/><path d="M6 0.5V2M6 10V11.5M0.5 6H2M10 6H11.5M2 2L3 3M9 9L10 10M10 2L9 3M2 10L3 9" stroke="#f5a21c" stroke-width="1"/><circle cx="11" cy="9" r="3.4" fill="#1fbcd2"/><rect x="10" y="12" width="2" height="2" fill="#555"/></svg>
<svg style="left:452px;top:721px" width="16" height="15" viewBox="0 0 16 15"><circle cx="6" cy="6" r="4.5" fill="none" stroke="#777" stroke-width="1.2"/><path d="M2 13H9" stroke="#aaa" stroke-width="1.2"/><circle cx="11" cy="9" r="3.4" fill="#1fbcd2"/><rect x="10" y="12" width="2" height="2" fill="#555"/></svg>
<svg style="left:475px;top:721px" width="16" height="15" viewBox="0 0 16 15"><path d="M1 3C3 2 5 1 7 2L11 4L13 3L11 6C10 8 7 9 4 8C2 7 1 5 1 3Z" fill="none" stroke="#777" stroke-width="1.1"/><circle cx="11" cy="9" r="3.4" fill="#1fbcd2"/><rect x="10" y="12" width="2" height="2" fill="#555"/></svg>
<svg style="left:496px;top:721px" width="15" height="15" viewBox="0 0 15 15"><path d="M4 2V12H12M1 4H10V14" fill="none" stroke="#555" stroke-width="1.6"/><path d="M11 0V3M0 9H3M8 9H11" stroke="#2a8ae0" stroke-width="1.6"/></svg>
<svg style="left:517px;top:721px" width="16" height="15" viewBox="0 0 16 15"><path d="M4 3V12M1 4H10" fill="none" stroke="#555" stroke-width="1.6"/><path d="M8 0V2M0 9H2" stroke="#2a8ae0" stroke-width="1.6"/><circle cx="12" cy="8" r="3.4" fill="#1fbcd2"/><rect x="11" y="11" width="2" height="2" fill="#555"/></svg>
<svg style="left:540px;top:721px" width="15" height="15" viewBox="0 0 15 15"><path d="M1 7L7 1L13 7M3 6V13H7" fill="none" stroke="#777" stroke-width="1.3"/><rect x="7" y="8" width="7" height="6" fill="#1fbcd2"/><path d="M9 8V6C9 4 12 4 12 6" fill="none" stroke="#1fbcd2" stroke-width="1.2"/></svg>
<svg style="left:562px;top:724px" width="13" height="8" viewBox="0 0 13 8"><circle cx="3.5" cy="5" r="2.6" fill="none" stroke="#777" stroke-width="1.3"/><circle cx="9.5" cy="5" r="2.6" fill="none" stroke="#777" stroke-width="1.3"/><path d="M5 2L8 0.5L12 1" fill="none" stroke="#777"/></svg>
<svg style="left:586px;top:721px" width="8" height="13" viewBox="0 0 8 13"><circle cx="4" cy="4.5" r="3.6" fill="#1fbcd2"/><rect x="2.5" y="8" width="3" height="3" fill="#555"/></svg>
<svg style="left:606px;top:721px" width="12" height="14" viewBox="0 0 12 14"><path d="M1 1H8L11 4V8M1 1V11H5" fill="none" stroke="#888" stroke-width="1.1" stroke-dasharray="2 1"/><path d="M7 12H11" stroke="#777" stroke-dasharray="1 1"/></svg>
<svg style="left:627px;top:721px" width="15" height="15" viewBox="0 0 15 15"><path d="M1 4L5 1H13V9M1 4V13M5 4V13" fill="none" stroke="#777" stroke-width="1"/><path d="M2 8H7M2 11H7" stroke="#e83030" stroke-width="1"/><path d="M4 7V13" stroke="#e83030"/><circle cx="11" cy="8" r="3.4" fill="#1fbcd2"/><rect x="10" y="11" width="2" height="2" fill="#555"/></svg>
<svg style="left:650px;top:722px" width="12" height="12" viewBox="0 0 12 12"><path d="M1 4L4 1H11V8L8 11H1Z" fill="#2a9be6"/><rect x="2" y="5" width="5" height="5" fill="#f2f2f2" stroke="#777" stroke-width="0.8"/></svg>
<svg style="left:670px;top:721px" width="16" height="15" viewBox="0 0 16 15"><path d="M1 2H13M1 2V9M13 2V5" fill="none" stroke="#777" stroke-width="1.1"/><path d="M1 12H5" stroke="#777" stroke-dasharray="1 1"/><circle cx="12" cy="8" r="3.4" fill="#1fbcd2"/><rect x="11" y="11" width="2" height="2" fill="#555"/></svg>
<div class="a" style="left:688px;top:721px;width:14px;height:15px;background:#e2e2e2"></div>
<svg style="left:692px;top:724px" width="6" height="10" viewBox="0 0 6 10"><path d="M5 1L1 5L5 9" fill="none" stroke="#777" stroke-width="1.3"/></svg>
<div class="a" style="left:968px;top:726px;width:16px;height:4px;background:#cfcfcf;border-radius:2px"></div>
<svg style="left:366px;top:741px" width="14" height="15" viewBox="0 0 14 15"><path d="M1 3L5 1V9L1 11Z" fill="#2a9be6"/><path d="M5 1L9 0V10L5 12Z" fill="#e88a5a"/><path d="M4 5L8 4V13L4 14Z" fill="#28b060"/><path d="M9 9L12 12L13 8" fill="none" stroke="#2a9be6" stroke-width="1.3"/></svg>
<svg style="left:550px;top:746px" width="9" height="6" viewBox="0 0 9 6"><path d="M1 1L4.5 4.5L8 1" fill="none" stroke="#c8c8c8" stroke-width="1.2"/></svg>
<svg style="left:566px;top:741px" width="16" height="15" viewBox="0 0 16 15"><rect x="6" y="0.5" width="7" height="5" fill="none" stroke="#bbb"/><path d="M1 14V9H6V14M3.5 9V5H9" fill="none" stroke="#bbb"/><text x="8" y="14" font-family="Liberation Sans" font-size="10" fill="#bbb">:0</text></svg>
<svg style="left:602px;top:741px" width="16" height="15" viewBox="0 0 16 15"><rect x="0.75" y="0.75" width="14.5" height="13.5" fill="#fff" stroke="#555" stroke-width="1.5"/><path d="M0.75 3.5H15.25M3 6.5H13M3 9H13M3 11.5H13" stroke="#555" stroke-width="1.1"/></svg>
<svg style="left:624px;top:741px" width="14" height="15" viewBox="0 0 14 15"><rect x="2.5" y="0.5" width="11" height="11" fill="#fff" stroke="#c0c0c0"/><path d="M4 3H12M4 5.5H12M4 8H12" stroke="#c0c0c0"/><path d="M0.5 9V14H6" fill="none" stroke="#c0c0c0"/></svg>
<svg style="left:1096px;top:740px" width="14" height="16" viewBox="0 0 14 16"><path d="M2 3C2 1 5 1 5 3V5C5 6 8 6 8 5V3C8 1 11 1 11 3" fill="none" stroke="#f0944a" stroke-width="1.5"/><path d="M5 5V14L7.5 11.5L9 14.5L10.5 14L9 11H12Z" fill="#fff" stroke="#444" stroke-width="0.9"/></svg>
<svg style="left:1116px;top:740px" width="16" height="16" viewBox="0 0 16 16"><path d="M1 7L5 3H9L5 7ZM1 10H7L5 12H1Z" fill="#2a9be6"/><path d="M9 1L13 5M13 1L9 5" stroke="#e83030" stroke-width="1.7"/><path d="M7 6V15L9.5 12.5L11 15.5L12.5 15L11 12H14Z" fill="#fff" stroke="#444" stroke-width="0.9"/></svg>
<svg style="left:1137px;top:740px" width="13" height="16" viewBox="0 0 13 16"><path d="M2 2H7V5H2ZM4.5 5V9M1 9H6" fill="none" stroke="#666" stroke-width="1.1"/><path d="M5 6V15L7.5 12.5L9 15.5L10.5 15L9 12H12Z" fill="#fff" stroke="#444" stroke-width="0.9"/></svg>
<svg style="left:1157px;top:740px" width="16" height="16" viewBox="0 0 16 16"><path d="M1 4L6 1V13L1 15Z" fill="#2a9be6"/><path d="M9 1L13 5M13 1L9 5" stroke="#e83030" stroke-width="1.7"/><path d="M7 6V15L9.5 12.5L11 15.5L12.5 15L11 12H14Z" fill="#fff" stroke="#444" stroke-width="0.9"/></svg>
<svg style="left:1178px;top:740px" width="14" height="16" viewBox="0 0 14 16"><path d="M6 1V13M1 5H10" stroke="#333" stroke-width="1.2"/><path d="M4 2.5L6 0.5L8 2.5M2.5 3L0.5 5L2.5 7" fill="none" stroke="#333"/><path d="M6 6V15L8.5 12.5L10 15.5L11.5 15L10 12H13Z" fill="#fff" stroke="#444" stroke-width="0.9"/></svg>
<svg style="left:1198px;top:741px" width="14" height="14" viewBox="0 0 14 14"><circle cx="12.5" cy="7.0" r="0.9" fill="#c8c8c8"/><circle cx="10.9" cy="10.9" r="0.9" fill="#c8c8c8"/><circle cx="7.0" cy="12.5" r="0.9" fill="#c8c8c8"/><circle cx="3.1" cy="10.9" r="0.9" fill="#c8c8c8"/><circle cx="1.5" cy="7.0" r="0.9" fill="#c8c8c8"/><circle cx="3.1" cy="3.1" r="0.9" fill="#c8c8c8"/><circle cx="7.0" cy="1.5" r="0.9" fill="#c8c8c8"/><circle cx="10.9" cy="3.1" r="0.9" fill="#c8c8c8"/></svg>
<svg style="left:1217px;top:741px" width="14" height="14" viewBox="0 0 14 14"><path d="M0.75 0.75H13.25L8.5 6V13H5.5V6Z" fill="#fff" stroke="#666" stroke-width="1.3"/><path d="M1 2H13" stroke="#666"/></svg>
</body></html>
